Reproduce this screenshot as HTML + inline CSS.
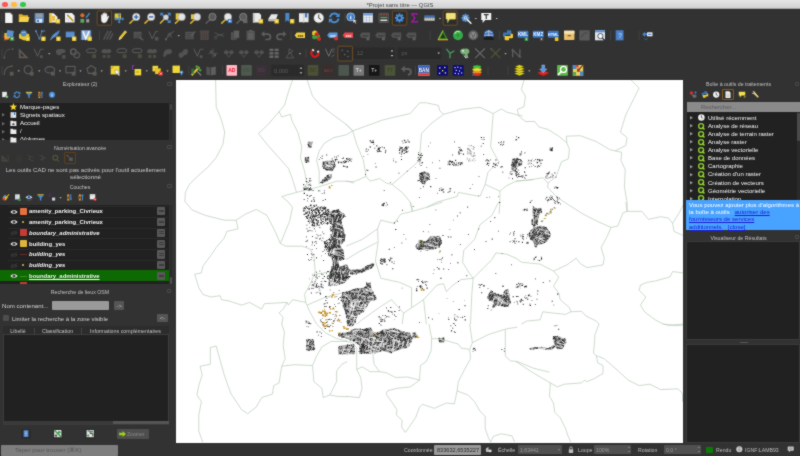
<!DOCTYPE html><html><head><meta charset="utf-8"><title>QGIS</title><style>
*{box-sizing:border-box;margin:0;padding:0}
html,body{width:800px;height:456px;overflow:hidden;background:#323232}
body{filter:url(#soft);position:relative;font-family:"Liberation Sans",sans-serif;font-size:7px;color:#bdbdbd;line-height:1}
.a{position:absolute}
.t{will-change:transform;position:absolute;white-space:nowrap;line-height:8px;height:8px}
.c{text-align:center}
.dk{background:#212121}
.ttl{color:#c2c2c2;font-size:5.25px}
.w{color:#f4f4f4}
.b{font-weight:bold}
.i{font-style:italic}
.btn{position:absolute;background:#555;border-radius:1px}
svg{position:absolute;overflow:visible}
</style></head><body>
<svg width="0" height="0" style="position:absolute"><filter id="soft" x="0" y="0" width="100%" height="100%" color-interpolation-filters="sRGB"><feConvolveMatrix order="3" kernelMatrix="1 2 1 2 16 2 1 2 1" divisor="28" edgeMode="duplicate" preserveAlpha="true"/></filter></svg>
<div class="a" style="left:0;top:0;width:800px;height:9px;background:linear-gradient(#e6e6e6,#d2d2d2);border-bottom:0.5px solid #a8a8a8"></div>
<div class="a" style="left:2.1px;top:1.7px;width:5.8px;height:5.8px;border-radius:50%;background:#fc5753"></div>
<div class="a" style="left:11.1px;top:1.7px;width:5.8px;height:5.8px;border-radius:50%;background:#fdbc40"></div>
<div class="a" style="left:20.1px;top:1.7px;width:5.8px;height:5.8px;border-radius:50%;background:#33c748"></div>
<div class="t c" style="left:300px;width:200px;top:0.6px;color:#444;font-size:5.9px">*Projet sans titre — QGIS</div>
<div class="t c ttl" style="left:0;width:160px;top:80px">Explorateur (2)</div>
<div class="a" style="left:167px;top:81.5px;width:4.5px;height:4.5px;border:0.7px solid #4a4a4a;border-radius:1px"></div>
<div class="a dk" style="left:0;top:102.5px;width:168.5px;height:37.5px;overflow:hidden">
<div class="t w" style="left:19.8px;top:0.5px;font-size:6.1px">Marque-pages</div>
<svg style="left:2.4px;top:10.899999999999999px" width="3" height="3.6" viewBox="0 0 3 3.6"><path d="M0 0L3 1.8L0 3.6Z" fill="#6e6e6e"/></svg>
<div class="t w" style="left:19.8px;top:8.6px;font-size:6.1px">Signets spatiaux</div>
<svg style="left:2.4px;top:19.0px" width="3" height="3.6" viewBox="0 0 3 3.6"><path d="M0 0L3 1.8L0 3.6Z" fill="#6e6e6e"/></svg>
<div class="t w" style="left:19.8px;top:16.7px;font-size:6.1px">Accueil</div>
<svg style="left:2.4px;top:27.099999999999998px" width="3" height="3.6" viewBox="0 0 3 3.6"><path d="M0 0L3 1.8L0 3.6Z" fill="#6e6e6e"/></svg>
<div class="t w" style="left:19.8px;top:24.799999999999997px;font-size:6.1px">/</div>
<svg style="left:2.4px;top:35.199999999999996px" width="3" height="3.6" viewBox="0 0 3 3.6"><path d="M0 0L3 1.8L0 3.6Z" fill="#6e6e6e"/></svg>
<div class="t w" style="left:19.8px;top:32.9px;font-size:6.1px">/Volumes</div>
</div>
<div class="a" style="left:169.5px;top:102.5px;width:2.6px;height:37.5px;background:#2a2a2a"></div><div class="a" style="left:169.7px;top:104px;width:2.2px;height:6px;background:#444;border-radius:1px"></div>
<div class="t c ttl" style="left:0;width:160px;top:143.5px">Numérisation avancée</div>
<div class="a" style="left:167px;top:144.5px;width:4.5px;height:4.5px;border:0.7px solid #4a4a4a;border-radius:1px"></div>
<div class="a" style="left:63.8px;top:152.3px;width:11.8px;height:11.8px;border:0.7px solid #5e3f1c;border-radius:1px"></div>
<div class="t c" style="left:0;width:171px;top:165.6px;font-size:6.1px;color:#cacaca">Les outils CAD ne sont pas activés pour l'outil actuellement</div>
<div class="t c" style="left:0;width:171px;top:172.8px;font-size:6.1px;color:#cacaca">sélectionné</div>
<div class="t c ttl" style="left:0;width:160px;top:182.8px">Couches</div>
<div class="a" style="left:167px;top:183.8px;width:4.5px;height:4.5px;border:0.7px solid #4a4a4a;border-radius:1px"></div>
<div class="a dk" style="left:0;top:204.5px;width:168.5px;height:79.8px;overflow:hidden">
<div class="a" style="left:8px;top:1.5px;width:160px;height:10.4px;border-top:0.5px solid #2b2b2b"></div>
<svg style="left:9.5px;top:4.1px" width="8" height="6" viewBox="0 0 8 6"><path d="M0.3 3 Q4 -1.2 7.7 3 Q4 7.2 0.3 3Z" fill="#e8e8e8"/><circle cx="4" cy="3" r="1.5" fill="#222"/><circle cx="4" cy="3" r="0.6" fill="#e8e8e8"/></svg>
<div class="a" style="left:19.6px;top:3.0999999999999996px;width:7.2px;height:7.2px;background:#e8703e;border-radius:0.8px"></div>
<div class="t b w" style="left:29.4px;top:2.7px;font-size:5.95px">amenity_parking_Civrieux</div>
<div class="a" style="left:157px;top:2.7px;width:8.2px;height:8.2px;background:#585858;border-radius:1px"></div><div class="a" style="left:158.6px;top:5.3px;width:5px;height:2.6px;border-top:0.6px solid #3c3c3c;border-bottom:0.6px solid #3c3c3c"></div>
<div class="a" style="left:8px;top:12.3px;width:160px;height:10.4px;border-top:0.5px solid #2b2b2b"></div>
<svg style="left:9.5px;top:14.900000000000002px" width="8" height="6" viewBox="0 0 8 6"><path d="M0.3 3 Q4 -1.2 7.7 3 Q4 7.2 0.3 3Z" fill="#e8e8e8"/><circle cx="4" cy="3" r="1.5" fill="#222"/><circle cx="4" cy="3" r="0.6" fill="#e8e8e8"/></svg>
<div class="a" style="left:22.3px;top:16.700000000000003px;width:1.7px;height:1.7px;background:#a0a040"></div>
<div class="t b w" style="left:29.4px;top:13.500000000000002px;font-size:5.95px">amenity_parking_Civrieux</div>
<div class="a" style="left:157px;top:13.500000000000002px;width:8.2px;height:8.2px;background:#585858;border-radius:1px"></div><div class="a" style="left:158.6px;top:16.1px;width:5px;height:2.6px;border-top:0.6px solid #3c3c3c;border-bottom:0.6px solid #3c3c3c"></div>
<div class="a" style="left:8px;top:23.1px;width:160px;height:10.4px;border-top:0.5px solid #2b2b2b"></div>
<svg style="left:9.5px;top:25.7px" width="8" height="6" viewBox="0 0 8 6"><path d="M0.3 3 Q4 -1.2 7.7 3 Q4 7.2 0.3 3Z" fill="#3a3a3a"/><circle cx="4" cy="3" r="1.5" fill="#222"/><circle cx="4" cy="3" r="0.6" fill="#3a3a3a"/><path d="M1 5.6L7 0.4" stroke="#3a3a3a" stroke-width="0.8"/></svg>
<div class="a" style="left:19.6px;top:24.7px;width:7.2px;height:7.2px;background:#c83a35;border-radius:0.8px"></div>
<div class="t b w i" style="left:29.4px;top:24.3px;font-size:5.95px">boundary_administrative</div>
<div class="a" style="left:157px;top:24.3px;width:8.2px;height:8.2px;background:#585858;border-radius:1px"></div><div class="a" style="left:158.6px;top:26.9px;width:5px;height:2.6px;border-top:0.6px solid #3c3c3c;border-bottom:0.6px solid #3c3c3c"></div>
<div class="a" style="left:8px;top:33.900000000000006px;width:160px;height:10.4px;border-top:0.5px solid #2b2b2b"></div>
<svg style="left:9.5px;top:36.50000000000001px" width="8" height="6" viewBox="0 0 8 6"><path d="M0.3 3 Q4 -1.2 7.7 3 Q4 7.2 0.3 3Z" fill="#e8e8e8"/><circle cx="4" cy="3" r="1.5" fill="#222"/><circle cx="4" cy="3" r="0.6" fill="#e8e8e8"/></svg>
<div class="a" style="left:19.6px;top:35.50000000000001px;width:7.2px;height:7.2px;background:#dfb53a;border-radius:0.8px"></div>
<div class="t b w" style="left:29.4px;top:35.1px;font-size:5.95px">building_yes</div>
<div class="a" style="left:157px;top:35.1px;width:8.2px;height:8.2px;background:#585858;border-radius:1px"></div><div class="a" style="left:158.6px;top:37.7px;width:5px;height:2.6px;border-top:0.6px solid #3c3c3c;border-bottom:0.6px solid #3c3c3c"></div>
<div class="a" style="left:8px;top:44.7px;width:160px;height:10.4px;border-top:0.5px solid #2b2b2b"></div>
<svg style="left:9.5px;top:47.300000000000004px" width="8" height="6" viewBox="0 0 8 6"><path d="M0.3 3 Q4 -1.2 7.7 3 Q4 7.2 0.3 3Z" fill="#3a3a3a"/><circle cx="4" cy="3" r="1.5" fill="#222"/><circle cx="4" cy="3" r="0.6" fill="#3a3a3a"/><path d="M1 5.6L7 0.4" stroke="#3a3a3a" stroke-width="0.8"/></svg>
<div class="a" style="left:19.6px;top:49.5px;width:7.2px;height:0.8px;background:#6a2828"></div>
<div class="t b w i" style="left:29.4px;top:45.9px;font-size:5.95px">building_yes</div>
<div class="a" style="left:157px;top:45.9px;width:8.2px;height:8.2px;background:#585858;border-radius:1px"></div><div class="a" style="left:158.6px;top:48.5px;width:5px;height:2.6px;border-top:0.6px solid #3c3c3c;border-bottom:0.6px solid #3c3c3c"></div>
<div class="a" style="left:8px;top:55.5px;width:160px;height:10.4px;border-top:0.5px solid #2b2b2b"></div>
<svg style="left:9.5px;top:58.1px" width="8" height="6" viewBox="0 0 8 6"><path d="M0.3 3 Q4 -1.2 7.7 3 Q4 7.2 0.3 3Z" fill="#3a3a3a"/><circle cx="4" cy="3" r="1.5" fill="#222"/><circle cx="4" cy="3" r="0.6" fill="#3a3a3a"/><path d="M1 5.6L7 0.4" stroke="#3a3a3a" stroke-width="0.8"/></svg>
<div class="a" style="left:22.3px;top:59.9px;width:1.7px;height:1.7px;background:#b89830"></div>
<div class="t b w i" style="left:29.4px;top:56.699999999999996px;font-size:5.95px">building_yes</div>
<div class="a" style="left:157px;top:56.699999999999996px;width:8.2px;height:8.2px;background:#585858;border-radius:1px"></div><div class="a" style="left:158.6px;top:59.3px;width:5px;height:2.6px;border-top:0.6px solid #3c3c3c;border-bottom:0.6px solid #3c3c3c"></div>
<div class="a" style="left:0;top:65.70000000000002px;width:168.5px;height:11.2px;background:#0d6902"></div>
<svg style="left:9.5px;top:68.90000000000002px" width="8" height="6" viewBox="0 0 8 6"><path d="M0.3 3 Q4 -1.2 7.7 3 Q4 7.2 0.3 3Z" fill="#e8e8e8"/><circle cx="4" cy="3" r="1.5" fill="#222"/><circle cx="4" cy="3" r="0.6" fill="#e8e8e8"/></svg>
<div class="a" style="left:19.6px;top:71.10000000000002px;width:7.2px;height:0.8px;background:#3a8a2a"></div>
<div class="t b w" style="left:29.4px;top:67.50000000000001px;font-size:5.95px;text-decoration:underline">boundary_administrative</div>
<div class="a" style="left:157px;top:67.50000000000001px;width:8.2px;height:8.2px;background:#585858;border-radius:1px"></div><div class="a" style="left:158.6px;top:70.10000000000002px;width:5px;height:2.6px;border-top:0.6px solid #3c3c3c;border-bottom:0.6px solid #3c3c3c"></div>
<div class="a" style="left:19.6px;top:77.6px;width:7.2px;height:3px;background:#c83a35"></div>
</div>
<div class="a" style="left:169.5px;top:204.5px;width:2.6px;height:79.8px;background:#2a2a2a"></div><div class="a" style="left:169.7px;top:277px;width:2.2px;height:7px;background:#505050;border-radius:1px"></div>
<div class="t c ttl" style="left:0;width:160px;top:287.8px">Recherche de lieux OSM</div>
<div class="a" style="left:167px;top:288.6px;width:4px;height:4px;border:0.7px solid #4a4a4a;border-radius:1px"></div>
<div class="t" style="left:2.2px;top:301.6px;font-size:6.1px;color:#d2d2d2">Nom contenant...</div>
<div class="a" style="left:52.3px;top:301px;width:57px;height:9.2px;background:#9a9a9a;border-radius:1px"></div>
<div class="btn" style="left:113.5px;top:301px;width:10.5px;height:9.2px"></div><div class="t c" style="left:113.5px;width:10.5px;top:301.5px;font-size:6px;color:#bcbcbc">-&gt;</div>
<div class="a" style="left:2.8px;top:315.4px;width:5.8px;height:5.8px;background:#4d4d4d;border-radius:1px"></div>
<div class="t" style="left:12px;top:314.6px;font-size:5.95px;color:#d2d2d2">Limiter la recherche à la zone visible</div>
<div class="btn" style="left:157.2px;top:313.8px;width:11.2px;height:8.4px"></div><div class="t c" style="left:157.2px;width:11.2px;top:314px;font-size:6px;color:#bcbcbc">&lt;-</div>
<div class="a dk" style="left:2.7px;top:325.6px;width:166.5px;height:99.4px;border:0.5px solid #3c3c3c"></div>
<div class="a" style="left:3.2px;top:326px;width:165.6px;height:9.2px;background:#2c2c2c;border-bottom:0.5px solid #3c3c3c"></div>
<div class="a" style="left:33.5px;top:327.5px;width:0.6px;height:6.5px;background:#444"></div><div class="a" style="left:81px;top:327.5px;width:0.6px;height:6.5px;background:#444"></div>
<div class="t c" style="left:3px;width:30px;top:326.8px;font-size:5.3px;color:#c4c4c4">Libellé</div>
<div class="t c" style="left:34px;width:47px;top:326.8px;font-size:5.3px;color:#c4c4c4">Classification</div>
<div class="t c" style="left:82px;width:87px;top:326.8px;font-size:5.3px;color:#c4c4c4">Informations complémentaires</div>
<div class="a" style="left:3.2px;top:421.2px;width:165.6px;height:2.6px;background:#555"></div><div class="a" style="left:3.2px;top:421.2px;width:110px;height:2.6px;background:#3a3a3a"></div>
<div class="btn" style="left:20.8px;top:428.6px;width:10.4px;height:10px;background:#2b2b2b"></div>
<div class="btn" style="left:52.6px;top:428.6px;width:10.4px;height:10px;background:#2b2b2b"></div>
<div class="btn" style="left:85px;top:428.6px;width:10.4px;height:10px;background:#2b2b2b"></div>
<div class="btn" style="left:117px;top:429px;width:31.8px;height:9.6px;background:#4e4e4e"></div>
<div class="t" style="left:127px;top:430px;font-size:5.1px;color:#8a8a8a">Zoomer</div>
<svg style="left:118.6px;top:430.6px" width="7" height="6" viewBox="0 0 7 6"><path d="M0 1.8H3.6V0L7 3L3.6 6V4.2H0Z" fill="#a6d32c" stroke="#5a8a10" stroke-width="0.4"/></svg>
<div class="a" style="left:1px;top:445.4px;width:116.6px;height:10.6px;background:#7e7e7e;border-radius:1px"></div>
<div class="t" style="left:14.8px;top:446.4px;font-size:6.2px;color:#555">Taper pour trouver (⌘K)</div>
<div class="t c ttl" style="left:688px;width:101px;top:79.8px">Boîte à outils de traitements</div>
<div class="a" style="left:794.5px;top:81.5px;width:4.5px;height:4.5px;border:0.7px solid #4a4a4a;border-radius:1px"></div>
<div class="a" style="left:722.2px;top:88.8px;width:11.6px;height:11.6px;border:0.7px solid #8a5818;border-radius:1px"></div>
<div class="a" style="left:686.6px;top:102.3px;width:113.4px;height:9.6px;background:#8a8a8a"></div>
<div class="t" style="left:700.5px;top:103.3px;font-size:5.9px;color:#5a5a5a">Rechercher...</div>
<div class="a dk" style="left:686.6px;top:111.7px;width:110px;height:88.5px;overflow:hidden">
<svg style="left:3.6px;top:4.4px" width="3" height="3.6" viewBox="0 0 3 3.6"><path d="M0 0L3 1.8L0 3.6Z" fill="#9a9a9a"/></svg>
<svg style="left:11.3px;top:2.8000000000000003px" width="6.8" height="6.8" viewBox="0 0 10 10"><circle cx="5" cy="5" r="4.8" fill="#eee"/><path d="M5 2V5.2L7 6.4" stroke="#333" stroke-width="1.1" fill="none"/></svg>
<div class="t w" style="left:21px;top:2.2px;font-size:6.05px">Utilisé récemment</div>
<svg style="left:3.6px;top:12.48px" width="3" height="3.6" viewBox="0 0 3 3.6"><path d="M0 0L3 1.8L0 3.6Z" fill="#9a9a9a"/></svg>
<svg style="left:11.3px;top:10.88px" width="6.8" height="6.8" viewBox="0 0 10 10"><circle cx="4.6" cy="4.6" r="3.6" fill="#222" stroke="#8fd02a" stroke-width="2"/><path d="M6 6L9.5 9.5" stroke="#8fd02a" stroke-width="2.2"/></svg>
<div class="t w" style="left:21px;top:10.280000000000001px;font-size:6.05px">Analyse de réseau</div>
<svg style="left:3.6px;top:20.56px" width="3" height="3.6" viewBox="0 0 3 3.6"><path d="M0 0L3 1.8L0 3.6Z" fill="#9a9a9a"/></svg>
<svg style="left:11.3px;top:18.96px" width="6.8" height="6.8" viewBox="0 0 10 10"><circle cx="4.6" cy="4.6" r="3.6" fill="#222" stroke="#8fd02a" stroke-width="2"/><path d="M6 6L9.5 9.5" stroke="#8fd02a" stroke-width="2.2"/></svg>
<div class="t w" style="left:21px;top:18.36px;font-size:6.05px">Analyse de terrain raster</div>
<svg style="left:3.6px;top:28.64px" width="3" height="3.6" viewBox="0 0 3 3.6"><path d="M0 0L3 1.8L0 3.6Z" fill="#9a9a9a"/></svg>
<svg style="left:11.3px;top:27.040000000000003px" width="6.8" height="6.8" viewBox="0 0 10 10"><circle cx="4.6" cy="4.6" r="3.6" fill="#222" stroke="#8fd02a" stroke-width="2"/><path d="M6 6L9.5 9.5" stroke="#8fd02a" stroke-width="2.2"/></svg>
<div class="t w" style="left:21px;top:26.44px;font-size:6.05px">Analyse raster</div>
<svg style="left:3.6px;top:36.720000000000006px" width="3" height="3.6" viewBox="0 0 3 3.6"><path d="M0 0L3 1.8L0 3.6Z" fill="#9a9a9a"/></svg>
<svg style="left:11.3px;top:35.120000000000005px" width="6.8" height="6.8" viewBox="0 0 10 10"><circle cx="4.6" cy="4.6" r="3.6" fill="#222" stroke="#8fd02a" stroke-width="2"/><path d="M6 6L9.5 9.5" stroke="#8fd02a" stroke-width="2.2"/></svg>
<div class="t w" style="left:21px;top:34.52px;font-size:6.05px">Analyse vectorielle</div>
<svg style="left:3.6px;top:44.800000000000004px" width="3" height="3.6" viewBox="0 0 3 3.6"><path d="M0 0L3 1.8L0 3.6Z" fill="#9a9a9a"/></svg>
<svg style="left:11.3px;top:43.2px" width="6.8" height="6.8" viewBox="0 0 10 10"><circle cx="4.6" cy="4.6" r="3.6" fill="#222" stroke="#8fd02a" stroke-width="2"/><path d="M6 6L9.5 9.5" stroke="#8fd02a" stroke-width="2.2"/></svg>
<div class="t w" style="left:21px;top:42.6px;font-size:6.05px">Base de données</div>
<svg style="left:3.6px;top:52.88000000000001px" width="3" height="3.6" viewBox="0 0 3 3.6"><path d="M0 0L3 1.8L0 3.6Z" fill="#9a9a9a"/></svg>
<svg style="left:11.3px;top:51.28000000000001px" width="6.8" height="6.8" viewBox="0 0 10 10"><circle cx="4.6" cy="4.6" r="3.6" fill="#222" stroke="#8fd02a" stroke-width="2"/><path d="M6 6L9.5 9.5" stroke="#8fd02a" stroke-width="2.2"/></svg>
<div class="t w" style="left:21px;top:50.68000000000001px;font-size:6.05px">Cartographie</div>
<svg style="left:3.6px;top:60.96000000000001px" width="3" height="3.6" viewBox="0 0 3 3.6"><path d="M0 0L3 1.8L0 3.6Z" fill="#9a9a9a"/></svg>
<svg style="left:11.3px;top:59.36000000000001px" width="6.8" height="6.8" viewBox="0 0 10 10"><circle cx="4.6" cy="4.6" r="3.6" fill="#222" stroke="#8fd02a" stroke-width="2"/><path d="M6 6L9.5 9.5" stroke="#8fd02a" stroke-width="2.2"/></svg>
<div class="t w" style="left:21px;top:58.760000000000005px;font-size:6.05px">Création d'un raster</div>
<svg style="left:3.6px;top:69.04px" width="3" height="3.6" viewBox="0 0 3 3.6"><path d="M0 0L3 1.8L0 3.6Z" fill="#9a9a9a"/></svg>
<svg style="left:11.3px;top:67.44px" width="6.8" height="6.8" viewBox="0 0 10 10"><circle cx="4.6" cy="4.6" r="3.6" fill="#222" stroke="#8fd02a" stroke-width="2"/><path d="M6 6L9.5 9.5" stroke="#8fd02a" stroke-width="2.2"/></svg>
<div class="t w" style="left:21px;top:66.84px;font-size:6.05px">Création de vecteurs</div>
<svg style="left:3.6px;top:77.12px" width="3" height="3.6" viewBox="0 0 3 3.6"><path d="M0 0L3 1.8L0 3.6Z" fill="#9a9a9a"/></svg>
<svg style="left:11.3px;top:75.52px" width="6.8" height="6.8" viewBox="0 0 10 10"><circle cx="4.6" cy="4.6" r="3.6" fill="#222" stroke="#8fd02a" stroke-width="2"/><path d="M6 6L9.5 9.5" stroke="#8fd02a" stroke-width="2.2"/></svg>
<div class="t w" style="left:21px;top:74.92px;font-size:6.05px">Géométrie vectorielle</div>
<svg style="left:3.6px;top:85.2px" width="3" height="3.6" viewBox="0 0 3 3.6"><path d="M0 0L3 1.8L0 3.6Z" fill="#9a9a9a"/></svg>
<svg style="left:11.3px;top:83.6px" width="6.8" height="6.8" viewBox="0 0 10 10"><circle cx="4.6" cy="4.6" r="3.6" fill="#222" stroke="#8fd02a" stroke-width="2"/><path d="M6 6L9.5 9.5" stroke="#8fd02a" stroke-width="2.2"/></svg>
<div class="t w" style="left:21px;top:83.0px;font-size:6.05px">Interpolation</div>
</div>
<div class="a" style="left:796.6px;top:111.7px;width:3.4px;height:88.5px;background:#2a2a2a"></div><div class="a" style="left:797.2px;top:112.5px;width:2.4px;height:28px;background:#4a4a4a;border-radius:1px"></div>
<div class="a" style="left:685.8px;top:200.2px;width:114.2px;height:29.6px;background:#48a2ff"></div>
<div class="t" style="left:689px;top:201.2px;font-size:6.05px;color:#fff">Vous pouvez ajouter plus d'algorithmes à</div>
<div class="t" style="left:689px;top:208.3px;font-size:6.05px;color:#fff">la boîte à outils : <span style="color:#1a1ad8;text-decoration:underline">autoriser des</span></div>
<div class="t" style="left:689px;top:215.4px;font-size:6.05px;color:#fff"><span style="color:#1a1ad8;text-decoration:underline">fournisseurs de services</span></div>
<div class="t" style="left:689px;top:222.5px;font-size:6.05px;color:#fff"><span style="color:#1a1ad8;text-decoration:underline">additionnels.</span>&nbsp;&nbsp;&nbsp;<span style="color:#1a1ad8;text-decoration:underline">[close]</span></div>
<div class="t c ttl" style="left:688px;width:101px;top:233.6px">Visualiseur de Résultats</div>
<div class="a" style="left:795px;top:235px;width:4px;height:4px;border:0.7px solid #4a4a4a;border-radius:1px"></div>
<div class="a dk" style="left:686.4px;top:241.4px;width:113.6px;height:98.6px;border:0.5px solid #3a3a3a"></div>
<div class="a" style="left:740px;top:341.6px;width:8px;height:1px;background:#555"></div>
<div class="a dk" style="left:686.4px;top:344.2px;width:113.6px;height:98.4px;border:0.5px solid #3a3a3a"></div>
<div class="t" style="left:403.6px;top:446.2px;font-size:5.2px;color:#bcbcbc">Coordonnée</div>
<div class="a" style="left:433.8px;top:445.4px;width:47.4px;height:9.2px;background:#999;border-radius:1px"></div>
<div class="t" style="left:437px;top:446.2px;font-size:5.6px;color:#2a2a2a">833632,6535227</div>
<div class="t" style="left:498px;top:446.2px;font-size:5.2px;color:#bcbcbc">Échelle</div>
<div class="a" style="left:517.5px;top:445.2px;width:44.6px;height:9.2px;background:#505050;border-radius:1px"></div>
<div class="t" style="left:519.5px;top:446.2px;font-size:5.2px;color:#9c9c9c">1:63441</div>
<div class="a" style="left:558px;top:449px;border-top:2px solid #888;border-left:1.4px solid transparent;border-right:1.4px solid transparent"></div>
<div class="t" style="left:578.4px;top:446.2px;font-size:5.2px;color:#bcbcbc">Loupe</div>
<div class="a" style="left:594px;top:445.2px;width:37px;height:9.2px;background:#505050;border-radius:1px"></div>
<div class="t" style="left:596px;top:446.2px;font-size:5.2px;color:#9c9c9c">100%</div>
<div class="t" style="left:638px;top:446.2px;font-size:5.2px;color:#bcbcbc">Rotation</div>
<div class="a" style="left:663.5px;top:445.2px;width:37.6px;height:9.2px;background:#505050;border-radius:1px"></div>
<div class="t" style="left:665.5px;top:446.2px;font-size:5.2px;color:#9c9c9c">0,0 °</div>
<div class="a" style="left:628px;top:446.8px;border-bottom:1.8px solid #aaa;border-left:1.3px solid transparent;border-right:1.3px solid transparent"></div>
<div class="a" style="left:628px;top:451px;border-top:1.8px solid #aaa;border-left:1.3px solid transparent;border-right:1.3px solid transparent"></div>
<div class="a" style="left:698px;top:446.8px;border-bottom:1.8px solid #aaa;border-left:1.3px solid transparent;border-right:1.3px solid transparent"></div>
<div class="a" style="left:698px;top:451px;border-top:1.8px solid #aaa;border-left:1.3px solid transparent;border-right:1.3px solid transparent"></div>
<div class="a" style="left:706.4px;top:446.6px;width:6.4px;height:6.4px;background:#0c7a06;border-radius:0.8px"></div>
<div class="t" style="left:716px;top:446.2px;font-size:5.2px;color:#bcbcbc">Rendu</div>
<svg style="left:736.4px;top:446.4px" width="6.6" height="6.6" viewBox="0 0 10 10"><circle cx="5" cy="5" r="4.6" fill="#ddd"/><path d="M0.6 5H9.4M5 .5V9.5M2 2.2Q5 3.8 8 2.2M2 7.8Q5 6.2 8 7.8" stroke="#777" stroke-width="0.7" fill="none"/></svg>
<div class="t" style="left:745px;top:446.2px;font-size:5.2px;color:#bcbcbc">IGNF:LAMB93</div>
<svg style="left:786.8px;top:446.4px" width="7.4" height="6.8" viewBox="0 0 11 10"><path d="M1 1.5Q1 .5 2 .5H9Q10 .5 10 1.5V6Q10 7 9 7H5L3 9.2V7H2Q1 7 1 6Z" fill="#c8c8c8"/><path d="M3 3H8M3 4.8H8" stroke="#666" stroke-width=".7"/></svg>
<svg style="left:484.6px;top:446.2px" width="7" height="7" viewBox="0 0 10 10"><path d="M1 6Q1 2 4 2L5 1V4.5L8 8.5H2Z" fill="#bbb"/><circle cx="7.5" cy="7" r="2" fill="#ddd"/></svg>
<svg style="left:567.6px;top:446px" width="6" height="7.4" viewBox="0 0 8 10"><rect x="1" y="4.4" width="6" height="5" rx=".8" fill="#bdbdbd"/><path d="M2.3 4.4V3Q2.3 1 4 1Q5.7 1 5.7 3V4.4" stroke="#bdbdbd" stroke-width="1.1" fill="none"/></svg>
<svg style="left:0;top:0" width="800" height="80" viewBox="0 0 800 80"><rect x="97.2" y="11" width="14.399999999999991" height="14.2" rx="1" fill="#2c2c2c" stroke="#8a5a1e" stroke-width=".7"/><rect x="392.4" y="11" width="14.400000000000034" height="14.2" rx="1" fill="#2c2c2c" stroke="#8a5a1e" stroke-width=".7"/><rect x="443.2" y="11" width="14.0" height="14.2" rx="1" fill="#2c2c2c" stroke="#8a5a1e" stroke-width=".7"/><rect x="337.8" y="46.2" width="14.599999999999966" height="14.799999999999997" rx="1" fill="#2c2c2c" stroke="#8a5a1e" stroke-width=".7"/><path d="M345 13.399999999999999V22.4" stroke="#484848" stroke-width=".7"/><path d="M99.5 30.799999999999997V39.8" stroke="#484848" stroke-width=".7"/><path d="M291 30.799999999999997V39.8" stroke="#484848" stroke-width=".7"/><path d="M430 30.799999999999997V39.8" stroke="#484848" stroke-width=".7"/><path d="M499.5 30.799999999999997V39.8" stroke="#484848" stroke-width=".7"/><path d="M610.5 30.799999999999997V39.8" stroke="#484848" stroke-width=".7"/><path d="M639 30.799999999999997V39.8" stroke="#484848" stroke-width=".7"/><path d="M306 48.8V57.8" stroke="#484848" stroke-width=".7"/><path d="M188.75 65.9V74.9" stroke="#484848" stroke-width=".7"/><path d="M222.5 65.9V74.9" stroke="#484848" stroke-width=".7"/><path d="M415.5 65.9V74.9" stroke="#484848" stroke-width=".7"/><path d="M488 65.9V74.9" stroke="#484848" stroke-width=".7"/><path d="M508 65.9V74.9" stroke="#484848" stroke-width=".7"/><path d="M2 13.399999999999999V22.4" stroke="#484848" stroke-width=".7"/><path d="M2 30.799999999999997V39.8" stroke="#484848" stroke-width=".7"/><path d="M2 48.8V57.8" stroke="#484848" stroke-width=".7"/><path d="M2 65.9V74.9" stroke="#484848" stroke-width=".7"/><path d="M438.9 17.9h2.2l-1.1 1.3z" fill="#cfcfcf"/><path d="M474.65 17.9h2.2l-1.1 1.3z" fill="#cfcfcf"/><path d="M495.65 17.9h2.2l-1.1 1.3z" fill="#cfcfcf"/><path d="M177.65 35.3h2.2l-1.1 1.3z" fill="#cfcfcf"/><path d="M48.15 53.3h2.2l-1.1 1.3z" fill="#cfcfcf"/><path d="M298.9 53.3h2.2l-1.1 1.3z" fill="#cfcfcf"/><path d="M504.4 53.3h2.2l-1.1 1.3z" fill="#cfcfcf"/><path d="M17.65 70.4h2.2l-1.1 1.3z" fill="#cfcfcf"/><path d="M38.15 70.4h2.2l-1.1 1.3z" fill="#cfcfcf"/><path d="M58.9 70.4h2.2l-1.1 1.3z" fill="#cfcfcf"/><path d="M79.4 70.4h2.2l-1.1 1.3z" fill="#cfcfcf"/><path d="M100.65 70.4h2.2l-1.1 1.3z" fill="#cfcfcf"/><path d="M124.65 70.4h2.2l-1.1 1.3z" fill="#cfcfcf"/><path d="M145.65 70.4h2.2l-1.1 1.3z" fill="#cfcfcf"/><path d="M166.4 70.4h2.2l-1.1 1.3z" fill="#cfcfcf"/><path d="M528.15 70.4h2.2l-1.1 1.3z" fill="#cfcfcf"/><g transform="translate(8.75 17.9)"><path d="M-3.6 -5.2H1.6L3.8 -3V5.2H-3.6Z" fill="#f4f4f4"/><path d="M1.6 -5.2V-3H3.8Z" fill="#c8c8c8"/></g><g transform="translate(23.75 17.9)"><path d="M-5 -3.6H-1.6L-.6 -2.6H4.4V4H-5Z" fill="#e0b030"/><path d="M-5 4L-3.4 -1H5.6L4.4 4Z" fill="#f6d24a"/></g><g transform="translate(39.25 17.9)"><rect x="-4.6" y="-4.8" width="9.2" height="9.6" rx=".8" fill="#5b8fd0"/><rect x="-3" y="-4" width="6" height="3.6" fill="#9a9a9a"/><rect x="-3" y="1" width="6" height="3.8" fill="#dfe8f4"/><rect x="-2" y="1.8" width="1.6" height="2.2" fill="#3a5a8a"/></g><g transform="translate(54.5 17.9)"><path d="M-5 -4.6H-.8L3 -1V4.6H-5Z" fill="#f0f0f0"/><path d="M-5.2 -4.8H-2.8V4.8H-5.2Z" fill="#e8c040"/><path d="M-2.8 -2H.6V3H-2.8Z" fill="#e8c040"/><rect x="1.2" y="1.2" width="4.4" height="4.4" rx=".6" fill="#e8c832"/><rect x="2.6" y="2.6" width="1.6" height="1.6" fill="#fff8c0"/></g><g transform="translate(70 17.9)"><path d="M-5 -4.8H2L4.6 -2.2V4.6H-5Z" fill="#eef2f8"/><path d="M-2.4 -2.6L3.4 3.2" stroke="#c8a020" stroke-width="1.8"/><path d="M-3.4 -3.6L-1.4 -2.8L-2.6 -1.6Z" fill="#888"/><path d="M-4 0L-1 3" stroke="#aab8d0" stroke-width=".8"/></g><g transform="translate(85 17.9)"><circle cx="-2.6" cy="-2.6" r="2.1" fill="#e06a2a"/><rect x="-4.6" y="1" width="3.8" height="3.8" fill="#5aa860"/><path d="M4.6 -4.8L1 0" stroke="#4a88c8" stroke-width="1.5"/><rect x="1.2" y="1.2" width="3" height="3.4" fill="#9a9a9a"/></g><g transform="translate(104.5 17.9)"><path d="M-3.4 1.2V-2.6Q-3.4 -3.4 -2.6 -3.4Q-1.9 -3.4 -1.9 -2.6V-4.2Q-1.9 -5 -1.1 -5Q-.4 -5 -.4 -4.2V-4.6Q-.4 -5.4 .4 -5.4Q1.1 -5.4 1.1 -4.6V-3.8Q1.1 -4.6 1.9 -4.6Q2.6 -4.6 2.6 -3.8V-1L3.4 -1.8Q4.2 -2.4 4.6 -1.6L2.6 3.2Q2 5 0 5H-1Q-3.4 5 -3.4 1.2Z" fill="#f2f2f2" stroke="#8a8a8a" stroke-width=".4"/></g><g transform="translate(119.25 17.9)"><rect x="-4.6" y="-4.4" width="6.4" height="6" fill="#e8c832"/><path d="M0 -3V5M-4 1H4" stroke="#4a88c8" stroke-width="1.3"/><path d="M0 -4.6L1.8 -2.4H-1.8ZM0 5.6L1.8 3.6H-1.8ZM5 1L3 2.8V-.8ZM-5 1L-3 2.8V-.8Z" fill="#4a88c8"/></g><g transform="translate(135 17.9)"><path d="M-1.2 1.6L-5 5.2" stroke="#d8b030" stroke-width="1.6" stroke-linecap="round"/><circle cx="1.2" cy="-1" r="3.7" fill="#e8e8e8" stroke="#9a9a9a" stroke-width=".6"/><path d="M-.9 -1H3.3M1.2 -3.1V1.1" stroke="#3a70b8" stroke-width="1.5"/></g><g transform="translate(150 17.9)"><path d="M-1.2 1.6L-5 5.2" stroke="#d8b030" stroke-width="1.6" stroke-linecap="round"/><circle cx="1.2" cy="-1" r="3.7" fill="#e8e8e8" stroke="#9a9a9a" stroke-width=".6"/><path d="M-.9 -1H3.3" stroke="#3a70b8" stroke-width="1.5"/></g><g transform="translate(165.5 17.9)"><path d="M-4.6 4.6L4.6 -4.6M-4.6 -4.6L4.6 4.6" stroke="#4a88c8" stroke-width="1.4"/><path d="M-5.2 -5.2H-1.6L-5.2 -1.6ZM5.2 -5.2V-1.6L1.6 -5.2ZM5.2 5.2H1.6L5.2 1.6Z" fill="#4a88c8"/><circle cx=".4" cy="-.6" r="2.6" fill="#d0d8e4" stroke="#9a9a9a" stroke-width=".5"/><path d="M-1.6 1.6L-5 5.2" stroke="#d8b030" stroke-width="1.5" stroke-linecap="round"/></g><g transform="translate(180.5 17.9)"><rect x="-4.8" y="-4.6" width="5" height="6.4" fill="#e8c832"/><path d="M-1.2 1.6L-5 5.2" stroke="#d8b030" stroke-width="1.6" stroke-linecap="round"/><circle cx="1.2" cy="-1" r="3.7" fill="#e4e4e4" stroke="#9a9a9a" stroke-width=".6"/></g><g transform="translate(195.75 17.9)"><rect x="-4.8" y="-3.6" width="4" height="5" fill="#e8c832"/><path d="M-1.2 1.6L-5 5.2" stroke="#d8b030" stroke-width="1.6" stroke-linecap="round"/><circle cx="1.2" cy="-1" r="3.7" fill="#dcdcdc" stroke="#9a9a9a" stroke-width=".6"/></g><g transform="translate(211.25 17.9)"><path d="M-1.2 1.6L-5 5.2" stroke="#5a5a5a" stroke-width="1.6" stroke-linecap="round"/><circle cx="1.2" cy="-1" r="3.7" fill="#5a5a5a" stroke="#9a9a9a" stroke-width=".6"/><text x="1.2" y=".6" font-size="3.6" text-anchor="middle" fill="#555">1:1</text></g><g transform="translate(226.75 17.9)"><path d="M-1.2 1.6L-5 5.2" stroke="#d8b030" stroke-width="1.6" stroke-linecap="round"/><circle cx="1.2" cy="-1" r="3.7" fill="#e8e8e8" stroke="#9a9a9a" stroke-width=".6"/><rect x="1" y="1.2" width="4.4" height="4" fill="#3a78c8"/><path d="M4.6 3.2H2.4M3.2 2.2L2.2 3.2L3.2 4.2" stroke="#fff" stroke-width=".7" fill="none"/></g><g transform="translate(242 17.9)"><path d="M-1.2 1.6L-5 5.2" stroke="#5c5c5c" stroke-width="1.6" stroke-linecap="round"/><circle cx="1.2" cy="-1" r="3.7" fill="#5c5c5c" stroke="#9a9a9a" stroke-width=".6"/><rect x="1" y="1.2" width="4.4" height="4" fill="#666"/></g><g transform="translate(257.5 17.9)"><path d="M-4.6 -4.8H1.6L3.6 -2.8V4.6H-4.6Z" fill="#eaeaea"/><path d="M-4.6 -4.8H-2.6V4.6H-4.6Z" fill="#c8c8c8"/><rect x="1.2" y="1.2" width="4.4" height="4.4" rx=".6" fill="#e8c832"/><rect x="2.6" y="2.6" width="1.6" height="1.6" fill="#fff8c0"/></g><g transform="translate(273.25 17.9)"><path d="M-5 1L-2 -3.6H4.6L3 1Z" fill="#e8e8e8"/><path d="M-5 1H3V3.4H-5Z" fill="#b8b8b8"/><rect x="1.2" y="1.2" width="4.4" height="4.4" rx=".6" fill="#e8c832"/><rect x="2.6" y="2.6" width="1.6" height="1.6" fill="#fff8c0"/></g><g transform="translate(288.75 17.9)"><path d="M-3.4 -5H.6V4L-1.4 2.4L-3.4 4Z" fill="#4a88c8"/><rect x="1.2" y="1.2" width="4.4" height="4.4" rx=".6" fill="#e8c832"/><rect x="2.6" y="2.6" width="1.6" height="1.6" fill="#fff8c0"/></g><g transform="translate(303.75 17.9)"><path d="M-4.8 -4.6H4.8V4.4H.6L0 5L-.6 4.4H-4.8Z" fill="#e8e8e8"/><path d="M0 -4.6V4.6" stroke="#aaa" stroke-width=".5"/><path d="M1.2 -5H3.4V0L2.3 -1L1.2 0Z" fill="#3a78c8"/></g><g transform="translate(318.75 17.9)"><circle r="4.9" fill="#f0f0f0" stroke="#aaa" stroke-width=".5"/><path d="M0 -3.4V.2L2.4 1.6" stroke="#444" stroke-width="1" fill="none"/></g><g transform="translate(334.25 17.9)"><path d="M-4.2 -.6A4.3 4.3 0 0 1 3.6 -2.6" stroke="#4a90d8" stroke-width="1.9" fill="none"/><path d="M4.2 .6A4.3 4.3 0 0 1 -3.6 2.6" stroke="#4a90d8" stroke-width="1.9" fill="none"/><path d="M5.4 -5V-.8H1.4ZM-5.4 5V.8H-1.4Z" fill="#4a90d8"/></g><g transform="translate(351.75 17.9)"><circle cx="-1" cy="-1" r="4" fill="#3a80d0" stroke="#d8e4f4" stroke-width=".6"/><path d="M-1 -1.6V1.4M-1 -3.2V-2.6" stroke="#fff" stroke-width="1.2"/><path d="M1.2 1L5.2 3L3.4 3.6L4.6 5.4L3.8 5.8L2.8 4L1.6 5Z" fill="#f4f4f4" stroke="#444" stroke-width=".3"/></g><g transform="translate(368 17.9)"><rect x="-4.8" y="-4.6" width="9.6" height="9.2" fill="#f0f0f0"/><rect x="-4.8" y="-4.6" width="9.6" height="2.2" fill="#6a9ad8"/><path d="M-1.6 -4.6V4.6M1.6 -4.6V4.6M-4.8 -.2H4.8M-4.8 2.2H4.8" stroke="#8aa8d0" stroke-width=".5"/></g><g transform="translate(383.75 17.9)"><rect x="-4.8" y="-4.6" width="9.6" height="9.2" rx=".6" fill="#3a3a3a" stroke="#777" stroke-width=".5"/><path d="M-3.4 -3H-1.6M-.6 -3H1M2 -3H3.6" stroke="#d05a4a" stroke-width="1"/><path d="M-3.4 -.4H3.6" stroke="#5aa860" stroke-width="1.2"/><path d="M-3.4 2.4H3.6" stroke="#ddd" stroke-width="1.6"/></g><g transform="translate(399.5 17.9)"><path d="M0 0L4.60 0.00" stroke="#4a90e0" stroke-width="1.9"/><path d="M0 0L3.25 3.25" stroke="#4a90e0" stroke-width="1.9"/><path d="M0 0L0.00 4.60" stroke="#4a90e0" stroke-width="1.9"/><path d="M0 0L-3.25 3.25" stroke="#4a90e0" stroke-width="1.9"/><path d="M0 0L-4.60 0.00" stroke="#4a90e0" stroke-width="1.9"/><path d="M0 0L-3.25 -3.25" stroke="#4a90e0" stroke-width="1.9"/><path d="M0 0L-0.00 -4.60" stroke="#4a90e0" stroke-width="1.9"/><path d="M0 0L3.25 -3.25" stroke="#4a90e0" stroke-width="1.9"/><circle r="3.13" fill="#4a90e0"/><circle r="1.38" fill="#323232"/></g><g transform="translate(414.5 17.9)"><path d="M2.5 -2.9V-4H-2.7L.4 0L-2.7 4H2.7V2.8" stroke="#b414b4" stroke-width="1.15" fill="none"/></g><g transform="translate(429.5 17.9)"><rect x="-5.2" y="-2.6" width="10.4" height="1.8" fill="#3a70b8"/><rect x="-5.2" y="-.4" width="10.4" height="3.2" fill="#c8c8c8"/><path d="M-3.4 -.4V1.2M-1.2 -.4V1.2M1 -.4V1.2M3.2 -.4V1.2" stroke="#555" stroke-width=".5"/></g><g transform="translate(450.75 17.9)"><path d="M-4.8 -4.4Q-4.8 -5 -4 -5H4.2Q5 -5 5 -4.2V.6Q5 1.4 4.2 1.4H-1L-3.4 4.6V1.4H-4Q-4.8 1.4 -4.8 .6Z" fill="#f2e27a" stroke="#c8b040" stroke-width=".4"/><circle cx="-3" cy="3.8" r=".9" fill="#5aa860"/></g><g transform="translate(465.5 17.9)"><path d="M0 0L4.00 0.00" stroke="#5a98e0" stroke-width="1.9"/><path d="M0 0L2.83 2.83" stroke="#5a98e0" stroke-width="1.9"/><path d="M0 0L0.00 4.00" stroke="#5a98e0" stroke-width="1.9"/><path d="M0 0L-2.83 2.83" stroke="#5a98e0" stroke-width="1.9"/><path d="M0 0L-4.00 0.00" stroke="#5a98e0" stroke-width="1.9"/><path d="M0 0L-2.83 -2.83" stroke="#5a98e0" stroke-width="1.9"/><path d="M0 0L-0.00 -4.00" stroke="#5a98e0" stroke-width="1.9"/><path d="M0 0L2.83 -2.83" stroke="#5a98e0" stroke-width="1.9"/><circle r="2.72" fill="#5a98e0"/><circle r="1.20" fill="#323232"/><circle r="1.6" fill="#e8e8e8"/><path d="M2 2L5.4 5.4" stroke="#f0f0f0" stroke-width="1.6" stroke-linecap="round"/><path d="M-.6 -.9L1.2 0L-.6 .9Z" fill="#3a70b8"/></g><g transform="translate(486.25 17.9)"><path d="M-5 -4.8H5V2.2H-1L-3.6 5V2.2H-5Z" fill="#f2f2f2"/><path d="M-2.4 -3.2H2.4M0 -3.2V1" stroke="#333" stroke-width="1.2"/></g><g transform="translate(8.75 35.3)"><rect x="-5.2" y="-.8" width="5" height="5" fill="#d86a2a" transform="rotate(-12)"/><rect x="-4.2" y="-2.6" width="5.4" height="5.4" fill="#e8c030" transform="rotate(-8)"/><rect x="-2.2" y="-5" width="6.6" height="6.6" fill="#5a90d0" transform="rotate(8)"/><rect x="1.2" y="1.2" width="4.2" height="4.2" rx=".6" fill="#4a9a5a"/><rect x="2.5" y="2.5" width="1.6" height="1.6" fill="#d8f0d8"/></g><g transform="translate(24.25 35.3)"><path d="M-5.2 -1L-1 -3.4L5 -1V3L0 5.2L-5.2 3Z" fill="#e8c832"/><circle cx="-.6" cy="-2" r="3.1" fill="#4a88c8"/><path d="M-2.6 -3Q-.6 -1.8 1.6 -3.4" stroke="#cfe0f4" stroke-width=".6" fill="none"/><rect x="1.2" y="1.2" width="4.4" height="4.4" rx=".6" fill="#e8c832"/><rect x="2.6" y="2.6" width="1.6" height="1.6" fill="#fff8c0"/></g><g transform="translate(40 35.3)"><path d="M-4 -4L-.6 3.4L2.2 -4" stroke="#6a88b0" stroke-width=".8" fill="none"/><rect x="-5" y="-5" width="1.8" height="1.8" fill="#5a88c8"/><rect x="1" y="-5" width="1.8" height="1.8" fill="#5a88c8"/><rect x="3.4" y="-5" width="1.4" height="1.4" fill="#5a88c8"/><rect x="-1.4" y="2.4" width="1.8" height="1.8" fill="#5a88c8"/><rect x="1.2" y="1.2" width="4.4" height="4.4" rx=".6" fill="#e8c832"/><rect x="2.6" y="2.6" width="1.6" height="1.6" fill="#fff8c0"/></g><g transform="translate(55 35.3)"><path d="M-4.8 5Q-4 -1 4.8 -5.2Q4 1.6 -2.4 2.6Z" fill="#4a80c0"/><path d="M-4.8 5L1.4 -2" stroke="#a8c4e8" stroke-width=".5"/><rect x="1.2" y="1.2" width="4.4" height="4.4" rx=".6" fill="#e8c832"/><rect x="2.6" y="2.6" width="1.6" height="1.6" fill="#fff8c0"/></g><g transform="translate(70.75 35.3)"><rect x="-5" y="-3.6" width="8.8" height="5.6" fill="#5a90d0"/><path d="M-5 -3.6H3.8" stroke="#3a5a88" stroke-width="1"/><rect x="1.2" y="1.2" width="4.4" height="4.4" rx=".6" fill="#e8c832"/><rect x="2.6" y="2.6" width="1.6" height="1.6" fill="#fff8c0"/></g><g transform="translate(86.25 35.3)"><rect x="-5" y="-5" width="9.6" height="9.6" fill="#8ab0e0"/><path d="M-3.4 -4.2L-.4 3.4L3 -4.2" stroke="#f4f4f4" stroke-width="1.6" fill="none"/><path d="M-5 -5V4.6M4.6 -5V4.6" stroke="#4a78b8" stroke-width=".8"/><rect x="1.2" y="1.2" width="4.4" height="4.4" rx=".6" fill="#e8c832"/><rect x="2.6" y="2.6" width="1.6" height="1.6" fill="#fff8c0"/></g><g transform="translate(108 35.3)"><path d="M-4.4 4.4L.2 -4.4M-1.4 4.4L3.2 -4.4M1.6 4.4L5 -2" stroke="#525252" stroke-width="1.6"/></g><g transform="translate(122.5 35.3)"><path d="M-3.8 4.6L-3 1.6L2.4 -4.8L4.4 -3.2L-1 3.4Z" fill="#e8c832"/><path d="M-3.8 4.6L-3 1.6L-1 3.4Z" fill="#e8d8a8"/><path d="M2.4 -4.8L4.4 -3.2L3.6 -2.2L1.6 -3.8Z" fill="#b8b8b8"/></g><g transform="translate(138.25 35.3)"><rect x="-4.6" y="-3.6" width="8" height="6.6" fill="#525252"/><path d="M-3 -.4H4.6M-3 1.6H4.6" stroke="#3a3a3a" stroke-width=".6"/><path d="M1 2L5 5" stroke="#5e5e5e" stroke-width="1.4"/></g><g transform="translate(153.25 35.3)"><path d="M-4.4 -4L-1 3.6L2.6 -4" stroke="#5e5e5e" stroke-width="1" fill="none"/><path d="M2 -3.6H5" stroke="#5e5e5e" stroke-width=".8"/><rect x="1.6" y="1.6" width="3.6" height="3.6" fill="#525252"/></g><g transform="translate(170 35.3)"><path d="M-4.4 4L4 -4.4" stroke="#5e5e5e" stroke-width="1"/><path d="M-2 -2L2 2M-3 1L1 -3" stroke="#525252" stroke-width="1.2"/><rect x="-5" y="3" width="2" height="2" fill="#5e5e5e"/></g><g transform="translate(190 35.3)"><rect x="-4.8" y="-3.6" width="8.6" height="7.6" fill="#525252"/><path d="M-3.6 -1.6H2.6M-3.6 .4H2.6M-3.6 2.4H2.6" stroke="#3a3a3a" stroke-width=".6"/><path d="M1 1L5.2 -4" stroke="#5e5e5e" stroke-width="1.3"/></g><g transform="translate(204.5 35.3)"><rect x="-4.2" y="-3.6" width="8.4" height="8.4" rx=".6" fill="#4f4644"/><rect x="-4.8" y="-4.8" width="9.6" height="1.8" fill="#4f4644"/><path d="M-2 -2V4M0 -2V4M2 -2V4" stroke="#3a3a3a" stroke-width=".6"/></g><g transform="translate(219.25 35.3)"><path d="M-4.6 -2.6L4.6 1.4M-4.6 1.4L4.6 -1.6" stroke="#525252" stroke-width="1"/><circle cx="-3.6" cy="2.6" r="1.2" fill="none" stroke="#525252" stroke-width=".8"/></g><g transform="translate(235 35.3)"><rect x="-4" y="-3" width="5.6" height="7.6" fill="#525252"/><rect x="-1.4" y="-4.8" width="5.6" height="7.6" fill="#5e5e5e" stroke="#3a3a3a" stroke-width=".4"/></g><g transform="translate(250.75 35.3)"><rect x="-4.2" y="-4.6" width="8.4" height="9.6" rx=".6" fill="#525252"/><rect x="-2.6" y="-2.4" width="5.2" height="6.4" fill="#5e5e5e"/><rect x="-1.6" y="-5.4" width="3.2" height="1.8" fill="#5e5e5e"/></g><g transform="translate(266.25 35.3)"><path d="M-2.4 -1.2H1.4Q4.2 -1.2 4.2 1.6Q4.2 4.2 1.4 4.2H-1" stroke="#5e5e5e" stroke-width="1.7" fill="none"/><path d="M-5.2 -1.2L-1.8 -4.2V1.8Z" fill="#5e5e5e"/></g><g transform="translate(281.25 35.3)"><g transform="scale(-1,1)"><path d="M-2.4 -1.2H1.4Q4.2 -1.2 4.2 1.6Q4.2 4.2 1.4 4.2H-1" stroke="#5e5e5e" stroke-width="1.7" fill="none"/><path d="M-5.2 -1.2L-1.8 -4.2V1.8Z" fill="#5e5e5e"/></g></g><g transform="translate(300 35.3)"><path d="M-5.4 0L-3.2 -2.8H5V2.8H-3.2Z" fill="#efd040"/><path d="M-2.2 .6H3.6" stroke="#4a4010" stroke-width="1.5" stroke-dasharray="1.5 .4"/></g><g transform="translate(315.75 35.3)"><path d="M-3.6 -3.6L-1 -5L1.6 -3.6V-.6L-1 .8L-3.6 -.6Z" fill="#e8c832"/><path d="M-1 -.2L1.6 -1.6L4.2 -.2V2.6L1.6 4L-1 2.6Z" fill="#3aa040"/><path d="M-3.6 .4L-1.4 -.8L.8 .4V3L-1.4 4.2L-3.6 3Z" fill="#3aa040"/><path d="M1.2 2.6L3.2 1.6L5.2 2.6V4.6L3.2 5.6L1.2 4.6Z" fill="#d02a20"/><path d="M-1 -2L1.2 -3.2L3.2 -2V0L1.2 1.2L-1 0Z" fill="#d02a20"/></g><g transform="translate(332.5 35.3)"><path d="M-5.4 0L-3.2 -2.8H5V2.8H-3.2Z" fill="#5a98e0"/><path d="M-2.2 .6H3.6" stroke="#e8f0fa" stroke-width="1.5" stroke-dasharray="1.5 .4"/><circle cx="3.6" cy="3.2" r="2" fill="#d83030"/></g><g transform="translate(348 35.3)"><path d="M-5.4 0L-3.2 -2.8H5V2.8H-3.2Z" fill="#e84850"/><path d="M-2.2 .6H3.6" stroke="#fde0e0" stroke-width="1.5" stroke-dasharray="1.5 .4"/></g><g transform="translate(365 35.3)"><path d="M-5.4 0L-3.2 -2.8H5V2.8H-3.2Z" fill="#525252"/><path d="M-2.2 .6H3.6" stroke="#3c3c3c" stroke-width="1.5" stroke-dasharray="1.5 .4"/><rect x="1.4" y="2" width="3" height="3" fill="#5e5e5e"/></g><g transform="translate(380.5 35.3)"><path d="M-5.4 0L-3.2 -2.8H5V2.8H-3.2Z" fill="#525252"/><path d="M-2.2 .6H3.6" stroke="#3c3c3c" stroke-width="1.5" stroke-dasharray="1.5 .4"/><rect x="1.4" y="2" width="3" height="3" fill="#5e5e5e"/></g><g transform="translate(396.25 35.3)"><path d="M-5.4 0L-3.2 -2.8H5V2.8H-3.2Z" fill="#525252"/><path d="M-2.2 .6H3.6" stroke="#3c3c3c" stroke-width="1.5" stroke-dasharray="1.5 .4"/><rect x="1.4" y="2" width="3" height="3" fill="#5e5e5e"/></g><g transform="translate(411.25 35.3)"><path d="M-5.4 0L-3.2 -2.8H5V2.8H-3.2Z" fill="#525252"/><path d="M-2.2 .6H3.6" stroke="#3c3c3c" stroke-width="1.5" stroke-dasharray="1.5 .4"/><rect x="1.4" y="2" width="3" height="3" fill="#5e5e5e"/></g><g transform="translate(443 35.3)"><path d="M0 -5L5 4.4H-5Z" fill="#3a8a2a"/><path d="M0 -2.4L2.6 3H-2.6Z" fill="#1a3a14"/><path d="M-5 4.4H5" stroke="#e8a020" stroke-width="1.2"/><path d="M0 -5L-5 4.4" stroke="#a8d040" stroke-width=".9"/></g><g transform="translate(458 35.3)"><circle r="5" fill="#38a848"/><path d="M-3.4 -1.6A3.8 3.8 0 0 1 2.2 -3.2" stroke="#b8f0b8" stroke-width="1.1" fill="none"/><circle r="1.2" cx="0" cy="0" fill="#2a8a3a"/></g><g transform="translate(473.25 35.3)"><circle r="5" fill="#5e5e5e"/><circle r="3.2" fill="#8a8a8a"/><path d="M-2 -2L0 2.2L2 -2" stroke="#555" stroke-width=".9" fill="none"/></g><g transform="translate(488.75 35.3)"><circle cy="-.6" r="4.8" fill="#4a78c0"/><path d="M-3.6 -2.6Q0 -5.4 3.4 -2.6M-4.6 0H4.6M0 -5.4V2" stroke="#d8e6f8" stroke-width=".6" fill="none"/><path d="M-4.8 4.8V3L-3 1H3L4.8 3V4.8Z" fill="#1c1c1c"/></g><g transform="translate(508 35.3)"><path d="M-1 -5H2.2Q3.4 -5 3.4 -3.8V-.6H-1.6Q-2.6 -.6 -2.6 .6V1.6H-4Q-5 1.6 -5 .4V-1.6Q-5 -2.8 -3.8 -2.8H-1Z" fill="#3a78b8"/><path d="M1 5H-2.2Q-3.4 5 -3.4 3.8V.8H1.6Q2.6 .8 2.6 -.4V-1.6H4Q5 -1.6 5 -.4V1.8Q5 3 3.8 3H1Z" fill="#f0c83a"/></g><g transform="translate(523 35.3)"><rect x="-5.4" y="-4.6" width="10.8" height="7" rx=".8" fill="#3a78c8"/><text x="0" y=".6" font-size="4.6" font-weight="bold" text-anchor="middle" fill="#f4f8ff" font-family="Liberation Sans">KML</text><rect x="1.6" y="2" width="3.6" height="3.6" rx=".5" fill="#3a9a4a"/><rect x="2.8" y="3.2" width="1.2" height="1.2" fill="#e0f4e0"/></g><g transform="translate(538.25 35.3)"><rect x="-5.4" y="-4.6" width="10.8" height="7" rx=".8" fill="#3a78c8"/><text x="0" y=".6" font-size="4.6" font-weight="bold" text-anchor="middle" fill="#f4f8ff" font-family="Liberation Sans">KMZ</text><rect x="1.6" y="2" width="3.6" height="3.6" rx=".5" fill="#4a4a4a"/><path d="M2.6 2.8L4.4 3.8L2.6 4.8Z" fill="#ddd"/></g><g transform="translate(553.25 35.3)"><rect x="-5.4" y="-4.6" width="10.8" height="7" rx=".8" fill="#3a78c8"/><text x="0" y=".6" font-size="3.9" font-weight="bold" text-anchor="middle" fill="#f4f8ff" font-family="Liberation Sans">HTML</text><rect x="1.6" y="2" width="3.6" height="3.6" rx=".5" fill="#e8c832"/></g><g transform="translate(569.25 35.3)"><rect x="-5.2" y="-4.6" width="10.4" height="9.4" rx=".8" fill="#e8c070"/><rect x="-5.2" y="-4.6" width="10.4" height="3" fill="#f4e4b8"/><rect x="-1.6" y="-.2" width="3.2" height="1.2" fill="#7a5a20"/></g><g transform="translate(584.5 35.3)"><rect x="-5.2" y="-5" width="10.4" height="10.2" fill="#5a5a5a"/><path d="M-3 2Q-1 -3 3 -2.4" stroke="#4a4a4a" stroke-width="1.4" fill="none"/></g><g transform="translate(600 35.3)"><rect x="-5" y="-5" width="10" height="10" fill="#dce4f0"/><rect x="-5" y="-5" width="10" height="2" fill="#5a90d0"/><circle cx=".4" cy=".8" r="2.6" fill="#f8f8f8" stroke="#333" stroke-width=".8"/><path d="M2.4 2.8L5 5.4" stroke="#222" stroke-width="1.3"/></g><g transform="translate(619.5 35.3)"><rect x="-4" y="-5" width="8" height="10" fill="#4a80c8"/><path d="M-4 -5V5" stroke="#2a4a80" stroke-width="1.2"/><text x=".4" y="2.2" font-size="6.4" text-anchor="middle" fill="#dfeaf8" font-family="Liberation Sans">?</text></g><g transform="translate(647.5 35.3)"><path d="M-5.2 -1L-2.6 -3.6V-2H1V0H-2.6V1.6Z" fill="#4a88c8"/><rect x="-.4" y="-3" width="5.4" height="4" fill="#e8eef8"/><path d="M.6 -1H4" stroke="#3a70b8" stroke-width="1"/><path d="M-3 3.6Q-1 5 0 3.4" stroke="#3a70b8" stroke-width=".9" fill="none"/></g><g transform="translate(8.75 53.3)"><path d="M-4.4 4.6Q-4.4 -4 2 -4.2" stroke="#5e5e5e" stroke-width="1" fill="none" stroke-dasharray="1.6 .8"/><rect x="3" y="-5" width="1.6" height="1.6" fill="#5e5e5e"/><rect x="-5.2" y="3.6" width="1.6" height="1.6" fill="#5e5e5e"/></g><g transform="translate(23.75 53.3)"><path d="M-5 5V-5L5 5Z" fill="#5e5852"/><path d="M-3.2 3.2V-.8L.8 3.2Z" fill="#323232"/></g><g transform="translate(38.75 53.3)"><path d="M-4.6 -4.6L-1.2 3L2 -4.6" stroke="#5e5e5e" stroke-width="1" fill="none"/><path d="M2.4 -4H5" stroke="#5e5e5e" stroke-width=".8"/><circle cx="2.6" cy="3.4" r="1.6" fill="#525252"/></g><g transform="translate(60.5 53.3)"><path d="M-4.6 -1.6Q-4.6 -4.4 -1.4 -4.4H2Q5 -4.4 5 -2Q5 0 2.4 0Q1 0 .6 1.2Q-.2 2.6 -2.4 1.6Q-4.6 .8 -4.6 -1.6Z" fill="#525252"/><rect x="1.6" y="1.8" width="3.4" height="3.4" fill="#525252"/></g><g transform="translate(75 53.3)"><circle cx="-1.6" cy="-1.6" r="2.8" fill="none" stroke="#5e5e5e" stroke-width="1.5"/><circle cx="1.8" cy="1.8" r="2.8" fill="none" stroke="#525252" stroke-width="1.5"/></g><g transform="translate(91.25 53.3)"><path d="M-4.8 -2Q-4.8 -4.6 -1.6 -4.6H2.4Q5 -4.6 5 -2.4Q5 -.6 2.6 -.6H-2Q-4.8 -.6 -4.8 -2Z" fill="none" stroke="#5e5e5e" stroke-width="1"/><rect x="1" y="1" width="3.8" height="3.8" fill="#4f4d42"/></g><g transform="translate(106.25 53.3)"><path d="M-4.8 -1.4Q-4.8 -4.4 -1.6 -4.4Q0 -4.4 .4 -3.4Q1 -4.4 2.6 -4.4Q5 -4.4 5 -2Q5 0 2.6 0H-2Q-4.8 0 -4.8 -1.4Z" fill="#525252"/><rect x="-3.6" y="1.6" width="3" height="3" fill="#4f4d42"/><rect x="1" y="1.6" width="3" height="3" fill="#4f4d42"/></g><g transform="translate(121.75 53.3)"><path d="M-4.8 -2Q-4.8 -4.6 -1.6 -4.6H2.4Q5 -4.6 5 -2.4Q5 -.6 2.6 -.6H-2Q-4.8 -.6 -4.8 -2Z" fill="none" stroke="#5e5e5e" stroke-width="1"/><rect x="1" y="1" width="3.8" height="3.8" fill="#4f4d42"/></g><g transform="translate(137 53.3)"><path d="M-4.8 -2Q-4.8 -4.6 -1.6 -4.6H2.4Q5 -4.6 5 -2.4Q5 -.6 2.6 -.6H-2Q-4.8 -.6 -4.8 -2Z" fill="none" stroke="#5e5e5e" stroke-width="1"/><rect x="1" y="1" width="3.8" height="3.8" fill="#4f4d42"/></g><g transform="translate(152 53.3)"><path d="M-4.8 -1.4Q-4.8 -4.4 -1.6 -4.4Q0 -4.4 .4 -3.4Q1 -4.4 2.6 -4.4Q5 -4.4 5 -2Q5 0 2.6 0H-2Q-4.8 0 -4.8 -1.4Z" fill="#525252"/><rect x="-3.6" y="1.6" width="3" height="3" fill="#4f4d42"/><rect x="1" y="1.6" width="3" height="3" fill="#4f4d42"/></g><g transform="translate(167.5 53.3)"><path d="M-4 4Q-5 -4 1 -4.4Q5 -4.4 4.4 -1Q3.6 1.4 0 1Q-1.6 1 -1.6 3Z" fill="#525252"/></g><g transform="translate(183.25 53.3)"><path d="M-4.6 3Q-5 -1 -1 -1Q0 -4.6 3 -4.4Q5.2 -4 4.6 -1Q4 2 1 2Q-.6 4.8 -3 4.6Z" fill="#525252"/></g><g transform="translate(198.5 53.3)"><path d="M-4.6 -4.6L-1.2 3L2 -4.6" stroke="#5e5e5e" stroke-width="1" fill="none"/><path d="M2.4 -4H5" stroke="#5e5e5e" stroke-width=".8"/><circle cx="2.6" cy="3.4" r="1.6" fill="#525252"/></g><g transform="translate(213 53.3)"><path d="M-4.6 0H4.6M0 -4.6V4.6" stroke="#525252" stroke-width="1"/><rect x="-2.8" y="-2.8" width="2" height="2" fill="#5e5e5e"/><rect x="1" y="1" width="2" height="2" fill="#5e5e5e"/></g><g transform="translate(228.75 53.3)"><ellipse cx="-2.4" cy="-1" rx="2.4" ry="2" fill="#525252"/><ellipse cx="2.6" cy="-1" rx="2.2" ry="2" fill="#525252"/><path d="M-2 1L0 4L2 1" stroke="#525252" stroke-width=".9" fill="none"/></g><g transform="translate(243.75 53.3)"><ellipse cx="-2.4" cy="-1" rx="2.4" ry="2" fill="#525252"/><ellipse cx="2.6" cy="-1" rx="2.2" ry="2" fill="#525252"/><path d="M-2 1L0 4L2 1" stroke="#525252" stroke-width=".9" fill="none"/></g><g transform="translate(259 53.3)"><ellipse cx="-2.4" cy="-1" rx="2.4" ry="2" fill="#525252"/><ellipse cx="2.6" cy="-1" rx="2.2" ry="2" fill="#525252"/><path d="M-2 1L0 4L2 1" stroke="#525252" stroke-width=".9" fill="none"/></g><g transform="translate(274.25 53.3)"><g fill="#666"><rect x="-4.8" y="-4.6" width="4" height="2.4"/><rect x=".4" y="-4.6" width="4" height="2.4"/><rect x="-4.8" y="-1.2" width="4" height="2.4"/><rect x=".4" y="-1.2" width="4" height="2.4"/><rect x="-4.8" y="2.2" width="4" height="2.4"/><rect x=".4" y="2.2" width="4" height="2.4"/></g></g><g transform="translate(290 53.3)"><path d="M-1 -4.6L3 -2L-1 .4Z" fill="none" stroke="#5e5e5e" stroke-width=".8"/><path d="M-4 4.6L0 -1L3.6 4.6Z" fill="none" stroke="#5e5e5e" stroke-width=".8"/></g><g transform="translate(315 53.3)"><g transform="scale(.82)"><path d="M-2.4 -3.8A4.3 4.3 0 1 0 3.8 -2" stroke="#d81a1a" stroke-width="2.6" fill="none"/><path d="M-3.4 -4.6L-1.2 -3.2M4.8 -2.8L2.8 -1.2" stroke="#e8e8e8" stroke-width="2.2"/></g></g><g transform="translate(330 53.3)"><path d="M-4.6 -4.6L-1.2 3L2 -4.6" stroke="#707070" stroke-width="1" fill="none"/><path d="M2.4 -4H5M2 -1.6H4.4" stroke="#6a6a6a" stroke-width=".8"/><path d="M1.6 3.6L4.4 1.4" stroke="#6a6a6a" stroke-width=".9"/></g><g transform="translate(345 53.3)"><g fill="#6a6a6a"><rect x="-3.4" y="-3.6" width="1.3" height="1.3"/><rect x="2" y="-2.6" width="1.3" height="1.3"/><rect x="-1" y=".6" width="1.3" height="1.3"/><rect x="2.4" y="2.6" width="1.3" height="1.3"/></g></g><g transform="translate(450 53.3)"><path d="M-3.6 -4.4L0 0L4.4 -2.6M0 0V5" stroke="#4a9a5a" stroke-width="1.3" fill="none"/></g><g transform="translate(465 53.3)"><path d="M-4.8 -3Q-3 -5.4 0 -4.6Q3.6 -5.4 4.4 -2.4Q4.8 0 2.4 .6L3.4 4.6H.6L0 1Q-3 1.6 -4.4 -.6Z" fill="#7ab078"/><circle cx="-2" cy="-2.4" r=".9" fill="#eee"/><path d="M-1 2L1 5" stroke="#ddd" stroke-width="1"/></g><g transform="translate(480 53.3)"><path d="M-4.8 -4.8L4.8 4.8M4.8 -4.8L-4.8 4.8" stroke="#6a6a6a" stroke-width="1.1"/></g><g transform="translate(495.5 53.3)"><path d="M-4.8 -4.8L4.8 4.8M4.8 -4.8L-4.8 4.8" stroke="#55523a" stroke-width="1.2"/><rect x="-5.2" y="-5.2" width="1.8" height="1.8" fill="#525252"/></g><g transform="translate(516.25 53.3)"><path d="M-3.6 4V-3.6L3.6 3.6V-4" stroke="#5e5e5e" stroke-width="1.3" fill="none"/><path d="M-5 -3H-2M2 3.4H5" stroke="#5e5e5e" stroke-width=".9"/></g><g transform="translate(8.75 70.4)"><path d="M-4.6 4.6Q-4.6 -3.6 2.6 -4.2" stroke="#5e5e5e" stroke-width="1.1" fill="none"/><rect x="2.2" y="-5" width="1.6" height="1.6" fill="#5e5e5e"/><rect x="1" y="1.4" width="3.8" height="3.8" fill="#5c5a50"/></g><g transform="translate(28.75 70.4)"><circle cx="-.6" cy="-.6" r="4" fill="none" stroke="#5e5e5e" stroke-width="1.1"/><rect x="1" y="1.4" width="3.8" height="3.8" fill="#5c5a50"/></g><g transform="translate(50 70.4)"><ellipse cx="-.2" cy="-.6" rx="4.8" ry="3.2" fill="none" stroke="#5e5e5e" stroke-width="1.1"/><path d="M-4.6 -.6H0" stroke="#525252" stroke-width=".6" stroke-dasharray="1 .6"/><rect x="1" y="1.4" width="3.8" height="3.8" fill="#5c5a50"/></g><g transform="translate(70.75 70.4)"><rect x="-4.8" y="-4" width="9" height="6.4" fill="none" stroke="#5e5e5e" stroke-width="1.1"/><rect x="1" y="1.4" width="3.8" height="3.8" fill="#5c5a50"/></g><g transform="translate(91.75 70.4)"><path d="M-1 -4.8L4 -2L3 3H-3.4L-4.8 -1.6Z" fill="none" stroke="#5e5e5e" stroke-width="1.1"/><rect x="1" y="1.4" width="3.8" height="3.8" fill="#5c5a50"/></g><g transform="translate(115.5 70.4)"><rect x="-4.8" y="-4.6" width="8.8" height="8.6" fill="#f0d83a"/><path d="M-3.6 -3.4H-1.6M-3.6 -3.4V-1.4" stroke="#a89010" stroke-width=".6" fill="none"/><path d="M-.6 -.8L4.8 1.6L2.8 2.4L4.4 4.8L3.2 5.4L1.8 3L.2 4.2Z" fill="#fafafa" stroke="#555" stroke-width=".35"/></g><g transform="translate(137 70.4)"><rect x="-2.4" y="-1.4" width="6.6" height="6.4" fill="#f0d83a"/><path d="M-4.4 -4.8Q-5.2 -2 -4 -.4M-4.4 -4.8H-2.6" stroke="#8a3ab8" stroke-width="1" fill="none"/><path d="M-1 1.6H2" stroke="#8a7a10" stroke-width=".6"/></g><g transform="translate(157.5 70.4)"><rect x="-5" y="-4.6" width="5.6" height="5.6" fill="#f0d83a"/><rect x="-2.4" y="-2" width="5.6" height="5.6" fill="#e8c832" stroke="#b89818" stroke-width=".3"/><circle cx="3.2" cy="3.2" r="2.4" fill="#e03030"/><path d="M2.2 2.2L4.2 4.2M4.2 2.2L2.2 4.2" stroke="#fff" stroke-width=".7"/></g><g transform="translate(177.5 70.4)"><rect x="-5" y="-4.8" width="7.4" height="7.4" fill="#f0d83a"/><path d="M4 5.4L2.4 2.6A1.8 1.8 0 1 1 5.6 2.6Z" fill="#4a88c8"/><circle cx="4" cy="1.8" r=".7" fill="#dfeaf8"/></g><g transform="translate(196.25 70.4)"><path d="M-4.6 4.8L3 -3.4" stroke="#e8c832" stroke-width="2"/><path d="M-.4 -4.6L4.8 .6" stroke="#4a9a40" stroke-width="2.2"/><path d="M1 1L4.8 5" stroke="#888" stroke-width="1.3"/><rect x="-5" y="-2" width="3" height="6" fill="#3a7a3a" opacity=".7"/></g><g transform="translate(211.25 70.4)"><path d="M-5 -4L-1 -3V5L-5 4Z" fill="#525252"/><path d="M-.4 -3L4.6 -4V4L-.4 5Z" fill="#5e5e5e"/></g><g transform="translate(231.75 70.4)"><rect x="-5.3" y="-5.3" width="10.6" height="10.6" rx=".6" fill="#ffb8c4"/><text x="0" y="1.8" font-size="5" font-weight="bold" text-anchor="middle" fill="#e81828" font-family="Liberation Sans">AD</text></g><g transform="translate(246.5 70.4)"><rect x="-5.3" y="-5.3" width="10.6" height="10.6" rx=".6" fill="#4f5a4f"/><text x="0" y="1.8" font-size="5" font-weight="bold" text-anchor="middle" fill="#445044" font-family="Liberation Sans">RD</text></g><g transform="translate(261.25 70.4)"><rect x="-5.3" y="-5.3" width="10.6" height="10.6" rx=".6" fill="#3c3038"/><text x="0" y="1.8" font-size="5" font-weight="bold" text-anchor="middle" fill="#4c3c48" font-family="Liberation Sans">RD</text></g><g transform="translate(313 70.4)"><rect x="-5.3" y="-5.3" width="10.6" height="10.6" rx=".6" fill="#4c5036"/><text x="0" y="1.8" font-size="5" font-weight="bold" text-anchor="middle" fill="#3c4028" font-family="Liberation Sans">SC</text></g><g transform="translate(328.25 70.4)"><rect x="-5.5" y="-5.3" width="11" height="10.6" rx=".6" fill="#3c2c2c"/><text x="0" y="1.8" font-size="4.4" font-weight="bold" text-anchor="middle" fill="#5a4444" font-family="Liberation Sans">ADJ</text></g><g transform="translate(343.75 70.4)"><rect x="-5.3" y="-5.3" width="10.6" height="10.6" rx=".6" fill="#4c564e"/><text x="0" y="1.8" font-size="5" font-weight="bold" text-anchor="middle" fill="#445044" font-family="Liberation Sans"></text></g><g transform="translate(358.75 70.4)"><rect x="-5.3" y="-5.3" width="10.6" height="10.6" rx=".6" fill="#787878"/><text x="0" y="1.8" font-size="5" font-weight="bold" text-anchor="middle" fill="#d4d4d4" font-family="Liberation Sans">T+</text></g><g transform="translate(374.25 70.4)"><rect x="-5.3" y="-5.3" width="10.6" height="10.6" rx=".6" fill="#161616"/><text x="0" y="1.8" font-size="5" font-weight="bold" text-anchor="middle" fill="#b0b0b0" font-family="Liberation Sans">T+</text></g><g transform="translate(390 70.4)"><rect x="-5.3" y="-5.3" width="10.6" height="10.6" rx=".6" fill="#4c5438"/><text x="0" y="1.8" font-size="5" font-weight="bold" text-anchor="middle" fill="#3c4428" font-family="Liberation Sans">TT</text></g><g transform="translate(406.25 70.4)"><path d="M-2 -1.4H1.6Q4.6 -1.4 4.6 1.6Q4.6 4.4 1.6 4.4" stroke="#5c5c5c" stroke-width="2" fill="none"/><path d="M-5.4 -1.4L-1.4 -5V2.2Z" fill="#5c5c5c"/></g><g transform="translate(423.75 70.4)"><rect x="-5.6" y="-5.2" width="11.2" height="10.4" fill="#f2f2f2"/><rect x="-5.6" y="-5.2" width="11.2" height="2.4" fill="#3060b8"/><rect x="-5.6" y="2.8" width="11.2" height="2.4" fill="#d83838"/><rect x="-5.6" y="-2.8" width="11.2" height="5.2" fill="#2848a0"/><text x="0" y="1.7" font-size="4.7" font-weight="bold" text-anchor="middle" fill="#fff" font-family="Liberation Sans">BAN</text></g><g transform="translate(442.5 70.4)"><rect x="-5.4" y="-5.2" width="10.8" height="10.4" fill="#0a0a78"/><g fill="#f0e040"><rect x="-3.4" y="-3.2" width="1.4" height="1.4"/><rect x="1.6" y="-3.6" width="1.4" height="1.4"/><rect x="-.6" y="-.4" width="1.4" height="1.4"/><rect x="-3.6" y="2.2" width="1.4" height="1.4"/><rect x="2.2" y="1.8" width="1.4" height="1.4"/></g></g><g transform="translate(458.25 70.4)"><rect x="-5.4" y="-5.2" width="10.8" height="10.4" fill="#0a0a78"/><g fill="#e8e8f8"><rect x="-3.8" y="-3.4" width="1.2" height="1.2"/><rect x="-1" y="-3.8" width="1.2" height="1.2"/><rect x="2" y="-3" width="1.2" height="1.2"/><rect x="-2.6" y="-.6" width="1.2" height="1.2"/><rect x=".6" y="0" width="1.2" height="1.2"/><rect x="-3.6" y="2.4" width="1.2" height="1.2"/><rect x="-.4" y="2.8" width="1.2" height="1.2"/><rect x="2.8" y="2" width="1.2" height="1.2"/></g></g><g transform="translate(477 70.4)"><ellipse cy="-3.6" rx="4" ry="1.5" fill="#38c838"/><ellipse cy="-.8" rx="4.6" ry="1.5" fill="#e8e030"/><ellipse cy="1.8" rx="4.6" ry="1.5" fill="#f09020"/><ellipse cy="4.2" rx="4" ry="1.3" fill="#e03020"/><path d="M-5 5L-2 3" stroke="#4a70e0" stroke-width="1"/></g><g transform="translate(519.5 70.4)"><g fill="#e8d820" stroke="#3a3a10" stroke-width=".4"><path d="M0 1L5.4 3.2L0 5.4L-5.4 3.2Z"/><path d="M0 -1.4L5.4 .8L0 3L-5.4 .8Z"/><path d="M0 -3.8L5.4 -1.6L0 .6L-5.4 -1.6Z"/><path d="M0 -5.6L4.6 -3.8L0 -2L-4.6 -3.8Z"/></g></g><g transform="translate(543.25 70.4)"><path d="M-5.6 2.4L0 .2L5.6 2.4L0 5.4Z" fill="#d82a28"/><path d="M-5.6 2.4V3.6L0 6.2L5.6 3.6V2.4L0 5.4Z" fill="#a01818"/><path d="M-1.4 -5.4H1.4V-1.4H3.6L0 2.4L-3.6 -1.4H-1.4Z" fill="#4a98e8" stroke="#cfe4fa" stroke-width=".35"/></g><g transform="translate(562.5 70.4)"><rect x="-5.4" y="-5.4" width="10.8" height="10.8" rx=".8" fill="#5cb848"/><circle cx="1" cy="-1" r="3" fill="none" stroke="#fff" stroke-width="1.3"/><path d="M-1.2 1.2L-4 4" stroke="#fff" stroke-width="1.6" stroke-linecap="round"/></g><g transform="translate(578 70.4)"><rect x="-5.2" y="-5.4" width="10.4" height="10.8" fill="#e8d060"/><rect x="-5.2" y="-5.4" width="3.6" height="4" fill="#4a88d0"/><rect x="-1" y="-2" width="3" height="3.4" fill="#d84830"/><rect x="2" y="1" width="3.2" height="4.4" fill="#4a88d0"/><rect x="-5.2" y="1.6" width="3.2" height="3.8" fill="#58a848"/><path d="M5 -5.4L-.6 1" stroke="#7a4a18" stroke-width="1.4"/><rect x="-2" y="-5.4" width="2.6" height="2.4" fill="#d84830"/></g><rect x="353.8" y="47.6" width="41" height="11.4" rx="1" fill="#2a2a2a"/><text x="357" y="55.4" font-size="5.6" fill="#5e5e5e" font-family="Liberation Sans">12</text><path d="M390.6 51.6l1.4 -1.8l1.4 1.8zM390.6 55l1.4 1.8l1.4 -1.8z" fill="#bdbdbd"/><rect x="397.6" y="47.6" width="43.6" height="11.4" rx="1" fill="#2a2a2a"/><text x="401.4" y="55.4" font-size="5.6" fill="#5e5e5e" font-family="Liberation Sans">px</text><path d="M437.4 52.6h2.6l-1.3 1.7z" fill="#bdbdbd"/><rect x="271.2" y="64.8" width="32.6" height="11.4" rx="1" fill="#2a2a2a"/><text x="274" y="72.6" font-size="5.6" fill="#5e5e5e" font-family="Liberation Sans">0,000</text><path d="M299.6 68.8l1.4 -1.8l1.4 1.8zM299.6 72.2l1.4 1.8l1.4 -1.8z" fill="#bdbdbd"/></svg>
<div class="a" style="left:176px;top:80px;width:507.4px;height:362.8px;background:#fff;overflow:hidden">
<svg style="left:-176px;top:-80px" width="800" height="456" viewBox="0 0 800 456">
<path d="M215.6 80.0 L216.2 106.8 L221.5 120.2 L224.7 132.2 L222.9 144.3 L216.2 157.6 L208.1 167.0 L197.4 176.4 L189.4 184.4 L185.4 192.4 L184.8 202.1 M292.5 80.0 L288.4 92.0 L284.4 105.4 L279.1 111.6 L268.4 124.2 L258.5 133.5 L267.0 144.3 L277.7 156.3 L288.4 168.3 L292.5 179.1 L296.5 192.4 M279.1 111.6 L281.7 116.9 L290.6 114.3 L291.7 120.2 L297.8 132.2 L301.8 146.9 L300.5 157.6 L304.5 171.0 L307.2 185.7 L304.0 191.1 M307.2 80.0 L312.5 96.1 L320.6 105.4 L331.3 113.5 L346.0 124.2 L352.7 130.9 M352.7 130.9 L346.0 134.9 L334.0 137.6 L324.6 142.9 L319.2 150.9 L316.6 160.3 L319.2 171.0 L319.2 184.4 M288.4 202.1 L281.7 196.5 L296.5 192.4 L317.9 187.1 L336.6 181.2 L347.3 181.2 L354.0 183.1 M346.0 124.2 L352.7 130.9 L382.1 120.2 L392.9 117.5 L410.3 113.5 L419.6 102.8 L426.3 102.8 L438.4 105.4 L439.7 110.8 L443.7 114.3 L461.1 109.4 L479.9 107.3 L493.2 113.5 L501.3 108.9 L506.6 112.1 L517.3 114.8 L522.7 116.1 M352.7 130.9 L356.7 144.3 L363.4 160.3 L366.1 176.4 L354.0 181.7 L346.0 181.2 M366.1 176.4 L370.1 181.2 L379.5 178.5 L386.2 183.1 L392.0 184.4 L402.2 192.4 L410.3 202.1 L412.4 211.2 M443.7 114.3 L430.3 124.2 L421.5 133.5 L420.4 146.9 L419.6 160.3 L407.6 171.0 L392.0 184.4 M493.2 113.5 L490.6 146.9 L498.6 161.7 L487.9 172.4 L485.2 184.4 L479.9 196.5 L458.4 192.4 L457.1 196.5 L437.0 202.1 L426.3 207.4 M485.2 184.4 L499.9 191.1 L499.9 202.1 L499.1 213.9 M499.9 191.1 L506.6 185.7 L516.0 181.2 L533.4 179.6 M524.0 80.0 L521.4 89.4 L525.4 96.1 L524.0 106.8 L517.3 109.4 L518.7 116.1 L525.4 121.5 L534.7 121.5 L538.8 126.9 L548.1 129.5 L558.8 136.2 L566.9 142.9 M566.9 142.9 L566.3 136.2 L580.3 135.7 L596.3 141.6 L609.7 149.6 L615.1 150.9 L625.8 145.6 L627.1 137.6 L620.4 132.2 L625.8 114.8 L633.8 98.7 L639.1 88.0 L631.1 80.0 M566.9 142.9 L569.5 149.6 L568.2 159.0 L561.5 161.7 L556.2 176.4 L548.1 183.1 L542.8 177.7 L532.1 179.6 L516.0 181.2 M548.1 183.1 L547.6 187.1 L556.2 196.5 L564.2 202.1 M615.1 150.9 L621.7 152.3 L620.9 160.3 L625.2 169.7 L624.4 187.1 L627.1 202.1 L627.1 211.4 M185.4 202.0 L192.1 210.0 L205.4 215.4 L224.2 220.2 L236.2 220.2 L245.6 214.0 L256.3 209.5 L267.0 215.4 L275.1 231.4 L280.4 243.5 M288.4 202.0 L292.5 207.4 L289.8 220.7 L280.4 243.5 L285.8 246.2 L301.8 246.2 L309.9 248.9 L313.9 255.5 L315.2 271.6 L311.2 282.3 L304.5 294.4 L305.8 302.4 L309.9 311.8 L316.6 324.1 L325.9 333.2 L336.6 338.5 L347.3 341.2 M236.2 220.2 L238.1 228.8 L226.9 231.4 L224.2 238.1 L216.2 247.5 L210.8 255.5 L202.8 266.3 L201.4 272.9 L194.7 274.3 L198.8 287.7 L202.8 294.4 L210.8 297.0 L220.2 295.7 L221.5 299.7 L229.5 301.1 L241.6 305.1 L249.6 302.4 L261.7 309.1 L264.3 303.7 L287.1 302.4 L288.4 305.1 L292.5 299.7 L301.8 301.6 L305.8 302.4 M287.1 302.4 L283.1 309.1 L279.1 313.1 L283.1 317.1 L281.7 324.1 M315.2 274.3 L328.6 272.1 L347.3 264.9 M307.2 305.1 L325.9 297.0 L347.3 291.7 M410.3 202.0 L412.4 211.4 L426.3 207.4 L442.4 202.0 M412.4 211.4 L400.9 214.0 L394.2 223.4 L380.8 220.2 L377.6 228.8 L378.1 242.2 L375.4 260.9 L380.8 278.3 L399.5 282.3 L411.6 287.7 L411.6 307.7 L403.6 313.1 L402.2 324.1 M346.0 246.2 L362.1 239.5 L377.6 228.8 M346.0 259.6 L359.4 251.5 L377.6 242.2 M498.6 202.0 L491.9 215.4 L479.9 224.8 L474.5 239.5 L463.8 250.2 L462.5 262.2 L469.1 272.9 L473.2 278.3 L491.9 259.6 L495.9 252.9 L506.6 254.2 L516.0 258.2 M411.6 307.7 L423.6 299.7 L437.0 285.0 L443.7 283.7 L446.4 291.7 L453.1 285.0 L461.1 279.6 L473.2 278.3 M473.2 278.3 L471.8 294.4 L470.5 324.1 M423.6 299.7 L426.3 324.1 M403.6 313.1 L391.5 299.7 L380.8 306.4 L362.1 319.8 L356.7 324.1 M564.2 202.0 L582.9 214.0 L599.0 222.1 L611.0 227.4 L617.7 226.1 L623.1 212.7 L627.1 211.4 L625.8 202.0 M627.1 211.4 L641.8 211.4 L648.5 219.4 L660.6 216.7 L668.6 218.1 L672.6 223.4 L679.3 212.7 L683.3 204.7 M672.6 223.4 L674.0 231.4 L683.3 235.5 M611.0 227.4 L607.0 236.8 L601.1 247.5 L604.3 258.2 L603.0 264.9 L595.0 266.3 L586.9 267.6 L580.3 263.6 L576.2 258.2 L566.9 264.9 L553.5 271.1 M516.0 258.2 L521.4 262.2 L540.1 264.1 L553.5 271.1 L558.8 277.0 L553.5 286.3 L558.8 293.0 L560.2 299.7 L569.5 307.7 L570.9 311.8 L565.5 314.4 L553.5 313.1 L542.8 311.8 L540.1 319.8 L526.7 321.1 L521.4 324.1 M570.9 311.8 L581.6 311.2 L585.6 315.8 L596.3 321.1 L599.0 324.1 M683.3 272.9 L672.6 271.6 L669.9 277.0 L655.2 281.0 L647.2 282.3 L640.5 285.0 L639.1 290.3 L645.8 297.0 L640.5 305.1 L644.5 311.8 L655.2 319.8 L663.2 324.1 L676.6 325.7 L683.3 325.1 M281.7 324.0 L284.4 332.0 L283.1 345.4 L285.2 358.8 L281.7 366.3 L279.1 382.9 L273.7 385.6 L272.4 394.1 L261.7 397.6 L256.3 407.0 L247.7 413.7 L241.6 409.7 L230.9 393.6 L224.2 374.9 L216.2 346.0 L210.3 347.6 L210.3 364.2 L200.1 366.3 L202.2 374.9 L198.8 385.6 L196.9 394.9 L201.4 401.6 L198.8 415.0 L198.8 431.1 L202.8 442.3 M281.7 366.3 L293.8 364.7 L312.5 365.5 L316.6 356.1 L321.9 346.8 L331.3 341.4 L347.3 341.4 M312.5 365.5 L313.9 381.6 L321.9 388.3 L323.2 397.6 L329.9 394.9 L336.6 396.3 L347.3 396.8 M329.9 394.9 L336.6 381.6 L336.6 370.9 L342.0 364.2 L347.3 361.5 M346.0 341.4 L352.7 342.7 L356.7 348.1 L356.7 369.5 L360.7 377.5 L362.1 388.3 L359.4 397.6 L346.0 396.3 M356.7 369.5 L362.1 366.8 L370.1 371.7 L379.5 371.7 M372.8 353.4 L374.1 364.2 L379.5 371.7 L386.2 372.7 L395.5 377.5 L407.6 377.0 L419.6 380.2 M429.0 324.0 L431.7 338.7 L431.1 350.8 L426.3 361.5 L420.4 365.5 L419.6 380.2 L410.3 386.9 L396.9 388.3 L387.5 390.9 L386.2 394.1 L391.5 401.6 L396.9 409.7 L396.3 415.0 L402.2 420.4 L401.7 427.1 L405.4 432.4 L415.6 417.7 L419.6 407.0 L422.3 404.3 L434.3 408.3 L446.4 403.0 L454.4 403.8 L457.1 390.9 M431.7 338.7 L439.7 338.7 L458.4 344.1 L461.1 348.1 L469.7 349.4 M469.7 324.0 L472.4 342.7 L469.7 349.4 L470.5 358.8 L463.8 370.9 L458.4 381.6 L457.1 390.9 M472.4 342.7 L487.9 334.7 L506.6 328.8 L517.3 327.2 M505.3 329.4 L505.3 356.1 L510.6 360.9 L517.3 361.5 L533.4 368.2 L549.5 372.2 M457.1 390.9 L467.8 394.9 L474.5 401.6 L479.9 411.0 L485.2 416.4 L485.2 428.4 L487.9 436.4 L490.6 442.3 M490.6 442.3 L493.2 436.4 L501.3 433.8 L512.0 435.9 L514.7 442.3 M599.0 324.0 L595.0 334.7 L593.6 353.4 L596.3 355.6 M596.3 355.6 L597.7 362.8 L603.0 365.5 L603.0 373.5 L593.6 378.9 L586.9 381.6 L584.3 380.2 L581.6 382.9 L564.2 384.2 L557.5 386.9 L550.3 382.9 L532.1 372.2 L516.0 361.5 M596.3 355.6 L604.3 358.8 L615.1 368.2 L628.4 380.2 L639.1 385.6 L649.9 384.2 L660.6 389.6 L678.0 388.8 L682.5 393.6 L682.5 401.6 M550.3 382.9 L549.5 396.3 L553.5 403.0 L554.8 412.3 L560.2 417.7 L565.5 428.4 L568.2 436.4 L570.9 442.3 M663.2 324.0 L668.6 325.3 L683.3 324.0" fill="none" stroke="#b0c8b0" stroke-width="0.66" stroke-linejoin="round"/>
<defs><filter id="bl" x="-5%" y="-5%" width="110%" height="110%"><feGaussianBlur stdDeviation="0.7"/></filter></defs>
<path d="M549.5 147.5 L552.9 147.5 L552.9 150.9 L549.5 150.9Z M438.9 337.9 L444.5 337.9 L444.5 342.2 L438.9 342.2Z M329.6 211.8 L338.4 209.4 L345.3 215.7 L341.0 220.1 L343.4 229.6 L345.3 235.5 L344.4 241.4 L340.4 245.3 L343.4 251.3 L344.4 259.2 L338.4 261.1 L339.4 267.1 L346.3 264.1 L349.3 270.0 L348.3 278.9 L344.4 282.8 L335.5 286.0 L328.6 286.0 L329.6 273.0 L332.5 265.1 L332.5 259.2 L328.6 255.2 L327.6 247.3 L331.5 238.4 L332.5 232.5 L331.5 221.7Z M349.3 270.0 L361.1 269.0 L372.0 263.1 L374.9 264.1 L372.0 268.0 L361.1 273.0 L350.3 274.9Z M380.9 258.8 L385.2 258.8 L385.2 262.3 L380.9 262.3Z M381.9 203.5 L384.4 203.5 L384.4 205.5 L381.9 205.5Z M366.1 282.8 L371.0 282.8 L371.0 286.0 L366.1 286.0Z M329.6 276.0 L351.3 276.0 L345.3 281.9 L335.5 284.9 L328.6 283.9Z M342.4 292.8 L355.2 288.8 L363.1 287.8 L370.0 283.9 L372.0 289.8 L374.9 295.7 L376.9 299.7 L371.0 300.7 L367.1 305.6 L364.1 311.5 L357.2 315.5 L355.2 323.4 L351.3 327.3 L347.3 325.3 L346.3 315.5 L343.4 307.6 L341.4 299.7Z M338.4 333.2 L347.3 332.2 L355.2 328.3 L363.1 329.3 L370.0 327.3 L374.9 333.2 L384.8 329.3 L394.7 328.3 L402.6 331.3 L410.5 333.2 L412.4 339.2 L408.5 347.1 L398.6 350.0 L390.7 353.0 L382.8 351.0 L374.9 353.0 L359.2 354.0 L359.2 345.1 L353.2 341.1 L345.3 338.2 L338.4 336.2Z M338.4 346.1 L345.3 345.1 L354.2 344.1 L355.2 354.0 L338.4 354.6Z M306.3 339.2 L313.8 339.2 L314.8 350.0 L306.3 350.6Z M412.4 332.2 L416.0 332.2 L416.0 338.2 L412.4 338.2Z M487.1 297.4 L491.0 289.5 L493.4 292.6 L498.1 294.2 L502.8 295.0 L504.4 291.1 L508.4 288.7 L509.2 294.2 L509.9 298.2 L510.7 302.9 L507.6 306.1 L503.6 306.8 L499.7 305.3 L495.7 306.1 L492.2 308.4 L493.8 302.9 L487.8 298.9Z M529.7 231.5 L533.7 227.6 L540.3 225.6 L546.8 227.6 L549.5 231.5 L550.8 235.5 L548.2 240.1 L543.6 243.4 L538.3 244.7 L536.3 247.3 L534.3 246.7 L533.7 242.1 L530.4 239.4 L528.4 235.5Z M533.0 206.5 L537.0 208.5 L540.9 207.8 L542.2 211.8 L539.6 213.8 L538.3 219.0 L537.6 224.3 L534.3 226.9 L531.7 224.3 L531.1 221.7 L533.0 217.7 L532.4 211.8Z M552.8 336.0 L557.1 336.0 L560.8 337.2 L565.7 339.0 L566.4 342.7 L563.9 346.4 L562.1 348.9 L557.1 349.2 L555.3 346.4 L554.1 343.3 L553.5 339.7Z M529.5 348.3 L533.2 347.3 L537.5 347.6 L541.8 347.0 L545.5 347.6 L548.6 348.6 L551.0 346.4 L554.1 344.6 L555.3 347.6 L552.2 349.5 L547.3 349.8 L544.3 349.2 L539.3 348.6 L533.2 349.2 L529.8 349.8Z M419.5 173.1 L424.4 171.4 L429.2 173.1 L430.1 177.9 L426.8 180.4 L425.2 184.4 L421.9 183.6 L419.5 178.8Z M512.1 159.2 L517.0 157.9 L521.9 160.1 L521.9 164.9 L517.0 167.4 L515.4 172.2 L512.1 170.6 L511.3 164.9Z M415.8 245.7 L419.7 239.7 L425.7 241.7 L429.6 236.8 L439.5 235.8 L441.8 241.7 L439.5 247.6 L431.6 249.6 L427.6 250.6 L421.7 249.6 L416.8 249.6Z M322.3 161.6 L333.7 160.2 L335.5 165.1 L332.8 171.2 L325.8 170.4 L322.0 166.8Z M320.6 181.8 L328.5 173.9 L332.0 173.9 L332.0 177.4 L324.9 182.6 L320.6 183.5Z M307.9 141.9 L313.2 141.4 L310.9 147.5 L307.9 147.5Z M304.8 157.2 L309.2 157.2 L309.2 162.5 L304.8 162.5Z" fill="#555" fill-opacity="0.5" filter="url(#bl)"/>
<path d="M328.8 187.2h1.9v1.3h-1.9zM331.0 185.1h1.5v1.0h-1.5zM328.7 185.9h1.4v1.4h-1.4zM421.1 289.5h1.3v1.4h-1.3zM420.7 286.8h1.5v1.4h-1.5zM423.1 289.2h1.3v1.6h-1.3zM422.2 288.7h1.3v1.0h-1.3zM420.3 288.4h1.3v1.2h-1.3zM415.5 335.3h2.4v0.9h-2.4zM415.6 336.1h2.1v1.5h-2.1zM417.2 336.8h2.0v1.2h-2.0zM325.5 314.2h1.9v1.8h-1.9zM329.8 308.3h1.4v1.4h-1.4zM335.7 311.1h1.9v1.4h-1.9zM337.7 318.5h1.5v1.4h-1.5zM323.9 308.7h1.2v1.1h-1.2zM325.2 319.2h1.5v1.4h-1.5zM326.3 312.6h1.8v1.3h-1.8zM322.1 314.0h1.6v1.4h-1.6zM324.4 313.5h2.3v1.0h-2.3zM338.4 319.8h1.9v1.7h-1.9zM328.8 312.0h2.2v1.4h-2.2zM324.0 322.6h2.0v1.2h-2.0zM325.9 314.3h1.7v1.3h-1.7zM322.5 324.0h1.9v1.1h-1.9zM318.1 311.6h2.4v1.6h-2.4zM324.2 312.5h1.8v1.6h-1.8zM324.4 315.3h1.6v1.0h-1.6zM324.0 310.7h1.9v1.8h-1.9zM324.7 325.3h2.0v1.6h-2.0zM332.2 308.3h2.2v1.2h-2.2zM323.4 325.8h1.9v1.5h-1.9zM334.9 311.0h2.0v1.1h-2.0zM326.0 324.7h1.6v1.2h-1.6zM324.6 315.8h1.6v1.2h-1.6zM319.8 312.8h1.9v1.0h-1.9zM320.2 311.9h2.1v1.4h-2.1zM321.9 321.9h2.1v1.7h-2.1zM322.0 310.6h1.9v1.4h-1.9zM331.7 322.8h2.3v1.2h-2.3zM331.3 296.7h1.4v1.1h-1.4zM331.1 295.9h1.5v1.6h-1.5zM331.8 294.1h2.1v1.7h-2.1zM334.3 296.3h1.4v1.1h-1.4zM347.5 328.1h1.4v1.5h-1.4zM344.2 327.4h2.3v1.2h-2.3zM345.9 328.4h1.3v1.1h-1.3zM346.0 328.9h2.2v1.0h-2.2zM346.0 328.7h2.1v1.3h-2.1zM342.8 325.9h1.8v1.3h-1.8zM343.4 327.5h1.6v1.6h-1.6zM331.7 330.1h1.3v1.1h-1.3zM328.9 330.2h1.7v1.2h-1.7zM340.5 334.0h1.6v1.3h-1.6zM338.3 332.6h1.7v1.7h-1.7zM374.3 333.7h1.3v1.0h-1.3zM375.5 335.0h1.3v1.8h-1.3zM373.2 332.6h2.2v1.2h-2.2zM373.1 332.9h1.8v0.9h-1.8zM374.4 335.4h1.9v1.1h-1.9zM366.6 345.3h1.2v1.1h-1.2zM366.1 344.8h1.5v0.9h-1.5z" fill="#c9982e"/>
<path d="M420.8 156.8h0.8v1.0h-0.8zM419.5 154.8h1.1v1.1h-1.1zM418.5 158.8h0.9v1.2h-0.9zM420.8 154.9h1.3v0.6h-1.3zM419.6 161.6h0.6v0.9h-0.6zM417.4 160.3h1.1v1.0h-1.1zM421.7 155.1h1.1v1.0h-1.1zM420.1 157.0h1.2v1.3h-1.2zM419.9 160.2h0.5v1.1h-0.5zM420.5 165.2h1.2v0.7h-1.2zM419.5 160.4h0.5v0.9h-0.5zM418.3 152.1h0.5v1.1h-0.5zM418.0 154.0h0.8v1.2h-0.8zM417.7 157.0h0.9v1.2h-0.9zM421.6 163.3h0.7v0.8h-0.7zM418.9 163.7h1.3v0.6h-1.3zM418.3 153.9h0.7v0.9h-0.7zM420.5 154.4h0.5v0.8h-0.5zM419.0 158.8h1.3v1.1h-1.3zM419.8 159.8h1.0v0.5h-1.0zM421.7 161.9h1.2v1.1h-1.2zM432.3 162.2h0.6v1.0h-0.6zM426.2 166.9h1.0v0.6h-1.0zM439.5 167.8h0.9v0.9h-0.9zM439.4 159.9h0.5v1.3h-0.5zM455.3 159.8h0.9v1.3h-0.9zM460.1 163.6h0.7v0.8h-0.7zM449.7 163.9h0.9v1.1h-0.9zM452.0 160.9h1.1v1.3h-1.1zM459.7 164.1h1.2v1.1h-1.2zM450.7 162.8h0.8v0.5h-0.8zM447.8 161.3h0.7v1.1h-0.7zM461.2 162.1h1.2v1.3h-1.2zM461.5 161.9h0.7v0.7h-0.7zM450.1 160.8h1.0v1.2h-1.0zM459.6 162.3h1.0v1.1h-1.0zM448.4 163.3h1.2v1.1h-1.2zM458.5 162.3h0.6v1.1h-0.6zM452.0 164.2h1.3v0.8h-1.3zM453.1 165.1h1.1v0.6h-1.1zM449.0 160.6h1.2v1.1h-1.2zM449.2 164.2h1.3v1.0h-1.3zM452.6 163.0h0.6v0.5h-0.6zM461.6 163.2h0.9v1.2h-0.9zM453.5 164.6h1.2v0.7h-1.2zM451.1 161.4h0.7v1.0h-0.7zM451.2 161.9h0.6v1.2h-0.6zM452.5 162.2h1.0v1.2h-1.0zM453.5 164.8h0.9v0.9h-0.9zM455.0 160.1h0.9v0.6h-0.9zM447.5 164.2h0.6v0.9h-0.6zM458.0 162.8h0.8v0.9h-0.8zM455.6 164.0h0.6v0.9h-0.6zM450.8 161.3h1.1v0.9h-1.1zM455.4 164.0h1.2v0.9h-1.2zM456.3 162.5h0.9v1.1h-0.9zM454.0 162.5h0.9v1.3h-0.9zM457.4 164.7h1.3v0.7h-1.3zM455.4 165.1h1.2v0.6h-1.2zM449.2 162.3h0.6v0.7h-0.6zM458.3 151.3h1.1v1.2h-1.1zM458.8 152.0h1.0v0.6h-1.0zM463.3 153.6h0.7v1.3h-0.7zM460.1 150.0h1.3v1.2h-1.3zM458.9 149.8h0.9v0.8h-0.9zM459.1 149.1h1.1v0.5h-1.1zM461.4 149.8h0.5v0.8h-0.5zM461.8 150.1h0.6v1.3h-0.6zM462.8 153.9h0.6v0.7h-0.6zM458.3 152.5h0.7v0.6h-0.7zM460.4 153.4h1.2v0.7h-1.2zM458.8 153.3h1.0v1.1h-1.0zM458.4 146.9h1.1v0.8h-1.1zM458.4 153.4h1.0v1.1h-1.0zM458.7 152.8h0.6v1.2h-0.6zM460.6 148.9h0.9v1.2h-0.9zM459.6 147.6h0.9v0.7h-0.9zM489.3 163.4h0.7v0.5h-0.7zM490.2 159.5h0.9v0.8h-0.9zM486.3 164.0h1.3v0.7h-1.3zM488.6 160.7h0.9v0.8h-0.9zM485.9 159.5h0.7v1.2h-0.7zM487.5 159.9h1.2v1.3h-1.2zM487.5 159.7h0.7v0.6h-0.7zM486.9 159.3h0.7v0.7h-0.7zM488.0 165.0h1.1v0.8h-1.1zM487.2 162.4h0.8v0.8h-0.8zM484.9 160.7h1.3v0.6h-1.3zM487.6 163.2h1.2v0.7h-1.2zM495.0 163.8h0.8v0.9h-0.8zM501.6 166.8h1.2v0.5h-1.2zM492.4 166.0h1.2v0.9h-1.2zM498.1 162.4h0.8v1.2h-0.8zM500.2 166.8h1.3v0.7h-1.3zM493.3 163.2h0.9v1.0h-0.9zM501.5 165.9h1.0v1.1h-1.0zM497.0 165.1h0.5v1.1h-0.5zM494.5 167.1h1.0v0.7h-1.0zM493.5 163.7h1.0v1.1h-1.0zM493.4 162.8h0.9v1.0h-0.9zM496.1 163.8h1.0v0.5h-1.0zM495.1 164.7h1.3v1.0h-1.3zM503.1 142.6h0.7v0.7h-0.7zM503.4 143.9h0.7v0.5h-0.7zM501.3 143.7h0.8v0.7h-0.8zM502.1 145.2h0.7v0.5h-0.7zM500.4 142.3h1.0v0.7h-1.0zM502.6 144.1h0.9v0.7h-0.9zM503.2 141.6h1.2v0.7h-1.2zM500.0 143.9h0.7v1.3h-0.7zM501.3 140.9h0.7v0.8h-0.7zM502.1 145.2h0.6v0.8h-0.6zM481.7 139.1h0.6v0.5h-0.6zM480.8 136.9h1.2v1.2h-1.2zM483.5 139.0h1.2v0.8h-1.2zM481.4 139.0h1.1v0.5h-1.1zM483.5 137.1h0.8v0.8h-0.8zM440.8 187.5h0.7v0.8h-0.7zM449.8 188.2h1.3v0.7h-1.3zM442.8 191.6h1.2v0.8h-1.2zM439.3 189.7h0.8v1.2h-0.8zM440.8 189.5h1.2v0.5h-1.2zM443.4 191.8h1.1v0.5h-1.1zM439.0 187.9h1.2v0.7h-1.2zM447.6 192.1h0.8v0.7h-0.8zM450.1 190.5h0.7v1.1h-0.7zM442.6 188.7h0.5v1.1h-0.5zM449.3 190.9h1.3v0.5h-1.3zM441.3 189.7h1.3v1.3h-1.3zM443.3 188.7h0.8v0.9h-0.8zM449.5 188.3h1.1v1.1h-1.1zM448.4 191.4h1.0v0.8h-1.0zM442.4 189.4h1.1v0.6h-1.1zM390.2 182.3h0.7v0.6h-0.7zM366.6 169.6h0.8v1.3h-0.8zM489.4 196.8h0.7v0.6h-0.7zM375.5 166.5h1.1v0.9h-1.1zM395.4 161.4h1.0v1.0h-1.0zM469.7 188.1h1.0v0.6h-1.0zM483.1 153.9h1.0v0.8h-1.0zM468.4 148.1h0.7v0.7h-0.7zM383.7 190.3h1.0v0.8h-1.0zM418.9 197.0h0.9v0.7h-0.9zM478.3 176.2h1.3v0.6h-1.3zM430.1 186.0h1.2v1.2h-1.2zM367.6 154.0h0.6v0.7h-0.6zM502.1 171.7h1.2v0.8h-1.2zM486.9 163.3h0.7v1.1h-0.7zM498.3 142.2h1.0v1.0h-1.0zM393.2 158.6h0.6v0.7h-0.6zM398.4 172.8h1.0v0.7h-1.0zM363.2 156.0h1.0v0.6h-1.0zM406.6 148.3h1.1v0.9h-1.1zM370.8 142.0h0.8v0.9h-0.8zM454.2 141.3h0.6v1.1h-0.6zM420.9 153.0h0.7v1.3h-0.7zM406.8 170.7h0.8v0.8h-0.8zM486.6 197.3h0.8v0.7h-0.8zM467.1 148.2h0.5v1.2h-0.5zM422.9 186.1h0.8v1.2h-0.8zM428.4 145.8h0.5v0.9h-0.5zM454.4 191.7h0.6v1.0h-0.6zM415.4 166.9h0.6v0.7h-0.6zM437.1 192.8h0.6v0.9h-0.6zM478.1 195.5h0.7v0.6h-0.7zM498.0 196.0h0.9v0.5h-0.9zM495.3 159.6h1.2v1.0h-1.2zM480.7 145.8h1.1v0.7h-1.1zM420.0 188.0h1.2v0.6h-1.2zM393.1 160.4h0.9v0.8h-0.9zM379.3 150.8h1.1v1.2h-1.1zM367.5 170.6h1.1v0.5h-1.1zM482.7 143.0h1.0v0.9h-1.0zM452.3 154.6h0.8v1.0h-0.8zM423.2 176.4h0.9v0.9h-0.9zM365.0 174.0h0.9v0.7h-0.9zM472.0 183.9h0.9v0.6h-0.9zM430.2 142.4h0.6v0.8h-0.6zM374.9 163.2h0.9v0.5h-0.9zM536.9 159.1h1.1v1.1h-1.1zM535.1 159.0h0.9v0.8h-0.9zM541.5 159.4h1.2v1.3h-1.2zM538.5 164.9h0.7v1.3h-0.7zM534.7 166.3h1.2v0.6h-1.2zM539.4 166.1h0.6v0.8h-0.6zM538.6 159.9h1.2v0.7h-1.2zM539.6 159.5h0.9v1.2h-0.9zM530.7 160.7h0.9v0.8h-0.9zM528.3 159.8h0.6v1.2h-0.6zM537.7 165.6h0.6v1.1h-0.6zM529.2 162.8h1.0v0.8h-1.0zM540.4 162.8h1.0v1.2h-1.0zM529.1 166.5h1.0v0.8h-1.0zM539.1 160.6h1.3v1.0h-1.3zM532.9 164.8h0.9v0.6h-0.9zM538.4 159.0h1.2v0.7h-1.2zM537.0 166.4h1.0v1.0h-1.0zM532.4 158.7h0.5v0.6h-0.5zM536.7 161.8h0.9v1.2h-0.9zM529.5 160.5h1.0v0.5h-1.0zM527.8 161.4h0.6v0.8h-0.6zM530.9 163.3h1.0v0.7h-1.0zM536.9 162.2h0.6v1.2h-0.6zM531.3 159.7h0.6v1.0h-0.6zM540.5 164.9h0.8v0.7h-0.8zM527.7 163.8h0.9v0.8h-0.9zM536.9 162.0h1.2v1.1h-1.2zM531.4 165.8h0.5v0.9h-0.5zM533.8 160.3h0.5v1.1h-0.5zM519.5 153.5h1.3v0.6h-1.3zM520.8 153.5h0.9v1.0h-0.9zM524.7 152.0h0.7v0.7h-0.7zM519.8 154.5h1.1v1.1h-1.1zM519.5 154.5h1.1v0.9h-1.1zM524.2 153.2h0.7v0.6h-0.7zM521.1 151.3h0.8v1.1h-0.8zM551.3 150.1h1.1v0.7h-1.1zM550.8 148.5h1.1v0.9h-1.1zM549.8 149.4h1.3v0.7h-1.3zM552.2 147.2h0.7v0.7h-0.7zM551.5 150.4h1.1v0.8h-1.1zM552.2 148.0h0.7v1.2h-0.7zM551.1 149.2h1.0v1.3h-1.0zM550.6 149.8h1.1v1.2h-1.1zM520.0 176.3h1.0v0.7h-1.0zM517.9 175.4h0.6v1.2h-0.6zM517.2 171.4h0.6v1.2h-0.6zM519.2 172.5h0.5v0.5h-0.5zM522.5 175.5h1.1v1.1h-1.1zM516.3 175.2h0.8v1.2h-0.8zM524.1 177.2h0.6v1.2h-0.6zM525.0 177.8h0.6v0.7h-0.6zM516.6 171.5h1.2v1.1h-1.2zM521.9 177.0h1.0v0.7h-1.0zM516.5 172.1h1.1v0.7h-1.1zM519.0 174.3h0.5v0.7h-0.5zM518.5 176.2h0.8v0.8h-0.8zM525.2 174.7h1.2v1.0h-1.2zM515.9 174.0h0.8v1.1h-0.8zM519.1 176.2h0.9v0.7h-0.9zM524.2 172.1h1.2v0.6h-1.2zM515.5 172.5h1.1v1.3h-1.1zM515.6 174.5h0.9v1.1h-0.9zM546.6 174.6h0.8v1.2h-0.8zM547.5 177.8h0.7v0.7h-0.7zM552.5 174.7h0.6v1.0h-0.6zM545.3 176.5h1.1v1.1h-1.1zM551.6 173.8h0.8v0.8h-0.8zM554.3 172.1h1.2v0.5h-1.2zM546.6 173.1h1.2v0.9h-1.2zM548.8 177.3h0.7v0.9h-0.7zM550.3 176.4h1.1v1.0h-1.1zM548.5 173.4h0.6v1.2h-0.6zM552.0 176.4h0.6v0.9h-0.6zM553.3 175.3h0.6v0.9h-0.6zM554.5 173.0h0.7v0.7h-0.7zM552.5 177.2h0.6v0.6h-0.6zM547.2 173.7h0.9v0.6h-0.9zM548.0 172.6h1.3v1.1h-1.3zM545.8 177.9h0.6v0.8h-0.6zM555.4 176.7h1.1v0.8h-1.1zM546.8 175.8h0.6v0.7h-0.6zM548.9 171.5h0.8v1.1h-0.8zM556.5 187.3h1.0v0.9h-1.0zM554.2 187.5h0.8v1.1h-0.8zM557.4 187.0h1.0v1.1h-1.0zM555.3 186.4h1.1v1.2h-1.1zM556.7 187.8h1.2v1.0h-1.2zM556.4 187.1h0.8v1.0h-0.8zM546.3 196.7h1.1v1.1h-1.1zM551.2 197.1h1.0v0.8h-1.0zM555.1 201.0h0.6v1.0h-0.6zM556.5 196.4h0.9v1.3h-0.9zM545.7 197.7h0.6v1.1h-0.6zM559.0 197.6h0.6v1.0h-0.6zM553.0 199.2h0.9v1.0h-0.9zM557.2 197.5h0.8v1.3h-0.8zM548.1 198.9h0.8v1.1h-0.8zM546.9 201.7h0.8v0.5h-0.8zM549.2 196.7h0.5v0.8h-0.5zM551.3 199.2h0.8v0.7h-0.8zM548.1 199.5h1.3v0.9h-1.3zM548.3 200.1h0.8v0.7h-0.8zM546.8 199.7h1.1v1.0h-1.1zM552.0 197.8h0.7v1.3h-0.7zM550.1 198.5h1.2v1.2h-1.2zM551.9 195.9h0.9v0.6h-0.9zM550.6 195.6h0.8v0.6h-0.8zM545.1 199.4h0.7v0.7h-0.7zM549.5 197.3h0.8v1.0h-0.8zM518.0 137.1h1.2v1.2h-1.2zM515.6 139.0h1.2v1.1h-1.2zM516.1 139.3h1.0v0.5h-1.0zM515.5 139.7h1.0v0.7h-1.0zM516.1 136.2h0.7v1.1h-0.7zM313.9 274.7h1.2v1.1h-1.2zM310.9 292.5h1.0v1.1h-1.0zM319.6 292.6h1.1v1.2h-1.1zM311.5 287.8h0.9v1.1h-0.9zM315.7 292.5h0.9v0.7h-0.9zM312.1 274.7h0.9v0.5h-0.9zM316.2 274.6h0.9v0.9h-0.9zM317.7 291.8h0.5v1.2h-0.5zM316.1 284.6h1.0v1.2h-1.0zM314.4 281.4h1.3v0.6h-1.3zM319.3 286.4h0.5v1.0h-0.5zM320.0 293.4h0.8v1.3h-0.8zM316.8 283.0h1.2v0.5h-1.2zM320.6 286.1h0.8v1.2h-0.8zM314.4 282.5h0.9v1.1h-0.9zM311.8 281.6h0.8v0.9h-0.8zM322.3 278.3h1.2v0.8h-1.2zM316.8 277.5h0.9v1.3h-0.9zM319.5 290.3h0.8v0.8h-0.8zM313.2 285.2h1.0v1.1h-1.0zM308.6 288.6h1.2v0.9h-1.2zM309.1 278.5h0.5v0.7h-0.5zM450.4 236.5h1.0v1.1h-1.0zM450.3 236.6h1.0v1.0h-1.0zM448.0 236.7h1.0v0.7h-1.0zM447.6 236.4h1.1v0.6h-1.1zM442.4 234.9h1.1v1.2h-1.1zM389.2 259.9h1.2v1.1h-1.2zM388.0 259.2h0.7v0.8h-0.7zM384.4 260.3h1.0v1.2h-1.0zM380.8 261.6h0.5v0.6h-0.5zM391.4 261.6h1.2v0.9h-1.2zM380.0 260.0h1.0v1.3h-1.0zM394.0 261.0h0.8v0.6h-0.8zM389.3 259.0h0.6v0.5h-0.6zM380.0 262.2h0.6v1.3h-0.6zM381.2 263.9h0.6v0.5h-0.6zM390.1 259.2h1.1v0.6h-1.1zM380.5 262.9h1.1v1.2h-1.1zM390.3 257.8h1.0v1.1h-1.0zM386.6 264.0h0.7v1.3h-0.7zM390.4 257.3h0.5v1.0h-0.5zM391.7 257.7h0.7v1.1h-0.7zM382.2 263.9h0.9v0.5h-0.9zM385.2 261.5h0.9v1.0h-0.9zM382.0 263.2h0.8v1.0h-0.8zM389.0 260.3h0.8v1.1h-0.8zM393.5 263.2h1.0v0.7h-1.0zM416.3 290.0h1.1v1.2h-1.1zM419.3 285.7h1.3v1.2h-1.3zM422.6 282.1h0.8v1.2h-0.8zM420.0 286.6h1.0v1.2h-1.0zM425.2 282.1h0.5v0.7h-0.5zM420.4 285.4h1.2v1.2h-1.2zM416.1 288.3h1.1v1.2h-1.1zM422.1 281.8h1.2v1.1h-1.2zM423.6 289.6h0.8v0.6h-0.8zM422.2 287.9h0.7v1.1h-0.7zM426.4 281.3h1.0v1.0h-1.0zM421.1 281.0h0.7v1.1h-0.7zM425.0 283.9h0.6v1.1h-0.6zM424.5 281.2h1.0v1.2h-1.0zM425.9 284.8h0.9v1.0h-0.9zM418.0 280.8h0.6v1.1h-0.6zM419.9 285.3h0.8v0.9h-0.8zM417.2 279.2h1.3v0.8h-1.3zM416.8 286.2h1.1v0.6h-1.1zM422.6 282.9h0.9v0.5h-0.9zM415.9 290.3h1.2v0.9h-1.2zM422.1 281.8h1.1v0.8h-1.1zM426.5 287.5h1.2v1.3h-1.2zM418.7 279.2h0.7v0.6h-0.7zM416.6 279.1h0.9v1.2h-0.9zM436.8 267.2h1.0v0.7h-1.0zM439.2 259.0h0.7v0.7h-0.7zM438.3 268.2h1.3v1.2h-1.3zM436.9 259.1h1.2v0.5h-1.2zM440.3 259.2h1.3v0.5h-1.3zM441.0 259.9h0.6v0.5h-0.6zM441.2 262.2h0.6v0.8h-0.6zM441.4 258.2h1.0v0.6h-1.0zM479.2 287.0h1.1v0.7h-1.1zM478.6 284.3h1.0v0.9h-1.0zM479.9 284.7h1.0v1.1h-1.0zM483.6 286.4h0.7v0.6h-0.7zM482.9 285.7h1.1v0.5h-1.1zM483.4 285.1h1.2v1.2h-1.2zM481.2 284.1h1.2v0.9h-1.2zM484.0 284.9h0.6v1.2h-0.6zM384.8 317.5h0.5v0.9h-0.5zM386.2 316.3h0.6v1.1h-0.6zM383.7 319.2h0.8v1.1h-0.8zM395.5 316.0h0.9v0.9h-0.9zM382.6 321.0h0.5v0.6h-0.5zM391.0 311.5h0.5v1.0h-0.5zM388.4 316.6h1.1v0.6h-1.1zM394.2 319.5h0.5v0.6h-0.5zM387.0 316.3h0.7v0.6h-0.7zM380.3 317.4h1.1v0.6h-1.1zM384.8 314.9h1.2v0.9h-1.2zM392.3 313.8h0.7v0.8h-0.7zM378.5 316.2h1.3v1.2h-1.3zM382.3 315.0h1.0v0.8h-1.0zM386.0 316.3h0.5v0.6h-0.5zM512.6 296.3h1.2v1.0h-1.2zM490.7 309.7h1.2v0.5h-1.2zM467.9 234.1h1.0v0.7h-1.0zM454.3 314.5h1.0v0.7h-1.0zM451.2 254.6h1.3v0.7h-1.3zM422.2 280.6h0.6v1.0h-0.6zM511.0 264.3h0.7v0.9h-0.7zM453.4 219.8h0.6v0.6h-0.6zM420.5 251.3h0.7v0.7h-0.7zM392.2 268.2h1.2v1.0h-1.2zM458.3 280.9h0.7v1.1h-0.7zM443.2 268.5h1.0v0.9h-1.0zM422.9 231.1h0.7v0.9h-0.7zM432.9 273.1h0.5v0.8h-0.5zM498.0 230.7h0.9v0.9h-0.9zM419.3 322.0h0.7v1.1h-0.7zM401.9 209.7h1.2v0.9h-1.2zM388.8 248.8h0.9v1.1h-0.9zM395.1 228.9h1.3v1.1h-1.3zM401.5 242.6h0.8v1.0h-0.8zM464.4 305.3h1.2v0.9h-1.2zM481.1 292.3h1.1v0.9h-1.1zM487.4 288.2h1.2v0.6h-1.2zM499.1 202.0h1.1v1.0h-1.1zM448.3 319.1h1.0v0.8h-1.0zM487.3 308.1h1.0v0.8h-1.0zM442.0 257.5h1.1v0.7h-1.1zM433.7 269.4h0.8v0.8h-0.8zM487.8 305.3h0.9v0.9h-0.9zM405.6 238.6h0.6v1.0h-0.6zM459.6 212.4h1.2v0.8h-1.2zM495.3 304.0h1.3v0.7h-1.3zM438.8 312.9h0.5v0.5h-0.5zM457.3 262.2h1.2v1.1h-1.2zM453.9 323.4h0.9v0.9h-0.9zM474.0 249.1h0.8v1.0h-0.8zM428.2 317.3h1.0v0.9h-1.0zM393.9 247.2h0.8v0.9h-0.8zM458.5 309.0h1.3v0.9h-1.3zM440.3 277.9h1.3v0.8h-1.3zM452.9 301.2h0.6v0.8h-0.6zM513.9 302.5h0.9v0.6h-0.9zM502.4 285.6h1.2v1.3h-1.2zM501.8 253.0h0.6v0.7h-0.6zM450.3 263.3h0.7v0.6h-0.7zM466.4 275.0h0.8v1.3h-0.8zM467.3 206.6h0.8v1.1h-0.8zM422.4 285.9h0.5v0.7h-0.5zM495.3 273.2h1.0v0.7h-1.0zM448.4 269.0h0.7v1.0h-0.7zM452.9 323.3h1.0v0.8h-1.0zM396.8 220.8h1.1v0.6h-1.1zM394.0 222.2h0.9v1.2h-0.9zM464.2 300.2h0.5v0.5h-0.5zM485.5 241.0h1.1v0.8h-1.1zM403.6 233.9h0.6v1.2h-0.6zM459.9 244.2h0.9v0.8h-0.9zM387.8 310.1h1.0v1.3h-1.0zM440.5 277.4h0.7v0.5h-0.7zM507.5 305.7h0.8v1.2h-0.8zM491.7 238.4h1.0v1.3h-1.0zM448.1 317.5h0.7v0.8h-0.7zM478.5 228.4h0.7v1.2h-0.7zM446.6 298.5h0.7v0.6h-0.7zM429.1 224.4h1.3v0.7h-1.3zM457.0 215.6h0.9v0.8h-0.9zM435.6 209.4h0.6v1.2h-0.6zM428.4 231.5h0.7v0.7h-0.7zM412.7 205.9h1.0v0.8h-1.0zM401.8 287.8h0.6v0.7h-0.6zM494.4 217.0h0.9v1.2h-0.9zM490.3 220.9h0.8v1.1h-0.8zM431.9 318.4h0.7v1.3h-0.7zM449.3 229.4h0.9v0.6h-0.9zM461.9 316.7h1.2v1.0h-1.2zM457.5 316.8h1.0v0.7h-1.0zM464.3 316.0h0.9v0.9h-0.9zM456.3 319.4h0.8v1.0h-0.8zM460.3 317.2h0.8v0.6h-0.8zM455.1 319.8h0.8v1.0h-0.8zM454.2 318.3h0.8v0.9h-0.8zM456.7 315.8h0.7v0.7h-0.7zM454.4 319.2h0.7v0.8h-0.7zM464.7 319.3h1.2v1.2h-1.2zM454.6 316.7h0.5v1.0h-0.5zM513.3 234.8h0.8v1.0h-0.8zM513.4 233.4h1.2v0.8h-1.2zM513.2 232.2h0.6v1.2h-0.6zM514.0 240.3h0.5v0.5h-0.5zM510.0 232.6h0.7v0.8h-0.7zM509.1 234.4h1.0v0.6h-1.0zM514.4 238.2h1.1v0.7h-1.1zM511.8 239.9h0.8v0.5h-0.8zM514.5 241.3h0.7v0.5h-0.7zM514.8 238.7h0.5v0.7h-0.5zM509.7 241.1h0.7v1.2h-0.7zM513.8 231.0h1.1v0.8h-1.1zM513.9 242.0h0.7v0.6h-0.7zM540.9 258.0h1.2v1.1h-1.2zM539.2 260.1h1.0v0.9h-1.0zM533.4 259.4h0.8v0.9h-0.8zM540.8 256.7h1.1v0.5h-1.1zM539.1 260.0h0.7v0.9h-0.7zM541.2 259.2h0.9v0.7h-0.9zM533.5 257.8h0.8v0.7h-0.8zM535.5 256.5h1.1v1.0h-1.1zM535.0 257.1h0.9v0.9h-0.9zM541.0 257.5h0.7v1.2h-0.7zM534.2 258.6h0.8v1.2h-0.8zM537.8 259.7h0.6v1.0h-0.6zM521.9 284.9h1.1v1.2h-1.1zM516.8 284.3h0.8v0.7h-0.8zM516.3 284.0h0.7v1.1h-0.7zM520.4 283.3h0.8v0.9h-0.8zM519.6 283.7h0.6v0.5h-0.6zM526.3 286.4h0.6v1.1h-0.6zM526.2 285.5h0.6v0.9h-0.6zM520.2 283.8h0.9v0.5h-0.9zM525.3 285.8h1.0v1.2h-1.0zM522.6 284.1h0.7v0.6h-0.7zM515.7 286.7h1.2v0.7h-1.2zM517.4 285.7h1.2v1.2h-1.2zM517.2 286.6h1.2v1.1h-1.2zM518.9 283.7h1.2v0.8h-1.2zM519.5 285.3h0.8v1.2h-0.8zM518.1 282.8h1.0v1.0h-1.0zM524.2 286.1h1.2v1.3h-1.2zM521.0 285.3h0.6v0.7h-0.6zM521.7 283.2h1.1v0.6h-1.1zM520.5 287.8h0.6v0.5h-0.6zM520.2 283.8h1.1v0.5h-1.1zM529.4 303.8h1.1v0.8h-1.1zM520.2 301.6h0.9v0.8h-0.9zM521.1 298.8h1.0v1.2h-1.0zM530.6 295.8h0.7v0.9h-0.7zM525.0 298.1h0.7v0.6h-0.7zM520.7 299.0h1.3v1.2h-1.3zM529.7 305.1h1.3v1.0h-1.3zM528.9 294.6h1.0v1.0h-1.0zM520.3 300.5h1.3v0.9h-1.3zM526.4 297.2h0.8v1.2h-0.8zM515.9 296.1h1.0v0.9h-1.0zM517.0 301.5h0.8v1.0h-0.8zM522.4 300.1h1.0v0.8h-1.0zM517.3 296.0h1.2v0.9h-1.2zM517.5 304.0h0.7v0.6h-0.7zM524.4 296.8h0.9v0.9h-0.9zM519.5 300.5h0.6v0.9h-0.6zM525.4 295.0h0.8v0.6h-0.8zM522.8 303.8h0.9v1.1h-0.9zM527.9 295.1h1.3v1.1h-1.3zM517.3 303.6h0.8v0.6h-0.8zM531.4 300.5h1.1v0.6h-1.1zM528.5 294.6h0.7v0.8h-0.7zM515.9 300.8h0.7v0.7h-0.7zM527.1 298.8h1.2v1.0h-1.2zM557.1 293.5h1.2v1.2h-1.2zM536.6 298.7h0.8v1.1h-0.8zM551.8 301.1h0.6v0.8h-0.6zM553.2 304.7h1.1v0.5h-1.1zM549.4 280.5h0.9v1.1h-0.9zM534.9 304.0h1.0v0.7h-1.0zM537.2 290.4h1.2v1.0h-1.2zM535.1 278.3h0.6v1.1h-0.6zM537.2 293.4h0.7v1.0h-0.7zM542.7 281.9h1.2v0.9h-1.2zM551.7 300.8h1.3v0.5h-1.3zM524.1 208.7h0.9v1.2h-0.9zM526.7 208.3h0.6v1.2h-0.6zM525.9 210.0h0.9v0.6h-0.9zM526.6 209.8h1.2v1.0h-1.2zM522.8 209.4h0.7v1.2h-0.7zM439.5 341.5h1.0v0.7h-1.0zM440.2 339.4h1.3v1.1h-1.3zM442.4 341.5h1.2v0.8h-1.2zM439.4 341.2h0.9v1.1h-0.9zM442.2 338.7h0.5v0.5h-0.5zM441.1 341.3h0.7v0.9h-0.7zM439.2 338.7h0.5v0.6h-0.5zM438.6 337.8h1.2v1.0h-1.2zM442.6 337.4h0.7v1.0h-0.7zM438.7 338.9h0.5v0.8h-0.5zM443.3 337.5h0.9v1.0h-0.9zM442.8 338.1h1.2v1.1h-1.2zM438.8 339.9h1.1v1.3h-1.1zM440.5 341.7h1.2v0.5h-1.2zM440.3 340.3h0.8v0.8h-0.8zM475.1 350.3h0.6v0.5h-0.6zM472.7 348.8h1.2v0.8h-1.2zM473.4 347.7h1.0v1.2h-1.0zM472.5 350.9h1.0v0.7h-1.0zM474.6 350.2h0.9v0.5h-0.9zM474.7 349.2h0.9v1.1h-0.9zM474.3 348.0h0.9v0.7h-0.9zM473.2 348.7h0.6v1.1h-0.6zM455.0 325.0h1.0v0.8h-1.0zM455.0 332.5h1.0v0.6h-1.0zM450.3 325.6h1.1v0.7h-1.1zM450.9 330.3h1.2v1.2h-1.2zM453.8 330.9h0.9v0.8h-0.9zM452.1 327.8h1.2v0.7h-1.2zM454.4 332.1h0.8v0.7h-0.8zM504.0 348.4h1.0v0.5h-1.0zM504.1 350.7h1.0v0.8h-1.0zM501.2 349.2h1.2v0.8h-1.2zM503.6 350.7h0.5v0.5h-0.5zM556.5 325.2h0.8v0.8h-0.8zM554.4 325.4h1.2v0.9h-1.2zM558.3 328.7h0.9v1.2h-0.9zM338.3 281.9h0.6v0.7h-0.6zM334.4 269.4h0.6v1.2h-0.6zM337.3 241.6h0.8v0.8h-0.8zM332.3 258.1h0.8v0.8h-0.8zM330.0 250.6h1.1v1.1h-1.1zM305.3 212.3h1.3v1.3h-1.3zM331.6 248.2h1.3v0.9h-1.3zM341.6 281.9h0.6v1.3h-0.6zM312.8 209.6h1.1v0.5h-1.1zM311.5 207.2h1.1v1.3h-1.1zM337.1 225.5h0.8v0.9h-0.8zM320.1 215.7h1.1v1.2h-1.1zM339.7 277.3h1.0v0.7h-1.0zM334.4 263.3h1.3v1.2h-1.3zM333.2 210.8h1.0v0.5h-1.0zM335.7 236.7h0.9v1.0h-0.9zM340.6 268.5h1.2v0.8h-1.2zM339.3 257.9h1.2v1.1h-1.2zM342.2 232.0h1.0v1.0h-1.0zM337.7 233.5h0.7v0.6h-0.7zM342.0 257.1h1.2v0.8h-1.2zM335.1 234.2h0.8v1.0h-0.8zM333.3 226.0h0.7v0.9h-0.7zM336.3 218.0h0.9v0.5h-0.9zM333.1 254.5h0.9v1.1h-0.9zM329.8 228.4h0.9v1.2h-0.9zM314.3 225.2h0.9v0.9h-0.9zM325.5 210.6h0.6v1.3h-0.6zM319.8 206.7h1.1v1.3h-1.1zM314.2 223.2h1.2v0.6h-1.2zM331.0 283.7h1.2v1.0h-1.2zM332.4 268.4h0.6v1.0h-0.6zM310.7 208.9h0.8v0.6h-0.8zM313.2 219.7h0.9v1.2h-0.9zM341.6 215.1h0.8v0.5h-0.8zM331.6 229.6h0.7v1.3h-0.7zM326.6 210.5h0.8v1.0h-0.8zM316.7 223.9h0.8v0.8h-0.8zM308.5 220.3h1.0v1.2h-1.0zM333.0 261.6h0.6v1.2h-0.6zM335.2 258.2h1.1v0.5h-1.1zM311.6 220.6h1.3v1.0h-1.3zM312.0 220.0h0.6v1.2h-0.6zM308.1 214.6h1.2v1.2h-1.2zM336.0 264.1h0.6v0.7h-0.6zM335.8 264.9h1.1v0.9h-1.1zM335.6 245.9h0.9v0.7h-0.9zM306.8 207.4h0.7v1.2h-0.7zM335.2 239.6h0.8v1.2h-0.8zM337.5 275.2h1.1v1.1h-1.1zM335.9 228.8h0.7v0.9h-0.7zM333.1 222.5h1.3v0.8h-1.3zM333.0 260.6h0.7v0.6h-0.7zM321.1 206.6h0.8v1.0h-0.8zM326.8 209.6h0.9v0.5h-0.9zM338.5 276.6h1.2v0.7h-1.2zM337.9 266.2h1.2v1.0h-1.2zM311.6 216.1h0.7v0.6h-0.7zM307.7 216.9h0.8v0.5h-0.8zM336.4 233.1h1.0v0.6h-1.0zM341.4 228.5h0.7v0.6h-0.7zM313.6 216.0h0.7v0.9h-0.7zM317.5 223.8h1.0v0.5h-1.0zM336.3 247.5h0.7v0.6h-0.7zM307.2 207.8h1.1v1.1h-1.1zM306.4 217.3h1.2v1.3h-1.2zM312.4 223.4h1.1v0.9h-1.1zM340.6 270.9h0.6v0.8h-0.6zM338.4 218.0h0.7v0.6h-0.7zM337.8 252.1h0.6v0.8h-0.6zM345.8 267.9h0.5v1.1h-0.5zM338.0 220.1h1.2v1.0h-1.2zM317.7 209.3h1.0v0.6h-1.0zM332.6 283.1h1.0v1.1h-1.0zM334.8 228.3h0.5v0.9h-0.5zM339.2 259.3h0.6v0.8h-0.6zM332.1 280.3h0.9v1.1h-0.9zM338.7 269.2h1.1v1.2h-1.1zM329.0 280.2h1.2v0.5h-1.2zM333.2 235.8h1.0v1.1h-1.0zM333.6 268.3h1.0v1.2h-1.0zM346.6 275.6h0.9v0.8h-0.9zM316.3 215.6h0.9v0.6h-0.9zM343.7 237.0h0.9v0.7h-0.9zM309.5 217.1h0.8v1.2h-0.8zM343.4 282.4h0.7v0.8h-0.7zM343.1 268.2h1.0v1.2h-1.0zM336.4 258.9h1.3v1.1h-1.3zM337.5 258.0h0.6v1.1h-0.6zM334.2 280.6h1.1v0.5h-1.1zM332.7 244.1h1.1v0.5h-1.1zM343.2 276.4h0.6v0.8h-0.6zM321.2 210.3h1.3v1.0h-1.3zM325.4 207.3h0.9v1.2h-0.9zM347.6 267.2h0.8v1.1h-0.8zM334.1 233.0h0.8v1.1h-0.8zM324.2 212.6h1.2v1.0h-1.2zM342.0 237.3h0.6v0.8h-0.6zM335.6 235.8h1.1v1.2h-1.1zM334.8 228.6h1.0v0.8h-1.0zM347.8 276.3h1.2v0.6h-1.2zM330.3 271.4h1.2v1.1h-1.2zM336.9 213.0h0.8v1.2h-0.8zM339.1 272.3h0.8v0.9h-0.8zM335.4 215.3h1.1v0.8h-1.1zM338.7 259.4h1.2v0.6h-1.2zM313.6 213.9h0.7v0.5h-0.7zM332.5 275.2h0.8v1.2h-0.8zM335.4 266.8h1.0v0.9h-1.0zM330.7 277.7h0.7v0.8h-0.7zM329.0 276.6h0.6v0.5h-0.6zM326.3 213.6h1.3v0.7h-1.3zM327.4 241.9h0.9v0.7h-0.9zM327.0 222.2h0.9v1.2h-0.9zM312.7 217.7h1.1v0.7h-1.1zM315.3 210.8h0.6v0.8h-0.6zM333.6 275.9h0.5v0.8h-0.5zM329.0 238.7h1.3v1.2h-1.3zM331.1 219.3h1.0v0.6h-1.0zM338.2 219.8h1.1v1.2h-1.1zM341.1 256.1h1.1v0.9h-1.1zM328.3 255.0h1.0v0.8h-1.0zM318.8 212.0h1.1v1.1h-1.1zM335.6 266.7h0.8v1.2h-0.8zM325.1 210.3h0.8v0.8h-0.8zM336.0 216.7h1.2v0.8h-1.2zM308.8 212.6h1.1v0.9h-1.1zM338.6 220.0h1.0v1.2h-1.0zM342.3 231.2h0.9v0.9h-0.9zM338.3 277.8h0.5v0.7h-0.5zM328.9 278.9h1.0v1.2h-1.0zM337.7 250.1h1.1v1.2h-1.1zM335.6 242.0h1.2v1.0h-1.2zM339.8 276.4h0.5v1.0h-0.5zM336.9 221.8h1.1v1.0h-1.1zM328.3 251.1h0.8v0.5h-0.8zM324.0 242.7h1.3v1.1h-1.3zM331.0 229.8h0.9v1.3h-0.9zM305.7 206.1h1.0v0.6h-1.0zM328.4 253.7h1.1v0.9h-1.1zM335.2 257.8h1.0v0.9h-1.0zM333.7 249.5h0.7v0.6h-0.7zM336.4 258.6h1.3v1.0h-1.3zM334.0 210.5h0.7v1.2h-0.7zM311.5 209.8h0.5v1.0h-0.5zM338.1 220.8h0.8v1.3h-0.8zM337.5 210.2h0.5v0.5h-0.5zM336.4 258.3h0.6v1.2h-0.6zM331.3 227.7h0.7v0.6h-0.7zM339.2 273.0h0.5v0.8h-0.5zM309.8 216.8h1.3v1.0h-1.3zM337.5 264.9h0.8v1.1h-0.8zM306.3 216.5h0.5v1.2h-0.5zM305.5 213.6h0.9v0.7h-0.9zM338.4 255.4h1.0v0.7h-1.0zM337.4 276.2h1.1v0.8h-1.1zM330.9 253.7h0.6v1.3h-0.6zM332.1 254.1h1.0v1.1h-1.0zM309.2 209.2h0.6v0.8h-0.6zM327.5 209.5h0.6v0.9h-0.6zM336.0 256.5h0.9v1.2h-0.9zM343.2 274.2h0.9v0.8h-0.9zM339.0 212.3h0.7v0.8h-0.7zM333.2 229.2h0.7v0.5h-0.7zM327.7 217.8h0.8v1.1h-0.8zM319.6 216.9h1.0v1.2h-1.0zM337.9 279.9h0.5v1.0h-0.5zM343.4 266.2h1.2v0.7h-1.2zM325.0 212.5h0.9v0.9h-0.9zM345.3 278.3h0.8v0.5h-0.8zM323.1 223.3h0.8v0.5h-0.8zM326.2 243.1h0.7v1.0h-0.7zM319.9 208.5h0.8v0.5h-0.8zM326.7 245.5h0.8v0.6h-0.8zM324.4 241.8h1.3v1.1h-1.3zM331.8 211.4h0.7v1.1h-0.7zM340.0 277.5h1.0v1.0h-1.0zM338.4 258.1h0.6v0.8h-0.6zM317.3 206.8h1.2v1.0h-1.2zM332.8 260.9h0.5v0.9h-0.5zM335.9 240.4h1.2v0.7h-1.2zM347.8 272.4h0.7v0.8h-0.7zM311.9 209.0h0.5v0.6h-0.5zM333.5 221.0h1.2v0.7h-1.2zM338.6 225.6h1.3v1.1h-1.3zM330.6 242.5h0.9v0.8h-0.9zM337.4 217.4h0.8v0.6h-0.8zM340.6 268.3h0.7v1.0h-0.7zM312.7 215.6h1.1v1.3h-1.1zM335.5 211.1h0.8v1.2h-0.8zM347.5 277.6h0.6v1.1h-0.6zM310.8 214.9h0.6v0.8h-0.6zM335.2 251.3h0.9v0.9h-0.9zM328.3 239.3h1.0v0.7h-1.0zM334.2 220.7h0.8v1.2h-0.8zM337.6 281.9h1.2v0.9h-1.2zM321.0 214.5h1.1v0.8h-1.1zM335.3 234.7h0.9v0.8h-0.9zM331.0 256.5h0.9v0.9h-0.9zM334.5 259.0h1.1v0.8h-1.1zM311.9 223.7h1.0v1.1h-1.0zM332.7 216.9h0.6v0.9h-0.6zM333.5 266.2h0.5v1.2h-0.5zM330.1 237.5h0.9v0.5h-0.9zM339.7 272.3h0.6v0.7h-0.6zM310.3 217.7h1.2v1.1h-1.2zM313.6 205.6h0.6v0.6h-0.6zM342.9 230.9h1.2v0.7h-1.2zM315.0 208.5h0.5v1.3h-0.5zM348.3 269.4h1.1v1.2h-1.1zM305.4 216.0h1.1v0.9h-1.1zM331.3 271.2h0.9v0.8h-0.9zM325.8 246.5h0.8v0.5h-0.8zM313.1 205.5h0.9v0.7h-0.9zM335.9 240.9h0.7v0.6h-0.7zM344.3 214.2h0.5v0.9h-0.5zM333.9 261.1h1.1v0.8h-1.1zM338.5 229.4h0.7v0.8h-0.7zM313.4 217.9h1.0v0.7h-1.0zM331.6 239.2h0.6v1.1h-0.6zM326.1 240.2h1.2v1.3h-1.2zM336.3 229.2h0.5v1.1h-0.5zM342.1 257.7h0.8v0.9h-0.8zM335.8 263.7h0.5v1.2h-0.5zM333.5 247.0h1.1v0.8h-1.1zM340.5 253.1h0.8v0.7h-0.8zM335.1 233.2h1.2v0.9h-1.2zM327.9 210.8h1.3v1.3h-1.3zM336.0 235.3h0.7v0.6h-0.7zM320.6 219.9h1.1v1.1h-1.1zM334.7 283.7h1.0v0.8h-1.0zM336.2 273.1h1.0v1.0h-1.0zM339.2 224.5h0.5v0.5h-0.5zM331.2 235.7h0.7v1.3h-0.7zM337.5 266.5h1.0v1.2h-1.0zM340.5 256.2h0.5v1.2h-0.5zM310.5 215.8h0.7v0.9h-0.7zM316.6 223.1h1.1v1.0h-1.1zM338.2 273.7h1.3v1.2h-1.3zM339.1 272.5h1.3v1.3h-1.3zM324.2 241.2h1.1v1.2h-1.1zM336.5 233.2h0.6v0.6h-0.6zM343.8 277.6h0.5v0.8h-0.5zM331.2 244.2h0.5v1.2h-0.5zM332.2 229.0h0.9v0.8h-0.9zM332.0 276.3h1.0v0.8h-1.0zM336.6 232.3h1.2v1.0h-1.2zM313.0 220.4h0.9v1.2h-0.9zM333.0 274.3h1.0v1.0h-1.0zM303.4 214.3h1.3v0.6h-1.3zM336.9 211.7h1.1v1.0h-1.1zM330.4 234.3h1.2v1.2h-1.2zM310.0 204.7h1.0v1.2h-1.0zM304.9 207.8h0.9v1.2h-0.9zM335.5 221.2h0.9v0.6h-0.9zM312.4 216.2h0.9v0.5h-0.9zM330.6 222.6h0.7v1.0h-0.7zM339.8 277.5h0.6v1.1h-0.6zM327.3 222.6h1.2v0.7h-1.2zM329.9 221.2h1.2v0.8h-1.2zM326.4 243.4h0.5v1.2h-0.5zM342.7 277.2h0.9v0.8h-0.9zM317.4 217.5h0.7v0.9h-0.7zM342.8 232.8h0.8v0.7h-0.8zM332.1 240.0h0.6v1.0h-0.6zM338.1 252.1h0.9v0.7h-0.9zM326.5 242.2h0.9v0.9h-0.9zM320.4 209.1h0.6v1.1h-0.6zM341.4 256.3h0.9v1.2h-0.9zM338.8 242.5h0.9v1.1h-0.9zM333.9 281.8h1.0v0.6h-1.0zM332.9 264.7h0.5v1.0h-0.5zM328.8 221.6h1.1v0.6h-1.1zM315.5 214.4h1.2v1.3h-1.2zM331.1 269.8h0.9v0.7h-0.9zM330.6 250.1h1.2v0.5h-1.2zM340.2 254.9h0.5v1.2h-0.5zM336.7 215.1h0.7v0.7h-0.7zM322.5 213.3h1.3v1.2h-1.3zM307.4 215.1h0.9v1.3h-0.9zM338.2 215.8h1.2v0.5h-1.2zM335.5 218.3h0.6v0.7h-0.6zM306.5 216.7h0.5v0.8h-0.5zM334.7 217.4h0.9v0.6h-0.9zM343.8 268.5h1.0v1.0h-1.0zM344.4 267.6h0.9v1.2h-0.9zM333.2 245.6h0.6v0.5h-0.6zM338.9 245.8h0.9v1.1h-0.9zM334.9 280.6h1.2v0.8h-1.2zM335.2 218.9h0.8v1.0h-0.8zM329.5 283.7h0.6v1.2h-0.6zM332.1 249.5h1.1v0.8h-1.1zM328.9 248.1h1.3v1.2h-1.3zM322.3 210.3h0.8v0.7h-0.8zM343.1 253.1h0.8v1.2h-0.8zM316.4 208.7h0.7v1.1h-0.7zM325.6 246.6h1.1v1.1h-1.1zM332.4 226.3h1.0v0.8h-1.0zM334.0 260.9h1.3v0.5h-1.3zM341.3 270.0h0.7v1.0h-0.7zM342.0 273.9h0.7v0.9h-0.7zM330.5 275.5h0.6v0.7h-0.6zM341.2 253.4h1.3v1.0h-1.3zM337.5 256.5h1.2v0.7h-1.2zM313.0 224.9h0.5v0.6h-0.5zM317.0 208.3h0.8v1.0h-0.8zM311.5 224.8h0.9v0.6h-0.9zM344.9 277.1h0.9v1.2h-0.9zM328.6 211.4h0.9v1.3h-0.9zM333.4 217.9h0.7v0.7h-0.7zM335.4 251.7h0.8v0.7h-0.8zM333.3 265.4h0.7v0.6h-0.7zM315.9 211.7h0.7v1.0h-0.7zM333.2 225.5h1.3v0.6h-1.3zM334.7 245.7h0.8v1.1h-0.8zM327.1 218.1h1.0v1.3h-1.0zM312.2 213.3h1.0v1.1h-1.0zM334.7 238.1h1.2v1.2h-1.2zM303.8 207.9h0.8v0.9h-0.8zM319.2 214.4h1.2v0.8h-1.2zM327.8 216.9h0.6v0.6h-0.6zM339.5 213.7h0.7v1.0h-0.7zM336.3 222.7h0.6v1.2h-0.6zM341.2 251.8h0.8v0.9h-0.8zM311.5 224.7h1.1v1.1h-1.1zM318.1 210.1h1.1v0.6h-1.1zM338.5 240.3h1.0v0.6h-1.0zM336.4 264.3h1.2v1.1h-1.2zM315.9 206.7h0.5v0.9h-0.5zM337.2 219.3h0.8v0.7h-0.8zM312.2 224.8h0.9v0.7h-0.9zM333.2 211.7h0.8v0.9h-0.8zM317.8 206.4h0.8v1.2h-0.8zM305.8 210.5h0.5v0.7h-0.5zM314.0 211.6h1.2v1.0h-1.2zM323.2 208.5h1.0v1.2h-1.0zM308.4 208.9h0.8v1.0h-0.8zM339.2 268.2h0.6v1.1h-0.6zM313.4 221.7h1.3v0.7h-1.3zM310.8 214.3h0.9v0.8h-0.9zM333.2 224.7h0.6v1.1h-0.6zM329.7 272.9h1.1v0.9h-1.1zM346.6 267.9h1.2v0.9h-1.2zM316.8 220.4h1.1v0.6h-1.1zM333.2 214.0h0.5v0.8h-0.5zM316.0 213.2h1.0v0.9h-1.0zM335.1 275.0h0.9v0.9h-0.9zM336.2 274.2h1.1v0.9h-1.1zM332.6 271.3h1.3v0.8h-1.3zM336.6 224.6h0.8v0.5h-0.8zM330.5 276.6h1.2v0.7h-1.2zM339.4 231.3h0.9v1.1h-0.9zM336.8 218.8h0.6v0.7h-0.6zM316.0 216.1h0.6v1.0h-0.6zM335.7 232.3h0.5v1.0h-0.5zM314.0 206.6h0.6v0.5h-0.6zM322.0 215.9h1.1v0.9h-1.1zM320.5 218.6h1.1v1.1h-1.1zM308.2 206.4h1.1v0.7h-1.1zM329.4 250.6h0.7v0.6h-0.7zM335.4 273.2h0.7v0.9h-0.7zM338.4 275.8h0.6v1.0h-0.6zM332.9 238.2h0.8v0.7h-0.8zM331.8 246.2h0.9v0.7h-0.9zM333.2 241.5h1.0v0.6h-1.0zM330.1 242.1h1.3v0.6h-1.3zM337.5 264.7h1.3v1.2h-1.3zM335.5 211.8h0.9v0.6h-0.9zM341.8 253.0h0.9v0.7h-0.9zM337.7 254.1h1.1v1.2h-1.1zM332.2 214.9h1.0v0.6h-1.0zM309.8 205.4h1.2v0.7h-1.2zM319.3 224.6h0.6v1.1h-0.6zM339.8 248.0h0.6v0.6h-0.6zM338.0 257.6h1.2v0.7h-1.2zM336.5 212.7h0.7v0.7h-0.7zM338.9 280.6h1.2v1.0h-1.2zM337.1 229.6h0.6v1.2h-0.6zM309.9 208.5h1.2v0.6h-1.2zM331.4 252.0h1.1v0.9h-1.1zM331.3 222.2h0.6v1.2h-0.6zM323.6 223.1h0.6v0.8h-0.6zM332.0 253.0h0.6v0.8h-0.6zM335.1 258.5h0.7v1.1h-0.7zM302.8 208.4h0.7v0.7h-0.7zM343.4 234.8h0.9v0.8h-0.9zM339.7 271.7h1.3v0.7h-1.3zM326.2 214.6h0.7v0.5h-0.7zM339.2 241.3h0.8v0.9h-0.8zM321.1 216.4h0.9v1.2h-0.9zM338.0 238.2h0.6v1.3h-0.6zM332.7 223.7h1.0v1.2h-1.0zM330.0 272.4h0.8v1.1h-0.8zM339.2 214.7h0.9v1.0h-0.9zM309.5 217.7h1.2v0.8h-1.2zM332.4 239.2h0.7v0.6h-0.7zM336.1 272.4h0.6v1.0h-0.6zM324.8 211.4h1.3v1.2h-1.3zM332.4 211.7h0.8v1.2h-0.8zM330.2 280.6h0.6v0.8h-0.6zM316.6 224.1h1.1v1.1h-1.1zM311.9 224.5h1.2v0.7h-1.2zM342.4 212.9h1.1v0.9h-1.1zM332.8 247.3h0.7v0.8h-0.7zM331.1 269.7h1.1v1.0h-1.1zM329.5 247.1h1.1v0.7h-1.1zM340.7 277.9h1.2v0.7h-1.2zM346.5 277.5h1.3v0.9h-1.3zM344.4 238.9h0.5v0.7h-0.5zM325.2 216.3h0.7v1.2h-0.7zM343.0 238.9h1.0v1.2h-1.0zM326.7 222.6h0.6v0.5h-0.6zM306.2 206.9h0.7v1.1h-0.7zM334.6 216.7h0.6v1.0h-0.6zM338.5 278.7h1.1v1.0h-1.1zM322.9 212.3h1.2v0.8h-1.2zM335.5 234.5h0.9v0.9h-0.9zM341.1 251.7h1.0v0.7h-1.0zM310.5 215.5h0.7v1.2h-0.7zM333.1 268.3h1.2v0.9h-1.2zM337.7 211.9h1.1v0.8h-1.1zM339.9 233.5h1.1v0.6h-1.1zM332.0 270.3h0.9v1.0h-0.9zM333.1 228.7h0.5v0.6h-0.5zM342.5 259.1h0.7v1.0h-0.7zM332.2 245.2h0.6v0.9h-0.6zM330.2 223.2h0.8v0.9h-0.8zM346.2 273.9h1.1v0.6h-1.1zM327.7 214.1h1.1v0.5h-1.1zM344.1 282.0h0.8v1.0h-0.8zM328.6 283.5h0.7v1.0h-0.7zM320.6 215.1h0.9v0.8h-0.9zM338.7 276.8h0.9v0.8h-0.9zM330.2 284.4h1.2v0.6h-1.2zM327.9 217.8h0.6v1.2h-0.6zM326.9 242.7h1.2v0.9h-1.2zM347.7 270.2h1.3v0.7h-1.3zM338.8 211.2h1.3v0.8h-1.3zM333.4 211.0h0.9v0.7h-0.9zM337.9 251.9h1.0v1.0h-1.0zM318.7 216.4h0.6v1.3h-0.6zM339.0 258.0h0.8v0.8h-0.8zM325.9 245.2h0.5v0.7h-0.5zM337.0 281.0h0.7v0.7h-0.7zM328.7 279.1h1.1v0.6h-1.1zM334.0 261.5h0.7v0.7h-0.7zM333.5 218.8h0.8v1.1h-0.8zM324.7 207.1h1.2v1.2h-1.2zM305.4 205.9h1.2v1.1h-1.2zM326.0 210.7h0.7v0.6h-0.7zM321.6 208.3h1.2v0.5h-1.2zM322.3 221.8h1.3v0.5h-1.3zM341.4 273.5h1.2v0.9h-1.2zM331.4 237.1h1.3v0.9h-1.3zM327.1 211.9h0.6v1.0h-0.6zM336.3 241.9h1.1v1.2h-1.1zM316.6 222.8h1.2v0.8h-1.2zM343.5 269.1h1.0v0.8h-1.0zM343.4 255.7h1.0v0.6h-1.0zM336.3 228.6h1.2v0.5h-1.2zM335.1 266.1h0.7v1.2h-0.7zM336.3 272.1h1.1v1.1h-1.1zM330.8 215.0h1.1v1.2h-1.1zM343.7 281.6h0.6v0.9h-0.6zM341.7 282.5h0.7v0.8h-0.7zM304.8 213.7h1.2v0.5h-1.2zM341.1 259.5h1.1v0.8h-1.1zM341.9 241.2h1.1v0.9h-1.1zM341.1 213.5h1.2v0.6h-1.2zM308.4 218.7h1.1v0.8h-1.1zM330.5 218.6h1.0v0.8h-1.0zM336.7 278.9h1.0v1.1h-1.0zM327.7 239.8h0.6v0.8h-0.6zM310.6 220.7h1.2v0.5h-1.2zM344.8 236.4h0.6v0.9h-0.6zM331.5 213.1h0.8v0.7h-0.8zM329.8 239.2h0.8v0.9h-0.8zM322.9 218.7h1.2v1.1h-1.2zM306.8 213.2h0.6v0.9h-0.6zM320.7 222.4h1.1v1.0h-1.1zM326.4 219.0h0.5v1.2h-0.5zM341.3 282.6h0.8v1.0h-0.8zM340.8 227.0h1.2v1.1h-1.2zM329.8 253.8h1.0v0.6h-1.0zM339.5 226.0h0.9v0.9h-0.9zM343.1 275.4h0.8v0.5h-0.8zM335.0 259.4h0.6v1.0h-0.6zM333.2 259.8h0.9v0.8h-0.9zM320.6 222.1h0.7v0.6h-0.7zM337.0 265.8h1.2v1.0h-1.2zM329.0 255.3h0.7v1.0h-0.7zM316.4 209.9h0.7v0.9h-0.7zM321.4 209.9h1.1v0.6h-1.1zM312.2 211.0h0.6v0.9h-0.6zM337.3 233.2h0.6v0.8h-0.6zM322.5 213.7h0.6v0.8h-0.6zM342.3 236.6h1.1v0.8h-1.1zM324.0 216.3h1.1v1.3h-1.1zM344.4 265.7h0.6v1.1h-0.6zM331.4 229.6h0.5v1.1h-0.5zM329.1 221.5h0.7v1.0h-0.7zM328.5 242.6h0.8v1.1h-0.8zM342.5 250.6h1.1v1.0h-1.1zM334.5 255.2h1.0v0.9h-1.0zM330.0 220.6h1.3v0.9h-1.3zM339.5 254.8h1.2v0.7h-1.2zM325.1 218.3h1.2v1.3h-1.2zM311.5 215.6h0.8v0.7h-0.8zM337.7 237.4h1.0v0.9h-1.0zM343.8 266.1h1.0v1.2h-1.0zM312.7 222.2h1.1v1.1h-1.1zM336.4 256.6h0.7v0.9h-0.7zM322.1 210.6h1.2v0.9h-1.2zM314.6 218.2h0.9v1.2h-0.9zM313.7 224.7h1.1v0.7h-1.1zM314.1 223.7h0.7v0.9h-0.7zM319.7 208.3h1.0v0.7h-1.0zM326.7 242.6h0.5v0.8h-0.5zM324.8 245.4h1.2v1.3h-1.2zM331.9 245.9h0.6v0.8h-0.6zM318.0 209.8h0.9v1.1h-0.9zM325.1 219.6h0.9v1.3h-0.9zM334.2 241.4h1.3v0.7h-1.3zM338.1 231.2h0.6v0.7h-0.6zM319.4 209.8h0.6v0.9h-0.6zM339.9 241.5h0.7v0.8h-0.7zM340.4 271.8h0.7v0.6h-0.7zM329.3 219.1h1.1v0.6h-1.1zM333.4 247.0h1.2v0.5h-1.2zM332.9 224.3h1.2v0.8h-1.2zM328.8 246.8h0.7v0.9h-0.7zM313.7 205.7h1.0v1.0h-1.0zM341.8 275.3h0.8v0.6h-0.8zM338.1 217.8h1.1v0.8h-1.1zM306.2 213.0h1.2v0.8h-1.2zM327.3 218.6h0.9v0.6h-0.9zM313.2 207.5h0.6v0.6h-0.6zM333.0 275.4h0.7v0.8h-0.7zM337.4 255.3h0.6v1.0h-0.6zM324.2 242.0h0.5v0.9h-0.5zM322.8 213.1h1.1v0.8h-1.1zM329.2 215.8h1.0v0.5h-1.0zM329.4 238.1h0.5v0.8h-0.5zM326.5 215.6h0.7v0.7h-0.7zM330.8 239.8h0.8v0.6h-0.8zM325.6 218.0h0.6v0.5h-0.6zM328.9 215.8h0.5v1.1h-0.5zM342.7 258.6h1.2v1.2h-1.2zM343.1 277.8h0.9v0.6h-0.9zM339.1 233.3h0.8v1.2h-0.8zM335.0 267.7h1.2v1.3h-1.2zM322.1 221.2h1.1v0.9h-1.1zM346.0 266.2h0.6v1.1h-0.6zM322.7 221.5h1.2v0.6h-1.2zM330.7 272.8h1.1v0.9h-1.1zM327.1 215.8h1.3v0.7h-1.3zM329.6 239.8h1.2v1.1h-1.2zM319.3 207.4h1.2v1.0h-1.2zM317.7 220.3h1.3v1.2h-1.3zM336.9 218.9h1.3v0.6h-1.3zM348.1 271.1h1.1v1.0h-1.1zM337.0 249.9h1.0v1.0h-1.0zM331.8 274.5h0.7v0.9h-0.7zM337.9 236.0h1.1v1.1h-1.1zM336.9 281.6h1.2v1.0h-1.2zM335.5 230.0h0.7v1.0h-0.7zM331.3 274.5h1.3v0.9h-1.3zM326.1 214.6h1.3v0.8h-1.3zM329.4 217.2h0.8v0.6h-0.8zM332.8 272.3h0.5v0.5h-0.5zM340.3 274.6h1.3v0.9h-1.3zM332.6 248.1h0.7v0.6h-0.7zM339.0 246.9h1.0v0.9h-1.0zM337.0 211.2h1.1v0.9h-1.1zM331.5 274.6h1.0v1.0h-1.0zM306.8 218.3h1.2v0.8h-1.2zM315.2 213.6h0.8v1.0h-0.8zM330.0 240.5h0.6v0.6h-0.6zM342.6 255.0h1.1v1.0h-1.1zM322.3 206.8h1.2v0.7h-1.2zM334.0 281.7h0.9v1.0h-0.9zM313.4 221.8h1.1v1.1h-1.1zM343.1 215.6h1.2v1.2h-1.2zM337.5 250.6h1.3v1.1h-1.3zM322.6 214.0h1.0v0.6h-1.0zM335.4 283.1h1.1v0.9h-1.1zM332.5 239.8h0.9v1.2h-0.9zM327.1 247.6h0.9v1.2h-0.9zM333.5 220.7h0.7v0.7h-0.7zM315.8 204.5h0.8v1.2h-0.8zM338.9 235.3h1.1v1.1h-1.1zM329.2 255.3h0.6v0.9h-0.6zM342.4 236.2h0.6v1.3h-0.6zM335.8 280.2h1.2v0.7h-1.2zM330.4 230.3h1.0v1.2h-1.0zM346.4 275.9h0.8v1.1h-0.8zM340.2 215.3h1.1v0.5h-1.1zM341.8 273.8h0.9v1.3h-0.9zM317.0 221.7h0.9v0.5h-0.9zM327.3 209.5h0.9v1.1h-0.9zM344.7 265.8h0.8v0.5h-0.8zM304.7 208.3h0.9v0.9h-0.9zM314.1 211.4h1.3v1.1h-1.3zM338.8 273.2h0.9v0.7h-0.9zM340.0 280.1h0.8v1.2h-0.8zM340.8 231.5h0.8v1.2h-0.8zM316.1 219.1h1.0v1.2h-1.0zM327.7 213.9h0.9v1.0h-0.9zM333.9 262.0h1.1v1.3h-1.1zM317.4 208.5h0.7v0.7h-0.7zM313.3 222.3h0.6v1.0h-0.6zM339.5 242.2h0.6v0.8h-0.6zM333.9 211.4h0.9v0.9h-0.9zM339.5 273.4h0.6v1.0h-0.6zM319.8 214.7h1.2v0.9h-1.2zM340.3 222.8h0.9v1.2h-0.9zM325.3 247.8h1.1v0.6h-1.1zM318.0 209.4h0.6v0.6h-0.6zM326.4 218.7h1.3v1.3h-1.3zM337.2 272.8h0.5v1.0h-0.5zM331.3 240.7h1.0v0.6h-1.0zM338.0 274.5h0.9v0.7h-0.9zM338.2 209.3h0.9v1.1h-0.9zM338.9 243.0h1.2v0.6h-1.2zM332.1 255.7h0.5v0.6h-0.5zM313.1 217.8h1.3v0.8h-1.3zM342.3 231.8h1.0v0.9h-1.0zM320.3 222.3h1.2v0.8h-1.2zM306.7 212.1h0.9v0.9h-0.9zM304.0 213.7h1.2v0.9h-1.2zM331.4 238.1h0.7v0.8h-0.7zM332.3 231.1h0.9v1.3h-0.9zM312.6 222.0h0.7v1.2h-0.7zM333.2 251.0h1.1v0.9h-1.1zM332.6 263.6h0.9v1.1h-0.9zM336.4 256.1h1.2v0.6h-1.2zM334.4 273.8h0.6v0.7h-0.6zM317.6 215.6h0.9v0.7h-0.9zM332.6 210.0h0.9v1.0h-0.9zM341.2 243.0h0.6v1.3h-0.6zM327.5 218.9h1.0v1.1h-1.0zM341.5 228.0h1.2v0.6h-1.2zM323.0 212.8h1.0v1.3h-1.0zM315.4 219.8h0.8v0.6h-0.8zM321.8 224.3h0.8v0.8h-0.8zM326.9 216.9h1.2v0.6h-1.2zM333.0 215.0h1.1v1.1h-1.1zM333.5 250.5h1.3v1.1h-1.3zM336.3 249.7h0.9v1.3h-0.9zM334.5 216.6h1.0v1.2h-1.0zM339.8 279.6h0.5v0.7h-0.5zM312.0 216.8h0.8v1.2h-0.8zM336.5 209.4h1.1v0.8h-1.1zM336.5 261.7h1.2v1.1h-1.2zM330.7 270.6h0.6v1.3h-0.6zM317.8 214.1h1.0v1.0h-1.0zM330.1 272.0h0.7v1.1h-0.7zM335.7 215.2h1.3v1.0h-1.3zM334.6 224.3h0.6v1.1h-0.6zM312.7 209.9h1.2v0.8h-1.2zM342.1 278.2h0.6v1.2h-0.6zM334.8 219.9h0.9v1.0h-0.9zM313.1 225.3h0.5v0.8h-0.5zM336.1 263.0h0.7v1.2h-0.7zM315.7 212.0h0.7v1.2h-0.7zM330.9 278.7h1.3v0.6h-1.3zM339.0 231.6h0.7v1.2h-0.7zM324.1 222.5h0.7v0.6h-0.7zM338.8 275.3h0.6v0.7h-0.6zM342.9 217.2h0.8v0.8h-0.8zM320.2 218.2h0.6v1.3h-0.6zM325.0 208.6h0.6v1.3h-0.6zM338.3 282.8h0.9v0.6h-0.9zM335.0 270.8h0.6v0.9h-0.6zM317.7 210.6h0.8v0.8h-0.8zM331.4 269.2h1.2v1.3h-1.2zM337.9 260.3h1.3v0.6h-1.3zM341.0 218.4h0.7v0.8h-0.7zM307.3 218.0h0.5v1.1h-0.5zM323.3 208.2h1.0v0.9h-1.0zM321.9 207.7h1.2v1.0h-1.2zM327.1 244.2h1.2v1.2h-1.2zM306.9 213.0h0.6v0.5h-0.6zM342.5 235.2h1.2v0.7h-1.2zM317.8 214.6h0.7v1.0h-0.7zM329.9 254.4h0.5v1.2h-0.5zM320.2 222.3h0.6v0.9h-0.6zM338.9 212.9h0.9v1.2h-0.9zM325.1 243.3h1.1v0.8h-1.1zM303.7 207.9h1.3v0.8h-1.3zM314.1 216.7h0.8v0.8h-0.8zM320.1 212.0h1.0v0.5h-1.0zM318.9 213.0h1.2v1.2h-1.2zM338.3 239.6h1.3v1.0h-1.3zM344.7 277.1h1.1v1.2h-1.1zM308.9 212.1h1.1v1.0h-1.1zM344.4 268.0h1.2v1.1h-1.2zM327.5 216.7h0.7v0.8h-0.7zM324.5 208.3h1.2v1.0h-1.2zM307.5 211.0h0.6v1.3h-0.6zM339.6 220.7h1.0v0.6h-1.0zM315.9 212.7h1.2v1.2h-1.2zM323.9 213.9h1.3v1.0h-1.3zM333.9 234.9h0.7v0.9h-0.7zM322.9 212.6h0.6v1.3h-0.6zM332.7 227.5h1.2v1.2h-1.2zM323.5 207.9h0.6v0.6h-0.6zM341.6 269.6h0.5v0.5h-0.5zM311.9 211.5h0.7v0.9h-0.7zM342.0 274.5h1.1v1.0h-1.1zM334.4 221.0h1.3v0.7h-1.3zM329.5 243.8h0.7v1.1h-0.7zM326.4 245.9h0.6v1.2h-0.6zM339.0 249.4h1.2v0.6h-1.2zM329.1 217.9h1.3v0.8h-1.3zM340.4 248.8h1.0v1.1h-1.0zM327.1 210.6h0.8v0.5h-0.8zM335.4 230.1h1.1v1.2h-1.1zM334.9 267.7h1.2v0.7h-1.2zM340.6 218.2h1.3v1.2h-1.3zM317.7 221.9h1.0v0.8h-1.0zM331.1 283.5h0.8v0.7h-0.8zM330.8 276.3h1.1v0.7h-1.1zM341.4 269.1h1.2v0.9h-1.2zM334.9 264.9h1.1v0.6h-1.1zM342.6 266.2h0.9v1.1h-0.9zM341.6 242.6h1.2v0.6h-1.2zM323.6 217.0h0.8v1.2h-0.8zM315.8 225.7h0.8v0.6h-0.8zM325.4 220.1h0.7v0.8h-0.7zM341.0 257.1h0.5v0.6h-0.5zM341.0 216.4h1.1v0.5h-1.1zM337.7 257.0h0.8v0.9h-0.8zM311.6 207.6h0.7v0.6h-0.7zM335.5 275.2h0.5v1.3h-0.5zM338.2 257.3h1.1v1.2h-1.1zM327.4 214.3h1.2v1.3h-1.2zM328.6 239.3h0.6v0.8h-0.6zM338.9 275.0h1.3v0.7h-1.3zM329.8 241.5h0.5v0.9h-0.5zM329.3 242.0h0.5v0.8h-0.5zM328.2 223.2h0.9v0.5h-0.9zM307.9 215.7h0.9v0.5h-0.9zM329.6 279.9h0.7v0.8h-0.7zM341.5 254.3h0.7v1.3h-0.7zM327.2 213.9h0.5v1.0h-0.5zM337.7 279.6h1.1v0.5h-1.1zM311.0 218.4h1.1v1.1h-1.1zM334.7 252.8h0.8v0.9h-0.8zM311.8 215.4h0.9v0.7h-0.9zM330.9 283.9h0.7v0.8h-0.7zM343.1 239.0h0.9v1.2h-0.9zM337.3 266.8h0.7v0.8h-0.7zM339.1 227.0h0.6v1.2h-0.6zM333.1 218.9h1.3v0.9h-1.3zM341.1 212.7h1.0v0.5h-1.0zM338.6 247.0h0.8v0.6h-0.8zM336.9 216.0h0.9v0.5h-0.9zM314.6 209.8h1.1v0.6h-1.1zM335.8 255.5h1.2v0.9h-1.2zM340.0 214.0h0.6v1.1h-0.6zM325.9 214.3h0.9v0.6h-0.9zM338.8 245.4h0.6v0.9h-0.6zM333.5 216.5h0.7v0.6h-0.7zM336.1 231.0h0.5v0.6h-0.5zM340.8 215.8h1.2v0.7h-1.2zM326.2 249.1h1.1v1.3h-1.1zM335.1 243.5h0.6v0.9h-0.6zM337.8 245.2h0.9v0.9h-0.9zM314.3 206.1h0.9v0.7h-0.9zM317.5 217.0h0.9v1.3h-0.9zM331.1 245.8h0.9v1.3h-0.9zM325.5 216.5h0.8v0.7h-0.8zM323.6 215.7h0.7v1.0h-0.7zM321.5 213.9h0.9v0.8h-0.9zM302.9 210.7h1.1v0.8h-1.1zM335.3 271.9h1.2v1.1h-1.2zM304.5 210.3h0.7v1.2h-0.7zM339.9 239.6h0.6v0.6h-0.6zM328.2 213.1h1.0v0.7h-1.0zM337.1 231.5h1.1v1.2h-1.1zM337.5 250.7h0.5v0.9h-0.5zM332.7 273.3h1.3v1.2h-1.3zM337.6 213.1h1.0v1.2h-1.0zM329.6 282.5h1.2v0.7h-1.2zM329.1 282.2h0.8v0.6h-0.8zM340.1 259.7h0.9v0.7h-0.9zM341.3 249.7h1.1v1.2h-1.1zM342.8 276.5h1.0v1.0h-1.0zM325.3 223.0h1.0v0.6h-1.0zM335.1 251.4h0.8v1.1h-0.8zM337.3 227.7h0.9v0.8h-0.9zM340.5 217.5h0.8v1.0h-0.8zM333.4 270.7h0.6v0.9h-0.6zM335.3 261.5h0.5v1.2h-0.5zM337.1 237.2h0.7v0.7h-0.7zM327.4 244.4h0.8v1.1h-0.8zM326.5 212.4h1.2v1.1h-1.2zM337.8 237.5h0.8v0.9h-0.8zM309.0 207.9h0.8v1.2h-0.8zM333.2 243.9h1.1v1.0h-1.1zM335.5 265.5h1.2v0.7h-1.2zM313.0 210.1h1.2v1.0h-1.2zM336.6 254.1h1.0v1.1h-1.0zM313.9 209.4h1.2v1.1h-1.2zM306.7 215.9h0.6v1.0h-0.6zM343.9 264.9h0.5v0.9h-0.5zM334.3 269.5h1.1v0.6h-1.1zM325.4 220.7h1.1v0.5h-1.1zM342.4 268.9h0.7v1.0h-0.7zM335.3 244.2h0.6v1.2h-0.6zM341.8 228.4h0.6v0.9h-0.6zM329.3 252.6h1.1v0.6h-1.1zM328.8 214.4h1.2v0.7h-1.2zM338.5 266.5h1.0v1.2h-1.0zM316.1 208.1h1.3v0.8h-1.3zM335.9 210.1h1.2v1.2h-1.2zM329.9 277.8h1.0v1.1h-1.0zM327.6 246.8h1.1v0.6h-1.1zM343.0 215.0h0.8v1.3h-0.8zM336.7 268.0h0.6v0.5h-0.6zM311.5 219.3h0.5v1.0h-0.5zM335.5 268.9h1.1v1.0h-1.1zM320.7 223.0h0.9v1.2h-0.9zM314.2 205.4h0.9v1.1h-0.9zM340.9 214.1h0.6v1.2h-0.6zM313.7 222.2h1.0v1.3h-1.0zM330.7 272.7h0.5v0.7h-0.5zM332.7 230.5h0.8v0.5h-0.8zM312.6 218.7h0.8v1.1h-0.8zM344.1 281.1h1.3v1.0h-1.3zM338.7 279.5h0.9v0.9h-0.9zM340.8 278.3h1.2v0.9h-1.2zM326.8 215.5h1.2v0.8h-1.2zM346.6 267.6h0.8v1.1h-0.8zM341.9 233.3h1.2v0.7h-1.2zM329.9 222.6h0.8v1.1h-0.8zM334.7 218.4h0.7v0.8h-0.7zM343.8 237.7h1.2v1.0h-1.2zM328.2 209.4h1.1v0.8h-1.1zM330.5 254.0h1.2v0.8h-1.2zM338.6 229.5h1.0v0.8h-1.0zM334.1 230.2h0.7v1.0h-0.7zM337.9 223.6h1.1v1.1h-1.1zM322.0 218.4h0.9v0.8h-0.9zM341.9 251.5h0.6v0.6h-0.6zM335.8 282.0h1.1v0.5h-1.1zM334.8 283.7h0.7v0.9h-0.7zM346.4 273.5h0.7v0.5h-0.7zM310.9 205.5h0.5v0.7h-0.5zM326.4 223.0h0.5v0.8h-0.5zM337.5 248.5h0.7v1.1h-0.7zM338.2 258.5h0.7v0.6h-0.7zM315.3 216.3h0.9v0.6h-0.9zM335.2 256.6h1.1v1.3h-1.1zM325.0 214.1h1.3v1.0h-1.3zM332.9 216.0h0.9v0.6h-0.9zM337.5 249.5h1.2v0.6h-1.2zM343.7 240.1h0.6v1.3h-0.6zM314.2 225.5h0.6v1.3h-0.6zM324.5 243.4h0.9v1.0h-0.9zM338.9 236.4h0.9v0.8h-0.9zM338.8 215.3h1.1v0.8h-1.1zM309.7 213.2h0.7v0.8h-0.7zM337.3 235.8h1.0v0.9h-1.0zM318.5 222.5h0.6v0.6h-0.6zM332.1 270.7h0.7v0.7h-0.7zM312.9 214.7h1.2v0.8h-1.2zM317.4 215.0h0.7v1.0h-0.7zM331.1 244.1h0.6v1.0h-0.6zM336.1 285.0h0.6v0.9h-0.6zM331.4 242.6h0.6v0.5h-0.6zM329.8 216.4h0.8v0.8h-0.8zM341.4 251.2h0.9v1.3h-0.9zM309.1 222.4h0.9v1.1h-0.9zM334.9 280.5h0.9v0.6h-0.9zM344.8 216.1h1.3v0.5h-1.3zM316.2 212.1h0.7v1.3h-0.7zM329.8 242.2h1.1v0.6h-1.1zM335.9 272.3h0.8v0.8h-0.8zM340.8 215.0h1.3v1.1h-1.3zM338.7 216.2h0.5v0.9h-0.5zM339.2 231.4h1.1v0.6h-1.1zM337.5 216.7h0.8v0.8h-0.8zM329.5 220.6h1.0v1.2h-1.0zM336.8 212.1h1.3v1.2h-1.3zM337.5 226.6h0.9v1.2h-0.9zM339.4 221.1h0.8v0.8h-0.8zM331.1 219.6h0.9v0.6h-0.9zM342.6 253.1h0.9v1.3h-0.9zM339.0 269.5h0.8v0.9h-0.8zM338.0 256.8h0.8v1.0h-0.8zM341.6 251.7h1.1v0.6h-1.1zM303.6 209.6h0.7v1.1h-0.7zM333.3 243.5h0.8v0.9h-0.8zM339.7 227.3h1.2v0.6h-1.2zM310.8 210.0h1.1v0.9h-1.1zM344.2 268.3h1.1v0.6h-1.1zM327.0 244.5h1.1v1.0h-1.1zM335.3 226.7h0.5v0.5h-0.5zM335.7 252.7h1.3v1.3h-1.3zM333.7 238.3h0.9v0.8h-0.9zM339.0 272.8h0.9v0.7h-0.9zM311.4 212.3h1.1v0.7h-1.1zM334.5 240.8h0.6v0.6h-0.6zM315.3 216.3h0.6v0.8h-0.6zM335.4 279.8h1.2v1.2h-1.2zM345.4 268.5h1.2v1.0h-1.2zM332.7 221.5h0.6v1.0h-0.6zM332.2 223.0h1.0v1.2h-1.0zM341.8 280.8h0.7v1.2h-0.7zM335.9 263.2h1.0v0.9h-1.0zM338.6 246.7h1.1v1.1h-1.1zM326.9 250.9h0.7v1.0h-0.7zM336.4 283.2h1.3v0.7h-1.3zM342.6 278.4h1.3v1.2h-1.3zM337.1 241.1h1.3v0.6h-1.3zM330.6 220.5h1.2v0.6h-1.2zM343.1 279.7h0.6v1.0h-0.6zM323.2 207.6h1.0v1.2h-1.0zM313.0 219.1h1.2v0.6h-1.2zM307.7 221.0h1.1v1.0h-1.1zM334.2 235.0h1.1v0.6h-1.1zM337.4 233.6h1.2v0.5h-1.2zM341.5 281.5h1.3v1.1h-1.3zM333.7 282.2h1.3v1.0h-1.3zM328.2 212.8h0.8v1.2h-0.8zM308.8 207.7h0.6v0.7h-0.6zM310.2 220.8h1.0v0.7h-1.0zM336.9 226.9h1.1v0.6h-1.1zM330.2 255.1h0.7v1.0h-0.7zM308.7 207.8h0.8v1.1h-0.8zM315.4 212.1h1.3v0.9h-1.3zM344.7 273.0h0.8v0.6h-0.8zM339.8 236.0h0.7v1.2h-0.7zM344.8 279.4h0.9v0.8h-0.9zM339.7 229.4h1.2v0.6h-1.2zM323.5 207.7h1.1v1.2h-1.1zM316.3 219.9h0.9v1.2h-0.9zM322.0 215.9h1.3v0.6h-1.3zM325.8 212.8h1.0v1.3h-1.0zM337.7 263.8h1.1v0.8h-1.1zM337.6 241.1h0.6v0.6h-0.6zM335.9 272.8h0.7v1.0h-0.7zM332.7 245.2h0.8v0.6h-0.8zM336.2 215.7h0.9v0.7h-0.9zM337.9 245.9h0.8v1.1h-0.8zM331.1 235.9h1.2v1.0h-1.2zM339.9 235.4h1.2v1.0h-1.2zM331.1 267.5h1.1v0.8h-1.1zM343.9 236.0h0.8v1.1h-0.8zM326.8 219.3h0.8v1.1h-0.8zM339.2 251.9h1.1v0.9h-1.1zM315.2 218.9h0.9v0.7h-0.9zM303.1 209.5h0.8v0.8h-0.8zM317.7 211.0h1.2v1.1h-1.2zM314.2 215.2h1.3v1.2h-1.3zM335.2 233.8h1.0v0.6h-1.0zM343.0 238.4h0.8v1.0h-0.8zM337.8 278.3h1.0v0.6h-1.0zM336.3 215.7h1.2v1.1h-1.2zM338.0 259.0h1.2v0.6h-1.2zM336.5 256.2h1.0v0.7h-1.0zM317.6 225.1h1.2v0.6h-1.2zM310.5 204.4h1.1v1.2h-1.1zM333.4 259.6h1.2v0.9h-1.2zM346.1 267.1h0.9v0.8h-0.9zM307.5 215.6h0.8v0.9h-0.8zM328.8 219.8h0.8v0.9h-0.8zM316.8 224.3h1.0v0.6h-1.0zM331.1 282.7h0.9v0.6h-0.9zM340.7 250.8h1.3v0.8h-1.3zM316.7 215.4h0.6v0.6h-0.6zM340.5 222.0h0.7v1.3h-0.7zM338.5 241.8h0.6v1.0h-0.6zM337.6 225.2h1.1v0.6h-1.1zM324.4 206.3h0.6v1.1h-0.6zM340.0 219.9h1.1v1.1h-1.1zM316.9 209.5h1.3v1.0h-1.3zM336.2 257.3h0.9v0.9h-0.9zM324.5 209.3h0.9v0.8h-0.9zM334.2 231.5h0.6v1.0h-0.6zM342.5 280.7h0.5v0.8h-0.5zM329.0 239.6h0.5v0.6h-0.5zM341.8 239.5h0.9v1.2h-0.9zM337.0 277.5h0.8v0.6h-0.8zM327.6 208.9h0.8v1.1h-0.8zM312.3 221.3h0.7v1.1h-0.7zM336.3 212.0h1.2v0.6h-1.2zM335.6 220.8h1.0v0.8h-1.0zM334.0 237.2h0.8v0.7h-0.8zM331.2 275.0h0.9v0.6h-0.9zM325.7 246.3h1.1v1.0h-1.1zM333.0 238.5h0.9v1.3h-0.9zM338.3 245.3h0.6v0.8h-0.6zM311.7 210.8h1.2v0.7h-1.2zM308.6 210.8h1.0v1.0h-1.0zM330.3 228.1h0.8v0.7h-0.8zM322.1 214.2h0.9v1.3h-0.9zM335.6 242.8h1.1v0.9h-1.1zM316.3 222.8h0.8v1.3h-0.8zM337.1 239.1h0.7v1.2h-0.7zM333.6 226.5h1.3v0.9h-1.3zM326.6 212.4h0.6v0.6h-0.6zM330.3 277.7h0.6v0.9h-0.6zM341.1 241.4h1.2v0.8h-1.2zM331.9 244.9h0.5v0.8h-0.5zM347.6 274.2h0.9v0.6h-0.9zM340.9 268.8h0.6v0.6h-0.6zM312.6 225.2h1.1v0.9h-1.1zM311.2 212.4h1.1v1.1h-1.1zM337.9 209.2h0.7v0.6h-0.7zM331.8 215.0h0.7v0.8h-0.7zM346.1 279.5h0.7v1.0h-0.7zM337.5 259.6h0.6v0.8h-0.6zM338.7 283.9h1.1v0.7h-1.1zM327.7 245.9h1.0v0.6h-1.0zM339.4 280.8h0.7v0.8h-0.7zM334.5 234.0h0.7v0.9h-0.7zM333.2 246.3h1.3v1.1h-1.3zM326.8 223.6h1.2v0.9h-1.2zM314.8 216.2h0.9v0.9h-0.9zM337.5 214.0h1.3v1.3h-1.3zM329.3 274.7h0.7v0.8h-0.7zM323.6 241.6h1.3v0.7h-1.3zM328.7 247.4h1.1v0.9h-1.1zM346.5 271.5h1.0v0.9h-1.0zM336.0 258.9h1.2v1.1h-1.2zM330.1 229.0h1.2v0.6h-1.2zM318.7 210.6h0.7v1.1h-0.7zM334.4 218.7h0.8v0.7h-0.8zM313.5 204.7h0.9v0.6h-0.9zM325.8 243.1h0.7v0.7h-0.7zM333.0 262.2h1.1v0.8h-1.1zM326.7 243.9h0.9v0.6h-0.9zM322.3 221.0h1.3v0.8h-1.3zM309.1 211.7h0.8v1.1h-0.8zM321.2 221.5h0.6v1.1h-0.6zM334.6 225.8h0.8v1.2h-0.8zM311.4 221.9h0.8v1.1h-0.8zM327.3 222.0h0.5v0.9h-0.5zM323.3 208.1h1.0v0.6h-1.0zM332.9 217.3h0.9v1.2h-0.9zM303.7 207.0h1.2v0.8h-1.2zM341.3 231.7h0.7v1.2h-0.7zM324.3 213.7h0.6v1.1h-0.6zM327.8 239.3h1.1v0.8h-1.1zM312.7 226.2h0.5v1.0h-0.5zM334.0 274.4h0.6v1.1h-0.6zM339.7 224.2h0.5v0.9h-0.5zM334.5 210.3h1.0v0.8h-1.0zM321.7 209.7h1.0v1.0h-1.0zM339.6 237.1h0.6v1.0h-0.6zM330.5 235.9h0.7v0.7h-0.7zM338.8 252.8h0.6v1.2h-0.6zM334.5 249.9h1.0v0.8h-1.0zM334.2 218.6h0.8v0.8h-0.8zM343.5 237.4h0.8v0.7h-0.8zM337.5 234.5h0.6v1.1h-0.6zM335.6 231.7h1.1v1.0h-1.1zM329.9 280.7h0.8v1.0h-0.8zM336.9 212.8h0.8v0.7h-0.8zM332.1 242.3h0.6v1.2h-0.6zM333.8 240.3h0.9v0.8h-0.9zM307.8 214.2h1.0v1.3h-1.0zM338.9 231.6h1.3v0.8h-1.3zM330.1 226.0h0.6v1.2h-0.6zM330.3 240.6h0.7v0.5h-0.7zM329.4 275.5h0.9v1.0h-0.9zM318.1 211.6h1.1v1.3h-1.1zM344.7 273.5h0.9v1.1h-0.9zM331.0 276.3h0.6v0.8h-0.6zM325.4 241.2h0.6v0.5h-0.6zM337.5 210.4h1.0v0.8h-1.0zM342.4 230.7h1.3v1.1h-1.3zM335.0 266.7h0.7v1.2h-0.7zM319.8 215.4h1.3v0.8h-1.3zM339.7 229.6h0.8v0.8h-0.8zM311.3 209.3h0.8v0.8h-0.8zM326.6 209.4h0.5v0.8h-0.5zM315.3 208.6h0.9v1.1h-0.9zM332.8 253.1h0.6v1.1h-0.6zM308.8 209.1h0.5v0.9h-0.5zM315.8 205.4h1.3v0.7h-1.3zM331.2 276.1h1.1v0.6h-1.1zM333.2 235.2h1.2v0.7h-1.2zM337.4 222.0h0.8v0.9h-0.8zM331.5 215.5h0.6v0.7h-0.6zM340.0 251.8h1.1v1.0h-1.1zM330.9 226.8h0.5v1.0h-0.5zM325.2 221.5h0.6v0.7h-0.6zM332.2 248.8h0.6v0.9h-0.6zM342.1 268.6h0.7v1.2h-0.7zM340.4 222.5h1.3v0.7h-1.3zM332.5 279.7h0.6v0.6h-0.6zM339.3 249.4h0.6v1.3h-0.6zM310.4 206.7h0.9v0.5h-0.9zM334.6 252.5h0.8v0.8h-0.8zM314.8 217.2h0.6v0.8h-0.6zM327.2 222.1h0.8v1.2h-0.8zM338.7 283.2h1.2v0.9h-1.2zM333.9 245.4h0.7v0.9h-0.7zM340.8 272.5h0.9v1.1h-0.9zM332.4 258.1h0.6v1.1h-0.6zM337.9 239.4h0.7v0.5h-0.7zM332.3 242.1h1.3v1.2h-1.3zM342.2 228.2h1.1v1.3h-1.1zM340.6 236.7h0.9v1.1h-0.9zM337.6 234.3h0.7v0.9h-0.7zM338.2 257.6h0.6v0.9h-0.6zM333.8 234.8h1.0v0.7h-1.0zM335.3 261.8h1.0v0.9h-1.0zM329.0 279.4h0.7v0.8h-0.7zM334.6 257.7h1.3v0.7h-1.3zM331.7 221.6h1.2v0.7h-1.2zM334.8 266.1h0.6v1.0h-0.6zM341.3 271.3h0.6v0.5h-0.6zM330.6 272.4h0.7v0.6h-0.7zM338.0 264.9h0.7v1.0h-0.7zM338.6 250.2h0.9v1.1h-0.9zM329.7 278.7h0.6v0.9h-0.6zM335.4 229.2h0.6v1.0h-0.6zM336.6 243.6h1.2v0.6h-1.2zM334.9 254.0h0.8v0.8h-0.8zM340.1 251.6h0.6v0.9h-0.6zM343.2 229.9h0.5v1.1h-0.5zM332.1 248.7h0.6v1.1h-0.6zM337.9 235.3h1.2v0.6h-1.2zM335.6 250.8h0.6v0.6h-0.6zM341.2 234.2h0.6v0.5h-0.6zM347.0 273.4h1.1v1.1h-1.1zM334.3 228.9h0.8v0.8h-0.8zM335.7 262.5h1.1v0.8h-1.1zM343.5 276.8h0.7v0.8h-0.7zM332.0 278.3h1.2v1.2h-1.2zM339.2 268.2h0.7v1.0h-0.7zM333.2 275.6h1.0v0.9h-1.0zM337.0 262.0h0.5v1.2h-0.5zM339.4 221.6h0.7v0.8h-0.7zM337.7 236.8h1.2v0.9h-1.2zM339.6 254.8h0.7v0.7h-0.7zM339.1 279.0h1.3v1.1h-1.3zM342.7 235.1h0.9v0.8h-0.9zM335.7 261.8h0.8v0.9h-0.8zM329.5 276.3h0.5v1.3h-0.5zM338.9 234.3h1.3v1.2h-1.3zM335.8 246.7h1.2v1.0h-1.2zM329.9 274.1h0.9v1.1h-0.9zM328.3 284.9h0.9v0.6h-0.9zM330.6 277.0h0.6v1.1h-0.6zM340.1 216.9h1.2v1.1h-1.2zM339.9 253.8h1.2v0.6h-1.2zM346.7 265.9h1.1v1.0h-1.1zM334.4 242.8h0.7v0.5h-0.7zM340.4 253.3h1.1v1.1h-1.1zM328.8 284.5h0.7v1.0h-0.7zM334.1 255.1h0.9v0.9h-0.9zM336.4 232.4h1.2v1.0h-1.2zM333.4 277.8h0.5v0.9h-0.5zM333.1 271.3h1.0v0.9h-1.0zM339.6 236.3h1.1v1.0h-1.1zM331.8 267.2h0.6v0.7h-0.6zM334.0 284.5h0.7v1.3h-0.7zM331.1 256.4h0.8v0.5h-0.8zM334.1 243.5h1.0v1.1h-1.0zM331.0 284.1h0.9v0.9h-0.9zM338.0 228.4h1.2v0.9h-1.2zM338.6 233.0h1.0v1.2h-1.0zM332.0 247.5h0.9v0.9h-0.9zM342.4 239.0h0.7v0.8h-0.7zM341.5 218.6h0.9v0.6h-0.9zM348.5 268.6h0.5v1.2h-0.5zM339.5 249.4h1.2v0.7h-1.2zM331.6 254.4h0.7v1.1h-0.7zM329.9 282.4h0.6v0.6h-0.6zM334.2 277.6h1.1v1.3h-1.1zM336.8 220.8h1.2v0.7h-1.2zM330.6 273.9h1.1v0.7h-1.1zM332.6 210.7h0.8v1.0h-0.8zM336.1 216.1h0.5v1.2h-0.5zM335.1 231.3h0.7v1.2h-0.7zM342.8 230.0h0.8v0.7h-0.8zM340.1 228.8h1.2v0.9h-1.2zM330.9 278.5h1.2v1.2h-1.2zM339.5 217.1h0.6v1.3h-0.6zM330.7 277.6h0.9v0.9h-0.9zM337.1 211.4h1.1v0.8h-1.1zM329.3 276.7h0.5v1.0h-0.5zM342.8 253.2h1.2v0.6h-1.2zM335.7 227.9h1.0v0.5h-1.0zM334.3 284.1h0.6v0.7h-0.6zM343.8 273.3h0.6v0.7h-0.6zM332.7 240.5h0.9v1.2h-0.9zM347.8 272.1h0.8v0.6h-0.8zM336.7 260.8h0.9v1.2h-0.9zM341.8 236.9h1.1v0.7h-1.1zM337.0 261.1h0.7v1.1h-0.7zM340.2 221.6h1.0v0.5h-1.0zM338.2 246.2h1.1v1.2h-1.1zM344.4 276.9h0.7v0.9h-0.7zM344.0 215.6h0.6v0.9h-0.6zM339.3 216.2h1.2v1.2h-1.2zM334.3 259.0h0.5v0.8h-0.5zM342.1 269.6h0.6v1.2h-0.6zM338.8 269.9h0.7v0.8h-0.7zM335.1 268.5h0.7v1.2h-0.7zM331.7 282.8h1.1v0.9h-1.1zM339.1 257.4h0.7v1.2h-0.7zM330.5 245.8h0.8v0.7h-0.8zM334.7 233.7h0.9v0.7h-0.9zM332.8 232.5h0.7v1.1h-0.7zM343.2 270.0h0.9v1.0h-0.9zM338.6 235.5h0.6v0.9h-0.6zM335.9 238.9h1.3v0.6h-1.3zM329.0 245.7h1.1v1.0h-1.1zM339.9 229.9h0.8v0.7h-0.8zM342.7 228.8h0.7v1.0h-0.7zM332.8 226.9h0.5v0.9h-0.5zM344.5 280.6h0.7v0.6h-0.7zM336.2 280.4h1.0v0.7h-1.0zM342.2 238.6h0.7v0.9h-0.7zM340.3 219.6h1.1v1.0h-1.1zM335.9 270.1h1.0v0.7h-1.0zM331.1 245.9h0.9v1.1h-0.9zM330.9 244.0h1.1v1.1h-1.1zM331.9 226.2h0.8v0.8h-0.8zM333.7 264.0h0.8v0.9h-0.8zM338.0 256.7h1.1v0.8h-1.1zM332.4 263.1h1.2v1.2h-1.2zM342.2 238.8h0.8v0.7h-0.8zM333.2 250.4h0.7v1.1h-0.7zM335.5 239.9h0.6v0.9h-0.6zM335.6 251.9h1.3v0.7h-1.3zM336.9 252.3h1.1v0.7h-1.1zM337.5 252.4h1.3v1.2h-1.3zM335.5 281.4h0.6v0.8h-0.6zM332.6 231.6h1.2v0.7h-1.2zM340.0 269.7h0.7v1.2h-0.7zM335.8 260.2h1.1v1.0h-1.1zM338.8 249.8h1.1v0.6h-1.1zM340.8 270.9h0.7v0.6h-0.7zM330.9 216.7h1.0v0.7h-1.0zM333.8 267.3h0.8v1.3h-0.8zM347.0 277.6h1.0v1.0h-1.0zM339.3 280.2h0.7v1.3h-0.7zM330.7 271.3h1.2v0.9h-1.2zM332.4 251.0h1.2v0.7h-1.2zM331.6 273.8h0.6v0.9h-0.6zM339.1 255.1h0.9v1.1h-0.9zM338.4 234.8h0.6v0.8h-0.6zM333.6 253.3h0.7v1.2h-0.7zM337.0 219.1h1.0v0.9h-1.0zM347.3 273.7h1.1v0.9h-1.1zM343.5 234.2h1.3v1.1h-1.3zM340.2 248.8h0.6v1.2h-0.6zM334.0 210.0h1.0v1.0h-1.0zM331.2 275.8h1.3v1.2h-1.3zM331.2 247.2h1.2v1.1h-1.2zM334.2 245.5h0.7v1.1h-0.7zM345.9 271.2h0.7v0.8h-0.7zM343.1 231.3h1.0v0.6h-1.0zM342.4 251.4h1.2v1.0h-1.2zM335.5 223.1h0.8v1.2h-0.8zM327.8 253.2h1.3v0.8h-1.3zM340.3 279.7h0.9v1.0h-0.9zM338.6 257.6h1.2v0.7h-1.2zM332.9 215.0h1.2v0.8h-1.2zM337.1 228.3h1.1v1.1h-1.1zM341.8 275.3h0.9v1.2h-0.9zM329.1 253.8h0.9v1.0h-0.9zM346.3 277.0h1.1v0.7h-1.1zM337.8 218.3h1.2v1.1h-1.2zM335.5 274.0h1.0v0.9h-1.0zM343.5 256.0h0.7v0.9h-0.7zM334.0 253.9h1.1v0.7h-1.1zM335.0 253.4h0.9v1.2h-0.9zM334.6 246.4h1.1v1.0h-1.1zM347.4 270.3h1.3v0.9h-1.3zM339.9 227.9h1.3v1.1h-1.3zM335.2 236.3h0.5v1.2h-0.5zM336.2 218.5h1.2v1.1h-1.2zM333.0 240.1h0.5v0.9h-0.5zM336.1 233.6h0.6v0.7h-0.6zM342.2 282.8h0.8v0.6h-0.8zM334.1 234.6h1.3v0.8h-1.3zM337.0 281.5h1.0v0.7h-1.0zM337.4 266.7h0.8v1.1h-0.8zM340.1 253.3h0.9v1.1h-0.9zM341.0 226.2h0.7v1.2h-0.7zM340.2 272.1h0.8v0.9h-0.8zM346.4 267.3h1.1v1.1h-1.1zM333.0 276.8h0.5v1.3h-0.5zM331.0 274.1h0.6v0.9h-0.6zM336.1 229.4h1.1v0.6h-1.1zM329.8 275.2h0.6v1.1h-0.6zM331.5 223.5h0.9v1.2h-0.9zM339.4 254.7h1.1v1.0h-1.1zM334.3 242.0h0.9v0.6h-0.9zM341.2 239.6h0.8v0.9h-0.8zM337.7 228.8h1.2v0.5h-1.2zM341.5 225.1h1.0v0.7h-1.0zM338.6 217.6h0.6v0.9h-0.6zM335.6 254.7h0.6v0.8h-0.6zM335.7 218.2h0.9v0.8h-0.9zM333.5 240.0h0.5v0.9h-0.5zM343.3 257.9h1.0v1.3h-1.0zM331.9 258.7h1.2v1.1h-1.2zM338.9 272.2h0.9v1.3h-0.9zM333.7 260.6h0.8v0.7h-0.8zM340.3 282.1h0.5v0.6h-0.5zM338.6 219.1h0.7v0.6h-0.7zM346.8 265.2h0.7v1.3h-0.7zM338.7 212.1h0.9v0.6h-0.9zM332.5 276.1h1.0v0.7h-1.0zM336.5 237.8h1.0v0.9h-1.0zM347.7 269.1h0.8v1.1h-0.8zM337.2 255.0h0.8v1.3h-0.8zM332.7 242.8h0.6v1.1h-0.6zM333.9 210.6h1.0v0.9h-1.0zM329.8 285.6h1.2v0.7h-1.2zM335.6 257.5h1.3v0.9h-1.3zM337.0 209.5h0.6v1.1h-0.6zM333.2 265.9h0.7v1.1h-0.7zM340.6 266.3h1.0v1.1h-1.0zM332.8 249.5h1.1v0.5h-1.1zM329.7 248.0h0.6v1.1h-0.6zM339.2 250.1h1.1v1.2h-1.1zM340.0 215.9h1.1v1.2h-1.1zM336.2 251.2h1.1v0.5h-1.1zM346.5 269.0h0.7v0.7h-0.7zM339.9 259.5h0.7v0.7h-0.7zM340.1 228.3h0.9v0.7h-0.9zM346.5 265.4h0.8v1.1h-0.8zM330.6 279.3h0.7v1.2h-0.7zM336.4 272.3h0.9v1.1h-0.9zM336.2 214.9h1.2v0.8h-1.2zM328.1 254.6h1.2v0.7h-1.2zM335.0 237.6h1.1v0.9h-1.1zM340.9 217.4h0.7v1.3h-0.7zM332.1 271.0h0.5v0.9h-0.5zM338.2 228.7h0.5v0.9h-0.5zM332.6 247.8h1.2v1.1h-1.2zM336.2 234.8h0.7v1.2h-0.7zM337.7 220.7h0.9v1.2h-0.9zM335.1 265.7h0.8v0.6h-0.8zM338.3 210.0h0.7v0.8h-0.7zM333.0 266.3h0.9v1.1h-0.9zM334.0 260.3h1.0v0.5h-1.0zM344.2 270.0h0.8v1.0h-0.8zM337.4 213.4h1.1v0.7h-1.1zM340.7 221.5h1.3v1.0h-1.3zM342.4 250.8h1.3v1.1h-1.3zM338.6 218.1h0.9v0.6h-0.9zM338.3 275.9h0.9v1.0h-0.9zM337.6 241.4h1.0v1.0h-1.0zM333.8 275.5h1.0v0.5h-1.0zM329.2 283.5h1.0v1.2h-1.0zM334.2 222.9h0.6v0.9h-0.6zM328.4 284.7h0.6v1.0h-0.6zM332.2 260.8h1.2v1.0h-1.2zM334.1 270.7h1.3v0.9h-1.3zM334.4 281.6h0.6v1.0h-0.6zM332.3 279.3h0.6v0.8h-0.6zM338.7 277.1h0.9v0.6h-0.9zM332.6 270.2h1.1v1.2h-1.1zM335.0 267.9h1.0v0.6h-1.0zM339.3 269.3h0.8v0.9h-0.8zM337.8 217.9h1.1v0.8h-1.1zM334.0 232.7h0.9v1.2h-0.9zM342.3 233.5h0.5v0.6h-0.5zM347.4 276.9h0.7v1.1h-0.7zM346.2 267.5h0.9v0.8h-0.9zM336.3 210.2h1.3v1.0h-1.3zM338.0 280.4h1.1v0.6h-1.1zM332.4 213.0h1.0v1.0h-1.0zM334.8 251.1h0.8v0.8h-0.8zM330.8 270.4h1.3v1.0h-1.3zM333.7 240.5h1.1v0.8h-1.1zM347.4 270.9h0.8v1.2h-0.8zM335.7 247.8h1.3v0.6h-1.3zM329.9 241.2h1.0v1.0h-1.0zM330.5 245.5h0.6v1.1h-0.6zM336.5 244.5h0.5v0.9h-0.5zM335.0 271.3h1.1v1.1h-1.1zM337.2 213.1h0.8v1.1h-0.8zM342.6 235.3h0.9v0.8h-0.9zM334.1 222.2h0.6v1.2h-0.6zM334.6 263.7h0.8v0.8h-0.8zM332.5 279.0h0.9v0.6h-0.9zM330.3 248.1h0.9v1.1h-0.9zM334.7 240.8h1.2v0.6h-1.2zM345.8 276.2h1.2v1.2h-1.2zM335.7 283.5h0.9v0.5h-0.9zM342.9 237.4h0.6v0.9h-0.6zM335.2 276.6h0.7v0.7h-0.7zM338.9 244.1h0.6v1.3h-0.6zM339.2 250.7h0.9v1.2h-0.9zM337.8 229.5h0.8v1.3h-0.8zM332.1 247.8h0.8v0.5h-0.8zM345.4 280.7h0.6v0.8h-0.6zM331.6 251.2h1.1v1.0h-1.1zM331.1 220.5h0.8v0.9h-0.8zM335.0 229.3h0.6v1.0h-0.6zM341.4 227.8h0.5v1.2h-0.5zM342.8 229.7h0.7v0.8h-0.7zM340.3 253.9h0.7v0.8h-0.7zM337.7 211.4h1.0v1.0h-1.0zM334.0 228.8h0.5v1.0h-0.5zM333.8 281.8h0.6v1.0h-0.6zM333.8 244.9h0.8v1.2h-0.8zM340.1 250.8h0.7v0.9h-0.7zM341.5 214.9h0.6v0.9h-0.6zM329.3 284.7h1.1v0.8h-1.1zM339.8 211.9h1.1v0.6h-1.1zM332.1 256.1h1.1v0.8h-1.1zM336.9 259.7h0.7v1.0h-0.7zM337.7 215.3h1.1v1.1h-1.1zM338.3 271.9h1.1v1.0h-1.1zM334.3 233.5h0.5v0.7h-0.5zM343.8 239.5h1.1v0.8h-1.1zM338.0 237.3h1.1v0.5h-1.1zM340.7 254.6h1.0v1.0h-1.0zM327.3 247.0h0.6v1.2h-0.6zM331.1 255.5h0.5v0.8h-0.5zM342.4 213.1h1.1v1.1h-1.1zM344.1 265.5h0.8v1.3h-0.8zM335.9 277.9h0.7v1.2h-0.7zM334.3 265.6h1.1v0.5h-1.1zM339.9 246.7h0.6v1.1h-0.6zM336.9 245.2h1.3v1.1h-1.3zM342.1 213.7h0.6v0.6h-0.6zM333.2 273.9h1.1v0.6h-1.1zM338.3 223.4h0.9v0.7h-0.9zM339.4 279.2h1.2v0.7h-1.2zM340.0 241.6h0.6v0.8h-0.6zM347.7 277.4h0.5v1.1h-0.5zM338.0 237.5h1.2v0.7h-1.2zM337.9 257.6h0.9v1.2h-0.9zM331.0 255.9h1.3v1.3h-1.3zM341.1 233.2h0.6v0.9h-0.6zM331.5 273.2h1.1v0.5h-1.1zM341.6 253.7h0.8v1.0h-0.8zM333.6 225.5h1.0v1.1h-1.0zM334.6 278.5h0.5v0.6h-0.5zM343.1 234.4h0.8v0.8h-0.8zM337.4 277.2h0.7v0.9h-0.7zM342.8 229.1h0.6v1.1h-0.6zM346.1 279.4h0.9v0.8h-0.9zM335.1 268.4h0.6v0.7h-0.6zM337.3 274.1h0.9v0.7h-0.9zM341.9 279.5h0.7v0.6h-0.7zM336.6 237.1h0.5v0.5h-0.5zM337.3 229.5h0.9v1.0h-0.9zM336.5 269.3h0.7v1.1h-0.7zM332.8 246.5h1.1v0.9h-1.1zM331.4 216.0h0.7v0.9h-0.7zM341.2 231.3h1.3v0.6h-1.3zM334.3 232.3h1.2v1.3h-1.2zM347.9 278.2h0.7v1.1h-0.7zM342.7 276.7h1.0v0.9h-1.0zM347.0 269.0h0.5v0.7h-0.5zM340.3 273.3h1.3v0.5h-1.3zM334.9 223.5h1.2v0.7h-1.2zM337.1 273.6h0.6v0.6h-0.6zM337.5 221.9h0.9v0.6h-0.9zM331.3 268.6h0.6v0.8h-0.6zM333.5 284.4h1.2v1.2h-1.2zM334.0 239.5h0.7v1.1h-0.7zM332.5 264.1h1.2v0.6h-1.2zM339.3 229.5h0.6v1.3h-0.6zM340.1 282.6h1.1v0.5h-1.1zM343.5 266.7h1.1v1.0h-1.1zM337.4 239.0h1.3v1.2h-1.3zM331.3 251.5h0.7v0.8h-0.7zM341.2 257.0h0.8v1.2h-0.8zM338.8 223.9h1.1v0.9h-1.1zM331.1 213.2h0.8v0.8h-0.8zM340.3 276.7h0.9v0.9h-0.9zM339.4 225.6h1.1v1.2h-1.1zM342.9 236.8h0.6v1.1h-0.6zM339.3 279.9h0.7v1.2h-0.7zM330.7 278.2h1.0v1.2h-1.0zM339.6 226.9h0.8v0.7h-0.8zM334.0 275.9h1.0v1.0h-1.0zM337.6 237.6h0.7v0.8h-0.7zM344.8 280.2h0.8v1.3h-0.8zM330.7 280.4h1.1v1.3h-1.1zM335.6 257.3h0.5v1.0h-0.5zM335.2 246.4h0.6v0.6h-0.6zM337.4 276.0h0.7v0.8h-0.7zM342.7 213.5h0.7v0.8h-0.7zM341.9 256.5h1.2v0.9h-1.2zM333.9 213.4h1.3v1.1h-1.3zM332.3 213.3h0.8v1.0h-0.8zM338.2 276.3h1.1v1.3h-1.1zM338.9 225.6h0.5v0.6h-0.5zM337.5 271.5h0.6v0.8h-0.6zM334.3 265.7h0.6v1.0h-0.6zM346.2 267.1h1.1v1.3h-1.1zM340.3 255.8h0.7v0.6h-0.7zM341.0 272.2h0.9v0.9h-0.9zM329.8 244.1h1.0v0.9h-1.0zM334.2 263.9h0.6v1.2h-0.6zM338.6 281.1h0.9v0.6h-0.9zM337.2 241.8h0.7v0.7h-0.7zM341.5 255.0h1.0v0.7h-1.0zM333.8 244.3h1.3v0.8h-1.3zM341.9 226.5h1.1v1.2h-1.1zM337.8 222.0h0.7v0.8h-0.7zM333.9 236.4h1.2v1.0h-1.2zM337.6 245.9h1.0v1.1h-1.0zM328.8 249.8h1.0v1.2h-1.0zM340.6 272.5h0.6v1.2h-0.6zM332.9 281.6h0.7v0.9h-0.7zM336.1 213.7h0.6v0.7h-0.6zM338.4 235.2h0.8v1.2h-0.8zM331.2 280.5h0.6v0.8h-0.6zM330.4 253.1h1.0v1.2h-1.0zM332.8 227.1h1.1v1.3h-1.1zM346.9 273.6h1.1v1.1h-1.1zM336.4 269.1h0.9v0.9h-0.9zM334.9 222.8h1.0v1.2h-1.0zM343.8 239.6h0.6v0.6h-0.6zM339.6 254.8h0.9v0.8h-0.9zM337.7 229.8h0.9v0.8h-0.9zM333.1 237.5h0.6v0.5h-0.6zM334.0 257.7h0.5v0.5h-0.5zM334.1 274.8h0.5v0.9h-0.5zM339.3 256.3h0.7v0.7h-0.7zM346.2 272.4h1.2v1.0h-1.2zM341.6 238.5h1.1v1.0h-1.1zM335.0 220.5h0.9v0.9h-0.9zM337.5 221.8h1.1v0.8h-1.1zM333.1 266.9h1.1v0.5h-1.1zM336.5 272.3h0.8v1.1h-0.8zM334.3 244.5h1.3v1.0h-1.3zM336.4 239.3h1.2v0.9h-1.2zM340.2 268.3h0.5v0.6h-0.5zM341.8 214.0h0.9v0.7h-0.9zM341.4 257.1h1.0v1.1h-1.0zM335.3 270.9h0.6v0.9h-0.6zM335.4 280.2h0.6v0.8h-0.6zM338.8 217.5h1.0v0.5h-1.0zM330.0 249.4h0.6v0.7h-0.6zM333.1 282.2h1.0v0.7h-1.0zM341.7 279.0h1.0v0.8h-1.0zM344.8 269.4h0.8v0.5h-0.8zM332.1 239.0h1.1v1.1h-1.1zM334.7 254.8h0.9v0.6h-0.9zM336.4 235.0h1.0v0.9h-1.0zM342.6 237.8h0.8v0.6h-0.8zM333.4 253.1h0.7v0.6h-0.7zM334.0 280.7h1.0v0.7h-1.0zM337.4 236.9h0.6v0.7h-0.6zM338.7 226.9h1.2v1.0h-1.2zM340.4 267.3h1.0v1.1h-1.0zM337.1 262.5h0.6v1.1h-0.6zM339.0 227.9h1.2v0.5h-1.2zM335.7 270.4h0.7v1.0h-0.7zM336.0 217.4h0.6v0.6h-0.6zM335.3 276.1h0.6v0.8h-0.6zM332.0 238.8h1.0v1.0h-1.0zM334.2 242.2h0.9v0.7h-0.9zM332.5 216.4h1.2v0.9h-1.2zM333.9 272.0h0.8v0.8h-0.8zM343.4 240.2h0.5v0.7h-0.5zM334.5 265.1h0.7v0.8h-0.7zM335.7 277.2h0.8v0.9h-0.8zM336.3 216.2h1.3v0.6h-1.3zM338.6 265.3h0.5v0.7h-0.5zM342.3 258.5h0.9v1.0h-0.9zM340.2 255.1h0.7v0.8h-0.7zM333.9 241.2h1.0v0.7h-1.0zM334.0 224.2h0.7v1.1h-0.7zM330.7 214.1h1.2v0.8h-1.2zM335.8 237.7h1.1v0.7h-1.1zM337.4 283.1h0.8v0.7h-0.8zM345.4 270.1h1.0v0.9h-1.0zM335.9 283.5h0.9v0.8h-0.9zM334.2 235.3h0.8v1.1h-0.8zM333.8 284.1h0.8v1.0h-0.8zM333.9 249.3h0.9v0.7h-0.9zM331.5 246.6h1.2v1.3h-1.2zM345.0 279.7h0.6v1.2h-0.6zM333.4 277.8h1.2v0.8h-1.2zM342.4 238.9h1.0v1.2h-1.0zM342.2 238.2h1.1v0.6h-1.1zM337.0 264.3h1.2v1.3h-1.2zM342.7 258.8h0.6v1.2h-0.6zM332.1 215.2h0.8v1.2h-0.8zM336.7 219.2h0.9v0.8h-0.9zM344.0 239.3h0.9v1.1h-0.9zM331.5 252.0h1.1v0.9h-1.1zM337.0 241.6h0.6v1.1h-0.6zM334.5 220.2h1.3v0.7h-1.3zM339.9 224.3h0.5v1.2h-0.5zM331.3 274.6h1.3v1.0h-1.3zM335.9 280.6h1.2v0.8h-1.2zM332.8 243.5h0.8v1.1h-0.8zM341.1 218.0h1.2v1.1h-1.2zM338.6 274.4h1.3v0.5h-1.3zM333.1 256.9h0.9v1.2h-0.9zM339.6 211.9h1.2v0.6h-1.2zM328.2 250.6h0.8v1.1h-0.8zM337.3 266.5h0.9v0.5h-0.9zM335.9 252.8h0.8v0.8h-0.8zM329.8 213.9h0.6v1.2h-0.6zM334.8 277.6h1.0v0.7h-1.0zM335.7 262.4h0.7v0.9h-0.7zM339.4 277.0h1.2v0.6h-1.2zM331.0 283.4h0.8v0.5h-0.8zM336.9 272.8h0.9v1.0h-0.9zM341.6 276.6h0.8v0.7h-0.8zM329.0 280.1h1.3v0.9h-1.3zM328.4 248.7h1.2v1.2h-1.2zM334.7 228.0h1.2v1.0h-1.2zM341.8 248.9h0.8v1.0h-0.8zM342.1 252.0h1.0v0.7h-1.0zM335.6 262.5h0.7v0.6h-0.7zM334.4 264.8h0.5v0.7h-0.5zM343.6 231.7h0.5v0.6h-0.5zM340.1 257.6h0.6v1.1h-0.6zM338.6 211.7h1.3v1.0h-1.3zM342.4 216.8h1.3v0.6h-1.3zM336.0 224.3h1.3v0.9h-1.3zM337.3 268.5h0.7v0.8h-0.7zM331.8 257.6h0.9v0.8h-0.9zM341.7 256.6h0.6v1.0h-0.6zM335.2 221.0h0.9v0.9h-0.9zM331.8 240.7h1.1v0.8h-1.1zM335.4 212.6h0.5v0.8h-0.5zM333.9 255.8h0.9v1.1h-0.9zM342.6 233.4h0.9v1.3h-0.9zM336.3 258.6h1.0v0.6h-1.0zM339.1 249.8h0.6v0.6h-0.6zM341.2 277.3h1.3v0.6h-1.3zM339.8 249.8h1.0v0.7h-1.0zM339.1 282.1h1.2v0.7h-1.2zM335.5 256.9h0.7v0.6h-0.7zM334.7 224.9h0.5v0.7h-0.5zM333.2 245.3h0.7v1.1h-0.7zM332.7 271.8h0.8v0.9h-0.8zM334.0 280.2h0.7v1.2h-0.7zM332.5 260.5h0.9v1.3h-0.9zM331.4 268.8h0.9v0.5h-0.9zM335.0 230.0h0.7v0.6h-0.7zM345.4 271.9h0.7v0.6h-0.7zM337.6 278.9h0.8v0.8h-0.8zM336.7 267.1h1.3v1.3h-1.3zM334.9 275.7h1.1v0.9h-1.1zM340.3 234.6h1.1v1.1h-1.1zM341.6 249.6h1.1v0.8h-1.1zM328.7 279.6h0.8v0.5h-0.8zM332.3 284.5h0.7v1.3h-0.7zM338.9 231.9h0.8v0.9h-0.8zM334.5 279.4h1.2v1.1h-1.2zM332.1 237.1h0.8v0.8h-0.8zM341.7 232.5h0.5v0.6h-0.5zM338.3 283.4h1.2v1.3h-1.2zM344.0 237.8h0.9v0.6h-0.9zM332.3 220.0h1.1v1.2h-1.1zM332.5 254.2h1.2v0.8h-1.2zM336.6 241.3h0.7v0.8h-0.7zM343.8 271.9h1.3v0.6h-1.3zM340.0 229.0h0.8v0.9h-0.8zM341.1 235.3h1.2v1.2h-1.2zM343.5 269.3h1.1v0.6h-1.1zM343.1 270.0h1.2v0.5h-1.2zM333.3 260.2h0.8v0.9h-0.8zM333.0 240.6h0.8v0.6h-0.8zM336.7 231.8h1.2v1.3h-1.2zM329.7 250.3h0.6v0.8h-0.6zM335.5 285.3h0.8v0.8h-0.8zM335.9 280.8h0.9v0.5h-0.9zM340.6 252.0h0.5v1.2h-0.5zM343.5 274.6h1.0v0.9h-1.0zM329.7 251.2h1.2v0.5h-1.2zM337.8 268.9h0.8v0.9h-0.8zM334.1 249.3h0.5v1.2h-0.5zM341.7 250.0h0.8v0.7h-0.8zM338.6 269.9h1.1v0.5h-1.1zM338.3 275.4h0.6v0.9h-0.6zM339.7 239.7h0.6v1.0h-0.6zM342.0 235.8h0.8v0.6h-0.8zM329.1 248.7h1.1v1.0h-1.1zM329.4 250.7h0.9v1.1h-0.9zM344.5 277.9h0.5v1.2h-0.5zM337.4 230.7h0.8v1.0h-0.8zM333.1 282.8h0.9v0.8h-0.9zM339.7 246.2h0.6v0.9h-0.6zM331.6 266.0h0.8v1.1h-0.8zM335.5 257.2h0.6v0.7h-0.6zM332.6 241.5h1.0v0.6h-1.0zM333.2 213.5h0.6v0.8h-0.6zM332.3 268.0h0.9v1.2h-0.9zM333.1 212.9h0.8v0.6h-0.8zM332.3 234.0h0.7v1.0h-0.7zM336.1 235.0h0.5v0.8h-0.5zM331.2 275.5h1.1v0.5h-1.1zM335.0 250.4h0.5v0.9h-0.5zM341.2 278.4h1.2v1.0h-1.2zM333.6 215.8h0.7v0.7h-0.7zM332.9 216.9h1.0v0.6h-1.0zM338.7 272.4h0.8v1.0h-0.8zM332.2 257.8h1.1v0.5h-1.1zM342.3 255.3h0.8v1.3h-0.8zM345.5 277.4h1.3v0.8h-1.3zM332.3 219.1h0.7v0.5h-0.7zM346.3 266.9h0.6v1.3h-0.6zM330.5 249.1h0.6v1.1h-0.6zM332.6 238.5h0.8v0.7h-0.8zM334.1 256.8h0.9v0.7h-0.9zM338.2 270.5h0.5v1.0h-0.5zM344.6 234.6h0.8v1.3h-0.8zM340.3 258.3h0.6v0.7h-0.6zM335.0 256.1h1.0v0.6h-1.0zM331.9 233.4h0.8v1.2h-0.8zM332.4 226.2h0.7v0.6h-0.7zM338.9 220.2h1.1v1.0h-1.1zM357.7 271.5h1.1v0.9h-1.1zM372.8 265.8h0.7v0.7h-0.7zM370.6 267.1h0.7v1.1h-0.7zM361.8 270.6h0.9v0.9h-0.9zM367.6 265.1h0.7v1.1h-0.7zM355.3 271.5h0.9v1.1h-0.9zM352.5 269.8h0.8v0.5h-0.8zM364.6 270.3h0.8v1.1h-0.8zM372.9 264.4h0.8v1.2h-0.8zM363.6 269.9h0.8v1.1h-0.8zM363.7 270.5h0.6v1.2h-0.6zM361.3 270.8h0.7v1.2h-0.7zM365.7 267.4h1.1v0.8h-1.1zM371.6 265.1h1.0v0.8h-1.0zM365.3 268.0h0.6v0.8h-0.6zM351.5 273.1h1.0v0.5h-1.0zM352.4 273.3h1.1v0.6h-1.1zM371.4 266.3h0.9v1.3h-0.9zM358.4 271.3h0.9v0.9h-0.9zM373.0 264.2h0.6v1.0h-0.6zM354.3 272.9h1.2v1.1h-1.2zM358.7 271.5h1.1v0.8h-1.1zM356.4 273.2h0.5v1.1h-0.5zM364.3 268.9h1.1v0.7h-1.1zM359.1 271.1h1.0v0.6h-1.0zM360.0 270.2h0.8v0.6h-0.8zM354.4 271.3h1.0v0.6h-1.0zM365.7 266.6h0.9v0.9h-0.9zM361.4 271.6h0.8v1.2h-0.8zM367.9 265.5h1.3v1.2h-1.3zM362.1 269.4h0.7v0.6h-0.7zM360.0 270.2h1.0v1.0h-1.0zM366.8 267.0h1.3v0.6h-1.3zM362.8 270.2h1.1v1.1h-1.1zM349.7 273.4h1.3v0.6h-1.3zM350.2 272.6h1.0v1.1h-1.0zM357.8 270.3h1.3v1.0h-1.3zM370.7 267.4h0.7v1.2h-0.7zM353.4 270.9h0.9v0.9h-0.9zM352.0 272.6h0.6v0.7h-0.6zM355.4 270.0h1.1v1.2h-1.1zM364.5 270.4h0.5v0.6h-0.5zM349.3 269.6h1.1v1.0h-1.1zM355.4 273.6h1.0v0.6h-1.0zM372.7 264.0h1.1v0.6h-1.1zM372.7 265.1h1.0v0.6h-1.0zM352.8 273.0h0.7v1.2h-0.7zM370.8 267.8h0.9v0.6h-0.9zM355.1 271.4h1.2v1.0h-1.2zM353.6 270.1h1.0v0.9h-1.0zM360.8 271.0h1.3v0.7h-1.3zM359.0 270.7h1.0v1.2h-1.0zM371.4 267.4h0.8v0.7h-0.8zM357.2 270.1h1.1v1.0h-1.1zM354.5 271.7h0.9v0.9h-0.9zM367.2 267.0h1.2v0.9h-1.2zM366.7 265.6h1.2v0.6h-1.2zM361.4 271.6h1.3v1.1h-1.3zM362.6 269.3h1.1v1.0h-1.1zM367.6 268.6h1.0v1.1h-1.0zM350.5 272.7h1.2v1.0h-1.2zM362.6 268.4h0.9v0.8h-0.9zM365.5 269.5h0.7v1.1h-0.7zM351.8 270.0h0.7v0.6h-0.7zM362.3 270.7h0.7v0.8h-0.7zM355.4 271.0h1.0v0.6h-1.0zM352.1 273.9h0.6v0.8h-0.6zM365.3 266.1h0.8v1.1h-0.8zM365.5 268.4h1.2v1.3h-1.2zM355.7 273.1h1.1v1.3h-1.1zM353.6 270.8h0.8v0.6h-0.8zM352.4 272.2h0.6v1.1h-0.6zM362.7 269.5h1.2v0.9h-1.2zM366.6 267.8h1.3v0.8h-1.3zM369.4 265.1h0.9v1.0h-0.9zM371.4 264.0h1.0v1.0h-1.0zM355.8 269.8h0.6v1.1h-0.6zM369.5 267.8h1.1v1.2h-1.1zM359.6 269.9h0.8v0.8h-0.8zM357.1 272.2h0.9v0.6h-0.9zM372.5 263.7h1.0v1.1h-1.0zM359.6 271.2h0.7v0.7h-0.7zM356.6 269.5h1.1v0.8h-1.1zM369.7 264.9h1.3v1.2h-1.3zM317.6 235.2h0.9v1.1h-0.9zM325.1 245.1h1.2v1.3h-1.2zM305.5 241.0h0.9v0.8h-0.9zM311.5 257.0h0.7v1.1h-0.7zM324.4 246.8h1.1v1.0h-1.1zM315.2 241.2h1.3v0.7h-1.3zM311.4 244.7h1.2v0.5h-1.2zM322.4 251.2h1.1v0.8h-1.1zM320.4 234.7h0.9v0.9h-0.9zM306.9 239.8h0.6v0.7h-0.6zM316.3 237.7h1.3v0.9h-1.3zM309.2 227.5h1.1v0.6h-1.1zM313.7 259.9h0.5v0.9h-0.5zM310.5 259.0h0.9v0.6h-0.9zM310.8 253.4h1.1v0.6h-1.1zM316.0 257.3h0.9v1.2h-0.9zM311.9 236.2h1.2v0.7h-1.2zM305.9 245.9h1.0v0.7h-1.0zM309.3 230.2h1.3v0.8h-1.3zM307.0 253.9h1.0v1.0h-1.0zM306.4 224.8h1.0v0.8h-1.0zM307.4 230.5h1.2v1.3h-1.2zM316.4 221.6h1.2v0.7h-1.2zM321.6 240.2h0.7v1.1h-0.7zM306.6 240.4h1.0v1.0h-1.0zM313.9 228.3h0.9v1.0h-0.9zM311.7 230.3h0.6v1.2h-0.6zM310.9 259.5h0.6v0.6h-0.6zM323.0 260.1h1.1v0.7h-1.1zM319.5 235.4h0.6v0.7h-0.6zM325.2 253.0h0.6v1.1h-0.6zM314.0 245.0h0.9v0.7h-0.9zM322.2 231.4h0.6v1.0h-0.6zM320.2 237.8h0.8v0.6h-0.8zM321.3 255.6h0.5v0.6h-0.5zM306.6 228.3h0.8v1.0h-0.8zM322.3 237.7h1.1v0.8h-1.1zM313.5 254.1h0.9v0.9h-0.9zM316.3 234.2h1.1v0.5h-1.1zM311.1 253.9h0.7v0.6h-0.7zM312.2 242.1h0.6v1.3h-0.6zM308.0 259.1h0.6v1.2h-0.6zM319.4 227.1h0.9v1.0h-0.9zM315.4 230.7h0.6v0.8h-0.6zM313.7 222.3h0.7v1.2h-0.7zM311.9 241.3h0.7v0.9h-0.7zM316.1 248.3h0.8v0.8h-0.8zM324.1 249.4h0.9v1.0h-0.9zM314.5 241.8h0.5v1.0h-0.5zM309.0 260.0h1.2v0.5h-1.2zM306.4 236.3h0.6v1.1h-0.6zM325.3 244.6h0.9v1.1h-0.9zM315.5 237.5h0.6v0.9h-0.6zM319.1 238.6h1.2v1.0h-1.2zM323.4 233.2h0.9v1.1h-0.9zM311.9 254.5h0.8v0.9h-0.8zM315.9 242.6h0.6v1.3h-0.6zM311.7 248.9h0.8v0.9h-0.8zM324.0 280.7h1.2v0.9h-1.2zM319.6 270.6h0.6v1.2h-0.6zM315.9 271.8h1.1v0.7h-1.1zM320.8 283.1h0.7v0.7h-0.7zM320.7 280.9h0.9v0.6h-0.9zM325.3 281.3h0.5v0.6h-0.5zM327.6 275.3h1.2v1.3h-1.2zM327.1 271.3h0.6v0.6h-0.6zM323.8 275.9h1.2v1.0h-1.2zM325.1 281.1h1.2v1.0h-1.2zM326.9 276.4h1.0v1.2h-1.0zM315.4 276.4h1.3v1.2h-1.3zM318.7 276.0h0.7v1.1h-0.7zM327.5 271.1h1.3v1.0h-1.3zM322.5 274.2h0.9v0.8h-0.9zM315.5 279.6h0.7v0.9h-0.7zM321.0 273.8h1.0v0.6h-1.0zM327.2 277.9h1.2v1.0h-1.2zM321.4 281.0h1.1v0.6h-1.1zM326.3 272.8h0.5v1.3h-0.5zM383.9 260.4h0.7v0.7h-0.7zM383.2 260.3h0.8v0.6h-0.8zM383.9 259.4h0.6v1.0h-0.6zM383.7 258.4h1.0v0.8h-1.0zM383.5 258.6h1.0v1.1h-1.0zM381.5 261.2h1.1v0.7h-1.1zM381.6 259.3h1.2v0.8h-1.2zM380.5 258.5h1.3v1.2h-1.3zM384.4 261.8h0.6v0.6h-0.6zM383.6 261.6h0.9v1.2h-0.9zM384.4 258.8h1.2v1.0h-1.2zM381.5 204.9h1.1v0.8h-1.1zM382.8 204.0h0.8v1.1h-0.8zM383.3 203.1h0.9v1.0h-0.9zM382.4 204.2h0.9v1.2h-0.9zM367.0 284.5h1.2v1.0h-1.2zM369.8 282.6h0.6v0.6h-0.6zM367.0 283.8h0.7v0.5h-0.7zM366.4 283.4h0.7v1.1h-0.7zM368.6 283.0h0.8v1.0h-0.8zM366.2 284.2h1.2v0.7h-1.2zM369.4 285.4h1.3v0.9h-1.3zM366.0 282.6h1.1v0.6h-1.1zM366.6 283.8h0.6v1.2h-0.6zM368.3 285.4h0.9v0.8h-0.9zM341.4 281.6h1.0v1.0h-1.0zM347.8 278.6h0.9v0.5h-0.9zM336.1 282.6h1.1v1.2h-1.1zM345.3 275.7h0.9v1.0h-0.9zM328.9 277.2h0.9v0.6h-0.9zM340.6 276.4h1.3v0.9h-1.3zM335.1 281.0h0.9v0.8h-0.9zM339.4 282.1h1.2v1.2h-1.2zM333.8 282.9h0.9v0.8h-0.9zM346.3 278.3h1.0v1.0h-1.0zM340.5 280.2h0.9v0.6h-0.9zM335.2 276.1h1.0v1.1h-1.0zM339.6 280.2h0.9v0.5h-0.9zM341.4 280.9h1.1v0.7h-1.1zM333.5 277.4h1.0v0.9h-1.0zM335.5 278.6h0.7v1.2h-0.7zM343.2 275.8h0.7v1.0h-0.7zM331.7 276.7h0.5v0.9h-0.5zM330.9 282.6h0.9v1.2h-0.9zM343.9 276.9h1.0v0.7h-1.0zM336.7 276.0h1.3v1.0h-1.3zM328.4 281.9h1.2v0.6h-1.2zM331.4 277.1h1.1v1.0h-1.1zM341.2 280.6h0.8v1.0h-0.8zM333.5 279.1h0.8v1.2h-0.8zM339.2 280.9h1.3v1.0h-1.3zM340.4 279.5h0.8v1.1h-0.8zM335.7 282.6h0.9v1.2h-0.9zM330.9 278.2h0.7v0.6h-0.7zM336.8 283.3h0.7v0.5h-0.7zM339.1 275.7h0.5v1.1h-0.5zM341.6 276.4h1.3v0.8h-1.3zM333.2 275.7h0.8v1.2h-0.8zM329.2 282.5h1.2v0.5h-1.2zM330.0 275.9h1.0v0.6h-1.0zM331.2 278.1h0.9v0.7h-0.9zM343.3 278.4h1.1v1.3h-1.1zM340.5 282.7h0.7v1.1h-0.7zM338.6 282.3h1.0v0.8h-1.0zM339.1 278.3h1.1v0.7h-1.1zM332.0 276.1h1.2v0.8h-1.2zM335.0 282.7h0.7v1.2h-0.7zM331.5 275.6h1.2v1.0h-1.2zM346.3 275.5h0.7v1.2h-0.7zM346.8 278.1h0.5v1.2h-0.5zM342.6 277.1h0.5v0.5h-0.5zM342.6 278.0h0.6v1.1h-0.6zM329.8 277.6h0.9v1.0h-0.9zM340.4 280.1h1.3v1.2h-1.3zM337.2 283.2h0.8v1.2h-0.8zM334.5 279.7h0.8v1.3h-0.8zM338.3 280.2h1.1v0.9h-1.1zM333.8 277.5h1.0v1.2h-1.0zM330.3 283.4h0.8v1.3h-0.8zM345.5 277.0h1.0v1.2h-1.0zM341.8 280.9h1.0v1.0h-1.0zM329.5 282.2h1.2v0.7h-1.2zM337.8 277.1h0.7v1.2h-0.7zM335.6 280.8h1.2v0.5h-1.2zM348.6 276.6h0.8v0.9h-0.8zM342.9 280.1h1.0v1.0h-1.0zM332.5 279.0h1.1v0.7h-1.1zM337.8 283.5h0.6v0.7h-0.6zM345.7 276.0h1.2v1.2h-1.2zM328.8 280.3h1.2v1.0h-1.2zM345.5 276.7h0.6v0.9h-0.6zM332.5 276.5h0.5v0.8h-0.5zM349.4 276.0h0.7v1.1h-0.7zM334.4 282.0h1.0v1.1h-1.0zM342.5 280.3h0.9v0.5h-0.9zM345.5 277.0h0.6v0.6h-0.6zM339.1 280.2h1.1v1.1h-1.1zM333.1 278.9h0.8v1.2h-0.8zM330.8 283.5h1.0v1.0h-1.0zM332.0 277.0h0.7v0.8h-0.7zM333.5 278.2h0.7v1.2h-0.7zM329.1 282.4h1.2v0.8h-1.2zM336.4 280.5h0.8v0.7h-0.8zM332.1 277.7h0.9v0.7h-0.9zM336.0 277.0h0.7v1.2h-0.7zM343.2 280.5h1.2v0.9h-1.2zM331.5 283.5h1.0v1.1h-1.0zM331.1 281.5h1.2v0.7h-1.2zM330.1 281.3h0.5v0.9h-0.5zM328.8 280.4h1.2v0.9h-1.2zM337.2 278.6h1.2v0.6h-1.2zM339.8 280.8h1.2v1.0h-1.2zM336.7 278.0h0.6v1.3h-0.6zM338.8 281.5h0.8v1.3h-0.8zM338.3 279.8h1.3v0.7h-1.3zM333.9 280.4h1.2v1.0h-1.2zM337.7 277.5h1.1v0.6h-1.1zM335.0 279.6h0.7v1.1h-0.7zM344.3 277.0h1.2v0.6h-1.2zM328.7 278.0h1.2v1.0h-1.2zM333.9 280.4h0.8v1.3h-0.8zM333.0 283.9h1.0v0.5h-1.0zM337.9 276.3h0.8v1.2h-0.8zM338.7 279.3h1.3v0.9h-1.3zM329.3 281.2h0.5v0.6h-0.5zM333.9 279.5h1.2v0.9h-1.2zM339.0 277.1h1.2v1.0h-1.2zM335.7 277.6h0.6v0.8h-0.6zM348.3 276.0h0.9v0.5h-0.9zM334.0 278.9h1.3v1.0h-1.3zM355.8 294.8h0.7v0.5h-0.7zM366.9 298.4h0.7v1.1h-0.7zM370.2 297.1h0.7v0.7h-0.7zM349.5 320.5h1.0v1.1h-1.0zM370.2 294.5h1.1v0.8h-1.1zM373.3 298.6h0.9v1.0h-0.9zM365.5 287.3h1.3v0.5h-1.3zM352.6 311.2h0.9v0.9h-0.9zM355.3 316.5h1.0v1.2h-1.0zM344.9 296.5h0.5v0.5h-0.5zM360.4 303.4h0.6v0.6h-0.6zM348.0 322.2h0.9v0.8h-0.9zM361.1 302.4h0.9v0.6h-0.9zM349.0 290.9h0.7v0.8h-0.7zM366.4 304.9h1.2v1.2h-1.2zM345.4 312.6h1.3v1.2h-1.3zM360.7 300.8h0.6v0.7h-0.6zM354.1 314.1h0.8v1.2h-0.8zM349.3 291.9h0.7v1.3h-0.7zM372.2 292.4h1.2v0.5h-1.2zM365.9 303.3h0.7v1.0h-0.7zM348.8 306.3h1.1v0.8h-1.1zM347.6 292.6h0.5v0.8h-0.5zM343.8 296.6h0.6v0.9h-0.6zM350.0 323.7h1.1v0.8h-1.1zM344.2 299.5h0.7v0.7h-0.7zM348.5 293.1h1.2v0.7h-1.2zM363.9 293.7h1.2v1.2h-1.2zM352.0 316.3h1.1v1.0h-1.1zM352.7 295.2h0.9v0.8h-0.9zM355.3 297.2h0.6v0.7h-0.6zM364.5 295.5h1.2v1.2h-1.2zM357.2 296.1h1.0v1.2h-1.0zM370.1 292.8h0.7v0.5h-0.7zM374.5 295.5h0.8v1.1h-0.8zM351.5 314.8h0.5v0.8h-0.5zM351.0 318.9h1.1v0.6h-1.1zM351.5 317.9h1.0v0.8h-1.0zM353.3 304.7h1.0v1.2h-1.0zM359.9 310.2h0.5v0.5h-0.5zM360.1 302.2h1.2v0.7h-1.2zM353.2 294.3h1.0v1.1h-1.0zM344.4 300.1h1.0v1.1h-1.0zM368.2 290.6h1.1v0.9h-1.1zM372.3 291.8h1.2v1.2h-1.2zM362.6 290.9h0.8v0.8h-0.8zM372.3 291.0h0.8v0.8h-0.8zM342.2 293.6h0.6v0.9h-0.6zM366.5 290.7h1.3v0.5h-1.3zM347.8 310.9h1.0v0.8h-1.0zM365.2 303.1h0.8v0.8h-0.8zM366.3 290.6h1.0v1.2h-1.0zM347.7 318.5h0.5v0.7h-0.5zM350.5 313.0h1.3v0.7h-1.3zM358.6 296.1h1.1v0.5h-1.1zM373.3 296.3h0.6v1.2h-0.6zM358.5 294.1h1.0v0.9h-1.0zM369.1 286.5h0.9v0.9h-0.9zM342.8 295.9h0.5v1.1h-0.5zM348.4 291.3h1.2v0.7h-1.2zM348.7 319.3h0.8v0.7h-0.8zM375.2 297.0h1.1v1.3h-1.1zM361.1 308.5h0.6v0.8h-0.6zM360.7 298.6h1.3v0.6h-1.3zM347.0 298.6h1.3v0.9h-1.3zM355.3 319.1h0.7v1.1h-0.7zM349.5 292.8h1.1v0.7h-1.1zM341.3 299.4h0.9v1.2h-0.9zM344.4 302.1h0.8v1.0h-0.8zM357.0 297.3h0.9v0.9h-0.9zM342.5 297.4h0.7v0.7h-0.7zM353.7 295.3h0.8v1.0h-0.8zM349.4 324.9h0.6v0.7h-0.6zM351.7 295.8h1.1v0.8h-1.1zM346.4 312.7h0.7v1.0h-0.7zM372.2 298.2h0.7v0.9h-0.7zM353.8 306.3h0.7v0.7h-0.7zM362.7 288.5h0.7v0.6h-0.7zM365.5 290.2h0.7v1.2h-0.7zM359.5 303.7h0.8v0.9h-0.8zM368.7 299.2h0.6v0.6h-0.6zM365.7 304.3h1.2v0.7h-1.2zM366.4 300.3h0.7v1.1h-0.7zM352.3 293.1h0.9v0.8h-0.9zM355.3 299.3h0.6v0.6h-0.6zM360.3 311.6h1.2v0.7h-1.2zM343.1 291.9h0.7v1.2h-0.7zM367.6 286.3h0.7v0.6h-0.7zM363.1 301.9h1.3v1.2h-1.3zM351.1 295.3h0.9v0.8h-0.9zM369.0 291.8h1.2v1.0h-1.2zM353.1 316.8h1.3v1.2h-1.3zM351.4 303.0h1.2v1.1h-1.2zM351.9 317.1h0.6v0.8h-0.6zM361.5 296.7h0.5v1.0h-0.5zM342.3 292.4h0.9v0.8h-0.9zM365.3 289.3h0.9v0.8h-0.9zM347.7 322.7h1.2v1.3h-1.2zM353.2 296.3h1.1v0.9h-1.1zM365.4 306.7h1.2v0.6h-1.2zM350.8 290.5h1.2v1.3h-1.2zM347.8 295.8h0.7v1.0h-0.7zM366.0 294.6h1.2v0.9h-1.2zM358.6 299.5h0.9v0.5h-0.9zM351.0 298.8h1.3v0.7h-1.3zM355.2 311.7h0.7v0.6h-0.7zM348.7 316.7h0.9v1.0h-0.9zM365.2 291.9h0.6v0.8h-0.6zM370.7 293.0h1.1v1.2h-1.1zM367.2 288.0h0.6v1.1h-0.6zM362.0 299.2h1.2v0.7h-1.2zM357.0 288.2h1.0v1.0h-1.0zM359.5 299.7h0.5v1.0h-0.5zM350.9 324.3h1.0v0.9h-1.0zM354.5 320.0h1.0v0.9h-1.0zM356.3 315.4h1.2v0.8h-1.2zM351.9 306.5h0.9v0.8h-0.9zM373.9 298.6h1.2v1.0h-1.2zM354.4 291.9h0.6v1.1h-0.6zM358.4 290.0h0.9v1.0h-0.9zM361.7 306.5h1.3v0.7h-1.3zM342.8 306.6h1.1v0.7h-1.1zM350.6 291.6h1.2v1.0h-1.2zM350.8 299.2h0.7v0.5h-0.7zM352.0 298.5h1.2v0.7h-1.2zM351.8 317.3h0.8v1.3h-0.8zM365.7 298.3h0.9v1.2h-0.9zM346.6 293.3h1.0v0.7h-1.0zM357.0 292.9h1.0v1.0h-1.0zM374.1 296.6h1.1v0.7h-1.1zM366.1 301.4h0.8v0.6h-0.8zM364.0 301.4h0.9v0.7h-0.9zM366.0 297.3h1.0v1.2h-1.0zM341.7 301.1h1.1v0.7h-1.1zM348.7 314.2h0.5v1.1h-0.5zM353.5 313.3h0.6v0.9h-0.6zM354.7 289.6h0.8v1.3h-0.8zM352.9 318.4h1.2v1.0h-1.2zM357.9 297.7h1.3v0.6h-1.3zM347.4 321.9h0.5v1.1h-0.5zM374.1 299.5h0.6v0.8h-0.6zM344.8 303.3h1.0v0.8h-1.0zM366.3 294.8h0.5v1.2h-0.5zM359.9 297.7h1.1v0.6h-1.1zM351.6 304.8h1.2v1.0h-1.2zM357.2 310.7h1.2v0.8h-1.2zM347.7 306.9h0.6v0.7h-0.6zM364.5 303.2h0.6v0.5h-0.6zM363.5 307.5h0.9v1.3h-0.9zM358.6 308.1h0.8v1.0h-0.8zM357.3 301.3h0.9v0.5h-0.9zM367.8 294.9h1.0v0.6h-1.0zM360.0 306.4h1.0v0.6h-1.0zM352.5 322.4h1.1v0.6h-1.1zM362.4 296.5h1.1v0.6h-1.1zM366.8 300.9h0.6v0.7h-0.6zM348.8 306.5h0.6v1.3h-0.6zM344.9 304.9h0.9v0.9h-0.9zM351.2 293.2h0.7v0.7h-0.7zM354.8 307.5h1.0v1.2h-1.0zM369.4 292.8h1.0v1.2h-1.0zM345.1 307.0h1.2v0.8h-1.2zM360.6 289.6h0.9v0.9h-0.9zM364.2 287.5h0.7v0.9h-0.7zM354.8 311.0h1.3v1.2h-1.3zM353.7 294.5h0.9v0.9h-0.9zM345.6 310.1h1.2v0.6h-1.2zM363.0 306.7h0.7v1.2h-0.7zM350.5 313.6h1.0v1.0h-1.0zM368.4 295.2h0.9v1.0h-0.9zM366.3 301.1h0.8v1.0h-0.8zM344.3 306.8h0.8v1.0h-0.8zM365.9 297.5h0.6v0.5h-0.6zM361.0 302.3h0.5v0.9h-0.5zM359.1 308.8h0.6v0.5h-0.6zM358.9 300.3h1.2v0.9h-1.2zM370.1 293.5h1.0v0.8h-1.0zM351.7 299.4h1.0v0.8h-1.0zM352.7 298.8h1.2v1.3h-1.2zM354.4 314.9h1.0v1.3h-1.0zM347.8 311.1h1.2v1.3h-1.2zM354.8 315.2h0.6v0.9h-0.6zM361.7 302.5h1.0v0.9h-1.0zM370.8 297.7h0.7v1.1h-0.7zM359.8 310.2h0.8v0.8h-0.8zM369.4 298.7h1.1v1.1h-1.1zM365.4 290.9h0.9v1.0h-0.9zM344.5 291.9h1.1v0.6h-1.1zM359.9 296.6h1.1v0.8h-1.1zM350.5 306.4h1.2v1.2h-1.2zM345.1 308.2h0.7v0.9h-0.7zM344.0 295.7h0.9v1.2h-0.9zM354.9 288.6h0.7v1.0h-0.7zM361.0 288.3h0.7v1.0h-0.7zM357.6 303.4h0.6v0.6h-0.6zM361.3 306.3h0.8v1.1h-0.8zM350.3 316.9h1.1v1.1h-1.1zM345.8 301.4h0.9v0.5h-0.9zM361.1 290.5h0.9v1.1h-0.9zM367.7 299.1h0.6v1.0h-0.6zM357.7 310.2h0.8v0.6h-0.8zM355.5 293.1h0.9v0.7h-0.9zM365.2 295.7h0.5v1.1h-0.5zM345.1 310.2h1.2v0.7h-1.2zM355.1 294.5h0.5v1.3h-0.5zM355.4 319.2h0.5v1.2h-0.5zM351.8 293.6h0.9v0.8h-0.9zM352.9 291.3h0.5v0.5h-0.5zM346.0 292.3h1.2v1.0h-1.2zM352.0 324.6h1.2v1.2h-1.2zM353.8 311.6h0.7v1.0h-0.7zM360.1 309.1h0.5v0.7h-0.5zM351.1 306.0h0.7v0.8h-0.7zM358.6 308.0h0.8v0.8h-0.8zM361.2 310.5h1.1v1.0h-1.1zM345.2 298.8h1.0v1.1h-1.0zM362.3 309.9h0.7v1.0h-0.7zM354.0 297.7h0.7v1.3h-0.7zM370.2 295.2h1.2v0.7h-1.2zM359.1 313.2h1.0v1.2h-1.0zM367.1 304.3h0.8v0.8h-0.8zM341.9 296.8h1.1v0.6h-1.1zM369.2 298.9h1.2v0.7h-1.2zM352.4 307.8h1.1v1.3h-1.1zM348.2 303.2h1.0v1.0h-1.0zM344.4 308.4h1.2v0.9h-1.2zM347.2 296.8h1.2v0.8h-1.2zM343.9 295.9h1.0v0.6h-1.0zM358.3 304.5h1.0v0.7h-1.0zM347.8 303.6h0.6v0.9h-0.6zM355.0 320.4h0.6v0.9h-0.6zM345.7 307.7h0.9v1.0h-0.9zM364.9 286.6h1.3v1.3h-1.3zM350.1 291.0h1.1v0.6h-1.1zM363.5 297.0h1.3v0.6h-1.3zM358.5 288.8h0.6v1.1h-0.6zM368.7 290.3h1.3v0.6h-1.3zM351.5 294.2h0.7v1.0h-0.7zM364.1 289.3h0.7v0.6h-0.7zM347.5 299.3h0.9v1.0h-0.9zM358.8 294.2h0.8v1.0h-0.8zM343.9 302.0h1.2v0.6h-1.2zM359.5 292.5h0.6v1.0h-0.6zM373.4 297.4h1.0v1.2h-1.0zM347.3 315.2h0.7v0.8h-0.7zM351.1 300.8h1.2v0.8h-1.2zM361.3 309.0h1.1v0.9h-1.1zM372.2 293.6h1.3v0.5h-1.3zM355.5 295.4h1.2v1.0h-1.2zM348.3 308.7h1.0v0.5h-1.0zM359.6 309.2h0.6v1.2h-0.6zM354.3 307.8h0.8v0.8h-0.8zM357.6 294.7h0.8v0.7h-0.8zM345.9 316.8h1.2v1.0h-1.2zM374.2 295.1h1.2v1.1h-1.2zM365.0 303.3h1.1v1.3h-1.1zM366.1 288.6h0.6v0.7h-0.6zM346.5 321.2h1.2v1.1h-1.2zM365.9 302.3h0.7v0.7h-0.7zM351.1 307.4h0.6v1.0h-0.6zM358.8 296.7h0.6v0.8h-0.6zM366.3 296.4h0.6v1.1h-0.6zM344.0 303.6h0.8v0.7h-0.8zM342.7 296.6h1.0v0.9h-1.0zM351.9 298.8h0.6v0.7h-0.6zM358.8 300.2h0.7v1.1h-0.7zM360.2 308.6h1.0v1.2h-1.0zM352.6 320.4h0.9v1.1h-0.9zM368.8 296.1h1.0v0.9h-1.0zM346.6 300.1h1.3v0.8h-1.3zM345.6 313.2h0.9v1.0h-0.9zM345.5 306.2h0.9v1.0h-0.9zM357.6 307.6h1.3v0.6h-1.3zM343.0 298.8h0.6v0.5h-0.6zM348.3 300.1h1.3v0.6h-1.3zM354.9 306.4h0.7v0.8h-0.7zM353.0 289.3h0.5v1.0h-0.5zM362.6 301.2h0.5v0.9h-0.5zM344.8 296.2h1.1v1.0h-1.1zM346.3 315.6h1.0v0.9h-1.0zM345.1 305.0h1.2v1.1h-1.2zM343.2 300.7h1.2v1.1h-1.2zM358.4 303.2h0.8v0.8h-0.8zM353.5 304.0h1.0v0.6h-1.0zM346.9 310.8h1.0v0.9h-1.0zM359.2 298.9h1.3v0.7h-1.3zM359.8 296.5h1.0v0.7h-1.0zM353.0 303.0h1.0v1.1h-1.0zM342.8 297.5h0.7v0.9h-0.7zM358.9 310.2h0.6v1.1h-0.6zM350.5 307.5h0.7v0.9h-0.7zM355.0 321.5h0.9v1.1h-0.9zM350.1 305.4h0.9v0.7h-0.9zM346.2 297.8h1.0v1.0h-1.0zM366.4 287.2h0.7v1.2h-0.7zM360.5 303.3h1.2v1.2h-1.2zM361.7 302.8h0.9v1.3h-0.9zM344.8 304.3h1.1v1.0h-1.1zM347.2 322.6h0.6v0.5h-0.6zM353.3 316.6h0.8v0.9h-0.8zM363.9 289.3h1.1v1.1h-1.1zM361.8 293.8h1.3v1.3h-1.3zM350.0 312.0h1.1v0.9h-1.1zM351.4 298.6h0.6v1.1h-0.6zM364.2 307.5h0.6v0.6h-0.6zM358.6 288.8h1.0v0.7h-1.0zM365.2 292.8h0.8v1.0h-0.8zM370.0 286.5h1.1v1.2h-1.1zM353.3 320.2h0.8v1.2h-0.8zM352.6 307.7h1.0v0.6h-1.0zM343.9 298.5h0.8v1.0h-0.8zM366.1 306.0h1.0v1.0h-1.0zM344.5 304.3h1.2v0.5h-1.2zM366.2 286.7h0.9v0.6h-0.9zM346.2 302.7h0.7v0.8h-0.7zM348.5 300.8h1.3v0.6h-1.3zM357.3 313.3h0.9v1.3h-0.9zM343.4 306.6h1.2v1.0h-1.2zM354.3 319.1h1.2v0.7h-1.2zM349.7 319.1h1.1v0.8h-1.1zM362.2 300.2h0.6v0.5h-0.6zM355.1 302.3h0.6v0.7h-0.6zM365.2 295.4h0.9v0.5h-0.9zM352.5 291.4h0.6v1.1h-0.6zM356.6 297.2h1.1v1.0h-1.1zM347.7 302.9h0.6v1.1h-0.6zM367.7 285.0h0.8v0.6h-0.8zM349.5 313.7h1.2v1.2h-1.2zM354.0 295.0h1.1v0.8h-1.1zM370.9 295.4h1.2v1.2h-1.2zM344.3 297.4h0.7v0.6h-0.7zM351.0 319.1h0.8v0.8h-0.8zM355.2 321.4h0.6v0.7h-0.6zM362.8 304.7h1.0v1.2h-1.0zM365.2 291.2h1.1v0.7h-1.1zM344.4 296.3h0.8v0.9h-0.8zM345.2 310.8h0.8v1.3h-0.8zM364.4 287.0h1.2v1.3h-1.2zM348.7 297.2h0.6v0.7h-0.6zM344.3 309.0h1.2v0.8h-1.2zM349.9 310.2h1.0v0.5h-1.0zM357.8 288.8h1.3v1.2h-1.3zM358.7 297.6h0.5v0.8h-0.5zM346.3 311.6h0.6v0.9h-0.6zM344.3 302.8h1.1v1.2h-1.1zM359.9 308.5h0.9v1.0h-0.9zM348.9 293.5h0.9v1.0h-0.9zM369.3 295.5h0.7v0.6h-0.7zM368.2 284.8h0.5v0.9h-0.5zM350.6 298.8h0.6v0.6h-0.6zM347.8 317.8h1.1v1.1h-1.1zM368.3 292.2h1.3v0.9h-1.3zM350.5 318.6h0.7v0.5h-0.7zM367.7 288.9h1.3v1.2h-1.3zM362.0 306.9h0.7v1.2h-0.7zM362.8 296.1h0.7v0.7h-0.7zM352.6 324.1h1.0v1.0h-1.0zM367.3 286.0h1.0v1.1h-1.0zM342.1 295.4h0.9v0.7h-0.9zM366.2 299.2h0.9v0.8h-0.9zM354.7 321.1h0.9v1.3h-0.9zM342.7 298.2h1.1v1.1h-1.1zM354.5 292.3h0.8v1.2h-0.8zM371.5 299.0h0.7v1.3h-0.7zM342.9 300.2h0.8v1.1h-0.8zM342.3 292.3h0.9v1.1h-0.9zM348.0 312.0h0.5v0.6h-0.5zM374.1 296.9h1.0v1.2h-1.0zM355.3 298.3h1.1v1.1h-1.1zM352.9 305.3h1.0v1.0h-1.0zM349.8 316.9h1.1v1.2h-1.1zM344.3 300.9h1.2v0.8h-1.2zM353.4 303.4h0.6v0.9h-0.6zM367.1 286.5h0.8v1.0h-0.8zM363.0 307.9h0.7v0.8h-0.7zM351.3 303.9h0.6v1.0h-0.6zM351.0 306.4h0.5v1.3h-0.5zM345.1 299.5h0.8v0.5h-0.8zM351.0 310.7h0.9v1.1h-0.9zM349.4 324.9h1.1v1.0h-1.1zM361.3 311.6h0.5v1.2h-0.5zM358.3 292.0h0.8v1.1h-0.8zM368.9 292.6h0.8v1.3h-0.8zM343.0 300.4h1.3v1.1h-1.3zM359.6 302.9h0.6v1.1h-0.6zM357.6 313.7h0.9v0.8h-0.9zM367.1 294.1h1.1v0.8h-1.1zM348.9 322.2h0.9v0.8h-0.9zM346.4 291.2h0.5v0.7h-0.5zM354.6 313.1h1.2v1.1h-1.2zM372.0 296.0h0.5v1.0h-0.5zM350.9 312.9h1.1v0.9h-1.1zM362.1 309.4h0.6v0.9h-0.6zM351.3 293.7h1.2v0.7h-1.2zM348.0 320.6h0.9v1.2h-0.9zM347.2 322.5h0.8v1.2h-0.8zM362.7 298.4h0.8v0.6h-0.8zM373.2 294.7h0.8v0.8h-0.8zM343.7 298.8h0.9v0.9h-0.9zM354.3 302.8h0.7v0.6h-0.7zM355.4 301.5h1.1v0.7h-1.1zM364.9 290.6h0.6v1.1h-0.6zM362.4 299.2h1.2v0.9h-1.2zM347.0 292.2h0.9v0.8h-0.9zM362.0 288.2h0.5v0.6h-0.5zM344.8 298.2h1.1v1.0h-1.1zM346.6 309.2h1.3v1.3h-1.3zM346.0 313.6h0.6v1.2h-0.6zM352.3 310.9h1.2v0.9h-1.2zM365.2 287.2h0.8v0.7h-0.8zM348.9 320.8h1.2v1.0h-1.2zM352.2 297.9h1.2v0.6h-1.2zM350.7 325.1h0.7v0.6h-0.7zM352.2 320.7h1.2v1.0h-1.2zM359.8 302.4h0.8v1.3h-0.8zM361.8 299.6h0.8v1.3h-0.8zM364.4 303.7h1.2v0.6h-1.2zM352.3 292.4h1.1v1.1h-1.1zM353.6 307.0h0.7v1.1h-0.7zM357.7 293.0h0.9v0.6h-0.9zM349.1 291.2h1.0v0.7h-1.0zM345.1 305.2h0.6v1.0h-0.6zM358.7 293.1h1.2v0.9h-1.2zM350.1 293.1h0.7v0.9h-0.7zM367.2 288.9h0.7v0.5h-0.7zM362.0 309.0h0.8v0.8h-0.8zM349.3 304.1h0.8v1.0h-0.8zM346.1 300.3h1.2v0.7h-1.2zM369.7 291.4h1.2v0.6h-1.2zM352.4 318.5h1.2v1.0h-1.2zM365.3 293.5h0.8v1.1h-0.8zM362.0 307.5h0.6v0.5h-0.6zM369.1 296.2h0.6v0.7h-0.6zM363.4 292.8h0.8v0.9h-0.8zM352.9 311.5h1.3v0.9h-1.3zM369.2 293.4h1.2v1.2h-1.2zM356.0 294.4h0.5v0.6h-0.5zM363.7 304.8h0.6v1.3h-0.6zM355.6 288.7h1.3v0.5h-1.3zM355.7 297.6h1.1v0.8h-1.1zM343.1 300.4h0.5v1.0h-0.5zM360.9 308.3h0.5v0.8h-0.5zM357.4 306.8h1.2v1.1h-1.2zM359.5 296.2h0.8v1.0h-0.8zM344.8 308.9h1.2v0.8h-1.2zM362.7 293.3h1.0v0.7h-1.0zM359.6 291.4h1.2v1.2h-1.2zM359.1 291.0h0.9v0.7h-0.9zM363.9 294.7h0.6v0.6h-0.6zM346.8 315.8h0.5v1.3h-0.5zM356.1 299.7h1.2v0.8h-1.2zM348.1 307.8h1.1v1.3h-1.1zM349.8 298.2h0.9v0.6h-0.9zM367.4 301.6h0.6v0.8h-0.6zM345.5 310.7h0.6v0.7h-0.6zM342.7 305.2h1.2v1.0h-1.2zM364.7 287.4h1.0v0.5h-1.0zM355.3 297.3h0.5v1.1h-0.5zM344.5 300.3h0.8v0.5h-0.8zM356.4 306.3h0.9v1.1h-0.9zM357.1 304.0h0.6v0.8h-0.6zM349.1 302.1h1.0v0.9h-1.0zM349.2 316.0h0.6v1.2h-0.6zM372.5 292.2h0.6v0.9h-0.6zM347.8 316.0h0.6v0.9h-0.6zM355.9 299.7h0.9v0.8h-0.9zM351.4 311.8h1.2v1.1h-1.2zM345.4 305.0h0.6v0.7h-0.6zM347.2 319.9h1.3v1.2h-1.3zM354.5 296.2h0.7v1.2h-0.7zM352.2 301.1h1.2v1.0h-1.2zM344.5 305.0h0.7v1.1h-0.7zM361.0 302.9h1.1v1.2h-1.1zM355.9 313.6h0.6v1.3h-0.6zM345.7 300.7h0.6v0.9h-0.6zM361.0 301.3h1.0v0.7h-1.0zM350.8 311.1h1.2v0.9h-1.2zM368.3 284.4h0.9v1.2h-0.9zM354.1 289.3h0.9v0.5h-0.9zM345.8 304.4h0.7v0.9h-0.7zM349.6 314.0h0.9v0.7h-0.9zM365.0 302.4h1.2v0.6h-1.2zM368.4 296.4h1.3v0.5h-1.3zM347.7 307.8h0.8v1.0h-0.8zM373.2 297.8h0.6v1.2h-0.6zM375.0 299.2h0.6v0.5h-0.6zM355.3 293.5h0.8v0.8h-0.8zM369.5 301.2h0.6v1.0h-0.6zM357.7 296.0h0.7v1.2h-0.7zM351.7 297.0h1.2v1.2h-1.2zM352.7 294.0h1.1v1.1h-1.1zM346.2 297.8h0.8v0.7h-0.8zM353.0 317.9h0.6v0.8h-0.6zM363.2 301.2h0.5v0.9h-0.5zM355.2 305.6h0.6v1.0h-0.6zM342.9 293.8h0.9v0.9h-0.9zM362.0 291.0h1.0v0.9h-1.0zM354.6 297.6h0.8v0.9h-0.8zM348.2 304.6h1.0v0.5h-1.0zM361.6 307.8h1.0v1.0h-1.0zM368.0 287.3h0.8v0.7h-0.8zM354.1 317.5h0.5v0.7h-0.5zM361.6 292.3h0.6v0.8h-0.6zM346.4 298.6h1.3v1.0h-1.3zM352.0 318.6h1.1v0.8h-1.1zM359.2 307.0h0.7v0.6h-0.7zM360.1 309.1h1.1v0.7h-1.1zM362.6 298.2h1.0v1.3h-1.0zM346.9 292.8h1.1v1.1h-1.1zM359.9 292.5h0.7v0.8h-0.7zM353.8 290.2h1.2v0.8h-1.2zM356.7 289.7h0.9v0.6h-0.9zM349.8 325.0h0.5v0.9h-0.5zM346.0 296.7h1.0v1.1h-1.0zM349.9 313.8h1.1v0.5h-1.1zM347.9 304.9h0.7v0.6h-0.7zM364.1 289.7h1.0v1.3h-1.0zM342.3 294.2h0.6v0.9h-0.6zM352.1 297.5h0.9v0.9h-0.9zM344.1 307.3h0.6v1.2h-0.6zM359.2 304.8h0.9v1.1h-0.9zM360.7 301.9h1.2v0.7h-1.2zM369.0 292.1h1.0v1.1h-1.0zM358.9 309.9h0.7v0.8h-0.7zM347.2 310.3h0.7v0.5h-0.7zM349.5 315.2h0.8v0.6h-0.8zM357.8 309.6h1.3v1.2h-1.3zM351.0 303.7h0.9v0.8h-0.9zM365.3 302.6h0.6v0.6h-0.6zM353.5 310.7h1.2v0.8h-1.2zM351.4 324.4h0.6v0.8h-0.6zM361.8 289.9h0.5v1.2h-0.5zM351.4 308.3h1.1v0.9h-1.1zM351.5 324.7h0.8v0.9h-0.8zM360.3 310.0h0.6v1.1h-0.6zM373.5 295.6h1.3v1.0h-1.3zM353.2 305.1h1.1v1.2h-1.1zM346.0 296.2h0.6v0.9h-0.6zM350.7 295.4h1.0v1.3h-1.0zM348.2 306.2h0.8v1.0h-0.8zM352.7 291.2h0.7v1.2h-0.7zM361.8 291.1h0.6v0.9h-0.6zM359.5 297.7h0.8v0.5h-0.8zM349.2 320.1h0.8v1.2h-0.8zM351.4 302.5h0.6v0.7h-0.6zM353.5 310.7h0.9v0.8h-0.9zM354.7 302.7h0.7v0.8h-0.7zM370.9 297.9h1.0v0.5h-1.0zM353.4 297.8h1.1v1.2h-1.1zM359.7 297.1h0.8v1.0h-0.8zM354.5 321.5h1.3v0.6h-1.3zM344.2 294.4h1.3v1.2h-1.3zM347.8 301.2h1.3v0.7h-1.3zM368.5 294.2h0.8v1.3h-0.8zM364.2 301.8h1.3v1.2h-1.3zM345.4 297.3h0.6v0.7h-0.6zM346.3 312.8h1.1v0.5h-1.1zM350.3 300.1h1.3v1.0h-1.3zM342.9 302.2h1.0v1.1h-1.0zM359.9 292.7h1.0v0.9h-1.0zM373.1 297.4h1.1v0.7h-1.1zM368.8 293.1h1.2v1.0h-1.2zM347.3 315.4h1.1v0.8h-1.1zM369.0 297.4h0.6v0.9h-0.6zM343.3 299.2h1.2v1.2h-1.2zM367.7 300.6h0.6v0.9h-0.6zM369.5 287.2h0.8v0.9h-0.8zM354.8 313.5h0.5v1.1h-0.5zM364.7 293.4h0.6v0.6h-0.6zM346.6 303.8h0.6v0.5h-0.6zM362.3 294.8h0.7v0.8h-0.7zM356.2 310.1h0.6v1.0h-0.6zM362.5 299.3h0.6v0.6h-0.6zM358.2 297.7h0.8v0.9h-0.8zM353.3 288.9h1.3v0.7h-1.3zM366.8 295.8h0.9v1.0h-0.9zM350.5 308.6h1.3v1.0h-1.3zM362.4 302.7h0.7v1.2h-0.7zM344.1 303.8h1.0v1.3h-1.0zM347.0 324.9h1.0v0.5h-1.0zM352.2 289.4h1.2v1.0h-1.2zM345.9 298.1h1.0v1.2h-1.0zM348.9 293.1h0.5v1.0h-0.5zM345.5 303.8h1.0v0.5h-1.0zM363.0 311.2h0.8v1.0h-0.8zM354.8 315.7h0.9v0.5h-0.9zM356.7 315.5h0.8v0.5h-0.8zM348.2 301.2h0.7v1.2h-0.7zM348.6 324.8h1.0v0.7h-1.0zM356.0 308.6h0.6v1.2h-0.6zM346.0 312.9h0.9v1.2h-0.9zM361.0 294.5h0.7v0.8h-0.7zM346.2 311.6h0.6v0.5h-0.6zM350.5 300.4h0.9v0.7h-0.9zM344.7 306.3h1.1v0.8h-1.1zM364.4 295.5h1.0v0.6h-1.0zM357.1 310.1h1.1v1.2h-1.1zM358.6 298.0h0.7v0.7h-0.7zM365.9 287.3h1.0v0.5h-1.0zM368.7 292.9h0.9v1.2h-0.9zM367.4 288.6h1.0v0.8h-1.0zM362.8 303.8h0.9v1.0h-0.9zM355.8 317.5h1.0v0.7h-1.0zM348.3 311.8h0.9v0.6h-0.9zM355.7 296.5h1.0v0.5h-1.0zM353.8 323.5h0.5v0.6h-0.5zM353.6 293.1h0.5v0.9h-0.5zM363.3 293.6h1.0v1.3h-1.0zM373.0 299.6h0.5v0.8h-0.5zM367.9 301.3h1.0v1.0h-1.0zM356.3 292.9h1.1v0.9h-1.1zM359.5 298.2h0.9v1.0h-0.9zM356.9 295.2h1.1v0.6h-1.1zM368.7 292.5h0.9v0.9h-0.9zM350.7 323.6h1.2v0.9h-1.2zM341.5 297.3h1.1v0.9h-1.1zM350.1 324.5h0.6v0.9h-0.6zM367.3 285.7h0.8v1.1h-0.8zM348.8 291.6h0.8v0.8h-0.8zM358.9 293.8h0.7v1.2h-0.7zM342.8 292.1h0.7v0.9h-0.7zM363.6 304.5h1.3v0.9h-1.3zM394.7 344.1h0.6v0.6h-0.6zM339.6 334.7h0.7v0.6h-0.7zM382.2 329.7h1.2v0.9h-1.2zM388.2 332.3h0.9v1.2h-0.9zM390.5 329.5h1.1v0.7h-1.1zM405.5 333.2h0.8v0.5h-0.8zM393.3 343.6h0.9v1.3h-0.9zM407.6 336.5h1.1v0.7h-1.1zM392.4 338.4h1.2v1.0h-1.2zM365.6 339.3h1.1v1.1h-1.1zM385.7 344.3h0.8v0.9h-0.8zM383.3 336.2h0.6v0.7h-0.6zM397.2 340.0h1.3v1.3h-1.3zM380.5 346.2h0.7v0.5h-0.7zM374.8 339.0h0.9v0.9h-0.9zM377.2 344.8h1.2v0.7h-1.2zM392.6 338.5h0.5v0.9h-0.5zM387.3 341.0h0.6v0.5h-0.6zM405.3 343.1h1.3v0.6h-1.3zM372.9 344.1h0.7v1.2h-0.7zM366.8 349.1h0.7v1.0h-0.7zM381.7 342.3h0.7v0.7h-0.7zM400.2 336.9h0.9v0.9h-0.9zM344.8 335.5h0.6v0.9h-0.6zM382.2 331.6h0.6v1.0h-0.6zM403.9 347.4h1.0v0.8h-1.0zM400.2 338.3h0.8v1.2h-0.8zM388.7 341.6h1.1v0.5h-1.1zM372.9 335.2h0.9v0.5h-0.9zM364.1 349.9h0.8v1.1h-0.8zM392.4 343.9h0.8v1.0h-0.8zM360.5 342.3h1.3v1.0h-1.3zM401.2 333.7h0.6v0.9h-0.6zM357.6 342.6h0.7v1.2h-0.7zM379.4 342.1h0.9v1.0h-0.9zM391.3 338.0h0.9v1.3h-0.9zM398.6 337.2h1.0v0.7h-1.0zM390.1 334.4h0.8v1.1h-0.8zM360.8 342.9h1.0v0.7h-1.0zM393.1 335.7h0.7v1.3h-0.7zM369.7 352.8h1.1v0.7h-1.1zM397.8 332.5h0.7v0.5h-0.7zM353.8 332.3h0.8v0.8h-0.8zM366.3 328.2h1.1v1.2h-1.1zM365.0 332.8h1.3v0.9h-1.3zM388.6 340.4h1.1v0.7h-1.1zM384.2 340.8h0.9v1.2h-0.9zM387.2 344.7h0.5v1.1h-0.5zM362.3 334.4h0.8v0.6h-0.8zM394.8 329.6h0.8v0.7h-0.8zM376.6 334.4h1.3v0.7h-1.3zM364.1 350.6h1.1v0.7h-1.1zM365.8 341.1h0.9v0.8h-0.9zM405.0 333.5h0.6v1.0h-0.6zM385.1 334.4h0.5v0.7h-0.5zM383.5 335.5h0.7v0.8h-0.7zM367.4 345.3h1.2v1.3h-1.2zM380.0 349.9h0.6v1.2h-0.6zM381.4 332.0h1.1v1.3h-1.1zM400.2 345.1h1.3v0.8h-1.3zM377.6 345.8h0.5v1.0h-0.5zM386.1 332.5h0.6v1.2h-0.6zM391.8 344.8h0.6v1.0h-0.6zM393.5 331.1h0.9v0.6h-0.9zM360.8 352.9h0.7v1.0h-0.7zM366.3 328.0h1.0v0.9h-1.0zM391.1 352.1h0.5v1.0h-0.5zM342.8 336.6h0.7v1.0h-0.7zM401.0 333.9h0.6v0.9h-0.6zM386.7 334.9h1.0v0.9h-1.0zM370.6 345.5h0.6v1.0h-0.6zM392.4 345.1h0.6v1.0h-0.6zM376.1 347.1h1.0v0.5h-1.0zM341.9 336.9h0.8v0.8h-0.8zM385.3 344.2h0.7v1.0h-0.7zM369.7 335.0h1.0v1.0h-1.0zM375.9 351.5h0.8v0.6h-0.8zM370.6 332.4h1.2v0.9h-1.2zM381.0 337.4h0.6v1.2h-0.6zM366.6 329.8h1.1v1.1h-1.1zM407.7 336.6h1.1v1.1h-1.1zM363.8 340.8h0.9v1.3h-0.9zM376.9 332.5h0.6v1.2h-0.6zM343.3 334.8h0.9v1.0h-0.9zM400.0 332.7h1.2v1.2h-1.2zM397.3 346.1h0.7v0.6h-0.7zM365.6 352.0h1.0v1.0h-1.0zM357.2 339.8h1.3v0.8h-1.3zM378.8 339.5h1.1v1.0h-1.1zM354.9 335.9h0.7v1.2h-0.7zM371.3 344.1h0.9v1.2h-0.9zM362.9 343.3h0.9v0.7h-0.9zM340.5 335.3h1.3v0.6h-1.3zM365.4 329.8h1.0v0.8h-1.0zM387.6 341.1h0.9v1.1h-0.9zM395.4 329.5h1.1v0.5h-1.1zM358.4 338.2h1.1v1.1h-1.1zM409.8 339.7h0.9v0.5h-0.9zM356.2 334.0h0.7v1.2h-0.7zM357.8 339.3h0.7v1.0h-0.7zM393.5 347.5h0.7v0.5h-0.7zM349.2 338.5h1.2v0.8h-1.2zM377.4 333.4h1.3v1.1h-1.3zM367.1 352.4h0.7v0.7h-0.7zM356.6 332.8h0.8v0.5h-0.8zM360.4 329.7h0.7v1.2h-0.7zM391.6 342.3h0.6v1.1h-0.6zM374.5 335.2h0.6v0.8h-0.6zM375.6 336.2h1.0v1.0h-1.0zM350.1 333.4h0.5v0.7h-0.5zM369.7 346.9h1.1v1.0h-1.1zM407.0 342.7h0.6v0.5h-0.6zM361.4 334.0h0.6v0.7h-0.6zM345.7 334.9h0.9v0.8h-0.9zM362.1 346.6h1.2v1.1h-1.2zM371.0 346.6h1.1v0.7h-1.1zM391.5 338.8h0.8v0.7h-0.8zM406.0 334.4h0.9v1.2h-0.9zM374.0 352.1h0.8v1.2h-0.8zM372.5 339.7h0.9v1.0h-0.9zM378.1 340.5h0.5v0.6h-0.5zM349.2 331.5h1.1v1.0h-1.1zM379.1 332.7h0.6v0.8h-0.6zM342.5 336.4h1.3v1.2h-1.3zM371.2 329.5h0.9v0.5h-0.9zM368.9 346.1h0.5v0.9h-0.5zM397.9 335.3h1.3v1.3h-1.3zM370.2 327.8h1.0v1.2h-1.0zM363.3 332.7h1.2v0.7h-1.2zM393.9 335.8h1.2v0.7h-1.2zM390.2 334.4h1.3v0.5h-1.3zM401.0 339.5h0.6v0.7h-0.6zM356.6 338.7h1.2v0.6h-1.2zM377.3 334.1h0.8v1.2h-0.8zM345.2 335.4h0.7v0.8h-0.7zM407.9 340.3h0.6v0.9h-0.6zM373.3 340.5h0.9v1.1h-0.9zM385.3 334.7h1.1v1.0h-1.1zM381.3 335.1h0.7v0.8h-0.7zM371.4 348.5h0.7v1.1h-0.7zM360.9 335.7h0.7v0.6h-0.7zM380.6 347.9h0.6v0.8h-0.6zM401.0 346.0h0.6v0.5h-0.6zM402.4 333.7h1.1v0.9h-1.1zM407.4 338.0h1.2v0.7h-1.2zM404.7 340.8h0.9v1.2h-0.9zM402.9 346.0h1.3v0.9h-1.3zM358.1 331.2h0.6v0.9h-0.6zM391.8 338.2h1.3v1.3h-1.3zM369.6 336.4h1.2v1.3h-1.2zM396.9 348.5h1.2v1.2h-1.2zM381.8 330.7h0.5v1.1h-0.5zM364.8 329.0h0.8v1.3h-0.8zM360.9 352.9h1.2v1.2h-1.2zM400.0 340.5h1.0v0.6h-1.0zM391.6 334.5h0.7v0.6h-0.7zM398.3 333.4h0.8v0.8h-0.8zM392.8 332.9h0.9v1.3h-0.9zM369.6 337.9h0.9v1.0h-0.9zM368.9 347.9h1.3v0.5h-1.3zM375.5 340.7h0.8v1.2h-0.8zM381.4 343.8h1.0v0.7h-1.0zM387.5 330.1h0.9v0.9h-0.9zM392.3 335.7h0.8v1.0h-0.8zM380.1 342.2h1.0v1.2h-1.0zM390.3 351.6h0.9v0.9h-0.9zM344.1 335.6h0.5v0.8h-0.5zM407.2 339.4h1.1v0.9h-1.1zM381.6 341.7h1.3v0.6h-1.3zM369.8 338.1h0.5v0.6h-0.5zM405.1 346.9h1.3v1.3h-1.3zM349.9 333.4h0.8v0.9h-0.8zM375.8 340.1h0.5v1.0h-0.5zM384.0 333.1h0.7v1.0h-0.7zM376.2 344.3h1.2v1.2h-1.2zM397.7 329.7h1.1v0.5h-1.1zM355.3 334.9h1.2v1.1h-1.2zM357.8 337.1h0.8v1.0h-0.8zM385.0 346.6h0.8v1.2h-0.8zM404.2 338.2h0.8v1.0h-0.8zM346.0 332.8h0.7v0.8h-0.7zM349.9 332.9h1.1v1.0h-1.1zM378.1 342.7h0.9v1.2h-0.9zM359.9 348.0h0.8v1.3h-0.8zM388.7 339.0h0.6v1.1h-0.6zM405.3 335.1h0.8v0.8h-0.8zM385.4 341.1h0.9v0.7h-0.9zM393.6 347.7h1.0v1.0h-1.0zM366.1 347.4h0.7v0.5h-0.7zM367.9 330.8h1.2v1.1h-1.2zM393.1 329.1h0.9v0.5h-0.9zM382.4 333.2h1.1v1.1h-1.1zM353.6 339.7h1.3v1.0h-1.3zM397.6 343.9h0.9v0.5h-0.9zM384.3 339.9h0.8v0.7h-0.8zM391.6 342.8h0.6v0.5h-0.6zM355.9 330.9h0.9v0.7h-0.9zM405.7 346.6h1.1v0.8h-1.1zM370.9 347.7h0.8v0.8h-0.8zM403.5 338.9h0.6v1.0h-0.6zM410.6 336.9h0.9v1.2h-0.9zM358.1 331.9h1.0v0.7h-1.0zM372.7 338.5h1.1v1.1h-1.1zM396.1 333.7h1.0v1.1h-1.0zM385.5 341.6h0.6v0.7h-0.6zM394.8 340.5h0.9v0.8h-0.9zM372.7 335.6h1.0v0.5h-1.0zM376.1 337.2h0.6v0.6h-0.6zM389.0 351.2h0.9v1.1h-0.9zM360.2 330.6h1.3v1.0h-1.3zM368.1 352.5h1.0v0.9h-1.0zM379.5 342.2h0.6v1.0h-0.6zM361.5 349.4h1.0v1.2h-1.0zM386.0 332.9h1.0v1.2h-1.0zM400.3 341.6h0.9v0.8h-0.9zM395.2 343.5h0.5v0.7h-0.5zM353.7 339.0h1.0v0.7h-1.0zM387.6 334.3h0.7v0.7h-0.7zM359.0 348.4h1.1v1.1h-1.1zM351.7 339.1h0.8v1.0h-0.8zM349.8 339.4h0.9v1.0h-0.9zM399.4 331.4h1.3v0.7h-1.3zM367.9 336.3h0.6v1.3h-0.6zM338.9 333.7h0.9v0.5h-0.9zM385.4 330.5h1.0v1.1h-1.0zM368.2 342.6h0.8v1.0h-0.8zM356.9 332.5h0.7v1.1h-0.7zM395.1 344.6h0.7v0.7h-0.7zM377.2 349.5h0.6v1.1h-0.6zM392.8 342.2h0.7v0.7h-0.7zM346.5 336.7h1.1v0.7h-1.1zM391.3 340.3h1.0v1.3h-1.0zM364.2 340.3h0.6v1.2h-0.6zM391.2 342.6h1.1v1.1h-1.1zM367.3 340.0h0.9v0.7h-0.9zM393.7 349.2h0.6v0.6h-0.6zM364.0 352.0h1.3v1.3h-1.3zM365.0 333.8h0.8v0.7h-0.8zM372.3 337.4h0.9v0.9h-0.9zM395.0 332.7h1.1v0.6h-1.1zM362.3 351.7h0.8v0.7h-0.8zM344.9 333.8h0.8v1.1h-0.8zM366.0 328.6h0.6v0.5h-0.6zM362.0 328.9h0.9v0.5h-0.9zM388.9 343.3h0.9v0.9h-0.9zM386.3 336.6h0.8v1.2h-0.8zM360.5 349.3h1.3v1.0h-1.3zM384.8 348.3h0.7v1.3h-0.7zM388.7 333.3h0.7v0.6h-0.7zM364.0 352.5h0.6v0.6h-0.6zM385.6 339.6h0.7v1.1h-0.7zM370.3 337.2h0.5v1.1h-0.5zM364.0 330.7h1.0v0.9h-1.0zM395.0 338.4h0.7v0.8h-0.7zM371.1 346.1h1.2v1.2h-1.2zM396.8 340.2h0.6v0.8h-0.6zM365.5 330.6h0.5v0.6h-0.5zM380.0 331.5h0.9v1.2h-0.9zM365.8 332.3h1.0v0.8h-1.0zM364.5 328.7h1.0v0.6h-1.0zM363.2 340.7h0.6v0.9h-0.6zM367.0 347.2h0.7v1.0h-0.7zM393.9 341.1h0.8v1.2h-0.8zM357.7 331.5h0.8v0.8h-0.8zM398.5 332.8h1.3v1.0h-1.3zM390.8 334.4h0.7v0.7h-0.7zM407.4 338.9h0.9v0.6h-0.9zM388.0 347.0h0.9v1.2h-0.9zM376.3 342.3h1.3v1.1h-1.3zM385.9 332.1h0.7v0.9h-0.7zM383.7 338.0h0.5v1.1h-0.5zM398.9 343.6h1.1v1.0h-1.1zM342.6 334.1h0.5v1.0h-0.5zM382.9 345.3h0.8v0.6h-0.8zM369.0 348.4h0.6v1.0h-0.6zM387.6 337.9h1.2v0.9h-1.2zM393.8 332.9h1.3v1.0h-1.3zM363.8 347.6h0.5v1.0h-0.5zM351.2 333.7h0.6v0.9h-0.6zM355.6 330.6h1.2v1.1h-1.2zM401.5 333.7h1.1v0.9h-1.1zM409.5 335.5h1.1v1.0h-1.1zM361.6 348.2h0.8v0.6h-0.8zM365.9 333.6h1.0v0.6h-1.0zM405.4 335.7h1.0v1.0h-1.0zM388.1 347.7h0.7v0.9h-0.7zM399.1 336.7h1.2v0.7h-1.2zM354.1 339.9h0.6v0.7h-0.6zM401.1 342.0h0.5v1.2h-0.5zM364.6 348.0h1.0v1.3h-1.0zM398.9 335.7h0.8v0.8h-0.8zM406.8 335.8h1.1v0.6h-1.1zM389.4 336.1h0.6v1.3h-0.6zM389.9 333.2h0.9v0.5h-0.9zM341.9 332.8h1.2v0.9h-1.2zM380.9 346.1h0.6v1.0h-0.6zM409.0 341.8h0.9v1.1h-0.9zM384.8 334.2h1.1v0.7h-1.1zM358.0 331.1h1.3v1.3h-1.3zM396.8 344.6h1.0v0.8h-1.0zM404.4 344.6h1.2v1.2h-1.2zM377.9 342.0h1.1v0.7h-1.1zM378.8 345.5h0.8v0.7h-0.8zM379.6 340.4h1.0v0.7h-1.0zM398.5 330.5h1.1v1.2h-1.1zM362.6 331.1h1.0v0.8h-1.0zM381.4 348.5h1.1v1.2h-1.1zM399.5 338.5h0.9v0.7h-0.9zM397.6 338.8h1.3v1.3h-1.3zM390.6 350.0h0.8v1.2h-0.8zM381.2 340.1h1.3v0.6h-1.3zM388.7 338.4h1.1v1.1h-1.1zM400.2 334.4h0.6v1.3h-0.6zM360.3 343.8h1.3v0.6h-1.3zM378.6 344.7h0.7v0.9h-0.7zM403.3 340.1h1.2v0.9h-1.2zM352.9 333.9h0.5v0.6h-0.5zM366.0 338.7h1.1v0.5h-1.1zM397.1 343.2h1.1v1.1h-1.1zM376.9 332.3h1.0v1.0h-1.0zM366.9 336.6h1.3v1.0h-1.3zM360.6 337.3h1.0v1.2h-1.0zM361.6 341.1h1.0v1.0h-1.0zM399.4 336.2h1.1v0.5h-1.1zM367.9 335.0h1.0v0.7h-1.0zM365.6 332.9h0.7v1.0h-0.7zM396.7 348.4h0.9v0.5h-0.9zM388.4 332.9h1.0v1.2h-1.0zM396.1 349.8h0.9v1.2h-0.9zM387.7 350.4h1.1v1.2h-1.1zM350.0 339.4h1.2v1.0h-1.2zM383.7 349.3h1.2v1.2h-1.2zM363.2 349.3h0.6v0.8h-0.6zM382.5 346.0h0.5v1.2h-0.5zM369.1 334.5h0.9v0.7h-0.9zM409.1 340.0h1.1v0.6h-1.1zM411.3 338.1h1.0v1.2h-1.0zM342.5 334.5h1.0v1.2h-1.0zM379.5 347.4h1.1v1.0h-1.1zM352.1 339.2h0.9v0.6h-0.9zM401.9 332.8h1.2v0.6h-1.2zM338.9 335.7h0.7v0.7h-0.7zM409.3 343.4h0.6v0.5h-0.6zM341.2 336.5h1.2v0.9h-1.2zM360.4 344.2h1.1v0.8h-1.1zM374.8 339.9h0.9v0.7h-0.9zM369.2 347.7h1.1v1.1h-1.1zM366.1 340.1h0.7v0.9h-0.7zM356.4 342.3h1.1v0.7h-1.1zM347.1 334.5h0.8v0.6h-0.8zM380.2 335.4h1.3v1.1h-1.3zM407.4 345.5h1.0v0.8h-1.0zM386.6 343.4h0.8v1.3h-0.8zM342.6 335.0h0.6v0.6h-0.6zM406.4 342.7h0.6v0.9h-0.6zM366.4 341.1h1.2v1.1h-1.2zM391.0 346.9h1.2v1.1h-1.2zM395.8 335.6h0.7v1.0h-0.7zM360.2 348.2h1.1v1.2h-1.1zM347.9 332.8h1.3v1.0h-1.3zM393.6 327.9h1.0v1.2h-1.0zM363.6 350.2h0.9v0.7h-0.9zM406.1 341.3h1.2v1.1h-1.2zM410.8 336.7h0.9v1.1h-0.9zM370.9 340.8h0.6v1.2h-0.6zM371.0 343.1h0.6v0.7h-0.6zM396.2 331.6h0.8v1.1h-0.8zM362.0 343.5h0.9v0.6h-0.9zM381.3 334.1h1.3v0.5h-1.3zM374.9 335.5h0.9v1.0h-0.9zM344.9 336.3h0.6v1.1h-0.6zM382.3 330.4h0.5v1.0h-0.5zM383.2 333.7h1.0v0.8h-1.0zM394.9 347.4h0.9v0.5h-0.9zM396.7 331.9h0.5v0.5h-0.5zM366.1 339.6h1.1v0.8h-1.1zM365.6 336.4h0.8v1.1h-0.8zM403.9 346.0h0.8v0.6h-0.8zM355.7 330.4h1.2v1.0h-1.2zM376.2 338.6h0.9v0.8h-0.9zM408.6 332.4h1.0v1.0h-1.0zM365.1 347.3h1.0v1.3h-1.0zM394.0 337.1h0.7v1.1h-0.7zM403.2 341.8h0.5v1.2h-0.5zM386.0 344.8h1.2v0.9h-1.2zM367.0 352.1h0.6v0.8h-0.6zM363.9 344.5h1.1v0.6h-1.1zM373.4 339.3h0.9v1.0h-0.9zM363.5 347.8h1.1v0.9h-1.1zM361.7 344.2h1.0v0.8h-1.0zM360.6 350.8h1.3v1.0h-1.3zM362.0 334.7h1.3v0.5h-1.3zM407.3 343.3h1.2v1.2h-1.2zM393.6 346.6h0.6v0.7h-0.6zM362.2 346.3h0.8v0.9h-0.8zM395.0 338.1h1.1v0.8h-1.1zM374.1 342.2h1.2v1.0h-1.2zM347.7 332.6h0.8v0.8h-0.8zM373.1 347.1h1.0v0.7h-1.0zM361.0 351.2h1.2v1.2h-1.2zM394.9 330.0h0.6v0.9h-0.6zM404.0 344.7h0.7v0.6h-0.7zM362.2 345.3h1.3v0.9h-1.3zM367.4 342.1h1.2v1.2h-1.2zM370.8 347.8h0.9v1.3h-0.9zM390.7 341.5h0.9v0.7h-0.9zM383.0 348.1h0.5v1.1h-0.5zM380.6 332.1h1.1v0.7h-1.1zM354.6 332.9h0.7v1.2h-0.7zM360.5 340.2h1.0v0.7h-1.0zM402.9 337.1h0.8v0.8h-0.8zM388.4 330.0h0.6v0.8h-0.6zM383.4 349.4h1.3v0.5h-1.3zM381.1 333.1h1.0v1.2h-1.0zM338.1 334.3h1.2v1.2h-1.2zM388.5 329.2h1.0v1.2h-1.0zM390.8 352.0h1.2v1.3h-1.2zM389.9 341.2h0.7v0.7h-0.7zM388.0 337.8h0.7v0.6h-0.7zM405.6 346.7h1.3v1.3h-1.3zM373.4 332.7h0.7v0.8h-0.7zM363.9 335.7h0.7v0.9h-0.7zM388.0 338.0h1.0v0.9h-1.0zM399.0 342.2h1.2v1.0h-1.2zM385.8 331.8h1.1v0.8h-1.1zM362.8 341.8h0.8v1.1h-0.8zM394.7 331.3h0.5v1.0h-0.5zM399.4 345.1h0.6v1.2h-0.6zM375.5 333.2h0.9v0.8h-0.9zM386.1 333.5h0.6v0.8h-0.6zM357.4 341.5h1.2v1.2h-1.2zM370.5 344.2h0.7v0.6h-0.7zM386.6 330.3h1.0v1.1h-1.0zM374.6 342.0h1.1v0.8h-1.1zM379.1 333.3h1.2v0.6h-1.2zM364.8 335.2h0.6v0.7h-0.6zM396.3 344.1h0.6v0.6h-0.6zM395.1 340.7h0.9v0.8h-0.9zM384.7 345.2h1.3v1.2h-1.3zM359.0 350.6h1.2v1.2h-1.2zM361.6 345.3h1.2v1.1h-1.2zM395.3 330.9h0.6v1.3h-0.6zM380.3 350.5h0.5v0.6h-0.5zM373.4 340.0h0.7v0.7h-0.7zM393.2 344.3h0.6v1.3h-0.6zM367.6 331.8h1.1v1.1h-1.1zM389.9 350.7h0.5v1.2h-0.5zM407.9 345.8h1.1v0.8h-1.1zM361.2 337.8h1.1v0.7h-1.1zM382.6 331.6h0.7v0.8h-0.7zM371.7 346.5h0.6v1.3h-0.6zM381.9 330.9h0.5v1.2h-0.5zM404.3 342.4h1.3v1.0h-1.3zM395.6 346.4h0.7v0.7h-0.7zM380.5 346.4h0.9v1.1h-0.9zM381.8 348.4h1.0v0.7h-1.0zM405.1 339.0h0.9v0.9h-0.9zM371.5 338.1h0.6v0.6h-0.6zM398.4 337.0h0.7v0.6h-0.7zM394.0 337.5h0.8v1.2h-0.8zM386.5 341.8h0.9v0.9h-0.9zM391.6 332.2h1.2v1.2h-1.2zM397.3 346.7h1.2v1.1h-1.2zM365.4 330.8h1.3v0.6h-1.3zM392.0 337.2h0.9v1.0h-0.9zM387.7 337.9h1.0v0.9h-1.0zM381.2 331.2h1.2v0.5h-1.2zM407.0 335.9h1.1v0.6h-1.1zM375.2 342.3h1.0v1.1h-1.0zM355.9 334.8h0.5v0.7h-0.5zM399.3 340.4h0.6v0.7h-0.6zM382.5 347.0h1.0v1.0h-1.0zM389.9 346.5h1.2v1.2h-1.2zM397.1 336.6h0.8v0.8h-0.8zM372.2 346.2h0.8v0.9h-0.8zM390.1 339.1h1.0v1.0h-1.0zM385.1 337.6h0.9v0.9h-0.9zM398.0 348.1h1.0v1.2h-1.0zM391.4 346.7h1.2v0.9h-1.2zM404.2 339.1h0.9v1.2h-0.9zM403.4 332.1h0.6v0.6h-0.6zM410.4 341.1h1.1v1.3h-1.1zM391.2 340.4h0.7v1.0h-0.7zM365.3 349.2h1.1v1.1h-1.1zM379.2 340.8h0.8v1.1h-0.8zM366.4 330.7h0.5v1.0h-0.5zM388.1 346.9h1.2v0.8h-1.2zM381.1 340.6h0.9v1.2h-0.9zM349.7 338.1h0.9v0.5h-0.9zM353.8 332.3h0.5v0.9h-0.5zM390.1 335.0h1.3v1.1h-1.3zM353.2 339.2h1.2v0.5h-1.2zM397.4 337.6h0.6v0.9h-0.6zM370.0 344.0h0.5v1.1h-0.5zM400.1 342.1h0.9v1.2h-0.9zM387.0 336.2h1.3v0.5h-1.3zM374.5 336.8h0.7v0.8h-0.7zM386.2 334.2h1.1v0.6h-1.1zM358.5 336.3h0.6v0.8h-0.6zM370.2 340.4h1.0v1.1h-1.0zM406.2 338.7h1.0v0.9h-1.0zM393.6 334.3h0.9v1.0h-0.9zM370.5 336.1h0.6v1.1h-0.6zM399.9 347.3h0.5v1.1h-0.5zM362.1 343.7h0.7v1.3h-0.7zM382.0 331.0h0.7v0.6h-0.7zM385.0 339.9h0.7v1.1h-0.7zM365.9 331.5h0.9v0.8h-0.9zM402.5 333.9h1.3v0.6h-1.3zM369.9 344.9h0.9v1.2h-0.9zM354.2 329.3h1.1v0.7h-1.1zM350.8 331.4h1.2v1.0h-1.2zM396.6 333.4h0.7v0.6h-0.7zM367.7 351.3h0.6v0.8h-0.6zM375.8 341.7h0.7v1.0h-0.7zM385.1 341.0h0.7v1.3h-0.7zM370.0 341.6h1.2v1.1h-1.2zM397.2 335.3h0.5v1.2h-0.5zM367.2 341.2h0.5v0.5h-0.5zM357.2 341.6h0.7v0.9h-0.7zM356.9 332.9h1.1v0.5h-1.1zM366.8 341.9h0.8v0.9h-0.8zM367.8 344.1h0.7v1.3h-0.7zM366.5 352.8h0.7v1.3h-0.7zM405.9 340.8h0.7v1.0h-0.7zM362.8 329.6h1.1v0.9h-1.1zM391.7 333.0h1.2v0.6h-1.2zM349.9 335.0h1.2v1.2h-1.2zM390.9 343.5h1.0v0.5h-1.0zM389.1 345.2h0.5v1.1h-0.5zM340.9 333.9h1.0v1.2h-1.0zM359.5 339.1h1.2v0.7h-1.2zM362.8 337.1h0.9v0.6h-0.9zM345.9 338.0h0.7v0.5h-0.7zM389.7 334.7h1.1v1.0h-1.1zM365.4 329.1h0.6v1.1h-0.6zM381.4 339.0h0.5v0.7h-0.5zM360.3 331.9h1.2v0.8h-1.2zM347.6 337.9h1.3v1.1h-1.3zM388.4 338.1h0.7v0.7h-0.7zM375.2 339.3h1.2v1.0h-1.2zM370.5 339.9h1.1v1.2h-1.1zM377.0 337.1h1.0v0.7h-1.0zM352.7 340.0h0.9v0.9h-0.9zM385.2 345.6h1.0v0.6h-1.0zM403.5 340.6h0.6v0.5h-0.6zM362.1 334.2h1.2v1.2h-1.2zM400.7 340.4h1.1v0.9h-1.1zM408.8 339.1h0.5v1.3h-0.5zM372.1 351.5h0.8v1.3h-0.8zM386.7 334.0h0.8v1.2h-0.8zM358.7 344.1h1.1v1.0h-1.1zM368.0 339.4h0.5v0.7h-0.5zM364.6 342.0h0.6v1.1h-0.6zM407.8 339.4h0.6v0.5h-0.6zM374.8 348.4h0.8v1.2h-0.8zM349.9 336.1h0.9v1.2h-0.9zM380.4 338.1h1.2v1.0h-1.2zM377.7 334.1h0.6v1.2h-0.6zM379.6 347.7h0.8v0.8h-0.8zM380.7 333.1h1.2v1.1h-1.2zM361.3 333.5h0.8v0.9h-0.8zM399.4 337.2h1.3v1.0h-1.3zM363.4 349.7h0.5v1.0h-0.5zM380.0 346.7h1.0v1.2h-1.0zM343.8 336.3h0.7v0.6h-0.7zM368.7 336.5h0.9v0.6h-0.9zM370.5 329.6h0.9v0.7h-0.9zM391.9 343.9h0.9v1.1h-0.9zM363.5 348.7h1.0v0.7h-1.0zM403.8 334.4h1.1v1.1h-1.1zM373.8 334.2h0.5v1.0h-0.5zM404.3 339.8h1.1v0.6h-1.1zM397.1 347.8h1.0v0.7h-1.0zM364.7 329.6h1.3v1.3h-1.3zM366.2 330.2h1.0v1.0h-1.0zM397.4 349.1h0.9v1.1h-0.9zM395.5 343.3h1.0v0.8h-1.0zM375.4 332.5h0.6v1.2h-0.6zM359.6 334.0h1.2v1.1h-1.2zM404.0 338.3h1.0v1.2h-1.0zM354.2 333.0h1.1v0.6h-1.1zM391.9 346.5h1.0v1.0h-1.0zM385.7 349.8h0.8v0.8h-0.8zM372.2 335.9h1.3v0.9h-1.3zM383.6 339.6h1.1v0.8h-1.1zM365.1 349.6h0.8v0.5h-0.8zM377.0 349.5h1.0v0.9h-1.0zM360.4 338.8h1.0v0.6h-1.0zM409.2 337.3h1.0v1.1h-1.0zM395.8 335.0h0.6v1.0h-0.6zM405.9 345.4h1.0v1.1h-1.0zM395.0 342.2h1.1v0.9h-1.1zM387.8 336.9h0.6v0.8h-0.6zM389.8 347.0h1.0v0.8h-1.0zM391.2 347.8h0.9v0.8h-0.9zM399.0 333.9h0.9v1.2h-0.9zM389.7 347.0h1.0v0.6h-1.0zM394.2 345.9h0.8v0.9h-0.8zM370.5 347.9h0.7v0.6h-0.7zM359.7 333.3h1.2v1.1h-1.2zM370.1 334.3h0.8v1.2h-0.8zM382.7 332.5h1.2v1.2h-1.2zM397.4 345.8h0.5v0.7h-0.5zM403.9 337.6h0.9v0.9h-0.9zM345.8 332.9h0.7v0.6h-0.7zM401.7 337.9h0.8v0.6h-0.8zM354.2 340.7h0.6v1.1h-0.6zM388.9 329.1h1.1v0.6h-1.1zM389.6 349.3h0.7v1.1h-0.7zM359.9 336.8h0.9v0.6h-0.9zM359.7 350.5h0.8v1.2h-0.8zM352.6 334.0h0.9v0.6h-0.9zM399.8 346.7h1.1v1.1h-1.1zM406.6 332.8h0.6v1.0h-0.6zM344.6 337.1h1.2v0.6h-1.2zM354.4 329.7h1.2v1.2h-1.2zM370.3 345.3h1.0v0.6h-1.0zM381.3 333.6h0.6v0.8h-0.6zM396.0 330.0h0.5v0.8h-0.5zM380.7 340.0h1.1v0.9h-1.1zM369.0 329.3h0.6v1.3h-0.6zM372.0 339.4h1.2v0.7h-1.2zM391.7 330.0h0.5v1.0h-0.5zM385.0 347.2h1.2v0.5h-1.2zM377.9 348.9h0.6v0.6h-0.6zM352.5 333.3h0.6v1.0h-0.6zM372.9 339.6h1.1v1.0h-1.1zM382.7 337.3h1.1v1.1h-1.1zM361.9 341.4h0.5v0.5h-0.5zM388.3 346.0h0.6v0.5h-0.6zM397.8 347.8h1.0v1.1h-1.0zM388.6 333.0h0.7v0.5h-0.7zM379.8 350.1h0.9v0.6h-0.9zM364.6 345.9h0.7v1.3h-0.7zM389.5 342.8h0.5v1.0h-0.5zM396.1 333.4h0.8v0.9h-0.8zM368.7 336.7h0.6v0.6h-0.6zM387.4 344.0h1.2v0.6h-1.2zM396.3 335.1h1.1v0.9h-1.1zM355.2 338.8h0.8v0.8h-0.8zM382.5 337.7h0.5v0.9h-0.5zM393.1 347.7h1.3v0.6h-1.3zM379.3 345.4h1.2v1.1h-1.2zM392.4 350.8h0.8v0.7h-0.8zM352.9 329.2h0.7v1.1h-0.7zM383.3 339.5h1.2v0.7h-1.2zM376.0 336.9h0.6v1.3h-0.6zM367.9 337.7h0.8v1.2h-0.8zM395.8 349.1h0.5v0.8h-0.5zM405.5 340.2h0.8v0.7h-0.8zM387.6 344.6h0.7v0.7h-0.7zM374.0 334.0h1.2v0.8h-1.2zM404.2 344.2h1.2v1.3h-1.2zM363.4 336.7h1.3v0.6h-1.3zM369.0 342.9h0.6v1.2h-0.6zM392.6 329.1h1.3v0.8h-1.3zM367.6 332.3h1.1v1.1h-1.1zM390.6 331.8h0.6v1.2h-0.6zM376.3 342.4h1.2v1.2h-1.2zM364.8 340.3h1.1v0.8h-1.1zM405.7 347.4h0.6v0.5h-0.6zM394.9 349.6h0.7v0.8h-0.7zM365.9 337.3h1.0v0.9h-1.0zM356.7 338.0h1.2v1.2h-1.2zM358.8 333.1h1.0v0.9h-1.0zM405.8 335.0h0.7v0.8h-0.7zM399.5 345.5h0.7v1.1h-0.7zM378.0 333.3h1.2v0.7h-1.2zM383.7 342.1h0.6v1.1h-0.6zM350.9 333.4h1.0v0.7h-1.0zM370.8 337.4h0.6v0.9h-0.6zM384.6 335.3h0.8v1.2h-0.8zM389.7 337.5h1.1v0.6h-1.1zM385.3 330.0h1.1v0.8h-1.1zM380.5 337.9h0.9v1.0h-0.9zM408.0 343.4h0.8v1.2h-0.8zM368.7 343.4h1.3v0.5h-1.3zM389.8 331.7h0.6v0.6h-0.6zM362.9 346.3h1.2v1.0h-1.2zM362.8 350.7h0.9v0.7h-0.9zM356.2 336.5h1.2v0.6h-1.2zM398.8 342.5h0.6v0.7h-0.6zM369.3 344.4h0.6v1.0h-0.6zM408.7 340.9h0.6v1.0h-0.6zM369.7 338.9h1.3v1.0h-1.3zM377.1 351.8h0.5v0.6h-0.5zM370.0 333.5h0.6v0.6h-0.6zM382.7 347.2h0.9v0.6h-0.9zM409.1 335.7h1.0v1.0h-1.0zM393.2 341.7h1.1v0.5h-1.1zM408.9 344.3h1.1v1.1h-1.1zM370.1 340.9h0.8v0.5h-0.8zM370.2 348.9h0.8v0.9h-0.8zM376.7 332.8h1.0v1.0h-1.0zM383.1 334.6h1.1v0.8h-1.1zM349.0 332.9h0.9v0.7h-0.9zM393.0 332.2h0.8v0.7h-0.8zM405.4 340.0h0.5v1.2h-0.5zM379.2 340.4h1.2v1.0h-1.2zM381.0 330.8h0.9v0.9h-0.9zM373.8 339.6h0.8v1.2h-0.8zM374.9 352.4h1.2v0.8h-1.2zM405.4 345.0h1.1v1.1h-1.1zM399.0 335.0h0.7v1.2h-0.7zM372.5 347.3h0.6v0.6h-0.6zM401.1 344.7h0.9v0.5h-0.9zM391.0 334.7h1.2v0.9h-1.2zM397.8 335.4h0.8v0.5h-0.8zM394.5 337.5h1.2v1.0h-1.2zM387.7 334.2h0.6v0.6h-0.6zM379.0 340.7h0.7v1.0h-0.7zM393.1 349.3h0.8v0.6h-0.8zM364.2 337.0h0.8v0.7h-0.8zM403.4 331.4h1.1v0.6h-1.1zM359.6 329.3h1.1v1.2h-1.1zM402.7 334.6h1.1v1.0h-1.1zM360.6 350.0h0.5v1.2h-0.5zM360.6 349.1h1.0v0.7h-1.0zM402.0 333.3h1.0v0.5h-1.0zM356.3 330.6h1.2v1.3h-1.2zM387.7 335.5h0.8v0.6h-0.8zM397.8 343.2h0.7v1.0h-0.7zM398.0 338.7h1.0v1.2h-1.0zM369.6 342.0h1.3v1.3h-1.3zM355.4 342.6h0.9v0.6h-0.9zM400.4 339.3h1.0v0.8h-1.0zM363.2 330.0h1.2v1.2h-1.2zM364.2 344.3h1.1v0.8h-1.1zM369.5 341.7h1.0v0.9h-1.0zM364.7 339.5h1.0v1.1h-1.0zM365.3 343.8h0.6v0.5h-0.6zM348.4 338.0h0.8v0.6h-0.8zM380.1 346.6h1.0v1.1h-1.0zM341.8 334.3h0.6v0.7h-0.6zM392.4 337.8h1.0v0.7h-1.0zM395.8 340.5h1.2v0.8h-1.2zM401.4 337.1h0.7v1.2h-0.7zM361.8 338.8h0.6v1.1h-0.6zM382.3 332.7h1.2v0.6h-1.2zM399.9 333.9h0.9v1.1h-0.9zM388.7 339.8h1.1v0.7h-1.1zM365.2 344.8h0.9v1.1h-0.9zM385.8 330.9h0.8v0.6h-0.8zM394.2 335.4h1.0v1.2h-1.0zM386.8 343.8h1.0v0.9h-1.0zM402.8 338.5h1.1v1.2h-1.1zM362.4 347.6h0.9v1.0h-0.9zM375.0 343.0h1.0v0.6h-1.0zM368.8 339.3h0.7v0.5h-0.7zM388.6 338.0h1.0v1.3h-1.0zM395.6 348.8h0.8v0.5h-0.8zM375.5 336.0h1.1v1.0h-1.1zM362.5 342.7h0.5v0.5h-0.5zM404.2 343.6h1.0v1.2h-1.0zM349.1 334.2h0.9v1.0h-0.9zM376.9 342.3h1.1v1.1h-1.1zM354.0 339.9h1.0v0.6h-1.0zM348.0 333.9h0.8v0.7h-0.8zM408.4 344.4h1.1v0.7h-1.1zM400.9 344.9h1.2v1.1h-1.2zM393.3 349.0h0.9v1.0h-0.9zM364.2 329.7h0.7v1.1h-0.7zM359.2 335.1h0.8v0.6h-0.8zM370.1 333.5h0.8v0.9h-0.8zM384.7 344.6h1.1v1.1h-1.1zM385.3 349.3h1.0v1.0h-1.0zM390.2 346.1h1.0v1.1h-1.0zM397.5 348.9h0.9v0.6h-0.9zM409.2 340.5h0.7v0.8h-0.7zM393.7 329.4h0.5v0.8h-0.5zM377.3 337.5h0.5v0.5h-0.5zM399.7 339.9h1.3v1.0h-1.3zM404.8 334.0h0.9v0.7h-0.9zM380.5 349.9h0.5v0.5h-0.5zM387.3 330.6h1.1v1.0h-1.1zM387.1 341.3h1.3v1.3h-1.3zM388.4 338.8h1.0v0.7h-1.0zM393.3 339.3h1.2v1.2h-1.2zM363.8 352.2h1.0v1.3h-1.0zM380.7 338.4h0.8v1.1h-0.8zM401.2 332.2h1.0v0.5h-1.0zM381.4 346.0h1.1v0.7h-1.1zM388.3 332.4h0.7v0.8h-0.7zM360.0 351.4h0.7v1.0h-0.7zM371.3 343.4h0.9v1.2h-0.9zM346.9 334.9h0.9v0.7h-0.9zM366.9 352.5h1.1v0.6h-1.1zM359.5 335.9h0.8v0.6h-0.8zM390.3 334.7h1.3v0.7h-1.3zM406.8 336.1h0.7v1.0h-0.7zM400.8 344.5h0.7v0.8h-0.7zM383.5 350.1h1.0v0.9h-1.0zM383.7 348.1h0.6v0.9h-0.6zM379.4 333.1h1.0v0.7h-1.0zM387.3 347.4h0.6v0.9h-0.6zM398.0 330.2h1.3v0.9h-1.3zM376.2 341.3h0.9v0.5h-0.9zM349.2 337.4h1.2v1.0h-1.2zM373.2 339.4h0.7v0.7h-0.7zM367.8 333.5h1.1v0.8h-1.1zM358.9 341.1h0.5v0.8h-0.5zM380.1 345.8h0.6v1.0h-0.6zM398.6 346.3h1.0v0.6h-1.0zM372.4 344.9h1.2v0.9h-1.2zM359.6 329.2h0.7v0.8h-0.7zM393.8 346.6h0.7v0.8h-0.7zM408.0 341.0h0.9v0.7h-0.9zM363.8 351.5h1.3v0.7h-1.3zM389.1 335.8h1.3v0.8h-1.3zM358.7 350.9h1.1v1.0h-1.1zM373.5 344.5h1.0v0.7h-1.0zM350.2 337.3h1.2v1.0h-1.2zM391.7 334.1h0.6v0.6h-0.6zM360.2 336.3h1.0v0.8h-1.0zM358.3 340.4h0.6v0.8h-0.6zM399.5 333.6h1.1v0.9h-1.1zM378.0 336.9h1.2v1.3h-1.2zM340.3 332.7h0.7v0.6h-0.7zM367.0 329.0h0.9v1.2h-0.9zM363.7 332.7h0.8v0.8h-0.8zM342.9 334.9h1.0v1.0h-1.0zM390.1 328.8h1.2v1.2h-1.2zM367.4 341.3h0.8v0.9h-0.8zM352.9 333.3h1.2v0.7h-1.2zM372.0 350.2h0.9v1.3h-0.9zM394.2 350.2h1.3v0.7h-1.3zM388.6 342.4h1.3v1.2h-1.3zM377.8 348.4h1.3v1.0h-1.3zM381.3 335.6h1.3v0.7h-1.3zM380.2 342.0h0.9v0.5h-0.9zM353.0 340.6h1.2v0.9h-1.2zM368.8 350.9h1.1v0.7h-1.1zM383.2 347.5h1.2v0.8h-1.2zM403.5 332.0h0.6v0.8h-0.6zM361.1 346.3h1.3v0.8h-1.3zM405.7 335.2h1.1v0.8h-1.1zM347.0 337.7h1.0v0.6h-1.0zM392.0 330.1h0.7v1.0h-0.7zM355.0 328.9h0.5v0.8h-0.5zM356.3 336.7h0.7v0.6h-0.7zM385.1 346.5h0.8v1.1h-0.8zM387.4 351.2h0.5v0.6h-0.5zM372.6 338.8h1.0v1.2h-1.0zM347.1 332.5h1.1v1.2h-1.1zM381.8 346.3h0.5v1.2h-0.5zM357.3 329.1h0.8v0.5h-0.8zM368.6 336.5h0.8v0.8h-0.8zM367.8 345.0h1.0v0.8h-1.0zM343.2 335.4h0.8v1.1h-0.8zM374.4 343.8h0.8v1.2h-0.8zM404.9 341.8h0.6v0.9h-0.6zM367.3 340.1h0.7v0.6h-0.7zM354.7 335.0h0.6v1.1h-0.6zM361.9 329.0h1.2v0.9h-1.2zM367.5 332.4h0.5v0.8h-0.5zM385.3 344.4h1.2v1.1h-1.2zM388.9 343.8h1.1v0.9h-1.1zM367.5 346.1h0.7v0.6h-0.7zM381.2 333.6h1.1v0.6h-1.1zM395.0 345.5h1.1v0.6h-1.1zM371.6 341.6h1.2v1.0h-1.2zM369.6 339.8h0.9v0.9h-0.9zM394.0 331.4h1.2v1.1h-1.2zM395.6 340.8h0.7v0.8h-0.7zM361.9 350.2h0.6v0.5h-0.6zM371.7 342.0h0.6v1.1h-0.6zM362.9 340.3h1.3v0.9h-1.3zM382.6 349.3h0.5v0.8h-0.5zM351.6 329.6h0.6v1.2h-0.6zM365.6 339.7h1.1v1.1h-1.1zM367.7 328.8h1.3v0.9h-1.3zM378.4 347.2h0.6v0.6h-0.6zM409.1 338.3h0.8v1.2h-0.8zM388.9 340.7h1.3v0.8h-1.3zM386.3 341.9h0.7v0.7h-0.7zM360.6 333.4h1.3v1.2h-1.3zM393.3 335.7h0.9v0.7h-0.9zM388.2 341.7h0.6v0.8h-0.6zM382.5 341.7h1.3v0.8h-1.3zM396.2 330.7h0.6v1.1h-0.6zM380.3 350.8h0.7v0.8h-0.7zM379.6 341.1h0.9v1.0h-0.9zM372.7 344.3h1.0v0.7h-1.0zM367.6 352.1h1.3v1.1h-1.3zM359.9 339.7h1.0v0.6h-1.0zM401.9 340.1h1.0v1.3h-1.0zM402.7 345.8h0.5v1.3h-0.5zM372.8 341.3h0.9v0.6h-0.9zM378.4 349.0h1.0v0.9h-1.0zM361.3 350.9h1.0v0.9h-1.0zM362.1 335.5h1.1v1.0h-1.1zM394.5 334.9h0.6v1.2h-0.6zM365.9 335.1h0.7v0.5h-0.7zM350.7 332.4h0.5v0.9h-0.5zM408.2 341.3h1.0v0.7h-1.0zM388.5 341.7h0.9v1.0h-0.9zM400.7 336.6h0.7v0.6h-0.7zM392.4 346.7h0.5v1.0h-0.5zM361.2 347.1h0.6v1.2h-0.6zM368.8 336.3h0.9v0.6h-0.9zM353.7 330.0h0.8v0.8h-0.8zM392.0 338.9h0.6v0.6h-0.6zM398.2 347.9h1.1v1.0h-1.1zM402.3 344.0h0.7v1.0h-0.7zM361.6 332.7h1.0v0.8h-1.0zM365.9 328.2h0.9v0.7h-0.9zM338.5 334.3h0.8v0.9h-0.8zM360.7 346.3h0.7v1.2h-0.7zM376.1 337.3h0.7v0.9h-0.7zM363.3 340.8h0.7v1.0h-0.7zM381.8 345.7h1.2v0.9h-1.2zM376.0 338.5h0.8v1.1h-0.8zM382.1 339.1h0.9v0.7h-0.9zM397.5 336.5h1.1v1.0h-1.1zM360.4 340.9h0.8v0.6h-0.8zM356.9 332.1h0.6v0.8h-0.6zM396.3 344.7h0.5v0.9h-0.5zM365.2 340.7h0.7v1.0h-0.7zM354.4 339.2h0.6v0.6h-0.6zM365.3 339.6h1.1v1.1h-1.1zM399.8 332.5h0.5v0.8h-0.5zM372.6 340.0h1.3v0.8h-1.3zM381.9 346.4h1.3v1.1h-1.3zM360.2 336.8h0.6v1.3h-0.6zM406.7 338.5h1.3v0.7h-1.3zM367.4 341.5h0.8v0.9h-0.8zM380.1 347.7h1.0v1.0h-1.0zM359.7 340.5h0.8v0.7h-0.8zM365.4 348.3h0.9v0.7h-0.9zM375.3 348.8h0.7v0.7h-0.7zM387.8 329.2h1.0v0.7h-1.0zM376.2 336.3h1.2v1.2h-1.2zM383.1 334.1h1.1v0.7h-1.1zM363.0 344.8h1.1v0.9h-1.1zM386.9 336.5h1.1v0.8h-1.1zM365.0 328.9h1.2v1.0h-1.2zM400.8 341.6h0.9v1.2h-0.9zM388.2 343.9h1.2v0.7h-1.2zM408.5 338.1h1.0v0.8h-1.0zM409.3 337.3h0.9v1.3h-0.9zM357.2 343.0h1.2v1.2h-1.2zM375.5 350.0h0.7v0.7h-0.7zM350.7 338.1h1.0v1.1h-1.0zM407.0 344.0h0.7v0.9h-0.7zM393.8 335.8h0.8v0.6h-0.8zM347.0 332.3h1.0v0.7h-1.0zM379.2 351.0h1.1v0.6h-1.1zM394.2 331.0h1.2v0.6h-1.2zM395.0 342.2h1.3v1.2h-1.3zM387.0 328.9h0.9v0.9h-0.9zM406.9 332.3h0.7v0.9h-0.7zM370.7 343.5h0.6v1.0h-0.6zM371.0 335.6h0.6v1.3h-0.6zM358.1 333.4h0.7v0.7h-0.7zM360.4 347.9h1.3v0.9h-1.3zM359.7 328.6h1.1v1.0h-1.1zM358.1 341.0h1.1v0.5h-1.1zM382.4 341.9h0.7v0.6h-0.7zM388.1 344.3h0.6v0.9h-0.6zM346.9 334.2h0.5v0.6h-0.5zM357.8 333.7h1.1v1.0h-1.1zM394.2 345.3h1.3v0.9h-1.3zM347.1 346.0h0.9v1.1h-0.9zM346.0 348.3h0.8v0.7h-0.8zM344.0 347.2h1.1v1.0h-1.1zM338.3 347.3h0.5v1.1h-0.5zM342.3 352.5h1.0v1.0h-1.0zM351.1 349.7h1.1v1.1h-1.1zM339.0 350.8h1.2v0.7h-1.2zM344.2 352.8h1.2v0.7h-1.2zM346.3 348.9h1.0v0.7h-1.0zM344.5 352.4h0.7v1.2h-0.7zM353.4 346.4h0.6v0.9h-0.6zM342.5 349.9h1.1v0.6h-1.1zM353.9 348.4h0.6v1.0h-0.6zM346.3 346.8h1.2v0.5h-1.2zM342.9 350.2h0.6v0.5h-0.6zM350.9 345.2h0.7v0.8h-0.7zM345.3 348.5h0.6v1.1h-0.6zM338.2 350.4h1.0v0.7h-1.0zM342.2 353.4h1.1v0.7h-1.1zM340.0 351.8h0.6v0.6h-0.6zM349.6 349.8h1.1v0.6h-1.1zM349.8 347.6h0.8v0.6h-0.8zM342.1 350.0h0.7v1.1h-0.7zM349.3 352.2h0.9v1.1h-0.9zM347.4 345.3h0.7v0.8h-0.7zM347.3 352.3h1.2v0.8h-1.2zM351.7 346.8h1.0v1.0h-1.0zM349.7 351.3h1.1v0.7h-1.1zM352.2 351.5h1.2v0.7h-1.2zM344.5 347.2h1.2v0.9h-1.2zM348.7 352.7h0.8v0.9h-0.8zM346.2 346.9h0.9v1.0h-0.9zM339.4 349.8h0.8v0.7h-0.8zM349.2 352.3h1.0v1.2h-1.0zM341.0 348.1h0.7v0.6h-0.7zM349.0 345.1h1.2v0.9h-1.2zM345.5 352.5h0.8v1.2h-0.8zM349.8 350.6h1.2v0.9h-1.2zM344.3 350.8h0.6v1.1h-0.6zM339.6 353.4h1.3v0.7h-1.3zM343.5 350.8h1.3v0.9h-1.3zM345.6 348.9h0.6v1.2h-0.6zM348.7 351.4h1.2v0.6h-1.2zM343.0 350.9h0.6v0.9h-0.6zM346.8 346.8h0.6v1.0h-0.6zM339.7 351.6h1.2v0.6h-1.2zM348.9 349.9h1.0v0.7h-1.0zM342.0 353.7h1.1v0.6h-1.1zM341.5 347.7h0.8v0.6h-0.8zM353.1 351.0h0.7v0.8h-0.7zM340.9 346.0h0.7v1.2h-0.7zM346.9 344.5h1.2v0.8h-1.2zM338.5 351.4h1.1v1.1h-1.1zM340.1 353.0h0.6v1.0h-0.6zM344.5 350.4h0.9v1.0h-0.9zM347.5 353.3h1.1v0.8h-1.1zM350.7 350.7h0.7v1.1h-0.7zM347.5 345.4h1.0v0.9h-1.0zM346.6 352.1h1.1v1.2h-1.1zM340.6 352.9h1.2v0.5h-1.2zM345.2 352.6h0.7v1.2h-0.7zM338.8 352.2h1.3v1.0h-1.3zM346.5 349.4h0.8v0.8h-0.8zM350.2 348.0h1.0v0.5h-1.0zM342.6 351.4h0.9v1.1h-0.9zM341.3 352.3h0.9v1.0h-0.9zM346.7 351.2h0.6v0.8h-0.6zM346.8 345.8h1.1v0.7h-1.1zM346.0 349.4h0.6v1.1h-0.6zM350.9 350.3h1.1v1.2h-1.1zM349.8 351.8h0.7v1.3h-0.7zM349.8 347.7h1.1v0.7h-1.1zM351.8 350.8h0.6v1.2h-0.6zM350.0 348.4h1.1v0.9h-1.1zM353.2 344.0h0.6v1.0h-0.6zM346.4 348.9h0.8v1.0h-0.8zM351.1 347.9h0.9v0.9h-0.9zM352.2 347.1h0.5v1.1h-0.5zM352.8 353.6h0.8v0.6h-0.8zM339.2 346.3h0.9v0.8h-0.9zM345.2 351.0h0.9v0.8h-0.9zM340.9 352.4h0.5v0.9h-0.5zM346.6 353.2h0.8v1.0h-0.8zM346.6 351.9h0.9v1.3h-0.9zM347.1 345.1h1.3v0.6h-1.3zM338.7 347.4h1.0v1.0h-1.0zM339.4 350.1h1.1v1.1h-1.1zM348.1 347.3h0.6v0.6h-0.6zM340.2 348.6h1.0v0.9h-1.0zM349.4 347.3h0.6v1.0h-0.6zM352.0 347.4h0.6v1.2h-0.6zM339.9 350.5h0.8v0.8h-0.8zM352.8 345.7h1.2v1.2h-1.2zM351.2 344.6h0.8v0.6h-0.8zM342.8 348.4h0.8v1.2h-0.8zM354.0 350.9h0.9v1.2h-0.9zM312.2 347.7h0.9v0.9h-0.9zM309.1 347.2h0.5v1.3h-0.5zM308.2 339.4h0.7v0.6h-0.7zM312.7 347.1h1.1v0.6h-1.1zM313.1 345.3h1.1v1.1h-1.1zM308.4 339.7h1.2v0.9h-1.2zM307.3 349.4h0.5v0.8h-0.5zM306.3 345.0h1.3v0.9h-1.3zM310.2 346.3h0.9v0.8h-0.9zM311.8 349.0h0.9v1.1h-0.9zM306.2 349.1h0.9v0.7h-0.9zM308.6 349.9h1.1v1.0h-1.1zM306.3 345.3h0.8v0.8h-0.8zM309.3 342.2h0.6v1.2h-0.6zM312.1 339.0h0.7v1.2h-0.7zM308.0 349.7h0.8v0.9h-0.8zM309.9 346.2h0.9v0.9h-0.9zM311.1 341.1h1.0v0.9h-1.0zM311.4 347.2h1.2v0.7h-1.2zM312.3 348.3h0.5v0.7h-0.5zM312.8 344.1h0.9v1.1h-0.9zM312.4 342.2h1.3v0.7h-1.3zM312.0 348.4h1.2v0.9h-1.2zM312.5 342.7h0.6v1.2h-0.6zM308.8 345.9h1.2v1.0h-1.2zM313.7 347.0h0.5v1.0h-0.5zM306.0 346.2h0.7v0.8h-0.7zM308.6 339.1h0.7v0.8h-0.7zM313.2 347.3h1.0v1.1h-1.0zM306.0 339.5h0.6v0.7h-0.6zM308.4 340.5h1.0v1.1h-1.0zM312.1 339.5h0.7v0.5h-0.7zM311.0 349.5h1.2v0.8h-1.2zM308.4 339.1h0.8v0.8h-0.8zM306.5 339.9h0.5v1.0h-0.5zM310.8 347.7h0.6v0.7h-0.6zM307.2 344.8h1.2v0.9h-1.2zM312.6 347.6h0.9v0.9h-0.9zM308.9 349.5h0.7v0.5h-0.7zM309.6 346.3h1.1v1.0h-1.1zM313.4 341.0h0.7v0.7h-0.7zM309.8 349.2h1.2v0.8h-1.2zM313.2 344.3h1.1v0.5h-1.1zM307.8 340.3h0.7v1.0h-0.7zM309.5 343.7h1.2v0.7h-1.2zM307.9 340.1h0.6v1.3h-0.6zM313.9 347.9h1.3v0.9h-1.3zM313.1 349.1h1.3v0.6h-1.3zM311.4 343.0h1.3v0.6h-1.3zM312.9 348.7h0.9v1.0h-0.9zM309.8 341.7h1.3v1.3h-1.3zM313.1 340.8h0.8v0.9h-0.8zM310.0 345.8h1.1v0.8h-1.1zM310.9 344.5h1.3v0.5h-1.3zM312.9 341.4h0.7v1.3h-0.7zM307.7 345.0h1.2v0.6h-1.2zM308.3 341.5h0.5v1.2h-0.5zM308.8 344.0h0.7v1.2h-0.7zM310.9 348.9h1.3v0.9h-1.3zM313.1 349.3h1.2v1.0h-1.2zM309.4 338.9h0.8v1.3h-0.8zM310.3 347.5h0.9v1.2h-0.9zM309.5 340.0h1.1v0.7h-1.1zM313.2 345.2h1.0v1.3h-1.0zM310.0 348.4h0.5v0.7h-0.5zM307.0 345.0h0.9v0.6h-0.9zM306.9 340.7h1.0v1.0h-1.0zM307.6 349.6h1.0v0.6h-1.0zM308.3 349.8h0.8v0.6h-0.8zM307.7 342.5h0.6v1.1h-0.6zM307.1 342.2h0.7v0.5h-0.7zM311.5 348.8h0.7v0.7h-0.7zM308.8 348.0h0.8v0.6h-0.8zM320.7 321.3h1.0v0.9h-1.0zM330.2 325.2h1.0v0.9h-1.0zM339.4 315.1h0.9v1.0h-0.9zM333.4 320.2h1.3v1.3h-1.3zM340.6 322.4h0.8v0.6h-0.8zM328.6 319.0h0.9v0.9h-0.9zM332.7 314.0h0.7v1.0h-0.7zM326.2 322.0h0.9v1.0h-0.9zM327.3 326.1h1.2v0.9h-1.2zM329.6 318.7h0.6v0.7h-0.6zM332.9 307.6h0.6v1.0h-0.6zM332.3 326.2h1.2v0.6h-1.2zM332.9 320.8h0.9v0.8h-0.9zM323.7 325.3h0.6v0.5h-0.6zM336.1 315.9h0.5v1.1h-0.5zM322.1 322.2h1.0v0.6h-1.0zM337.7 320.8h0.5v0.6h-0.5zM335.1 314.5h1.3v0.6h-1.3zM335.6 315.2h1.1v0.6h-1.1zM330.8 318.9h0.7v1.0h-0.7zM334.6 316.0h0.6v0.8h-0.6zM336.8 320.0h1.0v0.6h-1.0zM327.4 324.1h0.9v0.5h-0.9zM334.8 318.1h0.6v1.2h-0.6zM320.3 319.4h0.8v1.3h-0.8zM327.2 321.0h0.5v1.3h-0.5zM321.2 312.4h0.7v1.0h-0.7zM327.3 319.3h1.3v0.5h-1.3zM322.7 324.6h0.8v1.1h-0.8zM328.7 326.3h1.3v1.0h-1.3zM321.9 318.3h0.6v0.8h-0.6zM322.5 315.4h1.2v0.8h-1.2zM324.7 328.1h1.1v0.9h-1.1zM320.8 284.7h1.1v0.5h-1.1zM311.5 287.9h0.7v0.5h-0.7zM315.8 285.8h1.3v0.6h-1.3zM320.6 285.8h0.7v0.6h-0.7zM311.4 288.4h0.5v0.5h-0.5zM321.6 286.3h0.7v1.0h-0.7zM316.9 287.4h1.3v0.5h-1.3zM322.6 284.7h1.0v0.5h-1.0zM312.1 284.3h0.6v0.8h-0.6zM311.6 284.9h1.0v0.8h-1.0zM318.1 285.7h0.6v1.2h-0.6zM316.2 286.5h1.1v1.1h-1.1zM320.7 286.8h0.9v0.6h-0.9zM313.7 283.7h0.7v0.9h-0.7zM312.9 288.1h0.8v0.6h-0.8zM318.7 286.5h0.6v0.6h-0.6zM316.4 283.8h0.6v1.0h-0.6zM314.8 286.4h0.8v1.2h-0.8zM312.8 284.3h0.5v0.9h-0.5zM313.6 284.1h0.6v0.7h-0.6zM320.7 284.1h1.0v1.2h-1.0zM318.8 288.4h0.9v0.9h-0.9zM322.5 287.1h0.9v1.2h-0.9zM307.9 323.0h1.1v0.6h-1.1zM310.4 323.1h0.8v1.1h-0.8zM306.2 321.0h0.5v1.3h-0.5zM306.3 326.0h1.0v0.6h-1.0zM308.0 326.6h0.8v0.7h-0.8zM308.5 322.9h1.3v1.1h-1.3zM307.5 321.5h1.1v1.1h-1.1zM309.0 322.6h0.9v1.1h-0.9zM305.7 322.6h0.9v0.6h-0.9zM305.6 320.6h0.9v1.1h-0.9zM379.8 318.7h0.9v1.0h-0.9zM380.5 324.4h0.8v0.9h-0.8zM380.3 321.0h1.1v0.7h-1.1zM381.0 318.8h1.0v0.7h-1.0zM382.2 319.1h0.8v1.2h-0.8zM380.4 320.7h1.2v1.3h-1.2zM378.7 323.0h1.2v1.1h-1.2zM381.5 320.4h0.9v1.1h-0.9zM380.4 320.7h0.6v1.1h-0.6zM384.2 320.6h1.1v1.1h-1.1zM380.7 325.4h0.9v0.7h-0.9zM394.2 311.1h1.3v1.0h-1.3zM391.6 311.6h0.9v1.1h-0.9zM398.7 309.9h0.8v1.1h-0.8zM386.0 307.4h0.8v1.0h-0.8zM388.8 311.1h0.5v1.2h-0.5zM399.3 306.3h0.7v1.2h-0.7zM394.0 314.5h1.0v1.1h-1.0zM390.2 307.1h1.1v0.8h-1.1zM390.5 311.0h0.6v0.9h-0.6zM318.1 334.8h0.9v0.6h-0.9zM316.5 331.4h0.6v1.0h-0.6zM316.7 331.4h1.3v0.8h-1.3zM319.5 331.4h0.9v1.1h-0.9zM320.8 335.9h1.1v0.8h-1.1zM321.3 332.7h0.6v1.3h-0.6zM325.2 296.0h1.3v1.2h-1.3zM341.0 295.8h0.6v0.8h-0.6zM326.3 305.9h0.6v1.1h-0.6zM326.7 302.2h1.0v1.3h-1.0zM324.7 303.0h1.2v0.6h-1.2zM323.6 303.6h1.1v0.9h-1.1zM336.2 296.4h1.0v0.7h-1.0zM339.0 302.8h1.0v0.5h-1.0zM328.8 296.7h0.8v0.5h-0.8zM339.7 297.1h1.1v0.9h-1.1zM338.0 298.5h1.0v1.1h-1.0zM329.1 307.1h0.8v0.8h-0.8zM333.4 292.2h0.8v1.1h-0.8zM324.3 306.0h1.2v0.9h-1.2zM326.3 297.9h1.2v0.5h-1.2zM335.1 306.1h0.9v0.6h-0.9zM337.6 302.9h1.2v0.6h-1.2zM340.7 299.9h0.8v1.0h-0.8zM329.3 306.1h1.2v1.1h-1.2zM329.8 289.4h0.6v1.2h-0.6zM338.7 290.2h0.9v0.9h-0.9zM334.2 303.9h0.5v1.0h-0.5zM325.2 299.9h1.3v0.9h-1.3zM415.5 333.8h0.8v0.9h-0.8zM414.2 332.8h0.7v1.3h-0.7zM414.0 334.8h0.5v1.2h-0.5zM415.4 336.2h1.2v1.3h-1.2zM412.4 336.3h0.9v1.1h-0.9zM413.4 336.5h1.2v0.7h-1.2zM412.5 336.4h1.0v1.0h-1.0zM412.9 333.1h0.7v0.8h-0.7zM415.0 336.0h0.7v1.0h-0.7zM413.4 335.0h0.7v0.6h-0.7zM414.2 333.1h0.9v1.2h-0.9zM415.3 336.2h1.2v0.7h-1.2zM412.8 336.7h0.6v1.1h-0.6zM500.8 304.9h0.8v0.8h-0.8zM501.4 297.5h1.0v1.2h-1.0zM499.5 302.1h0.6v0.5h-0.6zM499.1 294.9h1.2v0.6h-1.2zM503.3 303.8h1.1v0.7h-1.1zM490.0 299.0h0.8v1.1h-0.8zM508.9 298.8h1.2v0.6h-1.2zM499.8 298.7h1.1v1.1h-1.1zM505.2 300.0h0.8v1.1h-0.8zM497.4 300.8h1.2v1.2h-1.2zM499.8 302.4h1.1v1.2h-1.1zM500.3 303.7h1.1v1.2h-1.1zM497.9 305.2h1.0v0.5h-1.0zM491.9 298.2h1.2v1.2h-1.2zM492.8 294.5h1.3v0.7h-1.3zM497.0 303.4h0.9v1.3h-0.9zM490.6 295.4h0.8v0.7h-0.8zM498.9 299.5h1.3v1.2h-1.3zM501.2 305.4h1.1v0.9h-1.1zM497.0 300.9h0.8v0.8h-0.8zM494.7 299.6h1.3v0.9h-1.3zM507.9 299.4h0.7v0.9h-0.7zM494.4 300.6h1.0v0.7h-1.0zM494.3 302.5h1.2v1.3h-1.2zM502.0 302.1h1.0v0.6h-1.0zM505.7 290.7h1.0v0.6h-1.0zM491.9 290.9h1.0v1.3h-1.0zM501.2 294.6h0.5v1.0h-0.5zM503.8 305.6h1.0v1.1h-1.0zM506.6 297.3h0.9v0.7h-0.9zM502.2 302.1h0.6v0.9h-0.6zM495.8 296.8h1.0v1.2h-1.0zM504.4 303.1h0.8v1.1h-0.8zM500.7 300.1h1.2v0.9h-1.2zM503.1 297.4h0.6v1.0h-0.6zM491.9 296.3h1.3v1.1h-1.3zM487.4 296.5h1.2v0.7h-1.2zM493.7 306.1h1.2v0.7h-1.2zM490.3 291.8h0.9v0.9h-0.9zM503.5 297.1h1.2v0.9h-1.2zM500.3 295.0h1.2v1.2h-1.2zM499.1 296.2h1.1v0.9h-1.1zM489.8 295.4h0.8v0.9h-0.8zM497.3 293.9h1.2v1.2h-1.2zM503.9 295.7h1.3v0.9h-1.3zM506.8 304.9h1.3v1.2h-1.3zM506.6 298.9h1.3v0.5h-1.3zM506.0 297.0h0.6v1.1h-0.6zM505.6 301.5h0.9v1.0h-0.9zM497.1 298.2h1.3v0.5h-1.3zM496.4 302.7h1.2v0.7h-1.2zM508.4 294.6h1.2v0.8h-1.2zM505.2 303.5h1.3v1.1h-1.3zM493.1 295.4h1.2v0.5h-1.2zM498.9 304.5h0.7v1.1h-0.7zM504.5 301.2h0.8v1.0h-0.8zM494.7 293.4h1.0v0.8h-1.0zM503.7 303.2h0.9v0.9h-0.9zM504.0 292.5h1.1v0.5h-1.1zM509.7 300.7h0.8v0.7h-0.8zM500.5 296.2h0.9v0.6h-0.9zM496.4 302.6h1.0v1.2h-1.0zM501.7 305.4h1.1v0.7h-1.1zM501.5 304.7h1.1v0.8h-1.1zM497.2 301.0h1.0v0.9h-1.0zM491.0 298.0h1.0v0.6h-1.0zM494.5 301.4h0.6v0.6h-0.6zM494.0 300.3h1.1v1.3h-1.1zM492.7 306.6h0.6v0.8h-0.6zM488.9 299.5h1.3v1.2h-1.3zM492.2 291.3h0.8v0.9h-0.8zM505.8 294.7h0.9v0.6h-0.9zM487.3 296.4h1.3v0.9h-1.3zM504.1 290.7h0.8v1.0h-0.8zM498.2 294.8h1.0v1.2h-1.0zM498.2 300.9h0.9v1.3h-0.9zM505.2 304.6h0.6v1.0h-0.6zM505.9 303.0h0.7v0.6h-0.7zM505.9 298.9h1.3v0.9h-1.3zM490.4 298.1h1.1v1.2h-1.1zM491.7 295.7h1.2v0.6h-1.2zM504.5 295.4h0.9v1.2h-0.9zM489.7 295.0h0.6v1.0h-0.6zM504.0 301.0h1.2v0.5h-1.2zM507.6 299.6h1.2v0.5h-1.2zM493.7 295.6h1.0v0.9h-1.0zM489.9 295.1h1.1v0.8h-1.1zM505.8 305.5h0.7v1.2h-0.7zM502.2 297.3h1.2v0.8h-1.2zM489.4 297.6h1.1v1.2h-1.1zM491.5 299.1h0.8v1.1h-0.8zM503.8 296.4h0.7v0.9h-0.7zM490.1 294.7h0.9v0.9h-0.9zM507.0 293.2h1.3v0.6h-1.3zM502.9 304.9h0.6v0.5h-0.6zM501.8 304.1h1.1v1.1h-1.1zM488.1 293.9h1.2v0.7h-1.2zM506.0 290.5h1.2v0.5h-1.2zM496.4 300.3h1.1v1.2h-1.1zM506.8 295.3h1.1v0.6h-1.1zM489.0 295.6h1.2v1.3h-1.2zM494.9 293.1h0.6v0.7h-0.6zM508.0 299.8h1.1v1.0h-1.1zM503.6 292.0h0.7v1.0h-0.7zM494.3 292.7h1.3v1.0h-1.3zM495.4 304.3h0.5v0.6h-0.5zM500.4 304.5h0.9v0.6h-0.9zM508.3 297.5h0.9v1.1h-0.9zM504.5 305.0h0.6v1.1h-0.6zM504.2 298.8h1.0v0.9h-1.0zM487.6 298.1h1.2v0.5h-1.2zM488.9 294.8h0.9v0.8h-0.9zM503.6 299.2h1.0v1.0h-1.0zM492.0 295.2h0.7v1.0h-0.7zM496.8 302.8h0.7v0.7h-0.7zM506.0 292.1h0.7v0.5h-0.7zM497.7 295.2h1.0v0.6h-1.0zM496.7 303.0h0.9v1.0h-0.9zM492.0 295.1h0.9v0.6h-0.9zM491.4 294.3h1.2v0.7h-1.2zM502.5 299.2h0.8v1.1h-0.8zM505.5 301.1h1.2v0.6h-1.2zM495.3 303.9h0.8v1.1h-0.8zM505.5 289.7h1.0v1.0h-1.0zM505.8 296.8h1.1v0.6h-1.1zM495.6 300.4h1.3v1.2h-1.3zM501.5 300.7h0.6v0.7h-0.6zM497.4 299.8h0.6v1.0h-0.6zM501.0 304.4h0.8v0.7h-0.8zM495.5 305.4h0.8v0.8h-0.8zM495.7 294.2h1.0v1.2h-1.0zM502.8 300.8h0.6v1.1h-0.6zM497.7 293.8h1.1v0.9h-1.1zM495.8 299.6h0.9v1.1h-0.9zM491.1 297.1h0.7v0.9h-0.7zM495.6 295.2h0.8v0.9h-0.8zM489.6 291.9h1.1v0.6h-1.1zM503.0 301.3h0.8v0.7h-0.8zM496.6 301.4h1.0v1.3h-1.0zM498.6 304.5h0.9v1.1h-0.9zM508.4 293.3h0.7v1.3h-0.7zM508.1 304.1h0.7v0.8h-0.7zM498.4 299.3h1.2v0.8h-1.2zM489.5 299.5h1.3v0.7h-1.3zM504.5 298.7h1.1v1.3h-1.1zM504.9 305.1h0.6v0.7h-0.6zM499.7 303.8h1.3v1.2h-1.3zM508.0 294.3h0.8v0.5h-0.8zM492.1 299.7h0.9v0.8h-0.9zM493.9 295.6h0.8v1.3h-0.8zM502.4 297.0h0.9v0.6h-0.9zM505.2 297.7h1.2v1.0h-1.2zM505.8 300.6h1.0v1.2h-1.0zM506.5 295.8h1.0v1.1h-1.0zM504.4 296.2h1.3v0.9h-1.3zM504.4 304.7h0.6v0.8h-0.6zM504.9 300.0h1.1v0.8h-1.1zM505.3 301.5h1.2v0.9h-1.2zM494.3 297.4h1.2v0.9h-1.2zM507.6 296.5h1.1v0.8h-1.1zM502.4 304.8h0.7v1.1h-0.7zM492.9 295.4h0.6v0.8h-0.6zM490.6 297.6h0.8v0.9h-0.8zM503.8 294.1h1.1v0.7h-1.1zM506.5 296.8h0.9v0.9h-0.9zM492.8 304.5h0.9v0.9h-0.9zM500.9 300.7h1.0v1.3h-1.0zM491.0 291.9h1.2v0.7h-1.2zM503.7 300.0h0.5v1.2h-0.5zM493.5 296.3h0.8v1.1h-0.8zM505.9 297.8h0.8v1.1h-0.8zM507.6 304.9h0.9v0.9h-0.9zM504.7 296.0h0.8v0.7h-0.8zM492.9 296.5h0.6v0.8h-0.6zM492.3 294.3h1.1v0.8h-1.1zM492.5 306.2h0.8v0.7h-0.8zM488.9 293.1h1.1v0.7h-1.1zM510.1 302.6h0.6v0.9h-0.6zM494.1 302.6h0.6v0.6h-0.6zM494.7 304.0h1.0v0.6h-1.0zM508.9 301.5h1.1v0.5h-1.1zM506.3 299.0h1.3v0.8h-1.3zM498.5 301.0h0.5v0.5h-0.5zM490.9 296.0h0.8v1.2h-0.8zM491.6 291.8h0.5v0.8h-0.5zM503.2 294.5h1.0v0.7h-1.0zM505.1 299.8h0.6v1.2h-0.6zM500.3 302.5h1.0v1.2h-1.0zM492.7 293.3h0.9v0.5h-0.9zM506.0 293.1h1.1v0.7h-1.1zM494.2 300.1h0.7v1.2h-0.7zM488.6 296.9h0.9v0.6h-0.9zM504.2 295.3h0.9v1.0h-0.9zM493.6 306.2h0.7v1.2h-0.7zM495.5 294.6h0.6v1.1h-0.6zM492.7 295.9h1.0v1.2h-1.0zM498.5 302.7h1.2v0.5h-1.2zM500.1 303.8h1.2v0.7h-1.2zM506.3 305.1h0.8v1.2h-0.8zM509.8 301.5h0.9v1.0h-0.9zM502.8 300.7h0.6v1.0h-0.6zM505.0 296.3h0.6v1.0h-0.6zM499.0 297.9h0.7v1.0h-0.7zM508.3 301.7h1.1v0.7h-1.1zM503.3 299.8h0.6v0.6h-0.6zM501.4 301.7h0.6v0.6h-0.6zM502.8 302.8h0.5v0.9h-0.5zM498.2 299.8h1.2v0.8h-1.2zM501.4 304.5h1.0v0.9h-1.0zM506.5 292.5h0.9v1.0h-0.9zM490.2 294.2h0.9v0.9h-0.9zM489.6 297.5h0.6v1.2h-0.6zM505.6 293.8h0.7v0.9h-0.7zM489.9 299.7h0.8v0.8h-0.8zM503.2 296.1h1.1v0.6h-1.1zM506.2 294.7h0.7v0.8h-0.7zM492.8 305.6h0.5v0.7h-0.5zM506.7 289.2h0.9v0.6h-0.9zM495.2 300.1h0.9v0.7h-0.9zM508.4 298.6h0.9v1.1h-0.9zM504.7 306.1h0.9v0.8h-0.9zM496.5 297.2h0.8v0.8h-0.8zM505.4 293.5h1.1v0.6h-1.1zM501.2 295.8h1.1v0.6h-1.1zM493.7 304.9h0.6v1.2h-0.6zM530.0 233.2h0.8v0.9h-0.8zM539.1 226.2h0.8v0.6h-0.8zM539.8 230.9h0.6v0.7h-0.6zM538.8 238.1h1.1v0.8h-1.1zM535.8 241.9h0.9v0.6h-0.9zM542.3 230.7h1.0v1.0h-1.0zM544.4 237.2h1.3v1.0h-1.3zM545.9 240.8h1.1v0.8h-1.1zM549.2 231.5h0.8v1.2h-0.8zM536.4 240.2h0.9v0.8h-0.9zM543.2 232.2h0.9v0.7h-0.9zM547.5 235.7h1.0v1.2h-1.0zM547.0 237.7h0.9v1.3h-0.9zM534.3 236.1h0.8v1.2h-0.8zM545.0 228.0h0.6v0.6h-0.6zM541.7 231.3h1.3v0.7h-1.3zM534.7 234.1h0.6v0.7h-0.6zM530.6 237.1h0.7v0.7h-0.7zM538.4 232.6h1.2v1.3h-1.2zM540.6 230.1h0.6v1.0h-0.6zM539.4 241.0h0.7v1.0h-0.7zM543.7 240.8h1.1v0.8h-1.1zM549.4 234.8h0.6v0.7h-0.6zM542.2 232.5h0.6v0.8h-0.6zM539.4 229.7h0.6v0.7h-0.6zM533.7 231.3h1.0v0.9h-1.0zM540.2 228.7h0.5v0.9h-0.5zM536.1 240.5h1.3v1.2h-1.3zM540.1 241.0h1.0v1.3h-1.0zM537.5 230.0h1.2v1.0h-1.2zM534.5 233.7h0.8v1.0h-0.8zM546.0 235.4h1.3v0.9h-1.3zM534.9 235.3h0.7v1.2h-0.7zM535.5 227.1h0.7v0.5h-0.7zM540.4 230.1h0.8v0.9h-0.8zM545.5 227.0h1.2v1.2h-1.2zM537.7 234.1h0.9v1.1h-0.9zM536.5 245.8h0.5v1.1h-0.5zM542.2 233.4h1.1v1.1h-1.1zM535.8 231.4h1.2v1.1h-1.2zM530.6 229.9h0.6v1.0h-0.6zM532.4 231.9h1.3v1.0h-1.3zM538.0 234.7h1.2v1.2h-1.2zM544.7 230.9h0.9v0.6h-0.9zM543.6 234.9h1.0v0.5h-1.0zM536.8 240.5h1.2v0.9h-1.2zM535.7 232.7h1.0v1.3h-1.0zM549.3 233.4h1.2v1.3h-1.2zM540.1 228.9h0.7v0.7h-0.7zM541.0 243.0h0.7v0.8h-0.7zM539.4 233.6h0.6v0.8h-0.6zM538.0 227.8h0.6v1.1h-0.6zM536.5 233.5h1.0v1.0h-1.0zM541.6 234.0h0.7v1.1h-0.7zM543.3 229.6h1.2v0.9h-1.2zM529.0 233.2h0.6v0.8h-0.6zM540.8 237.4h0.9v0.9h-0.9zM534.9 239.3h0.8v1.1h-0.8zM534.8 229.5h0.6v1.0h-0.6zM546.9 237.8h1.0v0.7h-1.0zM532.1 234.9h0.8v1.0h-0.8zM528.8 233.0h1.2v0.8h-1.2zM532.6 231.1h0.8v0.6h-0.8zM531.1 237.1h1.0v0.6h-1.0zM536.9 227.7h0.7v1.2h-0.7zM535.5 232.6h1.2v0.7h-1.2zM533.4 229.4h1.2v1.1h-1.2zM543.7 228.6h0.9v1.0h-0.9zM539.1 230.9h0.7v0.5h-0.7zM534.4 235.2h0.9v0.8h-0.9zM541.3 242.9h1.2v0.6h-1.2zM545.2 238.4h1.2v0.5h-1.2zM548.8 235.7h1.2v0.7h-1.2zM544.0 235.7h1.0v0.6h-1.0zM541.4 236.4h0.9v0.8h-0.9zM531.6 236.3h0.9v0.9h-0.9zM545.1 240.2h0.9v0.7h-0.9zM536.4 244.4h0.5v0.8h-0.5zM537.9 229.5h1.2v0.8h-1.2zM537.5 242.0h1.1v0.8h-1.1zM542.0 240.8h1.2v0.7h-1.2zM543.6 228.1h0.9v1.2h-0.9zM538.5 243.3h0.6v0.6h-0.6zM529.8 235.0h1.0v0.9h-1.0zM533.5 241.6h0.9v1.0h-0.9zM528.9 235.3h1.0v1.3h-1.0zM536.6 236.6h0.8v0.7h-0.8zM539.9 242.0h0.6v1.0h-0.6zM543.9 236.2h0.6v0.8h-0.6zM538.3 237.9h0.7v0.6h-0.7zM539.1 228.8h1.3v0.7h-1.3zM537.7 238.2h1.0v1.2h-1.0zM537.2 226.6h0.5v0.8h-0.5zM544.8 229.3h0.8v0.9h-0.8zM539.8 228.6h0.6v0.6h-0.6zM531.4 236.8h1.2v0.5h-1.2zM536.5 243.6h1.3v1.1h-1.3zM538.1 241.3h1.2v1.2h-1.2zM536.8 234.7h0.6v0.8h-0.6zM538.2 230.6h1.2v0.8h-1.2zM539.7 228.8h1.0v1.2h-1.0zM531.8 232.7h0.6v0.6h-0.6zM539.2 227.9h0.6v1.3h-0.6zM545.4 236.7h1.2v1.1h-1.2zM536.8 238.2h0.6v1.2h-0.6zM535.0 230.7h0.6v0.6h-0.6zM543.2 242.5h1.0v0.7h-1.0zM543.9 239.8h1.2v0.7h-1.2zM549.1 231.4h0.8v0.6h-0.8zM539.9 239.6h0.7v1.0h-0.7zM546.6 234.6h1.0v0.6h-1.0zM548.9 231.6h0.5v1.1h-0.5zM535.0 237.2h1.2v0.5h-1.2zM549.1 232.9h1.1v1.1h-1.1zM542.1 227.2h0.6v0.6h-0.6zM544.1 241.9h1.2v1.2h-1.2zM532.6 236.9h1.2v1.3h-1.2zM537.3 230.1h0.6v1.0h-0.6zM543.8 240.3h0.5v0.7h-0.5zM531.6 231.8h1.0v1.2h-1.0zM545.9 227.6h0.7v0.9h-0.7zM546.9 238.3h1.3v0.8h-1.3zM532.2 236.6h1.3v0.9h-1.3zM534.9 246.0h0.9v1.1h-0.9zM535.6 227.5h0.8v1.0h-0.8zM539.9 242.6h0.6v0.5h-0.6zM542.8 235.3h0.9v1.2h-0.9zM535.7 233.9h0.9v1.2h-0.9zM544.2 234.7h0.6v1.0h-0.6zM538.1 242.4h0.6v0.9h-0.6zM538.6 226.9h0.9v1.1h-0.9zM544.6 237.1h0.5v0.6h-0.5zM549.5 233.2h0.9v0.9h-0.9zM544.1 234.0h1.1v0.7h-1.1zM549.1 235.6h0.8v0.8h-0.8zM534.3 228.8h1.1v0.6h-1.1zM532.6 230.4h0.8v0.8h-0.8zM533.4 227.4h1.3v0.6h-1.3zM540.5 239.3h1.3v0.6h-1.3zM543.2 227.6h1.2v1.0h-1.2zM542.5 238.2h1.1v0.8h-1.1zM538.2 242.9h1.0v1.2h-1.0zM543.7 238.8h0.6v0.9h-0.6zM547.4 237.9h0.8v0.8h-0.8zM549.9 233.6h0.5v0.8h-0.5zM546.9 235.0h0.8v0.8h-0.8zM549.4 234.6h0.7v1.0h-0.7zM538.3 231.9h1.3v0.6h-1.3zM544.3 239.2h1.2v0.7h-1.2zM541.5 242.9h1.1v0.6h-1.1zM542.2 229.0h1.1v0.7h-1.1zM549.1 235.7h0.5v0.8h-0.5zM534.5 235.9h0.8v0.5h-0.8zM539.1 237.1h1.1v1.1h-1.1zM543.6 233.5h0.9v0.8h-0.9zM538.9 238.8h1.2v1.1h-1.2zM536.2 240.6h0.9v0.6h-0.9zM536.8 236.0h1.1v0.6h-1.1zM533.2 238.1h1.1v0.7h-1.1zM549.4 236.5h0.8v0.7h-0.8zM543.0 238.3h1.1v0.5h-1.1zM532.7 231.4h0.9v1.0h-0.9zM543.2 239.0h1.2v1.0h-1.2zM546.8 229.2h1.0v0.8h-1.0zM535.3 231.9h1.2v1.1h-1.2zM541.0 240.6h0.5v0.6h-0.5zM541.8 228.2h0.5v1.1h-0.5zM540.7 243.5h0.8v0.8h-0.8zM533.9 242.7h0.8v0.9h-0.8zM539.8 236.6h0.7v0.8h-0.7zM531.4 230.6h1.3v0.5h-1.3zM544.7 235.2h1.2v1.2h-1.2zM529.4 233.7h0.7v0.8h-0.7zM546.6 238.2h0.8v1.3h-0.8zM532.8 231.0h0.9v0.6h-0.9zM533.3 234.9h0.9v0.6h-0.9zM537.1 227.6h0.8v0.5h-0.8zM545.7 238.7h0.8v1.3h-0.8zM545.9 227.2h0.9v0.8h-0.9zM534.9 239.0h1.1v1.2h-1.1zM528.6 233.6h1.0v0.6h-1.0zM535.1 234.4h0.9v1.1h-0.9zM545.4 236.1h0.5v0.5h-0.5zM535.4 241.8h0.8v0.5h-0.8zM545.0 240.0h0.9v1.0h-0.9zM530.8 235.7h1.2v0.9h-1.2zM534.3 243.0h1.1v0.8h-1.1zM534.0 236.1h0.6v1.1h-0.6zM536.7 236.2h1.2v0.6h-1.2zM549.6 234.2h0.7v1.2h-0.7zM544.1 241.7h1.0v0.7h-1.0zM539.2 234.1h1.2v0.8h-1.2zM546.4 232.7h0.9v1.1h-0.9zM535.6 246.9h0.8v0.5h-0.8zM541.9 241.1h1.3v0.6h-1.3zM529.0 232.4h1.0v1.2h-1.0zM532.7 233.6h0.6v0.9h-0.6zM541.3 228.9h1.2v1.0h-1.2zM547.2 236.0h1.2v0.6h-1.2zM531.9 238.9h0.7v1.3h-0.7zM531.4 231.5h1.0v0.9h-1.0zM539.5 243.1h0.8v1.2h-0.8zM538.1 241.4h0.6v0.9h-0.6zM533.5 233.0h1.2v1.2h-1.2zM531.2 229.8h0.9v0.8h-0.9zM541.7 242.3h1.1v0.5h-1.1zM538.2 229.0h0.9v0.9h-0.9zM547.6 236.8h0.6v0.8h-0.6zM546.5 238.1h0.5v1.1h-0.5zM546.7 233.6h1.3v1.0h-1.3zM533.0 234.9h0.8v0.8h-0.8zM530.2 238.7h0.9v1.1h-0.9zM534.2 241.8h0.9v0.7h-0.9zM540.3 228.6h1.1v0.6h-1.1zM530.9 233.3h1.1v0.8h-1.1zM533.6 229.7h0.6v0.6h-0.6zM545.6 235.6h0.7v1.2h-0.7zM540.0 239.8h1.2v0.8h-1.2zM548.6 232.5h0.6v0.9h-0.6zM531.7 232.0h0.8v0.5h-0.8zM530.3 238.1h1.3v1.2h-1.3zM544.6 227.1h1.3v1.1h-1.3zM535.7 227.1h0.7v1.3h-0.7zM543.3 236.3h0.5v1.0h-0.5zM535.3 237.4h0.6v0.7h-0.6zM531.2 235.8h1.0v0.7h-1.0zM530.8 238.8h0.8v1.1h-0.8zM535.4 231.9h0.9v0.9h-0.9zM540.1 240.4h0.6v1.3h-0.6zM539.8 226.9h1.2v1.2h-1.2zM538.4 237.5h1.0v1.0h-1.0zM543.5 226.3h0.9v0.8h-0.9zM536.4 228.4h1.3v0.5h-1.3zM529.6 234.5h0.6v1.0h-0.6zM544.0 235.4h0.7v0.6h-0.7zM542.2 230.7h1.2v0.9h-1.2zM544.6 226.9h1.3v0.5h-1.3zM538.7 237.7h0.8v0.9h-0.8zM533.9 237.3h0.8v0.9h-0.8zM546.9 235.6h1.2v1.1h-1.2zM539.7 232.9h1.2v1.1h-1.2zM537.6 238.7h1.1v1.0h-1.1zM538.3 237.7h1.0v1.0h-1.0zM534.3 229.5h1.2v1.1h-1.2zM543.3 235.5h0.9v0.8h-0.9zM531.9 239.5h1.2v0.7h-1.2zM537.8 236.9h0.9v1.1h-0.9zM533.7 234.3h0.6v1.0h-0.6zM543.6 237.8h0.8v1.2h-0.8zM538.2 231.9h0.9v1.1h-0.9zM533.6 229.9h0.8v0.5h-0.8zM546.1 228.5h0.7v0.9h-0.7zM534.4 236.2h0.8v1.0h-0.8zM541.9 238.1h0.7v0.8h-0.7zM531.4 237.7h0.7v1.1h-0.7zM540.6 230.9h1.0v1.3h-1.0zM533.0 236.4h0.9v0.8h-0.9zM530.2 238.1h1.0v0.8h-1.0zM544.8 240.8h0.6v0.9h-0.6zM531.7 229.4h0.8v0.6h-0.8zM531.5 237.9h1.1v0.8h-1.1zM539.3 240.8h0.9v0.5h-0.9zM537.1 226.6h0.6v0.7h-0.6zM543.7 230.3h0.7v1.1h-0.7zM541.6 238.7h0.6v0.6h-0.6zM532.8 215.6h1.1v0.5h-1.1zM536.4 222.1h0.8v1.3h-0.8zM535.5 213.1h1.3v0.7h-1.3zM535.8 220.5h1.2v0.7h-1.2zM537.9 213.1h1.2v0.7h-1.2zM532.4 221.1h1.3v0.8h-1.3zM538.3 209.8h0.8v0.7h-0.8zM535.2 211.3h1.0v1.0h-1.0zM535.5 221.0h1.2v0.8h-1.2zM535.7 211.4h0.8v0.8h-0.8zM532.7 222.1h0.9v0.9h-0.9zM535.0 208.9h1.0v0.7h-1.0zM535.6 208.5h0.9v1.1h-0.9zM533.7 224.1h1.2v1.3h-1.2zM533.4 215.3h1.1v1.1h-1.1zM537.1 212.1h0.6v1.0h-0.6zM538.3 208.7h1.2v0.6h-1.2zM533.0 225.7h1.2v0.8h-1.2zM535.7 215.5h0.7v1.0h-0.7zM536.7 221.3h1.1v0.9h-1.1zM534.2 217.2h1.0v0.5h-1.0zM536.8 221.3h0.7v0.8h-0.7zM531.7 223.6h1.0v1.3h-1.0zM532.6 208.4h0.8v0.5h-0.8zM533.4 208.9h1.3v1.1h-1.3zM539.7 209.9h1.0v0.6h-1.0zM535.2 222.3h1.1v0.7h-1.1zM533.8 218.3h0.7v1.2h-0.7zM540.4 210.0h0.8v0.5h-0.8zM534.2 212.3h0.8v1.0h-0.8zM534.2 217.7h0.7v0.5h-0.7zM538.8 209.9h0.7v0.6h-0.7zM534.0 213.2h1.3v0.9h-1.3zM537.2 210.3h0.8v1.1h-0.8zM535.9 220.6h0.6v0.6h-0.6zM537.4 214.3h1.3v0.6h-1.3zM536.0 218.7h0.7v0.6h-0.7zM536.4 213.1h1.3v1.2h-1.3zM533.3 222.1h1.2v1.1h-1.2zM537.5 211.9h0.9v0.9h-0.9zM538.4 216.4h0.6v1.2h-0.6zM532.4 223.7h1.1v1.1h-1.1zM533.1 224.7h0.9v1.1h-0.9zM534.1 214.7h1.0v1.2h-1.0zM533.3 212.2h0.7v0.7h-0.7zM536.1 215.9h1.0v0.9h-1.0zM538.5 209.9h0.9v1.2h-0.9zM537.5 213.2h1.0v1.1h-1.0zM540.5 208.2h0.7v1.2h-0.7zM534.8 211.8h0.8v0.9h-0.8zM532.6 206.5h1.3v0.6h-1.3zM531.7 220.3h0.9v1.1h-0.9zM532.7 209.6h1.3v0.6h-1.3zM533.5 223.5h1.0v0.5h-1.0zM532.4 219.3h1.3v1.0h-1.3zM533.1 214.4h0.7v0.9h-0.7zM539.3 210.1h1.2v0.5h-1.2zM541.1 210.9h0.8v1.0h-0.8zM533.8 210.1h1.2v1.1h-1.2zM533.7 214.9h0.7v0.6h-0.7zM531.8 220.2h1.2v1.1h-1.2zM534.3 225.2h1.1v0.9h-1.1zM540.2 209.2h0.7v1.2h-0.7zM533.8 216.4h0.6v1.1h-0.6zM540.9 211.7h1.2v1.0h-1.2zM539.3 211.8h0.8v0.8h-0.8zM536.4 215.9h0.5v0.8h-0.5zM533.7 209.3h1.3v0.5h-1.3zM540.2 210.3h0.6v0.8h-0.6zM535.7 223.0h1.0v1.0h-1.0zM535.8 208.7h1.0v1.1h-1.0zM533.2 217.6h1.3v1.1h-1.3zM535.3 210.8h1.3v1.2h-1.3zM538.4 213.0h1.1v0.7h-1.1zM537.3 209.6h0.9v1.1h-0.9zM535.7 216.2h1.0v0.9h-1.0zM535.0 209.9h0.9v0.9h-0.9zM533.4 216.0h0.6v0.5h-0.6zM540.7 209.2h0.9v0.9h-0.9zM531.6 219.6h0.9v0.8h-0.9zM539.1 209.5h0.7v1.2h-0.7zM536.8 221.7h0.5v1.0h-0.5zM538.1 212.3h1.1v1.2h-1.1zM533.2 207.3h0.8v1.3h-0.8zM533.9 220.8h1.0v0.8h-1.0zM534.9 216.2h1.1v0.8h-1.1zM535.6 214.4h0.6v0.8h-0.6zM533.9 217.3h0.7v1.1h-0.7zM536.6 224.1h1.2v0.8h-1.2zM538.0 210.7h1.0v1.1h-1.0zM536.1 211.7h1.1v1.1h-1.1zM531.6 220.3h1.1v1.1h-1.1zM536.9 220.3h1.1v0.7h-1.1zM553.9 201.8h0.8v0.7h-0.8zM557.1 201.6h0.8v0.6h-0.8zM556.7 200.6h0.6v1.3h-0.6zM557.4 199.4h1.1v0.7h-1.1zM560.1 203.4h0.6v1.1h-0.6zM554.7 202.7h1.1v1.1h-1.1zM554.0 199.9h0.7v1.0h-0.7zM556.9 199.7h1.1v0.6h-1.1zM557.7 202.3h1.0v1.2h-1.0zM558.2 202.9h0.6v0.9h-0.6zM558.7 202.0h0.7v0.9h-0.7zM520.4 235.6h1.0v0.9h-1.0zM527.4 242.6h1.1v1.2h-1.1zM522.6 238.2h1.0v0.5h-1.0zM526.1 242.5h1.2v1.0h-1.2zM519.9 233.9h0.5v0.5h-0.5zM521.9 241.8h1.1v0.9h-1.1zM522.6 235.9h1.2v1.1h-1.2zM526.2 237.8h0.7v0.6h-0.7zM518.3 241.3h1.2v1.0h-1.2zM522.1 242.1h0.8v1.0h-0.8zM522.2 238.3h1.2v0.8h-1.2zM522.8 234.3h0.8v0.7h-0.8zM522.9 239.0h0.6v1.1h-0.6zM527.4 233.8h0.7v1.2h-0.7zM522.2 236.2h1.2v1.2h-1.2zM527.4 241.8h1.0v0.8h-1.0zM527.1 235.4h0.5v1.0h-0.5zM522.0 234.4h0.6v1.0h-0.6zM513.4 240.6h1.2v1.1h-1.2zM516.1 240.8h0.6v1.3h-0.6zM513.1 241.1h0.7v0.7h-0.7zM512.2 242.4h0.6v0.6h-0.6zM514.7 242.8h0.7v1.1h-0.7zM524.0 209.8h0.8v1.0h-0.8zM525.3 209.1h0.9v0.9h-0.9zM531.7 199.9h0.6v1.2h-0.6zM529.7 202.1h1.2v0.8h-1.2zM530.4 200.7h0.8v0.8h-0.8zM560.1 340.1h0.5v0.9h-0.5zM563.7 337.9h1.0v1.2h-1.0zM564.1 342.2h0.7v1.0h-0.7zM560.3 345.7h1.1v0.8h-1.1zM554.9 343.5h0.7v0.6h-0.7zM556.3 339.5h0.7v1.0h-0.7zM558.5 337.0h1.2v1.1h-1.2zM560.7 341.8h0.7v1.0h-0.7zM556.5 339.5h0.9v0.6h-0.9zM560.9 347.5h1.2v0.8h-1.2zM565.1 339.3h0.8v0.6h-0.8zM563.1 341.5h1.0v1.1h-1.0zM555.7 337.8h1.2v0.6h-1.2zM557.4 347.6h0.8v0.9h-0.8zM564.2 341.1h0.8v1.1h-0.8zM563.9 337.9h0.8v1.2h-0.8zM559.7 344.4h0.9v0.8h-0.9zM561.3 341.9h1.3v0.8h-1.3zM560.3 342.4h1.3v1.0h-1.3zM552.7 338.3h1.2v0.9h-1.2zM562.7 339.4h0.9v1.2h-0.9zM553.5 337.3h1.2v0.7h-1.2zM561.2 340.9h1.2v1.0h-1.2zM558.6 345.0h0.6v0.9h-0.6zM559.1 337.6h1.2v1.3h-1.2zM553.0 338.0h1.1v1.1h-1.1zM555.1 337.8h0.5v1.2h-0.5zM559.7 337.9h0.9v1.1h-0.9zM557.2 335.8h0.7v1.0h-0.7zM555.2 336.0h0.9v0.9h-0.9zM562.0 339.9h1.0v1.3h-1.0zM562.3 342.8h0.6v0.6h-0.6zM556.4 344.4h0.9v0.9h-0.9zM558.5 344.6h0.9v1.2h-0.9zM557.9 345.4h0.7v1.0h-0.7zM557.5 344.0h1.3v0.9h-1.3zM561.0 341.2h1.3v0.6h-1.3zM562.5 344.7h1.1v0.9h-1.1zM561.6 339.5h1.0v0.7h-1.0zM556.0 343.3h0.6v0.6h-0.6zM559.4 342.0h1.0v0.8h-1.0zM561.8 347.7h0.8v1.1h-0.8zM563.5 339.7h0.6v1.3h-0.6zM558.0 344.3h0.8v1.0h-0.8zM554.4 338.0h1.1v0.9h-1.1zM562.4 346.0h1.0v1.0h-1.0zM554.6 338.8h1.2v0.9h-1.2zM561.6 343.9h0.9v0.8h-0.9zM563.8 338.0h0.6v1.1h-0.6zM562.6 345.5h0.8v1.2h-0.8zM562.4 342.8h1.3v1.2h-1.3zM561.2 339.7h1.1v0.6h-1.1zM554.7 341.0h1.2v1.2h-1.2zM564.8 341.7h1.3v1.0h-1.3zM558.9 336.9h0.9v0.6h-0.9zM559.3 348.2h0.9v0.7h-0.9zM553.5 340.7h0.6v0.5h-0.6zM559.3 345.9h0.6v1.1h-0.6zM555.0 343.0h0.6v0.9h-0.6zM553.9 337.9h1.0v0.7h-1.0zM554.5 337.2h0.7v1.2h-0.7zM563.2 343.7h0.6v1.3h-0.6zM558.5 339.5h1.3v0.5h-1.3zM555.6 343.7h0.7v0.9h-0.7zM555.1 339.6h1.2v1.0h-1.2zM555.5 342.4h0.5v0.7h-0.5zM562.7 343.1h0.6v0.7h-0.6zM556.3 342.1h1.1v0.5h-1.1zM563.2 340.2h0.9v0.8h-0.9zM559.7 341.5h0.8v0.8h-0.8zM556.3 336.6h1.2v0.5h-1.2zM556.5 347.0h1.1v0.9h-1.1zM564.1 338.9h0.8v0.7h-0.8zM555.7 340.6h0.8v0.8h-0.8zM557.2 343.7h1.2v1.3h-1.2zM560.2 347.8h0.9v0.9h-0.9zM564.0 339.7h0.9v0.9h-0.9zM560.9 341.5h1.1v1.0h-1.1zM563.0 345.6h0.8v0.6h-0.8zM557.4 347.2h1.1v1.2h-1.1zM561.3 342.4h1.0v1.0h-1.0zM560.5 347.5h0.8v0.8h-0.8zM560.4 348.0h1.3v0.7h-1.3zM561.8 347.5h1.1v0.6h-1.1zM559.2 346.6h1.1v1.0h-1.1zM561.2 344.4h1.2v1.2h-1.2zM559.9 342.0h1.0v0.8h-1.0zM554.3 342.6h0.6v0.7h-0.6zM553.9 336.8h1.3v0.6h-1.3zM563.3 342.2h1.1v0.8h-1.1zM564.6 338.4h0.7v0.7h-0.7zM555.5 345.2h0.8v0.6h-0.8zM563.8 339.6h1.3v0.5h-1.3zM564.0 343.2h0.9v0.7h-0.9zM562.8 344.4h0.5v0.6h-0.5zM557.4 339.6h0.8v0.8h-0.8zM558.2 338.0h0.8v1.0h-0.8zM558.7 338.8h0.6v0.5h-0.6zM561.8 344.9h1.0v1.1h-1.0zM558.7 347.2h0.8v0.6h-0.8zM558.1 339.8h0.6v0.6h-0.6zM564.9 340.8h1.2v0.5h-1.2zM553.2 336.0h0.9v1.2h-0.9zM560.2 340.3h0.9v0.7h-0.9zM558.7 342.6h0.7v0.7h-0.7zM558.4 344.4h0.9v0.8h-0.9zM561.0 343.8h1.2v0.7h-1.2zM559.2 336.8h1.2v0.7h-1.2zM561.7 339.7h0.8v1.2h-0.8zM560.2 339.4h0.7v1.2h-0.7zM558.8 347.3h0.7v0.9h-0.7zM565.1 338.9h1.1v0.6h-1.1zM561.9 340.2h0.7v0.8h-0.7zM559.4 339.1h1.0v0.6h-1.0zM562.9 346.6h1.0v0.6h-1.0zM562.3 338.6h0.9v0.9h-0.9zM554.8 343.6h0.9v0.9h-0.9zM548.2 348.8h0.5v1.3h-0.5zM530.8 349.0h0.8v0.5h-0.8zM552.2 348.4h0.7v0.5h-0.7zM541.1 346.7h1.0v0.8h-1.0zM534.5 347.2h1.1v0.9h-1.1zM553.5 347.4h0.5v0.6h-0.5zM549.7 347.3h1.1v0.9h-1.1zM552.1 347.2h1.3v0.8h-1.3zM545.2 348.8h1.3v1.1h-1.3zM546.3 348.6h0.5v1.3h-0.5zM553.7 346.0h1.3v1.0h-1.3zM546.8 348.1h1.2v0.6h-1.2zM548.1 348.1h1.1v0.8h-1.1zM553.0 346.5h0.9v0.7h-0.9zM547.6 348.5h1.2v1.1h-1.2zM546.4 349.2h0.9v0.9h-0.9zM537.0 347.2h1.0v1.2h-1.0zM536.4 347.2h1.0v1.0h-1.0zM542.0 348.3h1.2v0.5h-1.2zM546.9 348.9h0.5v0.8h-0.5zM536.0 347.9h0.9v1.2h-0.9zM533.6 347.7h1.0v0.6h-1.0zM529.6 348.6h0.8v0.5h-0.8zM535.3 347.3h0.8v0.6h-0.8zM545.8 347.9h1.1v1.2h-1.1zM549.3 347.2h1.1v1.2h-1.1zM549.5 348.7h1.2v0.7h-1.2zM543.2 348.4h0.7v0.9h-0.7zM534.8 347.8h1.0v1.2h-1.0zM532.9 348.8h1.3v0.6h-1.3zM529.9 348.2h1.0v1.0h-1.0zM423.2 172.7h0.6v0.7h-0.6zM421.0 172.4h1.1v1.3h-1.1zM419.5 173.5h0.5v0.7h-0.5zM424.1 172.2h1.3v0.5h-1.3zM420.6 176.5h0.6v1.3h-0.6zM425.0 180.7h1.2v0.5h-1.2zM420.5 173.3h1.1v0.7h-1.1zM420.0 173.1h1.2v0.6h-1.2zM421.8 174.9h0.6v0.7h-0.6zM424.7 172.7h0.6v1.2h-0.6zM424.7 174.3h0.8v0.5h-0.8zM419.6 178.3h1.0v1.1h-1.0zM427.1 176.9h0.6v0.6h-0.6zM424.0 180.7h0.7v1.1h-0.7zM427.6 178.7h1.1v1.1h-1.1zM423.1 179.8h0.7v0.9h-0.7zM424.2 183.5h0.5v0.7h-0.5zM423.6 175.8h1.1v1.1h-1.1zM423.5 183.3h0.9v1.0h-0.9zM422.3 182.8h0.6v1.1h-0.6zM428.1 174.5h1.1v1.0h-1.1zM426.2 174.1h0.8v0.7h-0.8zM423.4 180.5h0.5v0.9h-0.5zM426.2 178.5h0.8v0.7h-0.8zM421.4 179.7h1.1v1.1h-1.1zM420.4 178.6h0.7v0.6h-0.7zM419.9 173.0h0.9v1.1h-0.9zM422.5 177.5h0.6v0.7h-0.6zM421.7 182.2h0.6v1.1h-0.6zM420.7 179.1h0.7v1.0h-0.7zM423.7 171.6h0.9v1.0h-0.9zM421.8 173.2h0.7v1.2h-0.7zM424.2 177.8h1.3v1.2h-1.3zM422.5 179.1h0.7v1.0h-0.7zM423.2 178.2h0.9v1.1h-0.9zM420.6 178.7h1.1v1.1h-1.1zM423.0 178.7h0.7v0.5h-0.7zM422.3 173.6h0.7v0.8h-0.7zM423.0 179.2h0.9v0.7h-0.9zM426.4 177.1h0.8v0.6h-0.8zM423.9 181.3h1.0v0.8h-1.0zM424.3 181.9h0.8v0.8h-0.8zM424.3 177.1h0.8v1.0h-0.8zM420.4 174.6h1.2v0.5h-1.2zM428.1 178.0h1.1v0.5h-1.1zM420.9 173.1h1.3v1.1h-1.3zM420.7 178.7h1.1v1.1h-1.1zM425.3 175.1h1.1v0.9h-1.1zM429.3 176.1h0.5v0.7h-0.5zM425.2 175.2h0.8v0.8h-0.8zM424.8 172.5h0.7v0.8h-0.7zM426.5 177.6h0.6v0.5h-0.6zM425.1 177.7h0.6v0.5h-0.6zM425.0 175.7h0.5v1.2h-0.5zM419.3 173.2h1.3v1.1h-1.3zM421.8 172.2h1.0v1.1h-1.0zM421.2 174.3h0.8v0.9h-0.8zM421.8 182.9h1.2v0.5h-1.2zM428.2 174.5h1.2v0.6h-1.2zM422.2 181.0h0.7v0.8h-0.7zM428.5 176.4h0.9v1.1h-0.9zM426.8 179.6h1.0v0.9h-1.0zM427.3 173.2h1.2v0.6h-1.2zM421.9 175.8h0.8v0.7h-0.8zM420.5 173.0h1.1v1.0h-1.1zM422.3 181.2h0.5v0.9h-0.5zM421.1 180.5h0.7v1.0h-0.7zM420.3 180.8h1.3v1.1h-1.3zM427.3 177.9h0.6v1.1h-0.6zM423.8 173.3h0.7v1.0h-0.7zM423.0 173.6h0.5v0.9h-0.5zM423.6 171.8h1.2v0.7h-1.2zM427.2 178.2h1.3v0.6h-1.3zM419.7 176.3h0.9v1.2h-0.9zM420.8 181.3h0.7v1.3h-0.7zM421.9 175.4h0.7v1.0h-0.7zM420.7 176.4h1.1v0.9h-1.1zM427.0 174.5h0.6v1.2h-0.6zM426.7 177.5h0.9v1.1h-0.9zM419.2 175.2h0.8v0.7h-0.8zM422.2 174.8h0.8v1.0h-0.8zM422.3 176.7h1.2v0.8h-1.2zM435.5 178.0h1.2v0.5h-1.2zM427.2 177.5h0.9v0.7h-0.9zM417.6 180.0h0.8v1.3h-0.8zM429.2 178.9h0.9v1.2h-0.9zM418.6 180.0h1.1v1.1h-1.1zM421.3 177.4h0.8v1.2h-0.8zM423.2 177.5h1.2v1.2h-1.2zM519.6 162.8h0.5v0.9h-0.5zM515.7 162.8h0.9v1.0h-0.9zM515.6 168.2h1.2v1.2h-1.2zM514.3 161.2h1.2v0.7h-1.2zM511.7 163.7h0.8v1.1h-0.8zM513.8 158.4h1.2v1.1h-1.2zM512.5 158.7h1.0v1.1h-1.0zM516.1 160.9h0.8v0.6h-0.8zM517.1 161.6h1.0v0.7h-1.0zM517.6 160.8h1.0v1.1h-1.0zM513.3 163.3h1.0v0.8h-1.0zM516.0 161.3h0.8v1.0h-0.8zM512.5 162.8h0.9v0.5h-0.9zM519.6 158.9h1.1v1.3h-1.1zM515.8 160.1h0.9v1.2h-0.9zM514.9 166.4h1.3v1.0h-1.3zM520.5 160.6h1.1v0.6h-1.1zM513.6 163.7h1.1v1.3h-1.1zM515.8 161.9h1.3v0.8h-1.3zM512.4 166.4h0.9v0.9h-0.9zM520.8 162.7h0.6v1.0h-0.6zM515.4 159.5h0.8v1.1h-0.8zM514.8 160.5h0.6v0.6h-0.6zM511.1 164.8h0.9v0.9h-0.9zM518.1 162.8h1.0v0.7h-1.0zM519.2 164.8h1.2v0.6h-1.2zM517.2 162.3h1.3v0.8h-1.3zM517.6 163.2h1.1v0.8h-1.1zM514.4 161.3h1.2v1.1h-1.2zM513.1 165.8h1.2v0.9h-1.2zM514.7 165.4h0.5v0.7h-0.5zM512.4 166.1h0.6v0.5h-0.6zM516.7 157.8h0.9v1.3h-0.9zM513.7 162.6h1.2v0.7h-1.2zM515.3 169.1h0.6v1.0h-0.6zM521.2 162.2h0.7v0.6h-0.7zM515.0 169.6h1.0v1.1h-1.0zM512.5 166.4h1.0v0.6h-1.0zM519.3 163.7h0.9v1.1h-0.9zM521.2 161.2h1.2v0.9h-1.2zM518.0 162.7h0.6v0.5h-0.6zM515.3 161.0h0.5v0.7h-0.5zM515.5 164.7h1.0v1.1h-1.0zM513.6 158.8h1.2v0.5h-1.2zM512.7 163.8h0.8v0.7h-0.8zM513.1 165.9h0.5v1.2h-0.5zM518.7 158.9h0.9v1.1h-0.9zM510.9 164.9h0.9v0.6h-0.9zM511.4 168.4h1.3v1.0h-1.3zM515.9 159.8h1.0v0.7h-1.0zM517.3 158.7h1.2v1.2h-1.2zM513.0 164.5h0.8v1.1h-0.8zM515.0 163.6h0.6v0.5h-0.6zM518.4 158.9h1.1v1.2h-1.1zM520.1 160.1h1.1v0.8h-1.1zM516.5 165.4h0.8v1.2h-0.8zM515.9 167.8h1.0v0.9h-1.0zM511.7 166.9h1.1v0.8h-1.1zM514.6 166.4h0.7v1.3h-0.7zM518.8 161.8h0.7v0.7h-0.7zM515.1 161.9h0.9v0.8h-0.9zM520.1 160.9h0.7v1.1h-0.7zM518.3 164.3h1.2v0.7h-1.2zM513.6 165.2h1.1v0.8h-1.1zM520.8 163.8h1.2v0.9h-1.2zM519.3 165.1h1.0v0.6h-1.0zM516.1 162.5h0.9v0.8h-0.9zM513.7 170.6h0.8v0.5h-0.8zM518.5 161.9h1.3v1.2h-1.3zM513.3 159.3h1.0v0.7h-1.0zM516.3 159.0h0.9v1.0h-0.9zM517.4 164.5h1.0v1.3h-1.0zM521.4 160.4h0.6v1.1h-0.6zM515.6 165.9h0.7v1.3h-0.7zM519.3 164.8h0.7v1.0h-0.7zM513.2 159.4h1.1v0.6h-1.1zM515.9 159.4h1.1v0.7h-1.1zM512.1 165.6h1.1v0.7h-1.1zM512.1 161.7h1.0v1.0h-1.0zM513.9 160.0h0.7v0.8h-0.7zM512.1 163.7h0.8v1.0h-0.8zM516.1 163.8h0.9v0.7h-0.9zM514.6 161.7h1.1v0.6h-1.1zM515.4 163.7h0.5v1.1h-0.5zM513.6 164.4h1.2v0.9h-1.2zM518.3 165.1h1.2v0.8h-1.2zM520.6 164.0h0.8v0.6h-0.8zM515.3 162.4h0.5v0.8h-0.5zM521.1 163.5h1.0v1.2h-1.0zM512.9 163.4h1.1v1.0h-1.1zM517.4 160.4h1.0v0.9h-1.0zM521.3 162.4h1.0v0.6h-1.0zM521.2 175.6h1.1v1.2h-1.1zM514.6 170.4h1.1v0.8h-1.1zM511.5 171.3h0.8v0.6h-0.8zM509.7 173.3h0.7v0.9h-0.7zM518.6 170.1h0.7v0.5h-0.7zM512.0 167.3h1.0v1.2h-1.0zM517.7 173.2h1.2v0.6h-1.2zM515.8 175.1h0.7v0.9h-0.7zM510.8 173.9h1.1v0.9h-1.1zM524.0 171.2h0.9v0.9h-0.9zM509.9 171.6h0.7v1.0h-0.7zM517.4 174.4h0.7v0.5h-0.7zM508.5 177.7h1.1v0.6h-1.1zM524.7 167.2h1.2v1.1h-1.2zM512.0 178.1h0.8v1.2h-0.8zM516.9 177.0h0.8v0.7h-0.8zM515.8 173.7h0.6v0.9h-0.6zM515.3 173.0h1.3v0.7h-1.3zM517.7 169.3h0.6v1.0h-0.6zM517.5 173.9h1.0v0.8h-1.0zM517.9 176.0h1.2v0.8h-1.2zM525.9 175.0h1.2v0.5h-1.2zM518.4 173.3h0.5v1.3h-0.5zM512.8 168.2h0.5v1.1h-0.5zM511.5 173.2h1.0v1.2h-1.0zM515.7 170.9h1.1v1.2h-1.1zM415.8 246.7h1.2v0.9h-1.2zM420.9 242.6h1.3v1.2h-1.3zM438.7 241.2h0.7v1.0h-0.7zM430.8 244.6h1.2v0.8h-1.2zM427.0 245.1h0.9v1.1h-0.9zM426.3 242.0h0.9v1.2h-0.9zM428.6 238.7h1.0v0.8h-1.0zM439.4 239.2h0.9v0.9h-0.9zM426.9 245.5h1.0v0.6h-1.0zM419.0 245.8h1.3v0.7h-1.3zM426.5 249.2h0.6v0.9h-0.6zM432.1 247.2h0.9v1.2h-0.9zM434.9 248.4h0.7v0.6h-0.7zM426.8 245.5h0.9v1.2h-0.9zM437.4 240.3h1.3v0.7h-1.3zM436.1 238.6h1.0v0.8h-1.0zM436.0 244.1h1.1v0.6h-1.1zM436.2 240.3h0.9v1.2h-0.9zM430.5 242.6h1.1v0.9h-1.1zM440.5 242.9h1.3v0.9h-1.3zM429.2 243.9h0.5v0.5h-0.5zM418.1 248.6h1.0v1.1h-1.0zM428.1 245.6h1.0v0.8h-1.0zM426.9 242.7h0.8v0.6h-0.8zM431.5 247.6h0.9v1.0h-0.9zM427.6 241.4h0.6v1.0h-0.6zM422.0 246.7h0.6v0.9h-0.6zM426.2 243.9h0.8v1.1h-0.8zM430.6 239.4h1.2v1.2h-1.2zM437.4 239.8h1.2v0.9h-1.2zM438.8 246.8h0.8v1.0h-0.8zM435.1 239.1h0.8v1.2h-0.8zM421.0 248.0h1.2v0.7h-1.2zM434.5 244.6h1.0v1.2h-1.0zM440.1 238.9h0.5v1.0h-0.5zM429.1 248.3h0.5v1.2h-0.5zM419.1 248.4h1.2v0.8h-1.2zM416.4 244.0h0.7v0.8h-0.7zM429.4 247.2h1.1v0.6h-1.1zM439.8 240.6h1.0v1.0h-1.0zM422.4 244.8h0.7v0.6h-0.7zM427.3 244.1h0.6v1.1h-0.6zM435.6 244.7h0.8v0.5h-0.8zM430.8 246.9h0.8v1.3h-0.8zM431.2 245.2h1.1v1.1h-1.1zM426.4 241.4h1.2v0.9h-1.2zM422.8 246.0h1.0v1.0h-1.0zM434.5 241.2h1.0v0.8h-1.0zM424.3 245.7h1.1v0.7h-1.1zM432.8 242.3h0.6v1.1h-0.6zM419.4 248.1h0.9v1.2h-0.9zM429.1 242.7h1.1v0.9h-1.1zM418.3 240.7h1.3v0.6h-1.3zM430.4 236.4h1.0v1.0h-1.0zM439.3 244.5h0.8v1.1h-0.8zM427.3 249.9h0.7v0.7h-0.7zM439.2 242.2h0.9v0.7h-0.9zM439.2 241.2h1.2v0.9h-1.2zM426.5 246.1h1.0v0.5h-1.0zM416.4 245.5h0.7v0.8h-0.7zM422.3 240.9h0.9v0.8h-0.9zM423.8 242.1h1.2v1.0h-1.2zM419.9 248.0h1.1v1.3h-1.1zM430.5 239.7h0.5v0.8h-0.5zM426.4 242.6h0.5v1.1h-0.5zM430.0 247.7h0.6v1.2h-0.6zM425.7 246.6h0.6v1.0h-0.6zM423.8 248.9h1.3v1.0h-1.3zM422.6 241.5h0.9v1.0h-0.9zM436.9 244.0h0.6v0.5h-0.6zM422.8 244.3h1.0v1.0h-1.0zM435.3 242.6h0.5v0.8h-0.5zM432.0 244.0h1.2v0.9h-1.2zM436.0 241.0h1.3v0.8h-1.3zM435.8 245.5h0.8v1.0h-0.8zM433.8 240.2h0.5v0.8h-0.5zM421.3 249.1h0.8v0.6h-0.8zM420.0 244.3h1.2v0.9h-1.2zM432.5 237.4h1.2v1.3h-1.2zM425.2 241.6h1.1v1.2h-1.1zM422.9 244.2h0.7v0.6h-0.7zM416.5 247.7h0.6v0.8h-0.6zM437.8 243.7h0.6v1.2h-0.6zM437.1 235.9h1.2v1.0h-1.2zM439.1 243.8h1.3v0.7h-1.3zM420.2 246.0h1.3v1.2h-1.3zM431.5 239.7h1.2v0.5h-1.2zM438.8 245.3h1.2v1.2h-1.2zM421.3 243.7h0.9v0.8h-0.9zM435.2 247.6h1.1v0.5h-1.1zM437.9 245.0h1.0v0.8h-1.0zM425.9 240.9h1.2v0.9h-1.2zM429.6 244.1h0.5v1.2h-0.5zM429.5 245.6h1.2v1.2h-1.2zM416.6 247.7h0.8v0.5h-0.8zM428.4 248.8h0.8v1.1h-0.8zM438.4 245.0h0.9v1.0h-0.9zM435.9 240.6h0.7v1.3h-0.7zM424.7 245.8h1.1v1.1h-1.1zM422.8 245.4h1.3v1.3h-1.3zM427.6 243.8h0.5v0.8h-0.5zM431.2 241.6h0.6v0.9h-0.6zM431.9 240.5h0.7v1.1h-0.7zM436.3 236.5h0.9v0.8h-0.9zM438.9 246.3h0.8v1.0h-0.8zM421.0 246.1h1.3v0.5h-1.3zM426.3 244.4h1.2v0.5h-1.2zM432.1 246.2h0.6v0.6h-0.6zM419.4 241.9h1.0v0.6h-1.0zM427.1 243.6h1.0v1.1h-1.0zM429.2 243.8h0.7v1.2h-0.7zM430.6 242.0h0.9v1.2h-0.9zM433.0 239.9h0.6v1.3h-0.6zM438.1 244.7h0.7v0.5h-0.7zM435.6 246.4h0.8v0.7h-0.8zM436.4 241.0h1.2v1.0h-1.2zM418.1 243.7h0.9v0.6h-0.9zM433.2 243.5h1.2v0.5h-1.2zM433.4 247.4h0.6v0.8h-0.6zM437.5 238.0h0.9v0.7h-0.9zM425.7 249.8h0.8v0.6h-0.8zM432.7 245.4h0.5v1.1h-0.5zM439.1 238.6h1.2v0.5h-1.2zM416.9 247.9h1.1v1.1h-1.1zM421.2 241.2h0.8v0.8h-0.8zM421.5 243.8h0.5v0.7h-0.5zM429.9 244.7h1.0v0.9h-1.0zM435.6 239.3h0.9v1.0h-0.9zM419.0 249.2h0.7v0.9h-0.7zM422.2 246.7h0.5v0.6h-0.5zM425.9 241.0h0.6v1.2h-0.6zM427.3 245.2h1.2v0.5h-1.2zM420.2 240.3h1.1v0.9h-1.1zM426.6 243.5h1.1v0.9h-1.1zM440.8 242.3h1.0v1.0h-1.0zM435.1 237.5h0.6v0.9h-0.6zM427.4 248.4h1.0v0.7h-1.0zM428.8 245.4h1.1v1.2h-1.1zM424.3 247.5h0.9v1.3h-0.9zM441.4 241.8h0.6v0.6h-0.6zM432.7 248.4h1.0v1.1h-1.0zM433.2 239.7h0.9v0.7h-0.9zM428.6 239.7h0.7v1.3h-0.7zM437.5 245.0h1.2v1.0h-1.2zM437.0 240.9h0.9v0.7h-0.9zM420.5 241.5h0.6v0.8h-0.6zM418.4 245.9h0.7v0.5h-0.7zM434.0 238.2h0.6v1.1h-0.6zM418.6 248.5h1.0v1.3h-1.0zM428.2 241.6h1.2v0.7h-1.2zM434.5 245.5h0.7v0.7h-0.7zM426.6 248.8h1.1v0.9h-1.1zM415.6 245.8h1.0v1.0h-1.0zM422.1 246.2h0.7v0.6h-0.7zM438.3 243.0h1.2v1.3h-1.2zM434.4 246.1h0.8v0.6h-0.8zM429.1 248.3h1.2v0.9h-1.2zM439.6 237.6h1.0v0.9h-1.0zM420.8 243.0h0.7v1.0h-0.7zM434.2 236.6h0.5v0.9h-0.5zM434.2 244.7h0.6v1.1h-0.6zM420.8 244.9h1.0v1.3h-1.0zM425.8 244.2h0.9v0.8h-0.9zM429.8 243.9h0.6v1.1h-0.6zM432.6 242.5h0.5v0.7h-0.5zM424.5 245.8h1.2v0.9h-1.2zM431.6 238.4h1.2v1.0h-1.2zM439.2 241.9h0.5v1.1h-0.5zM431.5 240.4h1.0v0.7h-1.0zM435.2 247.9h1.1v1.0h-1.1zM436.4 242.3h0.8v1.0h-0.8zM417.4 243.8h0.9v0.6h-0.9zM424.7 244.6h0.9v1.2h-0.9zM419.5 247.9h1.1v0.6h-1.1zM417.0 246.9h0.6v1.2h-0.6zM425.8 247.7h0.7v1.3h-0.7zM434.8 237.8h0.8v1.0h-0.8zM431.0 245.8h0.9v0.8h-0.9zM421.4 240.4h1.0v1.1h-1.0zM434.1 243.5h0.6v0.8h-0.6zM427.6 239.9h1.0v1.2h-1.0zM423.0 242.8h0.9v0.7h-0.9zM420.7 242.3h0.7v1.0h-0.7zM439.9 244.3h0.8v0.8h-0.8zM426.8 240.4h1.3v0.5h-1.3zM434.4 236.7h1.1v1.1h-1.1zM420.8 241.3h0.6v0.8h-0.6zM435.5 238.4h1.3v0.9h-1.3zM440.4 239.9h1.2v1.3h-1.2zM419.6 249.0h0.5v0.7h-0.5zM440.3 243.7h0.9v0.6h-0.9zM422.7 248.8h0.9v0.9h-0.9zM423.9 241.4h1.1v1.2h-1.1zM433.6 242.6h1.0v1.1h-1.0zM424.4 242.6h0.9v1.1h-0.9zM419.9 242.1h1.2v1.0h-1.2zM428.2 245.9h0.6v1.0h-0.6zM429.5 244.7h1.3v1.1h-1.3zM440.3 239.8h0.9v0.5h-0.9zM420.6 246.7h1.0v0.7h-1.0zM429.1 248.5h0.8v1.2h-0.8zM436.8 245.8h0.7v0.8h-0.7zM428.6 247.4h0.9v0.8h-0.9zM418.7 247.3h1.2v1.0h-1.2zM432.8 236.6h0.7v1.0h-0.7zM436.1 237.3h0.8v1.0h-0.8zM434.1 243.6h0.8v0.9h-0.8zM436.5 242.6h0.6v0.9h-0.6zM421.0 245.1h1.1v1.3h-1.1zM432.1 244.8h0.6v0.8h-0.6zM434.1 240.9h0.6v1.2h-0.6zM439.0 246.2h1.0v0.9h-1.0zM432.8 245.5h0.8v0.6h-0.8zM438.2 244.3h1.2v0.7h-1.2zM323.8 162.5h1.3v0.8h-1.3zM332.2 164.5h0.9v1.3h-0.9zM323.1 167.7h0.9v1.0h-0.9zM323.5 165.5h1.2v1.0h-1.2zM324.4 165.6h1.0v0.5h-1.0zM331.6 169.3h0.6v1.0h-0.6zM329.1 167.3h1.0v0.9h-1.0zM325.0 165.2h1.1v1.1h-1.1zM327.2 163.1h1.0v1.0h-1.0zM330.1 164.3h0.5v1.0h-0.5zM326.7 160.7h1.0v1.1h-1.0zM330.1 169.8h0.6v0.7h-0.6zM329.7 164.7h1.1v1.1h-1.1zM331.0 160.9h0.9v1.3h-0.9zM332.1 160.3h0.5v0.6h-0.5zM326.7 169.2h1.0v1.2h-1.0zM327.7 160.9h1.1v0.7h-1.1zM330.1 161.6h0.5v0.8h-0.5zM327.1 169.0h0.9v1.1h-0.9zM330.5 167.5h0.6v0.7h-0.6zM330.0 167.2h0.6v1.3h-0.6zM334.0 165.9h0.5v1.2h-0.5zM324.9 167.9h0.7v1.0h-0.7zM325.1 164.7h0.7v1.1h-0.7zM325.4 168.8h1.3v1.2h-1.3zM333.8 163.5h1.1v1.3h-1.1zM326.6 166.4h1.3v1.0h-1.3zM330.9 162.4h0.8v1.2h-0.8zM333.2 168.1h0.6v1.2h-0.6zM323.1 161.7h0.8v1.2h-0.8zM331.2 163.8h0.6v0.8h-0.6zM332.8 165.5h1.0v1.3h-1.0zM327.3 161.8h0.8v1.2h-0.8zM329.4 162.8h0.8v0.7h-0.8zM323.9 168.5h1.1v0.6h-1.1zM321.9 166.0h0.7v0.6h-0.7zM332.4 166.6h0.7v0.9h-0.7zM325.7 163.8h0.7v0.5h-0.7zM333.1 164.9h0.8v1.2h-0.8zM331.5 169.7h1.3v0.7h-1.3zM322.9 166.0h0.7v1.0h-0.7zM331.0 168.7h1.2v0.6h-1.2zM323.1 164.2h0.8v0.8h-0.8zM324.3 163.4h1.0v0.7h-1.0zM329.9 164.3h0.8v0.9h-0.8zM327.6 164.1h0.7v0.6h-0.7zM327.2 166.8h1.1v0.8h-1.1zM325.4 160.9h0.5v0.6h-0.5zM330.5 164.7h1.1v0.8h-1.1zM334.2 163.3h0.5v0.9h-0.5zM326.1 162.7h1.1v0.5h-1.1zM329.1 166.6h1.2v0.5h-1.2zM323.1 163.5h0.9v1.1h-0.9zM322.5 165.7h1.2v1.1h-1.2zM323.3 166.9h1.1v0.8h-1.1zM334.5 164.8h1.1v0.7h-1.1zM326.3 169.0h1.0v1.3h-1.0zM323.5 162.7h1.0v0.8h-1.0zM332.1 165.0h1.1v0.8h-1.1zM334.8 164.5h0.5v1.2h-0.5zM333.1 164.4h0.8v1.2h-0.8zM327.8 169.2h0.7v1.0h-0.7zM333.0 160.7h1.2v0.7h-1.2zM323.1 162.9h1.3v0.9h-1.3zM329.7 168.9h0.9v0.9h-0.9zM334.1 166.2h1.2v1.1h-1.2zM323.4 166.3h1.1v1.2h-1.1zM331.4 168.9h1.1v1.2h-1.1zM330.5 162.5h1.0v0.8h-1.0zM329.6 166.5h1.2v1.1h-1.2zM330.7 167.4h1.0v1.1h-1.0zM333.3 166.7h0.9v1.1h-0.9zM323.5 163.8h0.9v0.9h-0.9zM328.5 169.1h0.9v1.2h-0.9zM327.9 162.6h0.6v1.0h-0.6zM326.2 168.9h0.7v1.1h-0.7zM350.8 161.3h0.8v0.6h-0.8zM344.7 160.8h1.1v1.2h-1.1zM331.6 158.5h1.2v0.7h-1.2zM343.4 156.9h0.5v1.2h-0.5zM346.2 158.3h0.7v1.1h-0.7zM346.0 158.0h1.3v1.2h-1.3zM336.2 157.1h0.6v0.7h-0.6zM350.3 159.5h0.7v0.8h-0.7zM346.1 160.8h0.9v0.9h-0.9zM348.3 161.2h0.6v1.0h-0.6zM347.6 160.4h0.6v1.1h-0.6zM347.5 158.9h1.1v1.0h-1.1zM346.1 160.7h0.6v0.8h-0.6zM334.7 159.5h0.6v0.6h-0.6zM336.1 158.7h0.8v1.0h-0.8zM342.8 161.3h1.2v0.6h-1.2zM342.7 158.1h0.8v0.9h-0.8zM338.4 161.3h0.8v1.0h-0.8zM336.8 159.1h0.7v0.8h-0.7zM351.5 158.4h0.7v1.1h-0.7zM344.1 160.4h1.1v0.7h-1.1zM347.8 157.7h0.5v1.3h-0.5zM339.8 161.7h0.6v1.2h-0.6zM338.2 162.3h0.8v1.1h-0.8zM345.0 161.7h1.3v1.1h-1.3zM334.1 162.0h0.6v1.0h-0.6zM340.7 161.7h1.2v0.9h-1.2zM349.2 160.0h1.0v0.9h-1.0zM334.8 159.0h1.2v1.2h-1.2zM341.8 157.9h0.9v0.7h-0.9zM337.7 161.8h0.7v0.8h-0.7zM337.6 155.5h1.1v0.7h-1.1zM335.9 156.6h0.8v1.0h-0.8zM335.2 160.5h0.9v1.1h-0.9zM343.6 161.9h1.2v1.3h-1.2zM349.2 158.2h1.1v1.2h-1.1zM334.2 156.6h0.7v1.0h-0.7zM345.7 160.9h1.1v0.7h-1.1zM344.7 161.1h1.3v1.1h-1.3zM350.4 159.9h0.7v0.6h-0.7zM341.5 162.1h0.8v1.3h-0.8zM322.3 180.0h1.0v1.0h-1.0zM322.1 181.9h1.1v1.1h-1.1zM323.8 180.6h1.1v1.0h-1.1zM325.0 177.3h1.2v1.0h-1.2zM327.1 175.1h0.8v0.8h-0.8zM328.0 176.5h0.6v1.2h-0.6zM326.5 180.7h1.2v0.6h-1.2zM328.5 179.1h1.0v0.9h-1.0zM326.2 179.0h0.7v1.0h-0.7zM322.2 181.7h1.0v0.5h-1.0zM326.9 179.8h1.0v0.7h-1.0zM326.7 177.8h1.1v1.1h-1.1zM327.1 178.3h0.7v1.3h-0.7zM329.9 177.6h0.7v0.9h-0.7zM320.8 182.1h0.9v0.9h-0.9zM325.0 177.2h1.0v1.1h-1.0zM324.0 179.6h1.0v1.1h-1.0zM324.2 177.4h0.9v0.7h-0.9zM326.7 176.4h1.2v0.7h-1.2zM323.4 179.7h1.0v0.6h-1.0zM320.2 182.3h1.1v0.7h-1.1zM324.7 179.8h0.7v1.3h-0.7zM327.3 176.6h1.1v0.9h-1.1zM320.8 181.7h0.5v0.6h-0.5zM321.9 182.7h0.9v0.8h-0.9zM326.7 175.1h0.6v1.1h-0.6zM327.5 175.2h1.2v1.2h-1.2zM328.5 178.7h0.6v0.7h-0.6zM328.2 178.0h0.6v0.7h-0.6zM325.4 178.5h1.1v0.8h-1.1zM328.5 177.6h1.1v1.2h-1.1zM325.2 180.1h0.9v0.9h-0.9zM325.3 179.6h1.1v0.6h-1.1zM322.1 179.4h1.0v0.7h-1.0zM328.8 177.1h0.7v1.2h-0.7zM346.6 166.8h1.0v1.1h-1.0zM342.9 165.6h1.3v1.2h-1.3zM344.4 165.9h1.2v0.9h-1.2zM346.6 165.9h1.2v0.8h-1.2zM308.9 141.8h0.8v0.5h-0.8zM308.4 142.7h0.8v0.8h-0.8zM309.5 146.4h1.0v1.1h-1.0zM308.9 146.4h0.6v0.7h-0.6zM308.0 144.6h1.0v1.2h-1.0zM307.9 141.7h0.8v1.0h-0.8zM307.6 143.7h1.2v1.3h-1.2zM311.0 146.3h0.6v0.7h-0.6zM308.3 145.7h0.7v0.6h-0.7zM310.3 146.4h1.2v1.2h-1.2zM308.7 145.5h1.2v0.7h-1.2zM309.4 146.9h0.5v0.5h-0.5zM308.3 144.5h0.5v0.7h-0.5zM306.6 160.8h1.1v0.5h-1.1zM305.5 159.7h1.0v1.1h-1.0zM305.9 161.7h1.1v1.2h-1.1zM305.0 157.0h0.9v0.7h-0.9zM308.4 161.1h0.7v0.7h-0.7zM307.5 159.6h0.8v0.9h-0.8zM307.3 157.3h0.8v0.6h-0.8zM306.7 159.9h0.5v1.1h-0.5zM304.8 159.4h0.9v0.8h-0.9zM307.9 156.7h1.1v1.2h-1.1zM307.9 160.6h1.2v0.6h-1.2zM307.6 157.3h1.2v1.1h-1.2zM305.8 161.4h0.9v1.1h-0.9zM305.4 157.9h0.8v1.1h-0.8zM305.1 158.8h0.7v0.7h-0.7zM310.0 187.1h0.7v1.3h-0.7zM309.1 187.9h0.7v0.8h-0.7zM310.1 185.2h1.2v0.8h-1.2zM304.7 186.5h1.0v0.6h-1.0zM305.7 187.7h1.0v1.2h-1.0zM303.3 187.4h1.1v1.2h-1.1zM308.5 184.2h1.0v1.2h-1.0zM305.5 188.8h1.2v1.2h-1.2zM303.0 184.2h1.1v1.0h-1.1zM307.6 187.5h1.1v0.9h-1.1zM304.5 187.9h0.8v0.8h-0.8zM304.7 184.7h0.8v0.5h-0.8zM309.3 189.8h1.0v0.9h-1.0zM308.2 189.8h0.5v0.9h-0.5zM310.5 188.7h1.2v1.2h-1.2zM303.6 189.3h0.5v0.9h-0.5zM303.9 188.8h1.3v1.1h-1.3zM307.8 189.6h0.8v1.2h-0.8zM308.9 188.5h1.1v1.3h-1.1zM307.1 187.8h0.8v0.9h-0.8zM310.3 189.5h1.2v0.6h-1.2zM306.1 181.4h1.3v0.6h-1.3zM310.2 180.4h1.2v0.8h-1.2zM309.0 178.3h0.5v1.0h-0.5zM309.4 180.5h0.7v1.2h-0.7zM306.0 181.1h1.1v0.5h-1.1zM307.8 182.1h0.8v0.7h-0.8zM309.6 183.7h1.0v0.9h-1.0zM309.8 177.9h1.0v0.9h-1.0zM306.2 178.2h0.8v1.1h-0.8zM309.3 179.9h0.8v0.7h-0.8zM305.6 181.0h1.0v0.6h-1.0zM306.5 178.3h0.6v0.9h-0.6zM313.7 200.6h1.3v1.1h-1.3zM321.6 192.9h1.1v0.6h-1.1zM324.9 199.0h0.9v1.1h-0.9zM313.4 197.3h1.0v0.7h-1.0zM303.7 192.7h1.3v1.2h-1.3zM307.3 200.3h0.5v1.2h-0.5zM311.7 190.3h0.9v0.7h-0.9zM311.1 200.5h1.1v1.2h-1.1zM309.3 195.7h0.9v1.2h-0.9zM322.6 200.0h0.9v1.1h-0.9zM310.5 195.1h1.1v0.9h-1.1zM323.8 192.5h1.1v0.9h-1.1zM313.2 198.8h1.1v0.9h-1.1zM307.3 198.1h1.0v0.6h-1.0zM319.4 190.7h1.0v0.6h-1.0zM318.2 190.2h1.0v1.1h-1.0zM306.6 194.8h1.2v1.1h-1.2zM313.0 190.4h1.1v0.7h-1.1zM303.6 199.2h1.2v0.9h-1.2zM323.9 190.2h0.7v1.0h-0.7zM385.0 150.5h1.2v0.9h-1.2zM376.3 145.3h1.1v1.1h-1.1zM385.7 149.8h0.5v0.9h-0.5zM378.8 147.7h1.3v1.0h-1.3zM370.0 146.7h0.6v1.0h-0.6zM365.6 150.5h0.7v0.9h-0.7zM365.8 148.6h1.1v0.8h-1.1zM374.3 147.7h1.0v0.7h-1.0zM367.8 149.6h1.2v0.6h-1.2zM369.8 146.1h0.6v1.1h-0.6zM378.5 147.6h0.7v0.6h-0.7zM380.7 151.5h1.1v0.5h-1.1zM366.4 150.9h1.3v0.7h-1.3zM381.8 146.6h0.7v1.1h-0.7zM384.9 152.0h0.8v1.2h-0.8zM383.8 147.2h1.0v1.2h-1.0zM369.8 146.7h1.2v0.6h-1.2zM372.4 140.2h1.2v1.1h-1.2zM372.5 140.7h0.9v0.7h-0.9zM372.9 141.8h1.2v1.2h-1.2zM373.5 143.8h0.7v0.9h-0.7zM370.6 140.9h0.9v0.8h-0.9zM369.6 140.2h1.3v1.0h-1.3zM369.6 146.8h0.9v0.6h-0.9zM371.7 142.0h1.3v0.8h-1.3zM371.8 142.3h1.0v0.8h-1.0zM379.8 147.3h1.0v0.6h-1.0zM377.0 150.9h0.8v0.5h-0.8zM378.5 147.3h0.7v1.0h-0.7zM377.3 151.4h0.7v0.8h-0.7zM378.0 149.3h0.9v0.7h-0.9zM377.3 149.4h1.1v0.9h-1.1zM378.2 148.0h1.2v1.2h-1.2zM378.9 149.8h1.0v1.2h-1.0zM377.9 151.2h0.9v0.5h-0.9zM378.2 150.9h1.0v0.9h-1.0zM376.3 150.4h1.2v0.5h-1.2zM378.5 149.2h1.1v0.7h-1.1zM377.8 148.1h1.3v1.2h-1.3zM402.5 149.3h0.7v0.7h-0.7zM406.2 151.4h0.9v0.9h-0.9zM406.5 152.0h1.2v0.5h-1.2zM404.6 147.9h0.5v1.2h-0.5zM399.6 152.3h0.5v0.8h-0.5zM405.4 149.3h1.0v1.0h-1.0zM399.0 152.4h1.2v1.2h-1.2zM403.5 153.3h1.2v0.7h-1.2zM401.9 150.6h0.9v0.9h-0.9zM399.3 153.0h0.8v0.6h-0.8zM407.6 146.6h0.9v1.3h-0.9zM401.5 152.8h0.7v0.8h-0.7zM406.2 151.0h1.0v1.0h-1.0zM405.8 148.0h0.9v1.0h-0.9zM405.7 146.4h1.1v1.0h-1.1zM405.6 150.0h0.9v0.7h-0.9zM401.5 147.0h1.2v1.0h-1.2zM400.7 147.3h0.7v0.9h-0.7zM399.4 148.9h1.1v0.6h-1.1zM404.8 147.1h0.8v1.3h-0.8zM407.0 151.3h0.5v0.8h-0.5zM407.9 150.7h0.6v0.9h-0.6zM401.0 149.7h0.5v0.7h-0.5zM401.7 147.6h0.8v1.1h-0.8zM403.3 149.5h1.2v1.2h-1.2zM406.4 148.7h1.1v0.7h-1.1zM405.9 151.2h1.0v1.2h-1.0zM405.4 147.2h1.1v0.8h-1.1zM406.1 146.7h0.8v1.3h-0.8zM401.1 147.6h0.7v1.2h-0.7zM399.1 149.1h1.2v0.5h-1.2zM399.6 147.5h1.2v0.8h-1.2zM399.5 146.5h0.9v0.6h-0.9zM402.4 151.6h0.7v0.6h-0.7zM402.2 149.2h1.0v1.1h-1.0zM405.4 152.0h0.9v1.1h-0.9zM406.8 148.3h0.7v0.8h-0.7zM404.0 152.8h0.7v1.1h-0.7zM398.9 149.7h1.3v1.3h-1.3zM399.5 147.9h1.2v1.1h-1.2zM404.2 148.7h1.1v0.5h-1.1zM401.4 151.3h1.3v1.1h-1.3zM404.6 150.5h0.7v1.0h-0.7zM402.6 142.8h0.8v0.7h-0.8zM408.9 141.9h0.6v1.1h-0.6zM404.0 140.1h0.5v1.2h-0.5zM404.2 139.9h1.2v0.9h-1.2zM406.4 141.4h1.0v0.6h-1.0zM401.7 140.8h1.1v0.6h-1.1zM404.8 141.7h0.9v1.2h-0.9zM403.8 139.8h1.2v0.8h-1.2zM408.4 141.3h1.2v0.9h-1.2zM407.5 139.4h0.9v1.0h-0.9zM406.5 141.7h0.5v1.2h-0.5zM401.0 159.1h1.0v0.9h-1.0zM401.3 153.8h0.6v1.2h-0.6zM400.7 156.2h1.2v0.6h-1.2zM385.7 205.4h0.7v0.9h-0.7zM384.0 203.2h0.7v0.7h-0.7zM387.2 204.2h0.7v1.1h-0.7zM386.1 202.5h0.9v0.7h-0.9zM383.7 202.7h1.1v0.6h-1.1zM387.4 204.2h0.7v0.6h-0.7zM382.7 204.4h0.9v0.9h-0.9zM383.4 205.1h0.6v1.2h-0.6zM382.8 204.6h0.9v1.1h-0.9zM381.6 204.8h0.8v0.9h-0.8zM321.8 155.6h0.5v0.8h-0.5zM326.2 154.4h1.0v1.0h-1.0zM320.1 157.2h0.7v0.8h-0.7zM321.5 158.0h1.1v0.8h-1.1zM322.3 155.8h0.6v0.7h-0.6zM318.8 158.9h0.8v0.8h-0.8z" fill="#2c2c2c"/>
<path d="M467.2 147.9h0.5v0.7h-0.5zM468.8 150.1h1.1v0.7h-1.1zM470.8 148.2h0.8v0.5h-0.8zM468.3 145.4h1.1v0.9h-1.1zM467.6 152.9h1.2v0.6h-1.2zM473.7 151.9h0.9v1.2h-0.9zM469.6 153.1h1.1v1.3h-1.1zM469.2 158.5h1.1v1.0h-1.1zM470.0 150.9h0.5v0.6h-0.5zM466.8 157.2h0.7v0.6h-0.7zM466.7 158.6h1.2v1.0h-1.2zM468.7 149.0h0.7v0.9h-0.7zM467.6 152.1h0.7v1.3h-0.7zM468.4 160.7h0.7v0.8h-0.7zM470.6 153.2h0.7v0.9h-0.7zM467.0 151.7h0.5v0.5h-0.5zM468.8 148.9h1.0v0.9h-1.0zM473.0 155.6h1.1v1.2h-1.1zM469.5 150.5h1.3v0.6h-1.3zM473.0 155.3h0.5v1.2h-0.5zM474.3 155.1h1.1v1.1h-1.1zM467.3 153.4h0.9v1.2h-0.9zM473.5 158.3h1.0v1.2h-1.0zM472.5 156.5h0.7v0.5h-0.7zM467.4 150.8h0.6v1.2h-0.6zM471.2 155.2h1.0v1.0h-1.0zM470.5 145.1h1.1v1.1h-1.1zM470.7 153.9h1.0v0.6h-1.0zM473.1 149.3h0.6v0.7h-0.6zM472.8 148.2h1.1v1.3h-1.1zM470.7 151.2h0.9v1.0h-0.9zM473.2 155.2h1.0v0.6h-1.0zM467.3 149.3h1.1v0.7h-1.1zM471.5 145.4h0.5v0.7h-0.5zM472.2 156.3h1.0v0.7h-1.0zM470.9 152.8h0.9v0.6h-0.9zM475.4 160.2h0.5v0.9h-0.5zM473.7 160.8h0.9v0.7h-0.9zM468.1 160.3h0.7v1.0h-0.7zM467.2 153.7h1.3v0.6h-1.3zM473.6 153.2h1.2v1.1h-1.2zM468.2 159.8h0.9v0.5h-0.9zM470.4 150.1h0.6v0.8h-0.6zM469.2 158.5h0.5v1.1h-0.5zM473.7 147.0h1.2v1.1h-1.2zM469.3 151.4h1.3v1.0h-1.3zM469.5 152.2h0.7v0.5h-0.7zM467.1 158.4h0.7v1.2h-0.7zM468.4 149.5h0.9v0.7h-0.9zM469.4 160.4h1.2v1.1h-1.2zM471.8 159.8h1.3v0.9h-1.3zM472.7 146.0h1.1v0.9h-1.1z" fill="#9a9a9a"/>
<path d="M421.9 240.8h1.1v0.7h-1.1zM420.7 242.4h0.7v1.2h-0.7zM422.5 242.6h0.6v0.9h-0.6zM420.6 242.6h1.2v1.0h-1.2z" fill="#b8c020"/>
<path d="M439.0 250.7h1.2v0.9h-1.2zM439.7 250.3h0.7v0.5h-0.7zM440.0 251.1h0.6v1.2h-0.6zM438.8 250.9h0.6v0.7h-0.6zM440.3 250.6h0.6v0.9h-0.6zM438.9 252.0h0.6v1.3h-0.6z" fill="#9a9a30"/>
<path d="M367.6 349.7h0.7v0.7h-0.7zM367.0 344.2h0.5v0.9h-0.5zM364.9 349.3h0.9v0.6h-0.9zM365.8 347.7h0.9v1.0h-0.9zM364.3 346.2h1.3v1.0h-1.3zM361.8 347.2h0.6v0.7h-0.6zM365.6 344.9h1.0v0.9h-1.0zM365.5 348.6h0.9v1.2h-0.9zM363.2 345.7h0.7v0.5h-0.7zM366.3 345.1h1.0v0.7h-1.0zM362.5 344.5h1.1v1.2h-1.1zM365.2 349.3h0.6v1.1h-0.6zM366.9 347.3h0.7v0.9h-0.7zM366.6 346.3h1.2v1.3h-1.2zM363.0 344.3h1.0v1.2h-1.0zM366.3 347.4h1.2v0.5h-1.2zM361.0 350.1h0.5v1.0h-0.5zM365.1 348.2h1.1v0.9h-1.1zM360.7 344.5h1.2v0.5h-1.2zM366.5 343.8h0.9v0.7h-0.9zM363.6 346.6h1.1v1.1h-1.1z" fill="#111"/>
<path d="M550.0 208.7h1.7v1.7h-1.7zM543.7 218.0h2.1v0.9h-2.1zM546.4 213.1h1.8v1.0h-1.8zM544.8 214.8h1.8v1.5h-1.8zM540.8 220.5h1.5v1.4h-1.5zM553.5 207.0h1.6v1.3h-1.6zM549.6 211.6h2.1v1.8h-2.1z" fill="#c4a850"/>
<path d="M547.7 213.3h0.5v1.1h-0.5zM552.0 208.8h1.1v1.0h-1.1zM549.7 211.1h0.8v1.2h-0.8zM548.7 213.5h0.6v1.2h-0.6zM545.3 214.5h1.3v1.0h-1.3zM542.3 220.5h1.0v0.8h-1.0zM550.8 210.8h0.7v0.6h-0.7zM554.4 207.7h1.2v0.9h-1.2zM541.7 221.0h0.6v1.2h-0.6zM546.4 212.8h1.1v0.9h-1.1z" fill="#666"/>
<clipPath id="cp"><path d="M549.5 147.5 L552.9 147.5 L552.9 150.9 L549.5 150.9Z M438.9 337.9 L444.5 337.9 L444.5 342.2 L438.9 342.2Z M329.6 211.8 L338.4 209.4 L345.3 215.7 L341.0 220.1 L343.4 229.6 L345.3 235.5 L344.4 241.4 L340.4 245.3 L343.4 251.3 L344.4 259.2 L338.4 261.1 L339.4 267.1 L346.3 264.1 L349.3 270.0 L348.3 278.9 L344.4 282.8 L335.5 286.0 L328.6 286.0 L329.6 273.0 L332.5 265.1 L332.5 259.2 L328.6 255.2 L327.6 247.3 L331.5 238.4 L332.5 232.5 L331.5 221.7Z M349.3 270.0 L361.1 269.0 L372.0 263.1 L374.9 264.1 L372.0 268.0 L361.1 273.0 L350.3 274.9Z M380.9 258.8 L385.2 258.8 L385.2 262.3 L380.9 262.3Z M381.9 203.5 L384.4 203.5 L384.4 205.5 L381.9 205.5Z M366.1 282.8 L371.0 282.8 L371.0 286.0 L366.1 286.0Z M329.6 276.0 L351.3 276.0 L345.3 281.9 L335.5 284.9 L328.6 283.9Z M342.4 292.8 L355.2 288.8 L363.1 287.8 L370.0 283.9 L372.0 289.8 L374.9 295.7 L376.9 299.7 L371.0 300.7 L367.1 305.6 L364.1 311.5 L357.2 315.5 L355.2 323.4 L351.3 327.3 L347.3 325.3 L346.3 315.5 L343.4 307.6 L341.4 299.7Z M338.4 333.2 L347.3 332.2 L355.2 328.3 L363.1 329.3 L370.0 327.3 L374.9 333.2 L384.8 329.3 L394.7 328.3 L402.6 331.3 L410.5 333.2 L412.4 339.2 L408.5 347.1 L398.6 350.0 L390.7 353.0 L382.8 351.0 L374.9 353.0 L359.2 354.0 L359.2 345.1 L353.2 341.1 L345.3 338.2 L338.4 336.2Z M338.4 346.1 L345.3 345.1 L354.2 344.1 L355.2 354.0 L338.4 354.6Z M306.3 339.2 L313.8 339.2 L314.8 350.0 L306.3 350.6Z M412.4 332.2 L416.0 332.2 L416.0 338.2 L412.4 338.2Z M487.1 297.4 L491.0 289.5 L493.4 292.6 L498.1 294.2 L502.8 295.0 L504.4 291.1 L508.4 288.7 L509.2 294.2 L509.9 298.2 L510.7 302.9 L507.6 306.1 L503.6 306.8 L499.7 305.3 L495.7 306.1 L492.2 308.4 L493.8 302.9 L487.8 298.9Z M529.7 231.5 L533.7 227.6 L540.3 225.6 L546.8 227.6 L549.5 231.5 L550.8 235.5 L548.2 240.1 L543.6 243.4 L538.3 244.7 L536.3 247.3 L534.3 246.7 L533.7 242.1 L530.4 239.4 L528.4 235.5Z M533.0 206.5 L537.0 208.5 L540.9 207.8 L542.2 211.8 L539.6 213.8 L538.3 219.0 L537.6 224.3 L534.3 226.9 L531.7 224.3 L531.1 221.7 L533.0 217.7 L532.4 211.8Z M552.8 336.0 L557.1 336.0 L560.8 337.2 L565.7 339.0 L566.4 342.7 L563.9 346.4 L562.1 348.9 L557.1 349.2 L555.3 346.4 L554.1 343.3 L553.5 339.7Z M529.5 348.3 L533.2 347.3 L537.5 347.6 L541.8 347.0 L545.5 347.6 L548.6 348.6 L551.0 346.4 L554.1 344.6 L555.3 347.6 L552.2 349.5 L547.3 349.8 L544.3 349.2 L539.3 348.6 L533.2 349.2 L529.8 349.8Z M419.5 173.1 L424.4 171.4 L429.2 173.1 L430.1 177.9 L426.8 180.4 L425.2 184.4 L421.9 183.6 L419.5 178.8Z M512.1 159.2 L517.0 157.9 L521.9 160.1 L521.9 164.9 L517.0 167.4 L515.4 172.2 L512.1 170.6 L511.3 164.9Z M415.8 245.7 L419.7 239.7 L425.7 241.7 L429.6 236.8 L439.5 235.8 L441.8 241.7 L439.5 247.6 L431.6 249.6 L427.6 250.6 L421.7 249.6 L416.8 249.6Z M322.3 161.6 L333.7 160.2 L335.5 165.1 L332.8 171.2 L325.8 170.4 L322.0 166.8Z M320.6 181.8 L328.5 173.9 L332.0 173.9 L332.0 177.4 L324.9 182.6 L320.6 183.5Z M307.9 141.9 L313.2 141.4 L310.9 147.5 L307.9 147.5Z M304.8 157.2 L309.2 157.2 L309.2 162.5 L304.8 162.5Z"/></clipPath>
<path clip-path="url(#cp)" d="M439.3 339.2l3.4 0.5M335.7 223.5l3.9 1.2M332.7 263.3l-2.6 7.8M342.1 232.3l-1.0 2.9M334.4 275.0l-2.1 8.6M338.2 260.0l6.3 4.6M333.7 237.0l6.9 3.3M334.0 248.7l-0.4 6.0M338.7 237.3l3.5 2.8M332.7 276.4l-1.4 4.1M328.9 283.9l-1.8 5.1M341.3 251.2l4.3 0.5M334.1 249.0l7.8 0.0M344.5 265.9l7.2 2.2M334.7 227.9l4.6 1.2M337.6 254.6l7.0 2.6M338.8 216.1l-1.9 5.0M342.9 259.1l-3.4 5.9M347.0 279.4l-1.1 3.1M338.3 278.2l-3.3 5.7M333.0 261.1l-3.3 3.9M335.0 259.2l-0.6 6.9M346.6 267.9l-3.8 5.3M337.7 231.4l-0.8 7.1M333.1 239.9l-3.2 6.6M337.5 239.9l-0.2 4.3M330.0 251.6l7.4 2.3M336.4 238.7l7.8 -0.3M330.6 284.2l5.7 4.1M340.8 240.4l0.3 4.8M331.2 249.6l-2.0 5.5M340.9 269.2l-0.6 5.1M337.7 228.2l4.5 1.4M339.8 244.6l8.9 0.0M347.3 278.6l3.5 1.1M342.9 213.5l-1.8 5.4M348.7 269.5l-1.7 3.1M338.9 267.8l-1.6 4.6M334.0 257.9l-2.8 8.3M338.9 257.0l-2.2 6.5M342.7 251.1l8.5 2.6M335.0 278.9l3.6 1.1M336.9 213.3l-2.0 2.4M334.2 281.7l-1.1 6.6M334.2 250.4l-2.2 3.1M331.6 213.6l6.4 -0.2M333.5 231.7l-2.1 6.1M332.1 251.9l8.5 0.4M332.6 218.9l-0.1 5.1M333.8 248.3l0.1 4.9M340.6 229.8l4.0 2.0M341.7 274.8l-1.0 8.5M328.8 255.0l-1.3 6.5M336.8 222.5l6.3 4.5M338.6 212.5l4.4 1.4M331.1 282.4l7.6 3.2M332.3 255.1l-2.3 6.6M331.1 253.3l7.1 2.2M332.5 271.2l3.1 -0.1M331.0 279.4l-1.0 6.4M332.9 262.1l-1.4 4.1M332.2 249.9l4.2 2.2M340.3 253.6l5.0 1.5M329.2 278.4l-2.9 8.4M353.4 272.3l4.8 2.9M364.9 270.4l7.8 2.5M369.0 268.7l3.2 1.0M339.6 280.5l7.7 2.4M330.9 279.0l-4.4 6.4M332.2 280.6l-1.4 4.2M340.2 280.2l6.0 1.8M339.3 281.7l-1.6 4.7M329.3 279.0l4.6 1.4M330.2 282.8l7.7 4.0M337.3 282.9l-2.0 8.2M346.4 279.7l5.1 1.6M332.5 282.3l6.8 2.1M362.0 304.6l7.9 2.4M364.7 289.4l-1.2 3.4M347.6 314.0l7.7 2.4M352.3 323.5l-2.9 8.5M362.2 295.9l3.4 0.8M367.7 296.9l6.2 0.1M367.4 300.7l4.9 1.1M367.1 286.9l4.5 2.4M352.7 305.7l-2.8 8.1M353.8 301.9l8.7 -0.8M364.1 301.7l-3.9 8.0M357.1 313.6l6.3 5.3M353.9 319.7l7.5 1.9M364.0 304.3l4.6 1.4M368.8 295.8l4.0 1.1M346.8 318.9l4.2 1.3M352.6 302.3l-1.9 4.2M344.4 307.7l4.7 1.5M351.9 298.5l-0.4 6.8M360.1 294.1l-2.5 4.1M354.9 299.0l3.3 1.6M352.5 303.6l-2.7 8.0M353.8 309.1l-2.9 8.4M358.4 306.9l8.8 1.3M349.1 317.5l8.2 1.4M374.1 296.8l-1.1 3.2M354.3 299.2l-3.9 6.1M349.1 304.6l4.8 1.5M354.7 305.1l-1.7 5.1M343.3 306.3l-1.2 3.5M352.0 316.5l5.0 -0.0M357.3 309.0l8.8 0.7M355.1 305.7l3.8 1.2M351.2 325.3l-2.5 4.8M350.8 291.4l3.7 0.6M348.1 298.5l2.9 2.0M365.6 289.6l4.4 0.7M342.8 293.6l4.7 3.6M366.4 302.5l-2.2 6.5M370.7 290.9l5.6 1.7M365.0 289.8l6.5 2.0M353.6 323.4l4.3 0.5M359.9 289.4l-2.5 7.4M342.1 298.7l5.7 1.8M349.2 306.0l5.5 1.2M355.7 302.3l-2.5 7.2M345.6 297.5l-1.9 5.7M367.2 288.2l-1.9 5.6M347.2 307.5l4.5 1.4M360.3 299.7l-2.0 5.9M354.8 317.1l-1.7 6.0M355.6 301.3l-2.6 6.8M354.8 293.4l-1.0 2.9M343.8 295.6l4.8 1.5M394.8 346.1l-3.3 3.9M359.9 349.0l-2.2 6.7M408.4 341.4l-1.7 5.0M368.5 346.8l3.6 1.1M379.2 345.6l4.3 1.3M354.0 330.4l5.2 0.2M386.7 349.3l6.5 2.0M381.4 343.4l-2.7 7.8M395.3 340.4l-2.1 6.1M392.4 339.4l8.5 2.6M364.7 338.7l-4.9 6.4M383.8 344.1l7.1 2.2M404.3 335.8l4.0 1.2M343.0 335.3l3.4 1.6M372.0 345.9l-1.8 5.4M392.3 330.9l7.2 2.2M365.8 339.6l8.3 2.6M383.6 343.1l-0.4 5.2M344.9 334.7l4.1 2.3M386.7 333.8l-1.3 3.8M388.7 334.9l4.5 3.1M371.3 348.5l6.7 2.1M383.6 330.4l6.5 1.8M409.6 343.0l-3.8 7.1M372.2 331.6l3.8 2.1M400.1 343.0l-1.7 3.0M375.2 341.8l8.9 -0.7M387.6 340.7l-2.0 3.4M374.2 338.5l-2.0 5.1M393.0 344.0l0.3 7.6M373.8 337.4l-1.0 3.1M393.5 334.6l4.3 1.3M369.5 337.4l6.2 0.4M353.8 330.3l-0.1 4.6M394.5 336.2l-1.9 5.5M354.5 330.4l3.5 1.5M371.4 344.6l8.0 2.5M394.8 339.3l-1.9 5.6M354.9 335.4l6.8 2.1M362.3 337.8l-0.9 5.8M345.7 336.0l7.2 2.2M403.8 340.8l-1.6 5.7M347.0 337.8l5.8 1.8M371.7 336.4l5.1 3.5M360.8 337.5l7.3 1.7M396.1 340.0l4.1 2.3M410.3 342.3l-1.6 4.8M348.2 339.2l-1.0 3.2M365.4 351.0l3.7 -0.4M387.0 329.2l8.5 2.6M366.3 346.1l-1.6 4.6M359.2 329.9l7.2 2.2M399.4 342.8l-1.9 5.4M383.6 336.7l-2.6 7.7M375.3 338.1l-1.7 5.0M370.6 351.8l6.5 1.0M392.3 349.1l5.9 1.8M376.3 343.6l-1.1 3.1M367.2 338.4l3.4 2.8M354.5 341.5l5.7 0.3M392.0 330.1l7.5 2.3M345.8 337.1l-0.9 5.7M364.0 340.5l3.4 1.0M371.6 331.6l-2.6 7.5M355.7 331.8l-1.1 3.2M380.8 343.2l-3.3 4.8M405.0 347.8l0.2 6.2M364.9 344.4l7.9 2.4M348.5 334.8l3.2 1.0M408.9 339.0l-2.5 7.3M376.3 340.2l7.0 2.2M399.7 339.8l-1.2 3.4M368.4 352.0l2.9 0.9M401.0 348.7l3.7 2.6M388.3 351.1l-2.8 8.2M369.0 340.9l-0.4 7.0M344.7 346.5l-2.4 6.9M343.3 349.3l6.2 0.7M343.4 349.8l-1.5 4.5M347.3 352.2l-5.2 6.2M349.7 350.6l-1.9 3.9M348.3 346.5l3.9 1.2M350.6 348.3l-1.3 3.8M341.6 349.4l-4.2 5.2M339.7 349.9l-3.0 5.0M343.5 352.1l8.2 2.5M313.8 345.2l-2.4 4.7M312.6 350.0l-0.9 7.7M308.4 341.5l-0.2 3.4M314.0 346.8l5.2 2.7M309.6 339.7l-1.7 4.9M412.9 337.5l8.1 2.5M495.1 297.3l-4.7 7.1M501.7 301.7l-1.8 5.4M503.5 298.7l-2.8 6.3M493.4 296.4l3.2 1.0M503.4 293.7l3.0 2.3M499.5 296.7l-1.4 4.1M500.4 302.1l7.6 2.4M499.0 297.7l-1.9 5.6M499.6 300.4l6.2 1.9M506.9 291.9l5.2 3.9M507.8 294.2l6.0 1.9M495.9 297.4l7.1 3.2M500.4 298.7l-4.0 7.6M507.4 294.4l8.2 2.5M537.3 245.2l3.9 1.2M547.4 233.7l8.2 2.5M539.5 239.2l6.3 2.0M540.3 235.9l-2.2 6.4M545.5 233.2l6.4 2.0M546.4 229.9l-1.0 3.0M539.3 242.5l-0.7 7.3M532.4 229.8l-1.8 5.3M535.1 246.9l-2.4 7.0M546.3 227.5l3.1 1.4M538.6 238.4l6.2 -0.1M538.5 228.7l6.3 1.6M540.0 229.0l-2.7 4.4M539.6 241.4l3.9 1.2M534.3 241.8l-1.5 4.3M534.5 236.7l7.3 2.3M533.3 207.8l-1.5 3.5M536.8 210.6l-1.4 4.0M533.4 216.1l0.1 8.6M535.4 212.7l3.7 1.3M537.1 224.2l-1.4 4.3M533.4 214.2l-1.0 3.0M565.6 340.9l-1.3 3.7M560.1 339.8l3.9 3.1M557.1 342.5l7.9 2.5M557.0 345.4l5.8 2.8M558.9 337.1l8.3 2.6M560.5 345.4l5.5 3.5M541.1 348.1l8.8 1.6M535.7 348.4l-2.8 8.2M543.6 348.7l8.3 2.6M544.4 349.2l-2.9 8.4M424.0 184.1l-1.7 5.0M425.8 174.2l-2.2 6.4M423.7 173.5l5.6 3.7M519.0 160.2l4.0 2.5M519.2 159.7l-2.8 8.1M514.1 168.6l4.8 1.5M512.5 166.7l-1.2 3.6M516.5 164.8l4.4 2.2M518.2 161.8l5.2 1.6M425.4 242.8l8.0 2.5M439.3 246.4l0.3 5.5M426.5 248.7l-2.5 7.2M428.8 245.2l8.8 1.6M419.2 240.6l-2.6 7.5M416.6 248.6l-2.5 7.7M424.0 243.8l7.9 2.5M438.4 244.3l-2.7 8.0M422.9 249.3l6.9 0.2M435.7 236.7l3.3 1.0M433.5 241.5l4.0 2.0M431.1 237.2l4.2 1.3M424.9 246.8l-1.7 5.0M326.8 161.3l7.4 2.7M328.0 162.6l4.9 4.1M326.3 165.6l4.1 1.3M324.5 163.4l6.8 4.1M324.7 166.1l8.9 -0.4M328.4 169.9l-2.1 6.3M323.5 165.2l-1.6 4.8M331.0 170.9l-1.6 5.2M327.4 178.5l2.9 0.9M308.5 142.3l-1.4 3.3M308.7 160.5l6.9 2.2" stroke="#fff" stroke-width="0.9" stroke-opacity="0.8" fill="none"/>
</svg></div>
<svg style="left:0;top:0" width="800" height="456" viewBox="0 0 800 456"><path d="M59.5 197.3h2.2l-1.1 1.3z" fill="#cfcfcf"/><g transform="translate(5 94.8) scale(0.78)"><rect x="-3.6" y="-3.8" width="6" height="6.8" fill="#e8e8e8"/><circle cx="2.4" cy="2.6" r="1.9" fill="#3a9a4a"/><path d="M1.4 2.6H3.4M2.4 1.6V3.6" stroke="#fff" stroke-width=".6"/></g><g transform="translate(17 94.8) scale(0.78)"><g transform="scale(.8)"><path d="M-4.2 -.6A4.3 4.3 0 0 1 3.6 -2.6" stroke="#4a90d8" stroke-width="1.9" fill="none"/><path d="M4.2 .6A4.3 4.3 0 0 1 -3.6 2.6" stroke="#4a90d8" stroke-width="1.9" fill="none"/><path d="M5.4 -5V-.8H1.4ZM-5.4 5V.8H-1.4Z" fill="#4a90d8"/></g></g><g transform="translate(29 94.8) scale(0.78)"><path d="M-4 -3.8H4V-2.4H-4Z" fill="#e8c832"/><path d="M-3.8 -2.2H3.8L.9 1V4.2H-.9V1Z" fill="#4a90d8"/></g><g transform="translate(40.5 94.8) scale(0.78)"><rect x="-2.8" y="-3.8" width="2.6" height="2.2" fill="#e8962a"/><rect x="-2.8" y="-.8" width="2.6" height="2.2" fill="#4a4a4a" stroke="#e8962a" stroke-width=".5"/><rect x="-2.8" y="2.2" width="2.6" height="2" fill="#e8962a"/><path d="M1.8 4V-2" stroke="#4a90d8" stroke-width="1.3"/><path d="M1.8 -4.2L3.6 -1.6H0Z" fill="#4a90d8"/></g><g transform="translate(52 94.8) scale(0.78)"><circle r="3.8" fill="#4a90e0"/><path d="M0 -.8V2.2M0 -2.4V-1.8" stroke="#fff" stroke-width="1"/></g><g transform="translate(13.4 106.8) scale(0.88)"><path d="M0 -4L1.1 -1.3L4 -1.1L1.8 .8L2.5 3.6L0 2.1L-2.5 3.6L-1.8 .8L-4 -1.1L-1.1 -1.3Z" fill="#f8e030" stroke="#c8a818" stroke-width=".3"/></g><g transform="translate(13.4 115) scale(0.88)"><rect x="-3.2" y="-3.2" width="6.4" height="6.4" fill="#e8e8e8"/><rect x=".6" y="-3.2" width="1.4" height="3.2" fill="#3a78c8"/><path d="M-1.2 -3.2V3.2" stroke="#999" stroke-width=".4"/></g><g transform="translate(13.4 123.1) scale(0.88)"><path d="M-3.4 -2.8H-.8L-.2 -2H3.4V3.2H-3.4Z" fill="#ececec"/><path d="M-1.4 1L0 -.4L1.4 1V2.4H-1.4Z" fill="#555"/></g><g transform="translate(13.4 131.2) scale(0.88)"><path d="M-3.4 -2.8H-.8L-.2 -2H3.4V3.2H-3.4Z" fill="#ececec"/></g><g transform="translate(13.4 139.6) scale(0.88)"><path d="M-3.4 -2.8H-.8L-.2 -2H3.4V3.2H-3.4Z" fill="#ececec"/></g><g transform="translate(5 158.1) scale(0.78)"><path d="M-4.4 4.4V-4.4L4.4 4.4ZM-2.6 2.6V0L0 2.6Z" fill="#4b4842" fill-rule="evenodd"/><path d="M4 -4V4.4" stroke="#4b4842" stroke-width="1"/></g><g transform="translate(19.4 158.1) scale(0.78)"><rect x="-3.6" y="-1.2" width="7.2" height="5.4" rx=".8" fill="none" stroke="#403c38" stroke-width=".9"/><path d="M-2 -1.2V-3Q-2 -4.4 0 -4.4Q2 -4.4 2 -3V-1.2" stroke="#403c38" stroke-width=".9" fill="none"/><path d="M0 0V2.4" stroke="#4a4640" stroke-width=".9"/></g><g transform="translate(30.6 158.1) scale(0.78)"><path d="M-4 -3.6L3.6 -.6M-3.6 1L4 4M-1.6 -2.6L-.4 2.4" stroke="#4b4842" stroke-width=".9" fill="none"/></g><g transform="translate(42.5 158.1) scale(0.78)"><path d="M-4 -3.6L4 -.2L-3.2 2.4M-.6 -3.6L.6 4" stroke="#4b4842" stroke-width=".9" fill="none"/></g><g transform="translate(55.6 158.1) scale(0.78)"><circle cx="-.4" cy="-.4" r="3" fill="none" stroke="#55523c" stroke-width="1.6"/><path d="M1.8 1.8L4.4 4.4" stroke="#55523c" stroke-width="1.3"/></g><g transform="translate(69.75 158.1) scale(0.78)"><path d="M-3.6 -3.6L-.6 -.6" stroke="#7a786a" stroke-width="1"/><rect x="-.8" y="-.6" width="4.6" height="4.2" fill="#5c5a50"/><path d="M-4.4 -3.4H-2.4" stroke="#7a786a" stroke-width=".7"/></g><g transform="translate(5.6 197.3) scale(0.78)"><path d="M-4 1L-1 -3L3 0L0 4Z" fill="#e8c832"/><path d="M-4.4 2.6L-2.6 0L0 2L-1.8 4.4Z" fill="#d84830"/><path d="M-3 -1L-1 -3.4L1 -2L-1 .6Z" fill="#4a88d0"/><path d="M0 1L4.4 -3.6" stroke="#e8a830" stroke-width="1.4"/></g><g transform="translate(17.5 197.3) scale(0.78)"><rect x="-3.2" y="-3.8" width="3.2" height="6.4" fill="#c8d4e4"/><rect x="-.4" y="-3.8" width="3.2" height="6.4" fill="#e8e8e8"/><path d="M-3.6 2.8H3" stroke="#888" stroke-width=".8"/><rect x="1" y="1.6" width="3" height="3" rx=".4" fill="#3a9a4a"/></g><g transform="translate(29 197.3) scale(0.78)"><path d="M-4.4 0Q0 -4.4 4.4 0Q0 4.4 -4.4 0Z" fill="#e8e8e8"/><circle r="1.9" fill="#3a78c8"/><circle r=".8" fill="#1a2a4a"/><path d="M-3 3.4Q0 4.6 3.6 3" stroke="#777" stroke-width=".6" fill="none"/></g><g transform="translate(40.6 197.3) scale(0.78)"><path d="M-4 -3.8H4V-2.4H-4Z" fill="#e8c832"/><path d="M-3.8 -2.2H3.8L.9 1V4.2H-.9V1Z" fill="#4a90d8"/></g><g transform="translate(52.5 197.3) scale(0.78)"><path d="M-1.6 -4H-3.6Q-4.4 -2 -3.4 -.2" stroke="#6a2a9a" stroke-width="1.1" fill="none"/><rect x="-.6" y=".2" width="4" height="4" fill="#d0d0d0"/><path d="M-.6 .2H3.4" stroke="#4a6ab8" stroke-width=".8"/></g><g transform="translate(69.4 197.3) scale(0.78)"><rect x="-2.8" y="-3.8" width="2.6" height="2.2" fill="#e8962a"/><rect x="-2.8" y="-.8" width="2.6" height="2.2" fill="#4a4a4a" stroke="#e8962a" stroke-width=".5"/><rect x="-2.8" y="2.2" width="2.6" height="2" fill="#e8962a"/><path d="M1.8 -4V2" stroke="#4a90d8" stroke-width="1.3"/><path d="M1.8 4.2L3.6 1.6H0Z" fill="#4a90d8"/></g><g transform="translate(81 197.3) scale(0.78)"><rect x="-2.8" y="-3.8" width="2.6" height="2.2" fill="#e8962a"/><rect x="-2.8" y="-.8" width="2.6" height="2.2" fill="#4a4a4a" stroke="#e8962a" stroke-width=".5"/><rect x="-2.8" y="2.2" width="2.6" height="2" fill="#e8962a"/><path d="M1.8 4V-2" stroke="#4a90d8" stroke-width="1.3"/><path d="M1.8 -4.2L3.6 -1.6H0Z" fill="#4a90d8"/></g><g transform="translate(92.75 197.3) scale(0.78)"><rect x="-3.8" y="-4" width="7" height="6.6" fill="#ececec"/><path d="M-3.8 -2H3.2" stroke="#bbb" stroke-width=".5"/><circle cx="3" cy="2.8" r="1.9" fill="#e03838"/><path d="M2 2.8H4" stroke="#fff" stroke-width=".7"/></g><g transform="translate(693.3 94.6) scale(0.85)"><circle cx="-2.2" cy="-2" r="2" fill="#d83030"/><rect x="-.6" y="0" width="4.2" height="3.6" fill="#6a6a6a"/><path d="M-2 0L1 2" stroke="#9a9a9a" stroke-width=".7"/><circle cx="2.6" cy="-2.4" r="1.2" fill="#4a88d0"/></g><g transform="translate(705 94.6) scale(0.9)"><g transform="scale(.72)"><path d="M-1 -5H2.2Q3.4 -5 3.4 -3.8V-.6H-1.6Q-2.6 -.6 -2.6 .6V1.6H-4Q-5 1.6 -5 .4V-1.6Q-5 -2.8 -3.8 -2.8H-1Z" fill="#3a78b8"/><path d="M1 5H-2.2Q-3.4 5 -3.4 3.8V.8H1.6Q2.6 .8 2.6 -.4V-1.6H4Q5 -1.6 5 -.4V1.8Q5 3 3.8 3H1Z" fill="#f0c83a"/></g></g><g transform="translate(716.2 94.6) scale(0.9)"><circle r="3.5" fill="#f0f0f0"/><path d="M0 -2.2V.2L1.6 1.2" stroke="#333" stroke-width=".8" fill="none"/></g><g transform="translate(728 94.6) scale(0.9)"><path d="M-2.8 -3.8H1.2L2.8 -2.2V3.8H-2.8Z" fill="#f0f0f0"/><path d="M-1.6 -.6H1.6M-1.6 .8H1.6M-1.6 2.2H1.6" stroke="#999" stroke-width=".45"/></g><g transform="translate(742 94.6) scale(0.85)"><path d="M-3.8 -3.4H3.8V1.2H-.6L-2.6 3.4V1.2H-3.8Z" fill="#f0e050"/><path d="M2.4 3.8L4.2 1.6" stroke="#e8c832" stroke-width="1"/></g><g transform="translate(755.4 94.6) scale(0.85)"><path d="M-3.6 -3.6Q-1 -4.6 -.2 -2.4L3.8 2.4L2.6 3.8L-1.8 -.6Q-4 -.4 -4.2 -2.4L-2.6 -1.6L-1.8 -2.6Z" fill="#e0d0a0"/><path d="M0 -1L3.6 3" stroke="#e8c832" stroke-width=".9"/></g><g transform="translate(26 433.6) scale(1)"><rect x="-2.4" y="-3.4" width="4.8" height="6.8" fill="#4a80c8"/><path d="M-1.4 -1.6H1.4M-1.4 0H1.4M-1.4 1.6H1.4" stroke="#d8e4f4" stroke-width=".6"/></g><g transform="translate(57.8 433.6) scale(1)"><rect x="-3.6" y="-3.6" width="7.2" height="7.2" fill="#e8e8e8"/><path d="M-3.6 -3.6L3.6 3.6" stroke="#3a9a4a" stroke-width="1.4"/><circle cx="1.4" cy="-1.4" r="1.3" fill="#3a9a4a"/><rect x="-3" y="1" width="2.4" height="2" fill="#555"/></g><g transform="translate(90.2 433.6) scale(1)"><rect x="-3.6" y="-3.6" width="7.2" height="7.2" fill="#e8e8e8"/><path d="M-2.6 -2.6H0V0H2.6V2.8" stroke="#444" stroke-width="1" fill="none"/><circle cx="1.8" cy="-2" r="1.1" fill="#3a9a4a"/><circle cx="-2" cy="2" r="1.1" fill="#3a9a4a"/></g></svg>
</body></html>
